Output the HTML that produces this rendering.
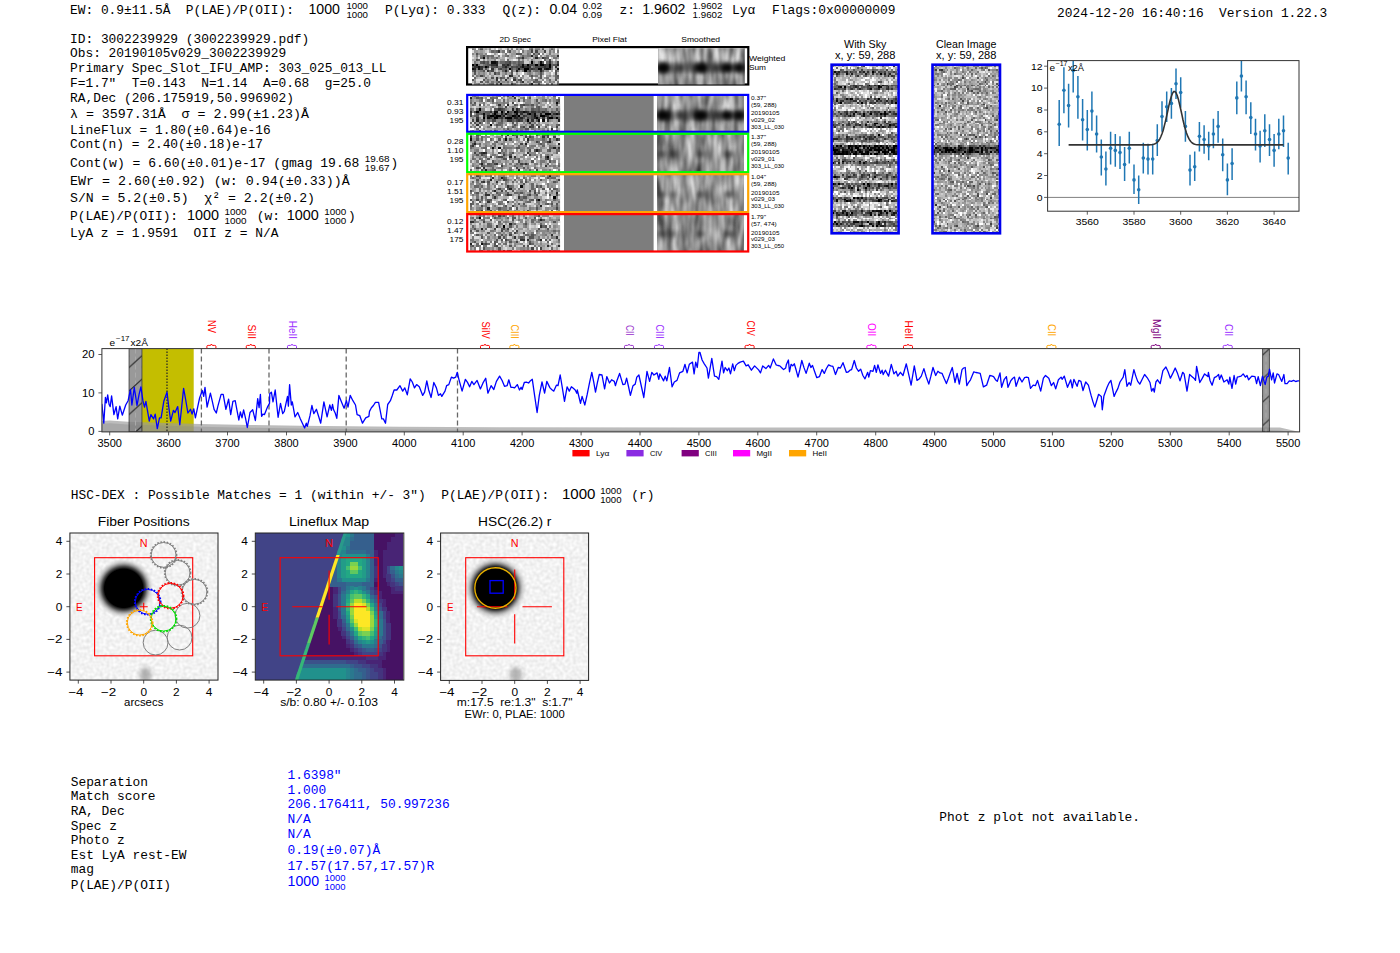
<!DOCTYPE html><html><head><meta charset="utf-8"><style>html,body{margin:0;padding:0;background:#fff;overflow:hidden}svg{display:block} text{white-space:pre}</style></head><body>
<svg width="1400" height="953" viewBox="0 0 1400 953">
<rect width="1400" height="953" fill="#fff"/>
<defs>
<filter id="nz1" x="0" y="0" width="1" height="1" color-interpolation-filters="sRGB"><feTurbulence type="fractalNoise" baseFrequency="0.38" numOctaves="1" seed="3"/><feColorMatrix type="matrix" values="1.75 0 0 0 -0.245 1.75 0 0 0 -0.245 1.75 0 0 0 -0.245 0 0 0 0 1"/></filter>
<filter id="nz2" x="0" y="0" width="1" height="1" color-interpolation-filters="sRGB"><feTurbulence type="fractalNoise" baseFrequency="0.38" numOctaves="1" seed="11"/><feColorMatrix type="matrix" values="1.75 0 0 0 -0.245 1.75 0 0 0 -0.245 1.75 0 0 0 -0.245 0 0 0 0 1"/></filter>
<filter id="nz3" x="0" y="0" width="1" height="1" color-interpolation-filters="sRGB"><feTurbulence type="fractalNoise" baseFrequency="0.38" numOctaves="1" seed="21"/><feColorMatrix type="matrix" values="1.75 0 0 0 -0.265 1.75 0 0 0 -0.265 1.75 0 0 0 -0.265 0 0 0 0 1"/></filter>
<filter id="nz4" x="0" y="0" width="1" height="1" color-interpolation-filters="sRGB"><feTurbulence type="fractalNoise" baseFrequency="0.38" numOctaves="1" seed="37"/><feColorMatrix type="matrix" values="1.75 0 0 0 -0.265 1.75 0 0 0 -0.265 1.75 0 0 0 -0.265 0 0 0 0 1"/></filter>
<filter id="nz5" x="0" y="0" width="1" height="1" color-interpolation-filters="sRGB"><feTurbulence type="fractalNoise" baseFrequency="0.38" numOctaves="1" seed="53"/><feColorMatrix type="matrix" values="1.75 0 0 0 -0.265 1.75 0 0 0 -0.265 1.75 0 0 0 -0.265 0 0 0 0 1"/></filter>
<filter id="sm1" x="0" y="0" width="1" height="1" color-interpolation-filters="sRGB"><feTurbulence type="fractalNoise" baseFrequency="0.13 0.035" numOctaves="2" seed="5"/><feColorMatrix type="matrix" values="0.85 0 0 0 0.155 0.85 0 0 0 0.155 0.85 0 0 0 0.155 0 0 0 0 1"/></filter>
<filter id="sm2" x="0" y="0" width="1" height="1" color-interpolation-filters="sRGB"><feTurbulence type="fractalNoise" baseFrequency="0.13 0.035" numOctaves="2" seed="17"/><feColorMatrix type="matrix" values="0.85 0 0 0 0.155 0.85 0 0 0 0.155 0.85 0 0 0 0.155 0 0 0 0 1"/></filter>
<filter id="sm3" x="0" y="0" width="1" height="1" color-interpolation-filters="sRGB"><feTurbulence type="fractalNoise" baseFrequency="0.13 0.035" numOctaves="2" seed="29"/><feColorMatrix type="matrix" values="0.85 0 0 0 0.145 0.85 0 0 0 0.145 0.85 0 0 0 0.145 0 0 0 0 1"/></filter>
<filter id="sm4" x="0" y="0" width="1" height="1" color-interpolation-filters="sRGB"><feTurbulence type="fractalNoise" baseFrequency="0.13 0.035" numOctaves="2" seed="41"/><feColorMatrix type="matrix" values="0.85 0 0 0 0.145 0.85 0 0 0 0.145 0.85 0 0 0 0.145 0 0 0 0 1"/></filter>
<filter id="sm5" x="0" y="0" width="1" height="1" color-interpolation-filters="sRGB"><feTurbulence type="fractalNoise" baseFrequency="0.13 0.035" numOctaves="2" seed="61"/><feColorMatrix type="matrix" values="0.85 0 0 0 0.145 0.85 0 0 0 0.145 0.85 0 0 0 0.145 0 0 0 0 1"/></filter>
<filter id="sky" x="0" y="0" width="1" height="1" color-interpolation-filters="sRGB"><feTurbulence type="fractalNoise" baseFrequency="0.4" numOctaves="1" seed="7"/><feColorMatrix type="matrix" values="1.9 0 0 0 -0.230 1.9 0 0 0 -0.230 1.9 0 0 0 -0.230 0 0 0 0 1"/></filter>
<filter id="cln" x="0" y="0" width="1" height="1" color-interpolation-filters="sRGB"><feTurbulence type="fractalNoise" baseFrequency="0.5" numOctaves="1" seed="9"/><feColorMatrix type="matrix" values="1.25 0 0 0 0.015 1.25 0 0 0 0.015 1.25 0 0 0 0.015 0 0 0 0 1"/></filter>
<filter id="bg1" x="0" y="0" width="1" height="1" color-interpolation-filters="sRGB"><feTurbulence type="fractalNoise" baseFrequency="0.3" numOctaves="1" seed="13"/><feColorMatrix type="matrix" values="0.16 0 0 0 0.870 0.16 0 0 0 0.870 0.16 0 0 0 0.870 0 0 0 0 1"/></filter>
<filter id="blur2" x="-50%" y="-50%" width="200%" height="200%"><feGaussianBlur stdDeviation="2"/></filter>
<filter id="blur3" x="-50%" y="-50%" width="200%" height="200%"><feGaussianBlur stdDeviation="3"/></filter>
<filter id="soft" x="0" y="0" width="1" height="1"><feGaussianBlur stdDeviation="0.45"/></filter>
<filter id="blur1" x="-50%" y="-50%" width="200%" height="200%"><feGaussianBlur stdDeviation="1.2"/></filter>
<pattern id="hatch" patternUnits="userSpaceOnUse" x="129.1" y="367.5" width="12.8" height="23.5"><path d="M-1 0.92 L13.8 -12.7 M-1 24.42 L13.8 10.8" stroke="#222" stroke-width="1"/></pattern>
<pattern id="hatch2" patternUnits="userSpaceOnUse" x="1262.6" y="355.1" width="6.8" height="23.5"><path d="M-1 0.92 L7.8 -7.2 M-1 24.42 L7.8 16.3" stroke="#222" stroke-width="1"/></pattern>
</defs>
<text x="70.0" y="14.0" font-family="'Liberation Mono', monospace" font-size="13.6" fill="#000" text-anchor="start" textLength="223.9" lengthAdjust="spacingAndGlyphs">EW: 0.9±11.5Å  P(LAE)/P(OII):</text>
<text x="308.5" y="14.0" font-family="'Liberation Sans', sans-serif" font-size="13.99" fill="#000" text-anchor="start" textLength="31.5" lengthAdjust="spacingAndGlyphs" >1000</text>
<text x="346.5" y="8.5" font-family="'Liberation Sans', sans-serif" font-size="9.01" fill="#000" text-anchor="start" textLength="21.5" lengthAdjust="spacingAndGlyphs" >1000</text>
<text x="346.5" y="17.5" font-family="'Liberation Sans', sans-serif" font-size="9.01" fill="#000" text-anchor="start" textLength="21.5" lengthAdjust="spacingAndGlyphs" >1000</text>
<text x="385.0" y="14.0" font-family="'Liberation Mono', monospace" font-size="13.6" fill="#000" text-anchor="start" textLength="100.4" lengthAdjust="spacingAndGlyphs">P(Lyα): 0.333</text>
<text x="502.5" y="14.0" font-family="'Liberation Mono', monospace" font-size="13.6" fill="#000" text-anchor="start" textLength="38.6" lengthAdjust="spacingAndGlyphs">Q(z):</text>
<text x="549.5" y="14.0" font-family="'Liberation Sans', sans-serif" font-size="13.99" fill="#000" text-anchor="start" textLength="27.5" lengthAdjust="spacingAndGlyphs" >0.04</text>
<text x="582.5" y="8.5" font-family="'Liberation Sans', sans-serif" font-size="9.01" fill="#000" text-anchor="start" textLength="19.5" lengthAdjust="spacingAndGlyphs" >0.02</text>
<text x="582.5" y="17.5" font-family="'Liberation Sans', sans-serif" font-size="9.01" fill="#000" text-anchor="start" textLength="19.5" lengthAdjust="spacingAndGlyphs" >0.09</text>
<text x="619.5" y="14.0" font-family="'Liberation Mono', monospace" font-size="13.6" fill="#000" text-anchor="start" textLength="15.4" lengthAdjust="spacingAndGlyphs">z:</text>
<text x="642.2" y="14.0" font-family="'Liberation Sans', sans-serif" font-size="13.99" fill="#000" text-anchor="start" textLength="43.2" lengthAdjust="spacingAndGlyphs" >1.9602</text>
<text x="692.6" y="8.5" font-family="'Liberation Sans', sans-serif" font-size="9.01" fill="#000" text-anchor="start" textLength="29.8" lengthAdjust="spacingAndGlyphs" >1.9602</text>
<text x="692.6" y="17.5" font-family="'Liberation Sans', sans-serif" font-size="9.01" fill="#000" text-anchor="start" textLength="29.8" lengthAdjust="spacingAndGlyphs" >1.9602</text>
<text x="732.0" y="14.0" font-family="'Liberation Mono', monospace" font-size="13.6" fill="#000" text-anchor="start" textLength="23.2" lengthAdjust="spacingAndGlyphs">Lyα</text>
<text x="772.0" y="14.0" font-family="'Liberation Mono', monospace" font-size="13.6" fill="#000" text-anchor="start" textLength="123.5" lengthAdjust="spacingAndGlyphs">Flags:0x00000009</text>
<text x="1057.0" y="16.8" font-family="'Liberation Mono', monospace" font-size="13.6" fill="#000" text-anchor="start" textLength="270.2" lengthAdjust="spacingAndGlyphs">2024-12-20 16:40:16  Version 1.22.3</text>
<text x="70.0" y="42.9" font-family="'Liberation Mono', monospace" font-size="13.6" fill="#000" text-anchor="start" textLength="239.3" lengthAdjust="spacingAndGlyphs">ID: 3002239929 (3002239929.pdf)</text>
<text x="70.0" y="56.8" font-family="'Liberation Mono', monospace" font-size="13.6" fill="#000" text-anchor="start" textLength="216.2" lengthAdjust="spacingAndGlyphs">Obs: 20190105v029_3002239929</text>
<text x="70.0" y="71.8" font-family="'Liberation Mono', monospace" font-size="13.6" fill="#000" text-anchor="start" textLength="316.5" lengthAdjust="spacingAndGlyphs">Primary Spec_Slot_IFU_AMP: 303_025_013_LL</text>
<text x="70.0" y="86.8" font-family="'Liberation Mono', monospace" font-size="13.6" fill="#000" text-anchor="start" textLength="301.1" lengthAdjust="spacingAndGlyphs">F=1.7"  T=0.143  N=1.14  A=0.68  g=25.0</text>
<text x="70.0" y="101.8" font-family="'Liberation Mono', monospace" font-size="13.6" fill="#000" text-anchor="start" textLength="223.9" lengthAdjust="spacingAndGlyphs">RA,Dec (206.175919,50.996902)</text>
<text x="70.0" y="118.0" font-family="'Liberation Mono', monospace" font-size="13.6" fill="#000" text-anchor="start" textLength="239.0" lengthAdjust="spacingAndGlyphs">λ = 3597.31Å  σ = 2.99(±1.23)Å</text>
<text x="70.0" y="133.9" font-family="'Liberation Mono', monospace" font-size="13.6" fill="#000" text-anchor="start" textLength="200.7" lengthAdjust="spacingAndGlyphs">LineFlux = 1.80(±0.64)e-16</text>
<text x="70.0" y="148.4" font-family="'Liberation Mono', monospace" font-size="13.6" fill="#000" text-anchor="start" textLength="193.0" lengthAdjust="spacingAndGlyphs">Cont(n) = 2.40(±0.18)e-17</text>
<text x="70.0" y="166.9" font-family="'Liberation Mono', monospace" font-size="13.6" fill="#000" text-anchor="start" textLength="289.4" lengthAdjust="spacingAndGlyphs">Cont(w) = 6.60(±0.01)e-17 (gmag 19.68</text>
<text x="70.0" y="184.6" font-family="'Liberation Mono', monospace" font-size="13.6" fill="#000" text-anchor="start" textLength="279.7" lengthAdjust="spacingAndGlyphs">EWr = 2.60(±0.92) (w: 0.94(±0.33))Å</text>
<text x="70.0" y="202.4" font-family="'Liberation Mono', monospace" font-size="13.6" fill="#000" text-anchor="start" textLength="245.0" lengthAdjust="spacingAndGlyphs">S/N = 5.2(±0.5)  χ² = 2.2(±0.2)</text>
<text x="70.0" y="220.0" font-family="'Liberation Mono', monospace" font-size="13.6" fill="#000" text-anchor="start" textLength="108.1" lengthAdjust="spacingAndGlyphs">P(LAE)/P(OII):</text>
<text x="70.0" y="236.5" font-family="'Liberation Mono', monospace" font-size="13.6" fill="#000" text-anchor="start" textLength="208.4" lengthAdjust="spacingAndGlyphs">LyA z = 1.9591  OII z = N/A</text>
<text x="364.8" y="161.5" font-family="'Liberation Sans', sans-serif" font-size="9.01" fill="#000" text-anchor="start" textLength="24.8" lengthAdjust="spacingAndGlyphs" >19.68</text>
<text x="364.8" y="170.5" font-family="'Liberation Sans', sans-serif" font-size="9.01" fill="#000" text-anchor="start" textLength="24.8" lengthAdjust="spacingAndGlyphs" >19.67</text>
<text x="390.5" y="166.9" font-family="'Liberation Mono', monospace" font-size="13.6" fill="#000" text-anchor="start" textLength="7.7" lengthAdjust="spacingAndGlyphs">)</text>
<text x="187.0" y="220.0" font-family="'Liberation Sans', sans-serif" font-size="13.99" fill="#000" text-anchor="start" textLength="32.0" lengthAdjust="spacingAndGlyphs" >1000</text>
<text x="224.6" y="215.0" font-family="'Liberation Sans', sans-serif" font-size="9.01" fill="#000" text-anchor="start" textLength="22.0" lengthAdjust="spacingAndGlyphs" >1000</text>
<text x="224.6" y="224.0" font-family="'Liberation Sans', sans-serif" font-size="9.01" fill="#000" text-anchor="start" textLength="22.0" lengthAdjust="spacingAndGlyphs" >1000</text>
<text x="256.8" y="220.0" font-family="'Liberation Mono', monospace" font-size="13.6" fill="#000" text-anchor="start" textLength="23.2" lengthAdjust="spacingAndGlyphs">(w:</text>
<text x="286.8" y="220.0" font-family="'Liberation Sans', sans-serif" font-size="13.99" fill="#000" text-anchor="start" textLength="32.0" lengthAdjust="spacingAndGlyphs" >1000</text>
<text x="324.3" y="215.0" font-family="'Liberation Sans', sans-serif" font-size="9.01" fill="#000" text-anchor="start" textLength="22.0" lengthAdjust="spacingAndGlyphs" >1000</text>
<text x="324.3" y="224.0" font-family="'Liberation Sans', sans-serif" font-size="9.01" fill="#000" text-anchor="start" textLength="22.0" lengthAdjust="spacingAndGlyphs" >1000</text>
<text x="348.0" y="220.0" font-family="'Liberation Mono', monospace" font-size="13.6" fill="#000" text-anchor="start" textLength="7.7" lengthAdjust="spacingAndGlyphs">)</text>
<text x="515.2" y="42.2" font-family="'Liberation Sans', sans-serif" font-size="8.06" fill="#000" text-anchor="middle" textLength="31.6" lengthAdjust="spacingAndGlyphs" >2D Spec</text>
<text x="609.5" y="42.2" font-family="'Liberation Sans', sans-serif" font-size="8.06" fill="#000" text-anchor="middle" textLength="34.5" lengthAdjust="spacingAndGlyphs" >Pixel Flat</text>
<text x="700.7" y="42.2" font-family="'Liberation Sans', sans-serif" font-size="8.06" fill="#000" text-anchor="middle" textLength="38.8" lengthAdjust="spacingAndGlyphs" >Smoothed</text>
<rect x="467.1" y="47.1" width="281.2" height="37.4" fill="#fff" stroke="#000" stroke-width="2.2"/>
<svg x="471.5" y="48.2" width="87.5" height="36.2" overflow="hidden"><g filter="url(#soft)"><g transform="scale(2.2)" shape-rendering="crispEdges">
<path fill="#000000" d="M27 6h1v1h-1zM0 7h1v1h-1zM2 7h1v1h-1zM25 7h1v1h-1zM29 7h1v1h-1zM31 7h1v1h-1zM32 7h1v1h-1zM35 7h1v1h-1zM6 8h1v1h-1zM35 8h1v1h-1zM17 9h1v1h-1zM24 9h1v1h-1zM25 9h1v1h-1zM30 9h1v1h-1zM24 10h1v1h-1z"/>
<path fill="#111111" d="M5 4h1v1h-1zM9 6h1v1h-1zM10 6h1v1h-1zM31 6h1v1h-1zM23 7h1v1h-1zM3 8h1v1h-1zM23 8h1v1h-1zM0 9h1v1h-1zM3 9h1v1h-1zM21 9h1v1h-1zM31 9h1v1h-1zM34 9h1v1h-1zM39 9h1v1h-1z"/>
<path fill="#222222" d="M27 3h1v1h-1zM29 4h1v1h-1zM11 6h1v1h-1zM11 7h1v1h-1zM16 7h1v1h-1zM39 7h1v1h-1zM15 8h1v1h-1zM25 8h1v1h-1zM1 9h1v1h-1zM33 9h1v1h-1zM35 9h1v1h-1zM15 10h1v1h-1zM20 10h1v1h-1zM31 10h1v1h-1zM17 12h1v1h-1zM13 16h1v1h-1zM27 16h1v1h-1z"/>
<path fill="#333333" d="M12 1h1v1h-1zM39 3h1v1h-1zM23 4h1v1h-1zM32 4h1v1h-1zM35 6h1v1h-1zM9 7h1v1h-1zM10 7h1v1h-1zM14 7h1v1h-1zM33 7h1v1h-1zM1 8h1v1h-1zM2 8h1v1h-1zM4 8h1v1h-1zM7 8h1v1h-1zM22 8h1v1h-1zM24 8h1v1h-1zM26 8h1v1h-1zM33 8h1v1h-1zM38 8h1v1h-1zM4 9h1v1h-1zM9 9h1v1h-1zM27 9h1v1h-1zM7 10h1v1h-1zM18 12h1v1h-1zM11 13h1v1h-1zM11 14h1v1h-1zM15 14h1v1h-1zM19 14h1v1h-1zM23 15h1v1h-1z"/>
<path fill="#444444" d="M27 1h1v1h-1zM29 1h1v1h-1zM33 1h1v1h-1zM35 5h1v1h-1zM5 6h1v1h-1zM17 6h1v1h-1zM39 6h1v1h-1zM1 7h1v1h-1zM15 7h1v1h-1zM17 7h1v1h-1zM21 7h1v1h-1zM26 7h1v1h-1zM27 7h1v1h-1zM34 7h1v1h-1zM11 8h1v1h-1zM14 8h1v1h-1zM18 8h1v1h-1zM20 8h1v1h-1zM29 8h1v1h-1zM30 8h1v1h-1zM31 8h1v1h-1zM32 8h1v1h-1zM34 8h1v1h-1zM13 9h1v1h-1zM26 9h1v1h-1zM28 9h1v1h-1zM1 10h1v1h-1zM9 10h1v1h-1zM26 10h1v1h-1zM10 11h1v1h-1zM4 12h1v1h-1zM22 14h1v1h-1zM18 16h1v1h-1z"/>
<path fill="#555555" d="M4 0h1v1h-1zM27 0h1v1h-1zM32 0h1v1h-1zM17 1h1v1h-1zM2 2h1v1h-1zM20 2h1v1h-1zM21 2h1v1h-1zM22 2h1v1h-1zM28 2h1v1h-1zM30 2h1v1h-1zM5 3h1v1h-1zM21 4h1v1h-1zM33 4h1v1h-1zM2 5h1v1h-1zM4 6h1v1h-1zM7 6h1v1h-1zM15 6h1v1h-1zM16 6h1v1h-1zM21 6h1v1h-1zM32 6h1v1h-1zM7 7h1v1h-1zM8 7h1v1h-1zM22 7h1v1h-1zM24 7h1v1h-1zM28 7h1v1h-1zM30 7h1v1h-1zM37 7h1v1h-1zM38 7h1v1h-1zM0 8h1v1h-1zM5 8h1v1h-1zM9 8h1v1h-1zM10 8h1v1h-1zM16 8h1v1h-1zM19 8h1v1h-1zM21 8h1v1h-1zM6 9h1v1h-1zM12 9h1v1h-1zM15 9h1v1h-1zM18 9h1v1h-1zM20 9h1v1h-1zM22 9h1v1h-1zM23 9h1v1h-1zM29 9h1v1h-1zM5 10h1v1h-1zM18 10h1v1h-1zM32 10h1v1h-1zM38 10h1v1h-1zM1 11h1v1h-1zM18 11h1v1h-1zM31 11h1v1h-1zM38 11h1v1h-1zM27 12h1v1h-1zM31 12h1v1h-1zM39 12h1v1h-1zM9 13h1v1h-1zM13 13h1v1h-1zM16 13h1v1h-1zM19 13h1v1h-1zM31 13h1v1h-1zM0 14h1v1h-1zM5 14h1v1h-1zM21 14h1v1h-1zM29 14h1v1h-1zM38 14h1v1h-1zM4 15h1v1h-1zM12 15h1v1h-1zM28 15h1v1h-1zM11 16h1v1h-1zM30 16h1v1h-1z"/>
<path fill="#666666" d="M36 0h1v1h-1zM9 1h1v1h-1zM11 1h1v1h-1zM7 3h1v1h-1zM9 3h1v1h-1zM16 3h1v1h-1zM23 3h1v1h-1zM29 3h1v1h-1zM4 4h1v1h-1zM7 4h1v1h-1zM11 4h1v1h-1zM22 4h1v1h-1zM34 4h1v1h-1zM3 5h1v1h-1zM16 5h1v1h-1zM33 5h1v1h-1zM6 6h1v1h-1zM13 6h1v1h-1zM14 6h1v1h-1zM19 6h1v1h-1zM22 6h1v1h-1zM23 6h1v1h-1zM34 6h1v1h-1zM6 7h1v1h-1zM20 7h1v1h-1zM36 7h1v1h-1zM28 8h1v1h-1zM36 8h1v1h-1zM14 9h1v1h-1zM0 10h1v1h-1zM8 10h1v1h-1zM14 10h1v1h-1zM25 10h1v1h-1zM29 10h1v1h-1zM12 11h1v1h-1zM38 12h1v1h-1zM1 13h1v1h-1zM6 13h1v1h-1zM14 13h1v1h-1zM38 13h1v1h-1zM39 13h1v1h-1zM35 14h1v1h-1zM7 15h1v1h-1zM22 15h1v1h-1zM29 15h1v1h-1zM30 15h1v1h-1zM9 16h1v1h-1zM26 16h1v1h-1zM36 16h1v1h-1zM39 16h1v1h-1z"/>
<path fill="#777777" d="M0 0h1v1h-1zM16 0h1v1h-1zM18 0h1v1h-1zM20 0h1v1h-1zM22 0h1v1h-1zM26 0h1v1h-1zM29 0h1v1h-1zM30 0h1v1h-1zM10 1h1v1h-1zM14 1h1v1h-1zM16 1h1v1h-1zM23 1h1v1h-1zM35 1h1v1h-1zM39 1h1v1h-1zM15 2h1v1h-1zM25 2h1v1h-1zM35 2h1v1h-1zM2 3h1v1h-1zM4 3h1v1h-1zM8 3h1v1h-1zM12 3h1v1h-1zM15 3h1v1h-1zM25 3h1v1h-1zM26 3h1v1h-1zM34 3h1v1h-1zM9 4h1v1h-1zM30 4h1v1h-1zM37 4h1v1h-1zM38 4h1v1h-1zM21 5h1v1h-1zM27 5h1v1h-1zM1 6h1v1h-1zM18 6h1v1h-1zM20 6h1v1h-1zM30 6h1v1h-1zM36 6h1v1h-1zM3 7h1v1h-1zM5 7h1v1h-1zM19 7h1v1h-1zM12 8h1v1h-1zM13 8h1v1h-1zM17 8h1v1h-1zM2 9h1v1h-1zM19 9h1v1h-1zM32 9h1v1h-1zM36 9h1v1h-1zM4 10h1v1h-1zM16 10h1v1h-1zM21 10h1v1h-1zM23 10h1v1h-1zM28 10h1v1h-1zM30 10h1v1h-1zM39 10h1v1h-1zM11 11h1v1h-1zM15 11h1v1h-1zM26 11h1v1h-1zM0 12h1v1h-1zM2 12h1v1h-1zM5 12h1v1h-1zM21 12h1v1h-1zM26 12h1v1h-1zM29 12h1v1h-1zM27 13h1v1h-1zM34 13h1v1h-1zM7 14h1v1h-1zM13 14h1v1h-1zM6 15h1v1h-1zM9 15h1v1h-1zM11 15h1v1h-1zM16 15h1v1h-1zM20 15h1v1h-1zM31 15h1v1h-1zM35 15h1v1h-1zM39 15h1v1h-1zM3 16h1v1h-1zM8 16h1v1h-1zM19 16h1v1h-1z"/>
<path fill="#888888" d="M1 0h1v1h-1zM3 0h1v1h-1zM8 0h1v1h-1zM37 0h1v1h-1zM25 1h1v1h-1zM26 1h1v1h-1zM37 1h1v1h-1zM0 2h1v1h-1zM3 2h1v1h-1zM4 2h1v1h-1zM6 2h1v1h-1zM26 2h1v1h-1zM29 2h1v1h-1zM32 2h1v1h-1zM6 3h1v1h-1zM24 3h1v1h-1zM31 3h1v1h-1zM36 3h1v1h-1zM37 3h1v1h-1zM10 4h1v1h-1zM20 4h1v1h-1zM24 4h1v1h-1zM28 4h1v1h-1zM10 5h1v1h-1zM23 5h1v1h-1zM12 6h1v1h-1zM28 6h1v1h-1zM38 6h1v1h-1zM27 8h1v1h-1zM7 9h1v1h-1zM16 9h1v1h-1zM3 10h1v1h-1zM34 10h1v1h-1zM3 11h1v1h-1zM5 11h1v1h-1zM8 11h1v1h-1zM25 11h1v1h-1zM30 11h1v1h-1zM32 11h1v1h-1zM3 12h1v1h-1zM14 12h1v1h-1zM23 12h1v1h-1zM28 12h1v1h-1zM35 12h1v1h-1zM22 13h1v1h-1zM30 13h1v1h-1zM20 14h1v1h-1zM27 14h1v1h-1zM28 14h1v1h-1zM32 14h1v1h-1zM1 15h1v1h-1zM14 15h1v1h-1zM18 15h1v1h-1zM25 15h1v1h-1zM37 15h1v1h-1zM1 16h1v1h-1zM2 16h1v1h-1zM5 16h1v1h-1zM34 16h1v1h-1z"/>
<path fill="#999999" d="M6 0h1v1h-1zM35 0h1v1h-1zM1 1h1v1h-1zM2 1h1v1h-1zM4 1h1v1h-1zM8 1h1v1h-1zM13 1h1v1h-1zM19 1h1v1h-1zM10 2h1v1h-1zM18 2h1v1h-1zM19 2h1v1h-1zM14 3h1v1h-1zM18 3h1v1h-1zM22 3h1v1h-1zM28 3h1v1h-1zM38 3h1v1h-1zM2 4h1v1h-1zM8 4h1v1h-1zM12 4h1v1h-1zM25 4h1v1h-1zM31 4h1v1h-1zM39 4h1v1h-1zM5 5h1v1h-1zM7 5h1v1h-1zM13 5h1v1h-1zM14 5h1v1h-1zM34 5h1v1h-1zM2 6h1v1h-1zM8 6h1v1h-1zM4 7h1v1h-1zM18 7h1v1h-1zM8 8h1v1h-1zM5 9h1v1h-1zM10 9h1v1h-1zM38 9h1v1h-1zM2 10h1v1h-1zM12 10h1v1h-1zM19 10h1v1h-1zM27 10h1v1h-1zM33 10h1v1h-1zM4 11h1v1h-1zM14 11h1v1h-1zM17 11h1v1h-1zM20 11h1v1h-1zM27 11h1v1h-1zM29 11h1v1h-1zM9 12h1v1h-1zM34 12h1v1h-1zM37 12h1v1h-1zM12 13h1v1h-1zM20 13h1v1h-1zM23 13h1v1h-1zM33 13h1v1h-1zM1 14h1v1h-1zM6 14h1v1h-1zM8 14h1v1h-1zM24 14h1v1h-1zM26 14h1v1h-1zM34 14h1v1h-1zM10 15h1v1h-1zM13 15h1v1h-1zM15 15h1v1h-1zM26 15h1v1h-1zM33 15h1v1h-1zM36 15h1v1h-1zM7 16h1v1h-1zM16 16h1v1h-1zM22 16h1v1h-1zM24 16h1v1h-1z"/>
<path fill="#aaaaaa" d="M5 0h1v1h-1zM13 0h1v1h-1zM21 0h1v1h-1zM23 0h1v1h-1zM39 0h1v1h-1zM3 1h1v1h-1zM5 1h1v1h-1zM18 1h1v1h-1zM21 1h1v1h-1zM24 1h1v1h-1zM30 1h1v1h-1zM31 1h1v1h-1zM32 1h1v1h-1zM36 1h1v1h-1zM1 2h1v1h-1zM5 2h1v1h-1zM23 2h1v1h-1zM24 2h1v1h-1zM37 2h1v1h-1zM39 2h1v1h-1zM17 3h1v1h-1zM19 3h1v1h-1zM33 3h1v1h-1zM35 3h1v1h-1zM6 4h1v1h-1zM14 4h1v1h-1zM17 4h1v1h-1zM18 4h1v1h-1zM26 4h1v1h-1zM0 5h1v1h-1zM1 5h1v1h-1zM8 5h1v1h-1zM9 5h1v1h-1zM25 5h1v1h-1zM28 5h1v1h-1zM38 5h1v1h-1zM3 6h1v1h-1zM26 6h1v1h-1zM29 6h1v1h-1zM37 6h1v1h-1zM12 7h1v1h-1zM13 7h1v1h-1zM39 8h1v1h-1zM10 10h1v1h-1zM13 10h1v1h-1zM22 10h1v1h-1zM36 10h1v1h-1zM0 11h1v1h-1zM2 11h1v1h-1zM6 11h1v1h-1zM16 11h1v1h-1zM24 11h1v1h-1zM35 11h1v1h-1zM7 12h1v1h-1zM19 12h1v1h-1zM2 13h1v1h-1zM7 13h1v1h-1zM17 13h1v1h-1zM9 14h1v1h-1zM10 14h1v1h-1zM16 14h1v1h-1zM17 14h1v1h-1zM25 14h1v1h-1zM8 15h1v1h-1zM17 15h1v1h-1zM21 15h1v1h-1zM34 15h1v1h-1zM12 16h1v1h-1zM14 16h1v1h-1zM15 16h1v1h-1zM20 16h1v1h-1zM23 16h1v1h-1zM29 16h1v1h-1zM31 16h1v1h-1z"/>
<path fill="#bbbbbb" d="M7 0h1v1h-1zM10 0h1v1h-1zM12 0h1v1h-1zM28 0h1v1h-1zM31 0h1v1h-1zM28 1h1v1h-1zM11 2h1v1h-1zM14 2h1v1h-1zM17 2h1v1h-1zM34 2h1v1h-1zM36 2h1v1h-1zM38 2h1v1h-1zM0 3h1v1h-1zM1 3h1v1h-1zM3 3h1v1h-1zM1 4h1v1h-1zM13 4h1v1h-1zM16 4h1v1h-1zM19 4h1v1h-1zM17 5h1v1h-1zM22 5h1v1h-1zM29 5h1v1h-1zM30 5h1v1h-1zM36 5h1v1h-1zM11 9h1v1h-1zM6 10h1v1h-1zM9 11h1v1h-1zM13 11h1v1h-1zM28 11h1v1h-1zM34 11h1v1h-1zM6 12h1v1h-1zM11 12h1v1h-1zM12 12h1v1h-1zM20 12h1v1h-1zM30 12h1v1h-1zM36 12h1v1h-1zM3 13h1v1h-1zM5 13h1v1h-1zM8 13h1v1h-1zM10 13h1v1h-1zM15 13h1v1h-1zM25 13h1v1h-1zM29 13h1v1h-1zM14 14h1v1h-1zM30 14h1v1h-1zM31 14h1v1h-1zM36 14h1v1h-1zM37 14h1v1h-1zM39 14h1v1h-1zM0 15h1v1h-1zM5 15h1v1h-1zM24 15h1v1h-1zM4 16h1v1h-1zM6 16h1v1h-1zM10 16h1v1h-1zM17 16h1v1h-1zM25 16h1v1h-1zM37 16h1v1h-1z"/>
<path fill="#cccccc" d="M15 0h1v1h-1zM17 0h1v1h-1zM33 0h1v1h-1zM34 0h1v1h-1zM6 1h1v1h-1zM20 1h1v1h-1zM34 1h1v1h-1zM10 3h1v1h-1zM11 3h1v1h-1zM21 3h1v1h-1zM32 3h1v1h-1zM27 4h1v1h-1zM36 4h1v1h-1zM6 5h1v1h-1zM12 5h1v1h-1zM18 5h1v1h-1zM24 5h1v1h-1zM26 5h1v1h-1zM31 5h1v1h-1zM0 6h1v1h-1zM24 6h1v1h-1zM25 6h1v1h-1zM37 8h1v1h-1zM37 9h1v1h-1zM11 10h1v1h-1zM7 11h1v1h-1zM21 11h1v1h-1zM37 11h1v1h-1zM39 11h1v1h-1zM1 12h1v1h-1zM8 12h1v1h-1zM10 12h1v1h-1zM13 12h1v1h-1zM16 12h1v1h-1zM24 12h1v1h-1zM32 12h1v1h-1zM4 13h1v1h-1zM18 13h1v1h-1zM24 13h1v1h-1zM32 13h1v1h-1zM35 13h1v1h-1zM36 13h1v1h-1zM37 13h1v1h-1zM2 15h1v1h-1zM3 15h1v1h-1zM19 15h1v1h-1zM27 15h1v1h-1zM0 16h1v1h-1zM21 16h1v1h-1zM28 16h1v1h-1zM38 16h1v1h-1z"/>
<path fill="#dddddd" d="M9 0h1v1h-1zM14 0h1v1h-1zM19 0h1v1h-1zM24 0h1v1h-1zM25 0h1v1h-1zM0 1h1v1h-1zM7 1h1v1h-1zM9 2h1v1h-1zM16 2h1v1h-1zM27 2h1v1h-1zM33 2h1v1h-1zM13 3h1v1h-1zM0 4h1v1h-1zM3 4h1v1h-1zM4 5h1v1h-1zM11 5h1v1h-1zM20 5h1v1h-1zM39 5h1v1h-1zM8 9h1v1h-1zM17 10h1v1h-1zM35 10h1v1h-1zM19 11h1v1h-1zM22 11h1v1h-1zM33 11h1v1h-1zM25 12h1v1h-1zM21 13h1v1h-1zM26 13h1v1h-1zM2 14h1v1h-1zM3 14h1v1h-1zM4 14h1v1h-1zM12 14h1v1h-1zM23 14h1v1h-1zM38 15h1v1h-1zM32 16h1v1h-1zM35 16h1v1h-1z"/>
<path fill="#eeeeee" d="M38 0h1v1h-1zM13 2h1v1h-1zM15 4h1v1h-1zM15 5h1v1h-1zM19 5h1v1h-1zM37 5h1v1h-1zM33 6h1v1h-1zM36 11h1v1h-1zM15 12h1v1h-1zM33 14h1v1h-1z"/>
<path fill="#ffffff" d="M2 0h1v1h-1zM11 0h1v1h-1zM15 1h1v1h-1zM22 1h1v1h-1zM38 1h1v1h-1zM7 2h1v1h-1zM8 2h1v1h-1zM12 2h1v1h-1zM31 2h1v1h-1zM20 3h1v1h-1zM30 3h1v1h-1zM35 4h1v1h-1zM32 5h1v1h-1zM37 10h1v1h-1zM23 11h1v1h-1zM22 12h1v1h-1zM33 12h1v1h-1zM0 13h1v1h-1zM28 13h1v1h-1zM18 14h1v1h-1zM32 15h1v1h-1zM33 16h1v1h-1z"/>
</g></g></svg>
<svg x="658.0" y="48.2" width="86.8" height="36.2" overflow="hidden">
<rect width="86.8" height="36.2" fill="#fff" filter="url(#sm1)"/>
<rect y="14.5" width="86.8" height="10" fill="#000" opacity="0.42" filter="url(#blur2)"/>
<ellipse cx="5.0" cy="19.5" rx="7.0" ry="5.2" fill="#000" opacity="0.95" filter="url(#blur2)"/>
<ellipse cx="22.0" cy="19.5" rx="4.0" ry="3.0" fill="#000" opacity="0.45" filter="url(#blur2)"/>
<ellipse cx="43.0" cy="19.5" rx="7.0" ry="5.2" fill="#000" opacity="0.95" filter="url(#blur2)"/>
<ellipse cx="59.0" cy="19.5" rx="4.0" ry="3.0" fill="#000" opacity="0.45" filter="url(#blur2)"/>
<ellipse cx="69.0" cy="19.5" rx="6.0" ry="4.5" fill="#000" opacity="0.95" filter="url(#blur2)"/>
<ellipse cx="81.0" cy="19.5" rx="6.0" ry="4.5" fill="#000" opacity="0.9" filter="url(#blur2)"/>
</svg>
<text x="749.0" y="61.1" font-family="'Liberation Sans', sans-serif" font-size="8.06" fill="#000" text-anchor="start" textLength="36.4" lengthAdjust="spacingAndGlyphs" >Weighted</text>
<text x="749.0" y="70.0" font-family="'Liberation Sans', sans-serif" font-size="8.06" fill="#000" text-anchor="start" textLength="17.0" lengthAdjust="spacingAndGlyphs" >Sum</text>
<rect x="466.2" y="93.9" width="283" height="38.9" fill="#fff"/>
<svg x="469.7" y="95.1" width="90.4" height="36.5" overflow="hidden"><g filter="url(#soft)"><g transform="scale(2.2)" shape-rendering="crispEdges">
<path fill="#000000" d="M4 6h1v1h-1zM41 6h1v1h-1zM3 7h1v1h-1zM14 7h1v1h-1zM17 7h1v1h-1zM20 7h1v1h-1zM11 8h1v1h-1zM27 8h1v1h-1zM34 8h1v1h-1zM35 8h1v1h-1zM36 8h1v1h-1zM41 8h1v1h-1zM9 9h1v1h-1zM10 9h1v1h-1zM12 9h1v1h-1zM13 9h1v1h-1zM19 9h1v1h-1zM22 9h1v1h-1zM32 9h1v1h-1zM33 9h1v1h-1zM6 10h1v1h-1zM11 10h1v1h-1zM12 10h1v1h-1zM17 10h1v1h-1zM18 10h1v1h-1zM30 10h1v1h-1zM36 10h1v1h-1zM37 10h1v1h-1zM39 10h1v1h-1zM26 11h1v1h-1zM9 13h1v1h-1z"/>
<path fill="#111111" d="M39 3h1v1h-1zM11 7h1v1h-1zM12 7h1v1h-1zM21 7h1v1h-1zM24 7h1v1h-1zM6 8h1v1h-1zM16 8h1v1h-1zM21 8h1v1h-1zM29 8h1v1h-1zM39 8h1v1h-1zM20 9h1v1h-1zM29 9h1v1h-1zM8 10h1v1h-1zM16 10h1v1h-1zM31 11h1v1h-1zM33 11h1v1h-1z"/>
<path fill="#222222" d="M19 0h1v1h-1zM0 1h1v1h-1zM17 4h1v1h-1zM19 6h1v1h-1zM21 6h1v1h-1zM25 7h1v1h-1zM14 8h1v1h-1zM26 8h1v1h-1zM32 8h1v1h-1zM6 9h1v1h-1zM8 9h1v1h-1zM11 9h1v1h-1zM15 9h1v1h-1zM20 10h1v1h-1zM21 10h1v1h-1zM23 10h1v1h-1zM29 10h1v1h-1zM35 10h1v1h-1zM41 10h1v1h-1zM3 11h1v1h-1zM40 11h1v1h-1z"/>
<path fill="#333333" d="M20 1h1v1h-1zM13 4h1v1h-1zM13 6h1v1h-1zM0 7h1v1h-1zM9 7h1v1h-1zM23 7h1v1h-1zM26 7h1v1h-1zM28 7h1v1h-1zM29 7h1v1h-1zM33 7h1v1h-1zM23 8h1v1h-1zM38 8h1v1h-1zM40 8h1v1h-1zM21 9h1v1h-1zM24 9h1v1h-1zM34 9h1v1h-1zM35 9h1v1h-1zM3 10h1v1h-1zM9 10h1v1h-1zM14 10h1v1h-1zM33 10h1v1h-1zM17 11h1v1h-1zM18 11h1v1h-1zM22 11h1v1h-1zM28 11h1v1h-1zM35 11h1v1h-1zM27 12h1v1h-1zM3 13h1v1h-1zM27 14h1v1h-1zM31 14h1v1h-1zM37 15h1v1h-1z"/>
<path fill="#444444" d="M22 2h1v1h-1zM19 3h1v1h-1zM4 4h1v1h-1zM24 4h1v1h-1zM16 5h1v1h-1zM14 6h1v1h-1zM22 6h1v1h-1zM2 7h1v1h-1zM22 7h1v1h-1zM31 7h1v1h-1zM0 8h1v1h-1zM10 8h1v1h-1zM12 8h1v1h-1zM17 8h1v1h-1zM20 8h1v1h-1zM28 8h1v1h-1zM0 9h1v1h-1zM14 9h1v1h-1zM18 9h1v1h-1zM25 9h1v1h-1zM28 9h1v1h-1zM30 9h1v1h-1zM37 9h1v1h-1zM13 10h1v1h-1zM22 10h1v1h-1zM26 10h1v1h-1zM28 10h1v1h-1zM31 10h1v1h-1zM1 11h1v1h-1zM6 11h1v1h-1zM10 11h1v1h-1zM11 11h1v1h-1zM21 11h1v1h-1zM23 11h1v1h-1zM4 12h1v1h-1zM28 13h1v1h-1zM24 14h1v1h-1zM28 14h1v1h-1zM39 14h1v1h-1zM4 16h1v1h-1zM39 16h1v1h-1z"/>
<path fill="#555555" d="M17 0h1v1h-1zM3 1h1v1h-1zM5 1h1v1h-1zM27 1h1v1h-1zM10 2h1v1h-1zM30 2h1v1h-1zM40 2h1v1h-1zM2 3h1v1h-1zM20 4h1v1h-1zM23 4h1v1h-1zM28 4h1v1h-1zM39 4h1v1h-1zM31 5h1v1h-1zM41 5h1v1h-1zM11 6h1v1h-1zM12 6h1v1h-1zM15 6h1v1h-1zM28 6h1v1h-1zM31 6h1v1h-1zM39 6h1v1h-1zM7 7h1v1h-1zM8 7h1v1h-1zM15 7h1v1h-1zM18 7h1v1h-1zM30 7h1v1h-1zM32 7h1v1h-1zM34 7h1v1h-1zM35 7h1v1h-1zM37 7h1v1h-1zM40 7h1v1h-1zM3 8h1v1h-1zM5 8h1v1h-1zM8 8h1v1h-1zM15 8h1v1h-1zM18 8h1v1h-1zM3 9h1v1h-1zM17 9h1v1h-1zM10 10h1v1h-1zM19 10h1v1h-1zM24 10h1v1h-1zM38 10h1v1h-1zM40 10h1v1h-1zM14 11h1v1h-1zM19 11h1v1h-1zM30 11h1v1h-1zM2 12h1v1h-1zM19 12h1v1h-1zM12 13h1v1h-1zM20 13h1v1h-1zM40 13h1v1h-1zM19 14h1v1h-1zM17 15h1v1h-1zM25 15h1v1h-1zM26 15h1v1h-1zM11 16h1v1h-1zM21 16h1v1h-1zM35 16h1v1h-1zM37 16h1v1h-1z"/>
<path fill="#666666" d="M2 0h1v1h-1zM38 0h1v1h-1zM41 0h1v1h-1zM4 1h1v1h-1zM9 1h1v1h-1zM10 1h1v1h-1zM12 1h1v1h-1zM24 1h1v1h-1zM5 2h1v1h-1zM8 2h1v1h-1zM15 2h1v1h-1zM24 2h1v1h-1zM34 2h1v1h-1zM39 2h1v1h-1zM0 3h1v1h-1zM31 3h1v1h-1zM1 4h1v1h-1zM21 4h1v1h-1zM25 4h1v1h-1zM26 4h1v1h-1zM23 5h1v1h-1zM30 5h1v1h-1zM36 5h1v1h-1zM0 6h1v1h-1zM3 6h1v1h-1zM29 6h1v1h-1zM30 6h1v1h-1zM34 6h1v1h-1zM4 7h1v1h-1zM6 7h1v1h-1zM19 7h1v1h-1zM27 7h1v1h-1zM38 7h1v1h-1zM4 8h1v1h-1zM7 8h1v1h-1zM37 8h1v1h-1zM2 9h1v1h-1zM26 9h1v1h-1zM27 9h1v1h-1zM38 9h1v1h-1zM41 9h1v1h-1zM15 10h1v1h-1zM27 10h1v1h-1zM8 11h1v1h-1zM20 11h1v1h-1zM25 11h1v1h-1zM41 11h1v1h-1zM0 12h1v1h-1zM13 12h1v1h-1zM14 12h1v1h-1zM13 13h1v1h-1zM30 13h1v1h-1zM39 13h1v1h-1zM4 14h1v1h-1zM23 14h1v1h-1zM34 14h1v1h-1zM3 15h1v1h-1z"/>
<path fill="#777777" d="M1 0h1v1h-1zM12 0h1v1h-1zM13 0h1v1h-1zM15 0h1v1h-1zM11 1h1v1h-1zM40 1h1v1h-1zM0 2h1v1h-1zM4 2h1v1h-1zM33 2h1v1h-1zM36 2h1v1h-1zM6 3h1v1h-1zM10 3h1v1h-1zM12 3h1v1h-1zM15 3h1v1h-1zM17 3h1v1h-1zM40 3h1v1h-1zM2 4h1v1h-1zM6 4h1v1h-1zM27 4h1v1h-1zM30 4h1v1h-1zM41 4h1v1h-1zM10 5h1v1h-1zM13 5h1v1h-1zM19 5h1v1h-1zM28 5h1v1h-1zM16 6h1v1h-1zM25 6h1v1h-1zM32 6h1v1h-1zM33 6h1v1h-1zM5 7h1v1h-1zM10 7h1v1h-1zM13 8h1v1h-1zM19 8h1v1h-1zM24 8h1v1h-1zM25 8h1v1h-1zM30 8h1v1h-1zM31 8h1v1h-1zM33 8h1v1h-1zM7 9h1v1h-1zM23 9h1v1h-1zM31 9h1v1h-1zM36 9h1v1h-1zM39 9h1v1h-1zM40 9h1v1h-1zM5 11h1v1h-1zM9 11h1v1h-1zM16 11h1v1h-1zM5 12h1v1h-1zM8 12h1v1h-1zM10 12h1v1h-1zM21 12h1v1h-1zM26 12h1v1h-1zM29 12h1v1h-1zM14 13h1v1h-1zM21 13h1v1h-1zM35 13h1v1h-1zM0 14h1v1h-1zM2 14h1v1h-1zM8 14h1v1h-1zM12 14h1v1h-1zM14 14h1v1h-1zM20 14h1v1h-1zM15 15h1v1h-1zM23 15h1v1h-1zM28 15h1v1h-1zM31 15h1v1h-1zM1 16h1v1h-1zM9 16h1v1h-1zM12 16h1v1h-1zM16 16h1v1h-1zM18 16h1v1h-1zM23 16h1v1h-1zM33 16h1v1h-1zM38 16h1v1h-1z"/>
<path fill="#888888" d="M3 0h1v1h-1zM10 0h1v1h-1zM22 0h1v1h-1zM27 0h1v1h-1zM33 0h1v1h-1zM2 1h1v1h-1zM7 1h1v1h-1zM14 1h1v1h-1zM18 1h1v1h-1zM23 1h1v1h-1zM26 1h1v1h-1zM33 1h1v1h-1zM38 1h1v1h-1zM9 2h1v1h-1zM17 2h1v1h-1zM26 2h1v1h-1zM27 2h1v1h-1zM38 2h1v1h-1zM13 3h1v1h-1zM14 3h1v1h-1zM16 3h1v1h-1zM25 3h1v1h-1zM26 3h1v1h-1zM27 3h1v1h-1zM30 3h1v1h-1zM15 4h1v1h-1zM14 5h1v1h-1zM20 5h1v1h-1zM32 5h1v1h-1zM1 6h1v1h-1zM5 6h1v1h-1zM6 6h1v1h-1zM9 6h1v1h-1zM20 6h1v1h-1zM23 6h1v1h-1zM26 6h1v1h-1zM37 6h1v1h-1zM40 6h1v1h-1zM1 7h1v1h-1zM39 7h1v1h-1zM9 8h1v1h-1zM22 8h1v1h-1zM1 9h1v1h-1zM16 9h1v1h-1zM1 10h1v1h-1zM4 10h1v1h-1zM7 10h1v1h-1zM25 10h1v1h-1zM32 10h1v1h-1zM4 11h1v1h-1zM12 11h1v1h-1zM13 11h1v1h-1zM15 11h1v1h-1zM24 11h1v1h-1zM27 11h1v1h-1zM36 11h1v1h-1zM24 12h1v1h-1zM31 12h1v1h-1zM1 13h1v1h-1zM5 13h1v1h-1zM11 13h1v1h-1zM16 13h1v1h-1zM19 13h1v1h-1zM25 13h1v1h-1zM31 13h1v1h-1zM34 13h1v1h-1zM17 14h1v1h-1zM37 14h1v1h-1zM41 14h1v1h-1zM6 15h1v1h-1zM11 15h1v1h-1zM18 15h1v1h-1zM21 15h1v1h-1zM24 15h1v1h-1zM29 15h1v1h-1zM33 15h1v1h-1zM35 15h1v1h-1zM39 15h1v1h-1zM41 15h1v1h-1zM7 16h1v1h-1zM25 16h1v1h-1zM29 16h1v1h-1z"/>
<path fill="#999999" d="M8 0h1v1h-1zM11 0h1v1h-1zM18 0h1v1h-1zM21 0h1v1h-1zM35 0h1v1h-1zM1 1h1v1h-1zM17 1h1v1h-1zM19 1h1v1h-1zM31 1h1v1h-1zM32 1h1v1h-1zM35 1h1v1h-1zM1 2h1v1h-1zM3 2h1v1h-1zM7 2h1v1h-1zM12 2h1v1h-1zM13 2h1v1h-1zM19 2h1v1h-1zM20 2h1v1h-1zM25 2h1v1h-1zM29 2h1v1h-1zM32 2h1v1h-1zM4 3h1v1h-1zM5 3h1v1h-1zM11 3h1v1h-1zM29 3h1v1h-1zM32 3h1v1h-1zM36 3h1v1h-1zM38 3h1v1h-1zM0 4h1v1h-1zM8 4h1v1h-1zM12 4h1v1h-1zM14 4h1v1h-1zM29 4h1v1h-1zM32 4h1v1h-1zM33 4h1v1h-1zM4 5h1v1h-1zM9 5h1v1h-1zM18 5h1v1h-1zM26 5h1v1h-1zM27 5h1v1h-1zM40 5h1v1h-1zM17 6h1v1h-1zM27 6h1v1h-1zM35 6h1v1h-1zM38 6h1v1h-1zM13 7h1v1h-1zM36 7h1v1h-1zM41 7h1v1h-1zM2 8h1v1h-1zM34 10h1v1h-1zM7 11h1v1h-1zM29 11h1v1h-1zM37 11h1v1h-1zM39 11h1v1h-1zM3 12h1v1h-1zM12 12h1v1h-1zM15 12h1v1h-1zM28 12h1v1h-1zM23 13h1v1h-1zM27 13h1v1h-1zM32 13h1v1h-1zM37 13h1v1h-1zM41 13h1v1h-1zM9 14h1v1h-1zM18 14h1v1h-1zM25 14h1v1h-1zM29 14h1v1h-1zM12 15h1v1h-1zM13 15h1v1h-1zM16 15h1v1h-1zM20 15h1v1h-1zM22 15h1v1h-1zM30 15h1v1h-1zM32 15h1v1h-1zM0 16h1v1h-1zM3 16h1v1h-1zM8 16h1v1h-1zM15 16h1v1h-1zM17 16h1v1h-1zM26 16h1v1h-1zM32 16h1v1h-1zM34 16h1v1h-1z"/>
<path fill="#aaaaaa" d="M6 0h1v1h-1zM7 0h1v1h-1zM9 0h1v1h-1zM16 0h1v1h-1zM24 0h1v1h-1zM26 0h1v1h-1zM30 0h1v1h-1zM31 0h1v1h-1zM36 0h1v1h-1zM15 1h1v1h-1zM30 1h1v1h-1zM37 1h1v1h-1zM41 1h1v1h-1zM2 2h1v1h-1zM18 2h1v1h-1zM35 2h1v1h-1zM37 2h1v1h-1zM1 3h1v1h-1zM9 3h1v1h-1zM34 3h1v1h-1zM41 3h1v1h-1zM35 4h1v1h-1zM37 4h1v1h-1zM38 4h1v1h-1zM0 5h1v1h-1zM6 5h1v1h-1zM7 5h1v1h-1zM11 5h1v1h-1zM21 5h1v1h-1zM25 5h1v1h-1zM35 5h1v1h-1zM38 5h1v1h-1zM39 5h1v1h-1zM18 6h1v1h-1zM24 6h1v1h-1zM36 6h1v1h-1zM0 10h1v1h-1zM2 10h1v1h-1zM2 11h1v1h-1zM38 11h1v1h-1zM7 12h1v1h-1zM16 12h1v1h-1zM25 12h1v1h-1zM33 12h1v1h-1zM34 12h1v1h-1zM35 12h1v1h-1zM38 12h1v1h-1zM39 12h1v1h-1zM6 13h1v1h-1zM8 13h1v1h-1zM24 13h1v1h-1zM26 13h1v1h-1zM36 13h1v1h-1zM38 13h1v1h-1zM1 14h1v1h-1zM6 14h1v1h-1zM7 14h1v1h-1zM21 14h1v1h-1zM33 14h1v1h-1zM38 14h1v1h-1zM8 15h1v1h-1zM9 15h1v1h-1zM10 15h1v1h-1zM14 15h1v1h-1zM40 15h1v1h-1zM19 16h1v1h-1zM22 16h1v1h-1zM24 16h1v1h-1zM40 16h1v1h-1z"/>
<path fill="#bbbbbb" d="M4 0h1v1h-1zM5 0h1v1h-1zM20 0h1v1h-1zM23 0h1v1h-1zM32 0h1v1h-1zM6 1h1v1h-1zM22 1h1v1h-1zM34 1h1v1h-1zM16 2h1v1h-1zM21 2h1v1h-1zM23 2h1v1h-1zM28 2h1v1h-1zM31 2h1v1h-1zM7 3h1v1h-1zM24 3h1v1h-1zM28 3h1v1h-1zM33 3h1v1h-1zM19 4h1v1h-1zM31 4h1v1h-1zM3 5h1v1h-1zM5 5h1v1h-1zM8 5h1v1h-1zM15 5h1v1h-1zM17 5h1v1h-1zM16 7h1v1h-1zM4 9h1v1h-1zM5 9h1v1h-1zM5 10h1v1h-1zM18 12h1v1h-1zM36 12h1v1h-1zM41 12h1v1h-1zM2 13h1v1h-1zM4 13h1v1h-1zM7 13h1v1h-1zM15 13h1v1h-1zM29 13h1v1h-1zM13 14h1v1h-1zM26 14h1v1h-1zM35 14h1v1h-1zM7 15h1v1h-1zM19 15h1v1h-1zM27 15h1v1h-1zM34 15h1v1h-1zM2 16h1v1h-1zM14 16h1v1h-1zM20 16h1v1h-1zM30 16h1v1h-1zM31 16h1v1h-1zM36 16h1v1h-1zM41 16h1v1h-1z"/>
<path fill="#cccccc" d="M0 0h1v1h-1zM28 0h1v1h-1zM37 0h1v1h-1zM28 1h1v1h-1zM29 1h1v1h-1zM36 1h1v1h-1zM14 2h1v1h-1zM41 2h1v1h-1zM3 3h1v1h-1zM21 3h1v1h-1zM37 3h1v1h-1zM3 4h1v1h-1zM7 4h1v1h-1zM18 4h1v1h-1zM22 4h1v1h-1zM40 4h1v1h-1zM1 5h1v1h-1zM12 5h1v1h-1zM24 5h1v1h-1zM29 5h1v1h-1zM33 5h1v1h-1zM37 5h1v1h-1zM2 6h1v1h-1zM8 6h1v1h-1zM0 11h1v1h-1zM11 12h1v1h-1zM20 12h1v1h-1zM22 12h1v1h-1zM23 12h1v1h-1zM30 12h1v1h-1zM32 12h1v1h-1zM37 12h1v1h-1zM0 13h1v1h-1zM10 13h1v1h-1zM15 14h1v1h-1zM32 14h1v1h-1zM40 14h1v1h-1zM2 15h1v1h-1zM5 15h1v1h-1zM10 16h1v1h-1zM13 16h1v1h-1z"/>
<path fill="#dddddd" d="M14 0h1v1h-1zM34 0h1v1h-1zM16 1h1v1h-1zM21 1h1v1h-1zM8 3h1v1h-1zM18 3h1v1h-1zM22 3h1v1h-1zM10 4h1v1h-1zM11 4h1v1h-1zM34 4h1v1h-1zM36 4h1v1h-1zM2 5h1v1h-1zM34 5h1v1h-1zM7 6h1v1h-1zM34 11h1v1h-1zM1 12h1v1h-1zM17 12h1v1h-1zM40 12h1v1h-1zM18 13h1v1h-1zM22 13h1v1h-1zM3 14h1v1h-1zM11 14h1v1h-1zM4 15h1v1h-1zM36 15h1v1h-1zM5 16h1v1h-1zM28 16h1v1h-1z"/>
<path fill="#eeeeee" d="M25 0h1v1h-1zM39 0h1v1h-1zM8 1h1v1h-1zM10 6h1v1h-1zM33 13h1v1h-1zM10 14h1v1h-1zM6 16h1v1h-1zM27 16h1v1h-1z"/>
<path fill="#ffffff" d="M29 0h1v1h-1zM40 0h1v1h-1zM13 1h1v1h-1zM25 1h1v1h-1zM39 1h1v1h-1zM6 2h1v1h-1zM11 2h1v1h-1zM20 3h1v1h-1zM23 3h1v1h-1zM35 3h1v1h-1zM5 4h1v1h-1zM9 4h1v1h-1zM16 4h1v1h-1zM22 5h1v1h-1zM1 8h1v1h-1zM32 11h1v1h-1zM6 12h1v1h-1zM9 12h1v1h-1zM17 13h1v1h-1zM5 14h1v1h-1zM16 14h1v1h-1zM22 14h1v1h-1zM30 14h1v1h-1zM36 14h1v1h-1zM0 15h1v1h-1zM1 15h1v1h-1zM38 15h1v1h-1z"/>
</g></g></svg>
<rect x="564" y="95.1" width="89.6" height="36.5" fill="#7d7d7d"/>
<svg x="657.0" y="95.1" width="87.0" height="36.5" overflow="hidden">
<rect width="87.0" height="36.5" fill="#fff" filter="url(#sm2)"/>
<rect y="15.2" width="87.0" height="10" fill="#000" opacity="0.42" filter="url(#blur2)"/>
<ellipse cx="6.0" cy="20.2" rx="7.0" ry="5.2" fill="#000" opacity="0.95" filter="url(#blur2)"/>
<ellipse cx="23.0" cy="20.2" rx="4.0" ry="3.0" fill="#000" opacity="0.45" filter="url(#blur2)"/>
<ellipse cx="44.0" cy="20.2" rx="7.0" ry="5.2" fill="#000" opacity="0.95" filter="url(#blur2)"/>
<ellipse cx="60.0" cy="20.2" rx="4.0" ry="3.0" fill="#000" opacity="0.45" filter="url(#blur2)"/>
<ellipse cx="70.0" cy="20.2" rx="6.0" ry="4.5" fill="#000" opacity="0.95" filter="url(#blur2)"/>
<ellipse cx="82.0" cy="20.2" rx="6.0" ry="4.5" fill="#000" opacity="0.9" filter="url(#blur2)"/>
</svg>
<rect x="466.2" y="132.8" width="283" height="40.4" fill="#fff"/>
<svg x="469.7" y="134.0" width="90.4" height="38.0" overflow="hidden"><g filter="url(#soft)"><g transform="scale(2.2)" shape-rendering="crispEdges">
<path fill="#000000" d="M13 6h1v1h-1z"/>
<path fill="#111111" d="M0 2h1v1h-1zM16 2h1v1h-1zM10 6h1v1h-1zM35 10h1v1h-1z"/>
<path fill="#222222" d="M26 2h1v1h-1zM36 3h1v1h-1zM2 4h1v1h-1zM25 4h1v1h-1zM40 4h1v1h-1zM38 6h1v1h-1zM30 7h1v1h-1zM6 8h1v1h-1zM18 10h1v1h-1zM5 13h1v1h-1zM7 16h1v1h-1zM22 16h1v1h-1z"/>
<path fill="#333333" d="M17 0h1v1h-1zM0 1h1v1h-1zM33 1h1v1h-1zM39 2h1v1h-1zM1 5h1v1h-1zM40 6h1v1h-1zM5 8h1v1h-1zM7 8h1v1h-1zM26 8h1v1h-1zM20 10h1v1h-1zM35 11h1v1h-1zM12 13h1v1h-1zM25 13h1v1h-1zM34 14h1v1h-1zM6 15h1v1h-1z"/>
<path fill="#444444" d="M19 0h1v1h-1zM35 0h1v1h-1zM21 1h1v1h-1zM25 1h1v1h-1zM27 1h1v1h-1zM35 1h1v1h-1zM38 1h1v1h-1zM36 2h1v1h-1zM30 3h1v1h-1zM35 3h1v1h-1zM23 4h1v1h-1zM2 8h1v1h-1zM13 8h1v1h-1zM5 9h1v1h-1zM15 9h1v1h-1zM27 9h1v1h-1zM9 10h1v1h-1zM13 10h1v1h-1zM14 10h1v1h-1zM34 10h1v1h-1zM22 12h1v1h-1zM11 13h1v1h-1zM23 13h1v1h-1zM14 14h1v1h-1zM3 15h1v1h-1zM21 15h1v1h-1zM30 16h1v1h-1zM10 17h1v1h-1z"/>
<path fill="#555555" d="M3 0h1v1h-1zM14 0h1v1h-1zM23 0h1v1h-1zM30 0h1v1h-1zM33 0h1v1h-1zM16 1h1v1h-1zM3 2h1v1h-1zM13 2h1v1h-1zM18 2h1v1h-1zM40 2h1v1h-1zM2 3h1v1h-1zM12 3h1v1h-1zM26 3h1v1h-1zM1 4h1v1h-1zM32 4h1v1h-1zM0 5h1v1h-1zM21 6h1v1h-1zM22 6h1v1h-1zM27 7h1v1h-1zM29 7h1v1h-1zM31 7h1v1h-1zM36 7h1v1h-1zM4 8h1v1h-1zM19 8h1v1h-1zM3 9h1v1h-1zM18 9h1v1h-1zM8 11h1v1h-1zM15 11h1v1h-1zM16 11h1v1h-1zM34 11h1v1h-1zM10 12h1v1h-1zM28 12h1v1h-1zM36 12h1v1h-1zM8 13h1v1h-1zM41 13h1v1h-1zM5 14h1v1h-1zM24 15h1v1h-1zM5 16h1v1h-1zM11 16h1v1h-1zM18 17h1v1h-1z"/>
<path fill="#666666" d="M0 0h1v1h-1zM20 0h1v1h-1zM21 0h1v1h-1zM25 0h1v1h-1zM34 0h1v1h-1zM3 1h1v1h-1zM5 1h1v1h-1zM28 1h1v1h-1zM5 2h1v1h-1zM9 2h1v1h-1zM33 2h1v1h-1zM31 3h1v1h-1zM4 4h1v1h-1zM14 4h1v1h-1zM11 5h1v1h-1zM22 5h1v1h-1zM33 5h1v1h-1zM0 6h1v1h-1zM6 6h1v1h-1zM7 6h1v1h-1zM15 6h1v1h-1zM26 6h1v1h-1zM36 6h1v1h-1zM37 6h1v1h-1zM14 7h1v1h-1zM35 7h1v1h-1zM39 7h1v1h-1zM40 7h1v1h-1zM15 8h1v1h-1zM39 8h1v1h-1zM6 9h1v1h-1zM24 9h1v1h-1zM25 9h1v1h-1zM7 10h1v1h-1zM12 10h1v1h-1zM30 10h1v1h-1zM1 11h1v1h-1zM4 11h1v1h-1zM20 11h1v1h-1zM22 11h1v1h-1zM5 12h1v1h-1zM4 13h1v1h-1zM9 13h1v1h-1zM21 13h1v1h-1zM24 13h1v1h-1zM26 13h1v1h-1zM35 13h1v1h-1zM6 14h1v1h-1zM8 14h1v1h-1zM9 14h1v1h-1zM20 14h1v1h-1zM40 14h1v1h-1zM4 15h1v1h-1zM10 15h1v1h-1zM29 15h1v1h-1zM0 16h1v1h-1zM10 16h1v1h-1zM18 16h1v1h-1zM27 16h1v1h-1zM41 16h1v1h-1zM3 17h1v1h-1zM7 17h1v1h-1zM19 17h1v1h-1zM30 17h1v1h-1z"/>
<path fill="#777777" d="M4 0h1v1h-1zM27 0h1v1h-1zM15 2h1v1h-1zM24 2h1v1h-1zM28 2h1v1h-1zM11 3h1v1h-1zM33 3h1v1h-1zM34 3h1v1h-1zM10 4h1v1h-1zM11 4h1v1h-1zM31 4h1v1h-1zM33 4h1v1h-1zM4 5h1v1h-1zM7 5h1v1h-1zM15 5h1v1h-1zM25 5h1v1h-1zM28 5h1v1h-1zM29 5h1v1h-1zM36 5h1v1h-1zM5 6h1v1h-1zM16 6h1v1h-1zM17 6h1v1h-1zM18 6h1v1h-1zM27 6h1v1h-1zM3 7h1v1h-1zM7 7h1v1h-1zM16 7h1v1h-1zM23 7h1v1h-1zM32 7h1v1h-1zM18 8h1v1h-1zM7 9h1v1h-1zM10 9h1v1h-1zM11 9h1v1h-1zM16 9h1v1h-1zM29 9h1v1h-1zM32 9h1v1h-1zM35 9h1v1h-1zM37 9h1v1h-1zM1 10h1v1h-1zM15 10h1v1h-1zM32 10h1v1h-1zM2 11h1v1h-1zM5 11h1v1h-1zM18 11h1v1h-1zM21 11h1v1h-1zM3 12h1v1h-1zM6 12h1v1h-1zM19 12h1v1h-1zM32 12h1v1h-1zM33 12h1v1h-1zM38 12h1v1h-1zM10 13h1v1h-1zM14 13h1v1h-1zM18 13h1v1h-1zM29 13h1v1h-1zM30 13h1v1h-1zM32 13h1v1h-1zM40 13h1v1h-1zM1 14h1v1h-1zM7 14h1v1h-1zM10 14h1v1h-1zM23 14h1v1h-1zM36 14h1v1h-1zM38 14h1v1h-1zM41 14h1v1h-1zM13 15h1v1h-1zM14 15h1v1h-1zM18 15h1v1h-1zM26 15h1v1h-1zM9 16h1v1h-1zM36 16h1v1h-1zM40 16h1v1h-1zM2 17h1v1h-1zM5 17h1v1h-1zM11 17h1v1h-1zM16 17h1v1h-1zM24 17h1v1h-1zM31 17h1v1h-1zM32 17h1v1h-1zM33 17h1v1h-1zM38 17h1v1h-1zM41 17h1v1h-1z"/>
<path fill="#888888" d="M7 0h1v1h-1zM31 0h1v1h-1zM38 0h1v1h-1zM6 1h1v1h-1zM7 1h1v1h-1zM8 1h1v1h-1zM12 1h1v1h-1zM13 1h1v1h-1zM14 1h1v1h-1zM7 2h1v1h-1zM10 2h1v1h-1zM21 2h1v1h-1zM27 2h1v1h-1zM30 2h1v1h-1zM31 2h1v1h-1zM32 2h1v1h-1zM34 2h1v1h-1zM38 2h1v1h-1zM0 3h1v1h-1zM7 3h1v1h-1zM8 3h1v1h-1zM15 3h1v1h-1zM19 3h1v1h-1zM37 3h1v1h-1zM3 4h1v1h-1zM7 4h1v1h-1zM15 4h1v1h-1zM35 4h1v1h-1zM9 5h1v1h-1zM16 5h1v1h-1zM19 5h1v1h-1zM24 5h1v1h-1zM27 5h1v1h-1zM37 5h1v1h-1zM38 5h1v1h-1zM1 6h1v1h-1zM9 6h1v1h-1zM11 6h1v1h-1zM19 6h1v1h-1zM20 6h1v1h-1zM23 6h1v1h-1zM24 6h1v1h-1zM28 6h1v1h-1zM32 6h1v1h-1zM39 6h1v1h-1zM2 7h1v1h-1zM10 7h1v1h-1zM21 7h1v1h-1zM24 7h1v1h-1zM10 8h1v1h-1zM14 8h1v1h-1zM16 8h1v1h-1zM27 8h1v1h-1zM28 8h1v1h-1zM29 8h1v1h-1zM1 9h1v1h-1zM2 9h1v1h-1zM28 9h1v1h-1zM34 9h1v1h-1zM4 10h1v1h-1zM6 10h1v1h-1zM23 10h1v1h-1zM14 11h1v1h-1zM29 11h1v1h-1zM36 11h1v1h-1zM0 12h1v1h-1zM7 12h1v1h-1zM11 12h1v1h-1zM13 12h1v1h-1zM16 12h1v1h-1zM37 12h1v1h-1zM1 13h1v1h-1zM6 13h1v1h-1zM16 13h1v1h-1zM22 13h1v1h-1zM3 14h1v1h-1zM15 14h1v1h-1zM16 14h1v1h-1zM21 14h1v1h-1zM22 14h1v1h-1zM26 14h1v1h-1zM29 14h1v1h-1zM32 14h1v1h-1zM37 14h1v1h-1zM12 15h1v1h-1zM30 15h1v1h-1zM38 15h1v1h-1zM39 15h1v1h-1zM6 16h1v1h-1zM8 16h1v1h-1zM14 16h1v1h-1zM25 16h1v1h-1zM33 16h1v1h-1zM34 16h1v1h-1zM1 17h1v1h-1zM9 17h1v1h-1zM13 17h1v1h-1zM20 17h1v1h-1zM22 17h1v1h-1zM23 17h1v1h-1zM29 17h1v1h-1zM35 17h1v1h-1zM40 17h1v1h-1z"/>
<path fill="#999999" d="M10 0h1v1h-1zM26 1h1v1h-1zM30 1h1v1h-1zM32 1h1v1h-1zM34 1h1v1h-1zM1 2h1v1h-1zM2 2h1v1h-1zM4 2h1v1h-1zM19 2h1v1h-1zM22 2h1v1h-1zM29 2h1v1h-1zM1 3h1v1h-1zM22 3h1v1h-1zM25 3h1v1h-1zM29 3h1v1h-1zM6 4h1v1h-1zM8 4h1v1h-1zM13 4h1v1h-1zM17 4h1v1h-1zM20 4h1v1h-1zM21 4h1v1h-1zM36 4h1v1h-1zM37 4h1v1h-1zM2 5h1v1h-1zM8 5h1v1h-1zM17 5h1v1h-1zM18 5h1v1h-1zM23 5h1v1h-1zM31 5h1v1h-1zM40 5h1v1h-1zM41 5h1v1h-1zM2 6h1v1h-1zM3 6h1v1h-1zM33 6h1v1h-1zM0 7h1v1h-1zM15 7h1v1h-1zM18 7h1v1h-1zM26 7h1v1h-1zM3 8h1v1h-1zM22 8h1v1h-1zM24 8h1v1h-1zM31 8h1v1h-1zM33 8h1v1h-1zM38 8h1v1h-1zM41 8h1v1h-1zM4 9h1v1h-1zM9 9h1v1h-1zM12 9h1v1h-1zM17 9h1v1h-1zM30 9h1v1h-1zM36 9h1v1h-1zM3 10h1v1h-1zM11 10h1v1h-1zM16 10h1v1h-1zM24 10h1v1h-1zM36 10h1v1h-1zM7 11h1v1h-1zM12 11h1v1h-1zM19 11h1v1h-1zM24 11h1v1h-1zM26 11h1v1h-1zM27 11h1v1h-1zM32 11h1v1h-1zM40 11h1v1h-1zM41 11h1v1h-1zM12 12h1v1h-1zM17 12h1v1h-1zM23 12h1v1h-1zM25 12h1v1h-1zM34 12h1v1h-1zM40 12h1v1h-1zM2 13h1v1h-1zM20 13h1v1h-1zM34 13h1v1h-1zM37 13h1v1h-1zM2 14h1v1h-1zM11 14h1v1h-1zM19 14h1v1h-1zM25 14h1v1h-1zM2 15h1v1h-1zM9 15h1v1h-1zM15 15h1v1h-1zM22 15h1v1h-1zM23 15h1v1h-1zM32 15h1v1h-1zM33 15h1v1h-1zM40 15h1v1h-1zM3 16h1v1h-1zM17 16h1v1h-1zM19 16h1v1h-1zM24 16h1v1h-1zM26 16h1v1h-1zM28 16h1v1h-1zM35 16h1v1h-1zM8 17h1v1h-1zM14 17h1v1h-1zM37 17h1v1h-1zM39 17h1v1h-1z"/>
<path fill="#aaaaaa" d="M9 0h1v1h-1zM16 0h1v1h-1zM22 0h1v1h-1zM24 0h1v1h-1zM32 0h1v1h-1zM36 0h1v1h-1zM37 0h1v1h-1zM40 0h1v1h-1zM41 0h1v1h-1zM1 1h1v1h-1zM2 1h1v1h-1zM11 1h1v1h-1zM18 1h1v1h-1zM20 1h1v1h-1zM24 1h1v1h-1zM17 2h1v1h-1zM20 2h1v1h-1zM37 2h1v1h-1zM41 2h1v1h-1zM4 3h1v1h-1zM5 3h1v1h-1zM13 3h1v1h-1zM14 3h1v1h-1zM16 3h1v1h-1zM17 3h1v1h-1zM18 3h1v1h-1zM23 3h1v1h-1zM28 3h1v1h-1zM0 4h1v1h-1zM24 4h1v1h-1zM28 4h1v1h-1zM29 4h1v1h-1zM30 4h1v1h-1zM38 4h1v1h-1zM41 4h1v1h-1zM6 5h1v1h-1zM10 5h1v1h-1zM21 5h1v1h-1zM32 5h1v1h-1zM39 5h1v1h-1zM25 6h1v1h-1zM30 6h1v1h-1zM34 6h1v1h-1zM1 7h1v1h-1zM8 7h1v1h-1zM37 7h1v1h-1zM38 7h1v1h-1zM1 8h1v1h-1zM8 8h1v1h-1zM9 8h1v1h-1zM20 8h1v1h-1zM21 8h1v1h-1zM23 8h1v1h-1zM34 8h1v1h-1zM35 8h1v1h-1zM36 8h1v1h-1zM21 9h1v1h-1zM5 10h1v1h-1zM21 10h1v1h-1zM27 10h1v1h-1zM13 11h1v1h-1zM30 11h1v1h-1zM33 11h1v1h-1zM38 11h1v1h-1zM39 11h1v1h-1zM2 12h1v1h-1zM14 12h1v1h-1zM15 12h1v1h-1zM24 12h1v1h-1zM26 12h1v1h-1zM30 12h1v1h-1zM31 12h1v1h-1zM3 13h1v1h-1zM13 13h1v1h-1zM38 13h1v1h-1zM17 14h1v1h-1zM18 14h1v1h-1zM27 14h1v1h-1zM28 14h1v1h-1zM35 14h1v1h-1zM39 14h1v1h-1zM8 15h1v1h-1zM11 15h1v1h-1zM16 15h1v1h-1zM17 15h1v1h-1zM25 15h1v1h-1zM27 15h1v1h-1zM31 15h1v1h-1zM34 15h1v1h-1zM35 15h1v1h-1zM21 16h1v1h-1zM37 16h1v1h-1zM0 17h1v1h-1zM4 17h1v1h-1zM25 17h1v1h-1zM28 17h1v1h-1zM36 17h1v1h-1z"/>
<path fill="#bbbbbb" d="M1 0h1v1h-1zM12 0h1v1h-1zM28 0h1v1h-1zM10 1h1v1h-1zM19 1h1v1h-1zM41 1h1v1h-1zM6 2h1v1h-1zM12 2h1v1h-1zM35 2h1v1h-1zM3 3h1v1h-1zM9 3h1v1h-1zM21 3h1v1h-1zM38 3h1v1h-1zM41 3h1v1h-1zM5 4h1v1h-1zM12 4h1v1h-1zM22 4h1v1h-1zM27 4h1v1h-1zM5 5h1v1h-1zM12 5h1v1h-1zM13 5h1v1h-1zM35 5h1v1h-1zM4 6h1v1h-1zM12 6h1v1h-1zM41 6h1v1h-1zM12 7h1v1h-1zM17 7h1v1h-1zM19 7h1v1h-1zM25 7h1v1h-1zM33 7h1v1h-1zM34 7h1v1h-1zM17 8h1v1h-1zM37 8h1v1h-1zM14 9h1v1h-1zM22 9h1v1h-1zM31 9h1v1h-1zM2 10h1v1h-1zM8 10h1v1h-1zM19 10h1v1h-1zM22 10h1v1h-1zM26 10h1v1h-1zM28 10h1v1h-1zM33 10h1v1h-1zM39 10h1v1h-1zM40 10h1v1h-1zM0 11h1v1h-1zM3 11h1v1h-1zM9 11h1v1h-1zM11 11h1v1h-1zM25 11h1v1h-1zM18 12h1v1h-1zM27 12h1v1h-1zM17 13h1v1h-1zM28 13h1v1h-1zM31 13h1v1h-1zM33 13h1v1h-1zM0 14h1v1h-1zM12 14h1v1h-1zM24 14h1v1h-1zM30 14h1v1h-1zM7 15h1v1h-1zM36 15h1v1h-1zM2 16h1v1h-1zM31 16h1v1h-1zM15 17h1v1h-1z"/>
<path fill="#cccccc" d="M13 0h1v1h-1zM15 0h1v1h-1zM18 0h1v1h-1zM39 0h1v1h-1zM4 1h1v1h-1zM9 1h1v1h-1zM17 1h1v1h-1zM22 1h1v1h-1zM23 1h1v1h-1zM29 1h1v1h-1zM14 2h1v1h-1zM39 3h1v1h-1zM9 4h1v1h-1zM18 4h1v1h-1zM26 4h1v1h-1zM14 5h1v1h-1zM20 5h1v1h-1zM34 5h1v1h-1zM14 6h1v1h-1zM29 6h1v1h-1zM31 6h1v1h-1zM4 7h1v1h-1zM5 7h1v1h-1zM9 7h1v1h-1zM22 7h1v1h-1zM28 7h1v1h-1zM41 7h1v1h-1zM11 8h1v1h-1zM12 8h1v1h-1zM32 8h1v1h-1zM0 9h1v1h-1zM19 9h1v1h-1zM23 9h1v1h-1zM38 9h1v1h-1zM39 9h1v1h-1zM40 9h1v1h-1zM0 10h1v1h-1zM17 10h1v1h-1zM38 10h1v1h-1zM10 11h1v1h-1zM23 11h1v1h-1zM1 12h1v1h-1zM8 12h1v1h-1zM20 12h1v1h-1zM21 12h1v1h-1zM35 12h1v1h-1zM7 13h1v1h-1zM19 13h1v1h-1zM4 14h1v1h-1zM33 14h1v1h-1zM0 15h1v1h-1zM20 15h1v1h-1zM37 15h1v1h-1zM41 15h1v1h-1zM12 16h1v1h-1zM13 16h1v1h-1zM20 16h1v1h-1zM39 16h1v1h-1zM12 17h1v1h-1zM17 17h1v1h-1zM21 17h1v1h-1zM26 17h1v1h-1zM34 17h1v1h-1z"/>
<path fill="#dddddd" d="M31 1h1v1h-1zM37 1h1v1h-1zM39 1h1v1h-1zM40 1h1v1h-1zM23 2h1v1h-1zM10 3h1v1h-1zM27 3h1v1h-1zM34 4h1v1h-1zM39 4h1v1h-1zM30 5h1v1h-1zM35 6h1v1h-1zM11 7h1v1h-1zM25 8h1v1h-1zM20 9h1v1h-1zM31 10h1v1h-1zM37 10h1v1h-1zM41 10h1v1h-1zM9 12h1v1h-1zM41 12h1v1h-1zM0 13h1v1h-1zM27 13h1v1h-1zM36 13h1v1h-1zM31 14h1v1h-1zM5 15h1v1h-1zM1 16h1v1h-1zM4 16h1v1h-1zM15 16h1v1h-1zM29 16h1v1h-1zM32 16h1v1h-1zM6 17h1v1h-1z"/>
<path fill="#eeeeee" d="M2 0h1v1h-1zM5 0h1v1h-1zM11 0h1v1h-1zM29 0h1v1h-1zM15 1h1v1h-1zM36 1h1v1h-1zM11 2h1v1h-1zM25 2h1v1h-1zM6 3h1v1h-1zM24 3h1v1h-1zM32 3h1v1h-1zM40 3h1v1h-1zM19 4h1v1h-1zM40 8h1v1h-1zM13 9h1v1h-1zM26 9h1v1h-1zM33 9h1v1h-1zM10 10h1v1h-1zM29 10h1v1h-1zM6 11h1v1h-1zM4 12h1v1h-1zM29 12h1v1h-1zM39 12h1v1h-1zM15 13h1v1h-1zM28 15h1v1h-1zM16 16h1v1h-1zM23 16h1v1h-1zM27 17h1v1h-1z"/>
<path fill="#ffffff" d="M6 0h1v1h-1zM8 0h1v1h-1zM26 0h1v1h-1zM8 2h1v1h-1zM20 3h1v1h-1zM16 4h1v1h-1zM3 5h1v1h-1zM26 5h1v1h-1zM8 6h1v1h-1zM6 7h1v1h-1zM13 7h1v1h-1zM20 7h1v1h-1zM0 8h1v1h-1zM30 8h1v1h-1zM8 9h1v1h-1zM41 9h1v1h-1zM25 10h1v1h-1zM17 11h1v1h-1zM28 11h1v1h-1zM31 11h1v1h-1zM37 11h1v1h-1zM39 13h1v1h-1zM13 14h1v1h-1zM1 15h1v1h-1zM19 15h1v1h-1zM38 16h1v1h-1z"/>
</g></g></svg>
<rect x="564" y="134.0" width="89.6" height="38.0" fill="#7d7d7d"/>
<svg x="657.0" y="134.0" width="87.0" height="38.0" overflow="hidden">
<rect width="87.0" height="38.0" fill="#fff" filter="url(#sm3)"/>
<ellipse cx="5.0" cy="20.2" rx="4.5" ry="3.4" fill="#000" opacity="0.45" filter="url(#blur2)"/>
<ellipse cx="16.0" cy="20.2" rx="4.0" ry="3.0" fill="#000" opacity="0.35" filter="url(#blur2)"/>
<ellipse cx="44.0" cy="20.2" rx="4.5" ry="3.4" fill="#000" opacity="0.45" filter="url(#blur2)"/>
<ellipse cx="72.0" cy="20.2" rx="5.0" ry="3.8" fill="#000" opacity="0.5" filter="url(#blur2)"/>
</svg>
<rect x="466.2" y="173.2" width="283" height="39.9" fill="#fff"/>
<svg x="469.7" y="174.4" width="90.4" height="37.5" overflow="hidden"><g filter="url(#soft)"><g transform="scale(2.2)" shape-rendering="crispEdges">
<path fill="#000000" d="M38 10h1v1h-1z"/>
<path fill="#111111" d="M23 5h1v1h-1zM31 11h1v1h-1zM10 17h1v1h-1z"/>
<path fill="#222222" d="M36 0h1v1h-1zM14 1h1v1h-1zM9 2h1v1h-1zM18 6h1v1h-1zM11 7h1v1h-1zM39 8h1v1h-1zM32 14h1v1h-1zM8 15h1v1h-1z"/>
<path fill="#333333" d="M10 1h1v1h-1zM6 3h1v1h-1zM12 3h1v1h-1zM17 5h1v1h-1zM7 9h1v1h-1zM8 9h1v1h-1zM17 9h1v1h-1zM11 10h1v1h-1zM22 10h1v1h-1zM8 12h1v1h-1zM24 17h1v1h-1z"/>
<path fill="#444444" d="M3 0h1v1h-1zM15 2h1v1h-1zM40 2h1v1h-1zM5 3h1v1h-1zM13 6h1v1h-1zM14 7h1v1h-1zM27 7h1v1h-1zM29 8h1v1h-1zM18 9h1v1h-1zM27 9h1v1h-1zM39 9h1v1h-1zM3 11h1v1h-1zM30 11h1v1h-1zM17 12h1v1h-1zM5 14h1v1h-1zM19 14h1v1h-1zM39 15h1v1h-1zM5 16h1v1h-1zM9 16h1v1h-1zM26 16h1v1h-1z"/>
<path fill="#555555" d="M15 1h1v1h-1zM35 1h1v1h-1zM3 2h1v1h-1zM16 2h1v1h-1zM32 2h1v1h-1zM8 3h1v1h-1zM25 3h1v1h-1zM38 3h1v1h-1zM24 4h1v1h-1zM30 5h1v1h-1zM32 5h1v1h-1zM17 6h1v1h-1zM33 6h1v1h-1zM38 6h1v1h-1zM0 7h1v1h-1zM19 7h1v1h-1zM29 7h1v1h-1zM3 8h1v1h-1zM7 8h1v1h-1zM12 8h1v1h-1zM17 8h1v1h-1zM23 8h1v1h-1zM30 9h1v1h-1zM36 9h1v1h-1zM41 9h1v1h-1zM5 10h1v1h-1zM24 10h1v1h-1zM25 10h1v1h-1zM0 11h1v1h-1zM8 11h1v1h-1zM9 11h1v1h-1zM16 11h1v1h-1zM28 11h1v1h-1zM4 12h1v1h-1zM0 13h1v1h-1zM22 13h1v1h-1zM24 13h1v1h-1zM35 13h1v1h-1zM37 13h1v1h-1zM39 13h1v1h-1zM16 14h1v1h-1zM13 15h1v1h-1zM21 15h1v1h-1zM30 15h1v1h-1zM17 16h1v1h-1zM37 16h1v1h-1zM31 17h1v1h-1z"/>
<path fill="#666666" d="M4 0h1v1h-1zM9 0h1v1h-1zM1 1h1v1h-1zM4 1h1v1h-1zM16 1h1v1h-1zM24 1h1v1h-1zM37 1h1v1h-1zM38 1h1v1h-1zM20 2h1v1h-1zM25 2h1v1h-1zM1 3h1v1h-1zM19 3h1v1h-1zM23 3h1v1h-1zM8 4h1v1h-1zM28 4h1v1h-1zM2 5h1v1h-1zM3 5h1v1h-1zM5 5h1v1h-1zM18 5h1v1h-1zM28 5h1v1h-1zM4 6h1v1h-1zM28 6h1v1h-1zM36 6h1v1h-1zM39 6h1v1h-1zM10 7h1v1h-1zM16 7h1v1h-1zM37 7h1v1h-1zM20 8h1v1h-1zM21 8h1v1h-1zM31 8h1v1h-1zM34 8h1v1h-1zM10 9h1v1h-1zM13 9h1v1h-1zM16 9h1v1h-1zM26 9h1v1h-1zM5 11h1v1h-1zM15 11h1v1h-1zM23 11h1v1h-1zM27 11h1v1h-1zM38 11h1v1h-1zM1 12h1v1h-1zM26 12h1v1h-1zM27 12h1v1h-1zM1 13h1v1h-1zM13 13h1v1h-1zM34 13h1v1h-1zM0 14h1v1h-1zM39 14h1v1h-1zM18 15h1v1h-1zM3 16h1v1h-1zM9 17h1v1h-1zM25 17h1v1h-1zM28 17h1v1h-1zM37 17h1v1h-1z"/>
<path fill="#777777" d="M0 0h1v1h-1zM7 0h1v1h-1zM15 0h1v1h-1zM28 0h1v1h-1zM29 0h1v1h-1zM33 0h1v1h-1zM35 0h1v1h-1zM39 0h1v1h-1zM21 1h1v1h-1zM36 1h1v1h-1zM13 2h1v1h-1zM17 2h1v1h-1zM23 2h1v1h-1zM27 2h1v1h-1zM3 3h1v1h-1zM16 3h1v1h-1zM39 3h1v1h-1zM4 4h1v1h-1zM14 4h1v1h-1zM16 4h1v1h-1zM35 4h1v1h-1zM8 5h1v1h-1zM11 5h1v1h-1zM19 5h1v1h-1zM31 5h1v1h-1zM35 5h1v1h-1zM8 6h1v1h-1zM12 6h1v1h-1zM22 6h1v1h-1zM29 6h1v1h-1zM4 7h1v1h-1zM31 7h1v1h-1zM39 7h1v1h-1zM0 8h1v1h-1zM2 8h1v1h-1zM13 8h1v1h-1zM22 8h1v1h-1zM27 8h1v1h-1zM1 9h1v1h-1zM3 9h1v1h-1zM22 9h1v1h-1zM29 9h1v1h-1zM3 10h1v1h-1zM7 10h1v1h-1zM10 10h1v1h-1zM23 10h1v1h-1zM41 10h1v1h-1zM7 11h1v1h-1zM20 11h1v1h-1zM34 11h1v1h-1zM9 12h1v1h-1zM13 12h1v1h-1zM14 12h1v1h-1zM19 12h1v1h-1zM25 12h1v1h-1zM30 12h1v1h-1zM31 12h1v1h-1zM37 12h1v1h-1zM40 12h1v1h-1zM41 12h1v1h-1zM3 13h1v1h-1zM7 13h1v1h-1zM14 13h1v1h-1zM31 13h1v1h-1zM7 14h1v1h-1zM11 14h1v1h-1zM15 14h1v1h-1zM24 14h1v1h-1zM25 14h1v1h-1zM30 14h1v1h-1zM37 14h1v1h-1zM0 15h1v1h-1zM4 15h1v1h-1zM5 15h1v1h-1zM14 15h1v1h-1zM15 15h1v1h-1zM16 15h1v1h-1zM27 15h1v1h-1zM41 15h1v1h-1zM4 16h1v1h-1zM8 16h1v1h-1zM13 16h1v1h-1zM15 16h1v1h-1zM16 16h1v1h-1zM15 17h1v1h-1zM17 17h1v1h-1zM22 17h1v1h-1zM30 17h1v1h-1z"/>
<path fill="#888888" d="M8 0h1v1h-1zM13 0h1v1h-1zM14 0h1v1h-1zM21 0h1v1h-1zM24 0h1v1h-1zM32 0h1v1h-1zM37 0h1v1h-1zM38 0h1v1h-1zM40 0h1v1h-1zM0 1h1v1h-1zM2 1h1v1h-1zM9 1h1v1h-1zM13 1h1v1h-1zM22 1h1v1h-1zM25 1h1v1h-1zM27 1h1v1h-1zM34 1h1v1h-1zM6 2h1v1h-1zM8 2h1v1h-1zM29 2h1v1h-1zM39 2h1v1h-1zM17 3h1v1h-1zM21 3h1v1h-1zM26 3h1v1h-1zM0 4h1v1h-1zM1 4h1v1h-1zM3 4h1v1h-1zM10 4h1v1h-1zM12 4h1v1h-1zM4 5h1v1h-1zM16 5h1v1h-1zM37 5h1v1h-1zM6 6h1v1h-1zM7 6h1v1h-1zM14 6h1v1h-1zM15 6h1v1h-1zM19 6h1v1h-1zM20 6h1v1h-1zM41 6h1v1h-1zM1 7h1v1h-1zM23 7h1v1h-1zM40 7h1v1h-1zM5 8h1v1h-1zM9 8h1v1h-1zM14 8h1v1h-1zM16 8h1v1h-1zM24 8h1v1h-1zM37 8h1v1h-1zM12 9h1v1h-1zM24 9h1v1h-1zM12 10h1v1h-1zM29 10h1v1h-1zM30 10h1v1h-1zM39 10h1v1h-1zM22 11h1v1h-1zM25 11h1v1h-1zM32 11h1v1h-1zM35 11h1v1h-1zM39 11h1v1h-1zM33 12h1v1h-1zM34 12h1v1h-1zM20 13h1v1h-1zM36 13h1v1h-1zM6 14h1v1h-1zM20 14h1v1h-1zM23 14h1v1h-1zM3 15h1v1h-1zM7 15h1v1h-1zM12 15h1v1h-1zM28 15h1v1h-1zM31 15h1v1h-1zM34 15h1v1h-1zM35 15h1v1h-1zM38 15h1v1h-1zM40 15h1v1h-1zM7 16h1v1h-1zM11 16h1v1h-1zM20 16h1v1h-1zM24 16h1v1h-1zM27 16h1v1h-1zM30 16h1v1h-1zM34 16h1v1h-1zM40 16h1v1h-1zM7 17h1v1h-1zM21 17h1v1h-1zM23 17h1v1h-1zM26 17h1v1h-1zM35 17h1v1h-1zM38 17h1v1h-1z"/>
<path fill="#999999" d="M5 0h1v1h-1zM11 0h1v1h-1zM18 0h1v1h-1zM19 0h1v1h-1zM26 0h1v1h-1zM27 0h1v1h-1zM3 1h1v1h-1zM31 1h1v1h-1zM11 2h1v1h-1zM12 2h1v1h-1zM18 2h1v1h-1zM22 2h1v1h-1zM33 2h1v1h-1zM34 2h1v1h-1zM36 2h1v1h-1zM34 3h1v1h-1zM37 3h1v1h-1zM23 4h1v1h-1zM27 4h1v1h-1zM30 4h1v1h-1zM36 4h1v1h-1zM37 4h1v1h-1zM38 4h1v1h-1zM0 5h1v1h-1zM24 5h1v1h-1zM36 5h1v1h-1zM38 5h1v1h-1zM1 6h1v1h-1zM2 6h1v1h-1zM9 6h1v1h-1zM24 6h1v1h-1zM31 6h1v1h-1zM40 6h1v1h-1zM8 7h1v1h-1zM12 7h1v1h-1zM21 7h1v1h-1zM22 7h1v1h-1zM24 7h1v1h-1zM25 7h1v1h-1zM15 8h1v1h-1zM26 8h1v1h-1zM30 8h1v1h-1zM36 8h1v1h-1zM41 8h1v1h-1zM2 9h1v1h-1zM6 9h1v1h-1zM11 9h1v1h-1zM15 9h1v1h-1zM19 9h1v1h-1zM25 9h1v1h-1zM28 9h1v1h-1zM34 9h1v1h-1zM40 9h1v1h-1zM26 10h1v1h-1zM32 10h1v1h-1zM1 11h1v1h-1zM2 11h1v1h-1zM4 11h1v1h-1zM21 11h1v1h-1zM24 11h1v1h-1zM36 11h1v1h-1zM40 11h1v1h-1zM5 12h1v1h-1zM18 12h1v1h-1zM21 12h1v1h-1zM24 12h1v1h-1zM10 13h1v1h-1zM15 13h1v1h-1zM30 13h1v1h-1zM33 13h1v1h-1zM41 13h1v1h-1zM3 14h1v1h-1zM10 14h1v1h-1zM21 14h1v1h-1zM27 14h1v1h-1zM31 14h1v1h-1zM38 14h1v1h-1zM40 14h1v1h-1zM41 14h1v1h-1zM1 15h1v1h-1zM10 15h1v1h-1zM11 15h1v1h-1zM24 15h1v1h-1zM29 15h1v1h-1zM32 15h1v1h-1zM36 15h1v1h-1zM37 15h1v1h-1zM14 16h1v1h-1zM18 16h1v1h-1zM21 16h1v1h-1zM22 16h1v1h-1zM35 16h1v1h-1zM1 17h1v1h-1zM3 17h1v1h-1zM14 17h1v1h-1zM16 17h1v1h-1zM27 17h1v1h-1zM33 17h1v1h-1zM36 17h1v1h-1z"/>
<path fill="#aaaaaa" d="M2 0h1v1h-1zM16 0h1v1h-1zM31 0h1v1h-1zM11 1h1v1h-1zM17 1h1v1h-1zM19 1h1v1h-1zM41 1h1v1h-1zM4 2h1v1h-1zM14 2h1v1h-1zM26 2h1v1h-1zM38 2h1v1h-1zM0 3h1v1h-1zM7 3h1v1h-1zM11 3h1v1h-1zM27 3h1v1h-1zM29 3h1v1h-1zM31 3h1v1h-1zM36 3h1v1h-1zM11 4h1v1h-1zM17 4h1v1h-1zM19 4h1v1h-1zM22 4h1v1h-1zM34 4h1v1h-1zM41 4h1v1h-1zM1 5h1v1h-1zM6 5h1v1h-1zM9 5h1v1h-1zM13 5h1v1h-1zM21 5h1v1h-1zM27 5h1v1h-1zM33 5h1v1h-1zM27 6h1v1h-1zM2 7h1v1h-1zM6 7h1v1h-1zM13 7h1v1h-1zM28 7h1v1h-1zM34 7h1v1h-1zM38 7h1v1h-1zM41 7h1v1h-1zM4 8h1v1h-1zM8 8h1v1h-1zM18 8h1v1h-1zM25 8h1v1h-1zM38 8h1v1h-1zM0 9h1v1h-1zM33 9h1v1h-1zM37 9h1v1h-1zM38 9h1v1h-1zM1 10h1v1h-1zM6 10h1v1h-1zM15 10h1v1h-1zM16 10h1v1h-1zM27 10h1v1h-1zM31 10h1v1h-1zM36 10h1v1h-1zM11 11h1v1h-1zM14 11h1v1h-1zM37 11h1v1h-1zM41 11h1v1h-1zM7 12h1v1h-1zM12 12h1v1h-1zM32 12h1v1h-1zM38 12h1v1h-1zM39 12h1v1h-1zM8 13h1v1h-1zM17 13h1v1h-1zM18 13h1v1h-1zM21 13h1v1h-1zM23 13h1v1h-1zM29 13h1v1h-1zM40 13h1v1h-1zM4 14h1v1h-1zM8 14h1v1h-1zM12 14h1v1h-1zM17 15h1v1h-1zM23 15h1v1h-1zM25 15h1v1h-1zM1 16h1v1h-1zM33 16h1v1h-1zM39 16h1v1h-1zM0 17h1v1h-1zM4 17h1v1h-1zM5 17h1v1h-1zM6 17h1v1h-1zM12 17h1v1h-1zM32 17h1v1h-1z"/>
<path fill="#bbbbbb" d="M6 0h1v1h-1zM22 0h1v1h-1zM23 0h1v1h-1zM25 0h1v1h-1zM30 0h1v1h-1zM34 0h1v1h-1zM12 1h1v1h-1zM18 1h1v1h-1zM28 1h1v1h-1zM40 1h1v1h-1zM2 2h1v1h-1zM5 2h1v1h-1zM7 2h1v1h-1zM19 2h1v1h-1zM21 2h1v1h-1zM31 2h1v1h-1zM37 2h1v1h-1zM41 2h1v1h-1zM4 3h1v1h-1zM9 3h1v1h-1zM13 3h1v1h-1zM18 3h1v1h-1zM20 3h1v1h-1zM28 3h1v1h-1zM30 3h1v1h-1zM32 3h1v1h-1zM33 3h1v1h-1zM40 3h1v1h-1zM5 4h1v1h-1zM9 4h1v1h-1zM15 4h1v1h-1zM25 4h1v1h-1zM31 4h1v1h-1zM39 4h1v1h-1zM40 4h1v1h-1zM10 5h1v1h-1zM14 5h1v1h-1zM20 5h1v1h-1zM25 5h1v1h-1zM26 5h1v1h-1zM29 5h1v1h-1zM40 5h1v1h-1zM41 5h1v1h-1zM0 6h1v1h-1zM5 6h1v1h-1zM10 6h1v1h-1zM23 6h1v1h-1zM25 6h1v1h-1zM26 6h1v1h-1zM32 6h1v1h-1zM15 7h1v1h-1zM18 7h1v1h-1zM36 7h1v1h-1zM6 8h1v1h-1zM19 8h1v1h-1zM28 8h1v1h-1zM9 9h1v1h-1zM20 9h1v1h-1zM21 9h1v1h-1zM4 10h1v1h-1zM13 10h1v1h-1zM14 10h1v1h-1zM17 10h1v1h-1zM19 10h1v1h-1zM21 10h1v1h-1zM28 10h1v1h-1zM12 11h1v1h-1zM26 11h1v1h-1zM33 11h1v1h-1zM2 12h1v1h-1zM28 12h1v1h-1zM2 13h1v1h-1zM5 13h1v1h-1zM6 13h1v1h-1zM9 13h1v1h-1zM11 13h1v1h-1zM25 13h1v1h-1zM32 13h1v1h-1zM38 13h1v1h-1zM2 14h1v1h-1zM17 14h1v1h-1zM18 14h1v1h-1zM22 14h1v1h-1zM28 14h1v1h-1zM2 15h1v1h-1zM9 15h1v1h-1zM22 15h1v1h-1zM26 15h1v1h-1zM0 16h1v1h-1zM10 16h1v1h-1zM19 16h1v1h-1zM23 16h1v1h-1zM25 16h1v1h-1zM41 16h1v1h-1zM18 17h1v1h-1zM19 17h1v1h-1z"/>
<path fill="#cccccc" d="M12 0h1v1h-1zM20 0h1v1h-1zM39 1h1v1h-1zM0 2h1v1h-1zM1 2h1v1h-1zM10 2h1v1h-1zM30 2h1v1h-1zM2 3h1v1h-1zM10 3h1v1h-1zM41 3h1v1h-1zM18 4h1v1h-1zM21 4h1v1h-1zM26 4h1v1h-1zM29 4h1v1h-1zM32 4h1v1h-1zM7 5h1v1h-1zM15 5h1v1h-1zM3 6h1v1h-1zM11 6h1v1h-1zM21 6h1v1h-1zM3 7h1v1h-1zM5 7h1v1h-1zM7 7h1v1h-1zM9 7h1v1h-1zM17 7h1v1h-1zM20 7h1v1h-1zM33 7h1v1h-1zM11 8h1v1h-1zM32 8h1v1h-1zM33 8h1v1h-1zM35 8h1v1h-1zM4 9h1v1h-1zM5 9h1v1h-1zM23 9h1v1h-1zM31 9h1v1h-1zM2 10h1v1h-1zM9 10h1v1h-1zM33 10h1v1h-1zM6 11h1v1h-1zM10 11h1v1h-1zM20 12h1v1h-1zM22 12h1v1h-1zM23 12h1v1h-1zM28 13h1v1h-1zM13 14h1v1h-1zM26 14h1v1h-1zM33 14h1v1h-1zM36 14h1v1h-1zM6 15h1v1h-1zM20 15h1v1h-1zM33 15h1v1h-1zM28 16h1v1h-1zM31 16h1v1h-1zM32 16h1v1h-1zM8 17h1v1h-1zM11 17h1v1h-1zM20 17h1v1h-1zM29 17h1v1h-1zM34 17h1v1h-1zM40 17h1v1h-1z"/>
<path fill="#dddddd" d="M1 0h1v1h-1zM17 0h1v1h-1zM5 1h1v1h-1zM6 1h1v1h-1zM7 1h1v1h-1zM23 1h1v1h-1zM26 1h1v1h-1zM29 1h1v1h-1zM35 2h1v1h-1zM15 3h1v1h-1zM22 3h1v1h-1zM24 3h1v1h-1zM6 4h1v1h-1zM13 4h1v1h-1zM20 4h1v1h-1zM34 5h1v1h-1zM26 7h1v1h-1zM10 8h1v1h-1zM40 8h1v1h-1zM32 9h1v1h-1zM8 10h1v1h-1zM20 10h1v1h-1zM34 10h1v1h-1zM37 10h1v1h-1zM40 10h1v1h-1zM13 11h1v1h-1zM18 11h1v1h-1zM29 11h1v1h-1zM19 13h1v1h-1zM26 13h1v1h-1zM27 13h1v1h-1zM1 14h1v1h-1zM14 14h1v1h-1zM29 14h1v1h-1zM34 14h1v1h-1zM12 16h1v1h-1zM29 16h1v1h-1zM36 16h1v1h-1zM39 17h1v1h-1zM41 17h1v1h-1z"/>
<path fill="#eeeeee" d="M10 0h1v1h-1zM41 0h1v1h-1zM8 1h1v1h-1zM30 1h1v1h-1zM32 1h1v1h-1zM33 1h1v1h-1zM24 2h1v1h-1zM28 2h1v1h-1zM14 3h1v1h-1zM2 4h1v1h-1zM22 5h1v1h-1zM34 6h1v1h-1zM37 6h1v1h-1zM30 7h1v1h-1zM32 7h1v1h-1zM35 7h1v1h-1zM19 11h1v1h-1zM0 12h1v1h-1zM3 12h1v1h-1zM11 12h1v1h-1zM15 12h1v1h-1zM29 12h1v1h-1zM36 12h1v1h-1zM4 13h1v1h-1zM12 13h1v1h-1zM9 14h1v1h-1zM2 16h1v1h-1zM2 17h1v1h-1zM13 17h1v1h-1z"/>
<path fill="#ffffff" d="M20 1h1v1h-1zM35 3h1v1h-1zM7 4h1v1h-1zM33 4h1v1h-1zM12 5h1v1h-1zM39 5h1v1h-1zM16 6h1v1h-1zM30 6h1v1h-1zM35 6h1v1h-1zM1 8h1v1h-1zM14 9h1v1h-1zM35 9h1v1h-1zM0 10h1v1h-1zM18 10h1v1h-1zM35 10h1v1h-1zM17 11h1v1h-1zM6 12h1v1h-1zM10 12h1v1h-1zM16 12h1v1h-1zM35 12h1v1h-1zM16 13h1v1h-1zM35 14h1v1h-1zM19 15h1v1h-1zM6 16h1v1h-1zM38 16h1v1h-1z"/>
</g></g></svg>
<rect x="564" y="174.4" width="89.6" height="37.5" fill="#7d7d7d"/>
<svg x="657.0" y="174.4" width="87.0" height="37.5" overflow="hidden">
<rect width="87.0" height="37.5" fill="#fff" filter="url(#sm4)"/>
<ellipse cx="5.0" cy="20.0" rx="4.5" ry="3.4" fill="#000" opacity="0.45" filter="url(#blur2)"/>
<ellipse cx="16.0" cy="20.0" rx="4.0" ry="3.0" fill="#000" opacity="0.35" filter="url(#blur2)"/>
<ellipse cx="44.0" cy="20.0" rx="4.5" ry="3.4" fill="#000" opacity="0.45" filter="url(#blur2)"/>
<ellipse cx="72.0" cy="20.0" rx="5.0" ry="3.8" fill="#000" opacity="0.5" filter="url(#blur2)"/>
</svg>
<rect x="466.2" y="213.1" width="283" height="39.4" fill="#fff"/>
<svg x="469.7" y="214.3" width="90.4" height="37.0" overflow="hidden"><g filter="url(#soft)"><g transform="scale(2.2)" shape-rendering="crispEdges">
<path fill="#000000" d="M4 1h1v1h-1zM15 5h1v1h-1z"/>
<path fill="#111111" d="M5 13h1v1h-1z"/>
<path fill="#222222" d="M32 2h1v1h-1zM18 4h1v1h-1zM5 6h1v1h-1zM32 11h1v1h-1zM0 13h1v1h-1z"/>
<path fill="#333333" d="M0 3h1v1h-1zM1 3h1v1h-1zM12 5h1v1h-1zM32 5h1v1h-1zM37 9h1v1h-1zM20 10h1v1h-1zM39 10h1v1h-1zM23 11h1v1h-1zM24 11h1v1h-1zM26 11h1v1h-1zM35 14h1v1h-1zM40 14h1v1h-1z"/>
<path fill="#444444" d="M13 0h1v1h-1zM6 3h1v1h-1zM11 6h1v1h-1zM17 6h1v1h-1zM14 7h1v1h-1zM21 7h1v1h-1zM20 8h1v1h-1zM24 8h1v1h-1zM18 9h1v1h-1zM13 10h1v1h-1zM16 11h1v1h-1zM21 12h1v1h-1zM7 13h1v1h-1zM27 13h1v1h-1zM12 14h1v1h-1zM28 15h1v1h-1zM32 15h1v1h-1zM15 16h1v1h-1zM18 16h1v1h-1z"/>
<path fill="#555555" d="M15 0h1v1h-1zM31 0h1v1h-1zM41 0h1v1h-1zM11 1h1v1h-1zM19 1h1v1h-1zM20 1h1v1h-1zM25 1h1v1h-1zM29 1h1v1h-1zM9 2h1v1h-1zM19 2h1v1h-1zM33 2h1v1h-1zM38 3h1v1h-1zM25 4h1v1h-1zM18 5h1v1h-1zM34 5h1v1h-1zM2 6h1v1h-1zM14 6h1v1h-1zM15 6h1v1h-1zM31 6h1v1h-1zM35 6h1v1h-1zM0 7h1v1h-1zM3 7h1v1h-1zM8 8h1v1h-1zM3 9h1v1h-1zM14 9h1v1h-1zM28 9h1v1h-1zM41 9h1v1h-1zM5 10h1v1h-1zM15 10h1v1h-1zM23 10h1v1h-1zM27 10h1v1h-1zM28 10h1v1h-1zM12 11h1v1h-1zM14 11h1v1h-1zM34 11h1v1h-1zM2 12h1v1h-1zM11 12h1v1h-1zM18 12h1v1h-1zM27 12h1v1h-1zM6 13h1v1h-1zM11 13h1v1h-1zM1 14h1v1h-1zM11 14h1v1h-1zM18 14h1v1h-1zM24 14h1v1h-1zM26 14h1v1h-1zM6 15h1v1h-1zM13 15h1v1h-1zM4 16h1v1h-1zM5 16h1v1h-1zM13 16h1v1h-1zM17 16h1v1h-1zM36 16h1v1h-1z"/>
<path fill="#666666" d="M4 0h1v1h-1zM10 0h1v1h-1zM19 0h1v1h-1zM1 1h1v1h-1zM3 1h1v1h-1zM17 1h1v1h-1zM2 2h1v1h-1zM6 2h1v1h-1zM28 2h1v1h-1zM31 2h1v1h-1zM13 3h1v1h-1zM28 3h1v1h-1zM41 3h1v1h-1zM8 4h1v1h-1zM20 4h1v1h-1zM32 4h1v1h-1zM1 5h1v1h-1zM8 5h1v1h-1zM9 5h1v1h-1zM33 5h1v1h-1zM7 6h1v1h-1zM30 7h1v1h-1zM38 7h1v1h-1zM18 8h1v1h-1zM11 9h1v1h-1zM25 9h1v1h-1zM26 9h1v1h-1zM24 10h1v1h-1zM17 11h1v1h-1zM31 11h1v1h-1zM36 11h1v1h-1zM40 11h1v1h-1zM5 12h1v1h-1zM12 12h1v1h-1zM35 12h1v1h-1zM3 13h1v1h-1zM8 13h1v1h-1zM16 13h1v1h-1zM28 13h1v1h-1zM37 13h1v1h-1zM0 14h1v1h-1zM3 14h1v1h-1zM41 14h1v1h-1zM37 15h1v1h-1zM10 16h1v1h-1zM24 16h1v1h-1z"/>
<path fill="#777777" d="M6 0h1v1h-1zM14 0h1v1h-1zM24 0h1v1h-1zM0 1h1v1h-1zM6 1h1v1h-1zM8 1h1v1h-1zM12 1h1v1h-1zM13 1h1v1h-1zM32 1h1v1h-1zM5 2h1v1h-1zM22 2h1v1h-1zM29 2h1v1h-1zM40 2h1v1h-1zM2 3h1v1h-1zM16 3h1v1h-1zM25 3h1v1h-1zM31 3h1v1h-1zM9 4h1v1h-1zM13 4h1v1h-1zM19 4h1v1h-1zM24 4h1v1h-1zM21 5h1v1h-1zM25 5h1v1h-1zM36 5h1v1h-1zM9 7h1v1h-1zM10 7h1v1h-1zM16 7h1v1h-1zM17 7h1v1h-1zM35 7h1v1h-1zM40 7h1v1h-1zM0 8h1v1h-1zM1 8h1v1h-1zM13 8h1v1h-1zM21 8h1v1h-1zM28 8h1v1h-1zM5 9h1v1h-1zM16 9h1v1h-1zM29 9h1v1h-1zM34 9h1v1h-1zM1 10h1v1h-1zM8 10h1v1h-1zM22 10h1v1h-1zM31 10h1v1h-1zM37 10h1v1h-1zM0 11h1v1h-1zM1 11h1v1h-1zM18 11h1v1h-1zM30 11h1v1h-1zM1 12h1v1h-1zM7 12h1v1h-1zM9 12h1v1h-1zM16 12h1v1h-1zM40 12h1v1h-1zM13 13h1v1h-1zM15 13h1v1h-1zM4 14h1v1h-1zM6 14h1v1h-1zM7 14h1v1h-1zM20 14h1v1h-1zM29 14h1v1h-1zM2 15h1v1h-1zM19 15h1v1h-1zM26 15h1v1h-1zM30 15h1v1h-1zM8 16h1v1h-1zM33 16h1v1h-1zM38 16h1v1h-1z"/>
<path fill="#888888" d="M11 0h1v1h-1zM16 0h1v1h-1zM22 0h1v1h-1zM29 0h1v1h-1zM30 0h1v1h-1zM33 0h1v1h-1zM34 0h1v1h-1zM35 0h1v1h-1zM7 1h1v1h-1zM16 1h1v1h-1zM22 1h1v1h-1zM36 1h1v1h-1zM14 2h1v1h-1zM23 2h1v1h-1zM36 2h1v1h-1zM37 2h1v1h-1zM39 2h1v1h-1zM3 3h1v1h-1zM15 3h1v1h-1zM17 3h1v1h-1zM19 3h1v1h-1zM23 3h1v1h-1zM30 3h1v1h-1zM0 4h1v1h-1zM4 4h1v1h-1zM14 4h1v1h-1zM29 4h1v1h-1zM13 5h1v1h-1zM24 5h1v1h-1zM38 5h1v1h-1zM0 6h1v1h-1zM1 6h1v1h-1zM16 6h1v1h-1zM41 6h1v1h-1zM5 7h1v1h-1zM6 7h1v1h-1zM11 7h1v1h-1zM19 7h1v1h-1zM31 7h1v1h-1zM32 7h1v1h-1zM33 7h1v1h-1zM34 7h1v1h-1zM37 7h1v1h-1zM39 7h1v1h-1zM41 7h1v1h-1zM12 8h1v1h-1zM15 8h1v1h-1zM30 8h1v1h-1zM33 8h1v1h-1zM36 8h1v1h-1zM38 8h1v1h-1zM40 8h1v1h-1zM4 9h1v1h-1zM7 9h1v1h-1zM27 9h1v1h-1zM33 9h1v1h-1zM11 10h1v1h-1zM16 10h1v1h-1zM19 10h1v1h-1zM35 10h1v1h-1zM38 10h1v1h-1zM8 11h1v1h-1zM27 11h1v1h-1zM14 12h1v1h-1zM20 12h1v1h-1zM28 12h1v1h-1zM20 13h1v1h-1zM23 13h1v1h-1zM32 13h1v1h-1zM31 14h1v1h-1zM0 15h1v1h-1zM4 15h1v1h-1zM7 15h1v1h-1zM8 15h1v1h-1zM10 15h1v1h-1zM23 15h1v1h-1zM24 15h1v1h-1zM25 16h1v1h-1zM26 16h1v1h-1zM27 16h1v1h-1zM34 16h1v1h-1zM39 16h1v1h-1zM40 16h1v1h-1z"/>
<path fill="#999999" d="M3 0h1v1h-1zM5 0h1v1h-1zM18 0h1v1h-1zM10 1h1v1h-1zM14 1h1v1h-1zM24 1h1v1h-1zM27 1h1v1h-1zM39 1h1v1h-1zM40 1h1v1h-1zM0 2h1v1h-1zM1 2h1v1h-1zM4 2h1v1h-1zM12 2h1v1h-1zM16 2h1v1h-1zM17 2h1v1h-1zM25 2h1v1h-1zM26 2h1v1h-1zM38 2h1v1h-1zM7 3h1v1h-1zM8 3h1v1h-1zM32 3h1v1h-1zM33 3h1v1h-1zM34 3h1v1h-1zM35 3h1v1h-1zM37 3h1v1h-1zM39 3h1v1h-1zM16 4h1v1h-1zM26 4h1v1h-1zM28 4h1v1h-1zM33 4h1v1h-1zM2 5h1v1h-1zM6 5h1v1h-1zM19 5h1v1h-1zM39 5h1v1h-1zM41 5h1v1h-1zM3 6h1v1h-1zM20 6h1v1h-1zM22 6h1v1h-1zM23 6h1v1h-1zM26 6h1v1h-1zM34 6h1v1h-1zM38 6h1v1h-1zM27 7h1v1h-1zM36 7h1v1h-1zM26 8h1v1h-1zM27 8h1v1h-1zM31 8h1v1h-1zM34 8h1v1h-1zM35 8h1v1h-1zM2 9h1v1h-1zM9 9h1v1h-1zM13 9h1v1h-1zM15 9h1v1h-1zM24 9h1v1h-1zM30 9h1v1h-1zM32 9h1v1h-1zM40 9h1v1h-1zM6 10h1v1h-1zM10 10h1v1h-1zM29 10h1v1h-1zM30 10h1v1h-1zM33 10h1v1h-1zM3 11h1v1h-1zM7 11h1v1h-1zM9 11h1v1h-1zM11 11h1v1h-1zM21 11h1v1h-1zM0 12h1v1h-1zM19 12h1v1h-1zM26 12h1v1h-1zM30 12h1v1h-1zM32 12h1v1h-1zM39 12h1v1h-1zM41 12h1v1h-1zM18 13h1v1h-1zM21 13h1v1h-1zM22 13h1v1h-1zM30 13h1v1h-1zM35 13h1v1h-1zM10 14h1v1h-1zM14 14h1v1h-1zM32 14h1v1h-1zM33 14h1v1h-1zM36 14h1v1h-1zM39 14h1v1h-1zM9 15h1v1h-1zM12 15h1v1h-1zM21 15h1v1h-1zM22 15h1v1h-1zM25 15h1v1h-1zM39 15h1v1h-1zM2 16h1v1h-1zM11 16h1v1h-1zM23 16h1v1h-1zM28 16h1v1h-1zM30 16h1v1h-1zM35 16h1v1h-1zM37 16h1v1h-1zM41 16h1v1h-1z"/>
<path fill="#aaaaaa" d="M0 0h1v1h-1zM8 0h1v1h-1zM20 0h1v1h-1zM27 0h1v1h-1zM28 0h1v1h-1zM38 0h1v1h-1zM39 0h1v1h-1zM40 0h1v1h-1zM15 1h1v1h-1zM26 1h1v1h-1zM28 1h1v1h-1zM37 1h1v1h-1zM13 2h1v1h-1zM21 2h1v1h-1zM30 2h1v1h-1zM34 2h1v1h-1zM35 2h1v1h-1zM9 3h1v1h-1zM11 3h1v1h-1zM18 3h1v1h-1zM26 3h1v1h-1zM29 3h1v1h-1zM6 4h1v1h-1zM21 4h1v1h-1zM22 4h1v1h-1zM23 4h1v1h-1zM38 4h1v1h-1zM39 4h1v1h-1zM4 5h1v1h-1zM7 5h1v1h-1zM10 5h1v1h-1zM14 5h1v1h-1zM17 5h1v1h-1zM26 5h1v1h-1zM40 5h1v1h-1zM4 6h1v1h-1zM6 6h1v1h-1zM10 6h1v1h-1zM28 6h1v1h-1zM29 6h1v1h-1zM30 6h1v1h-1zM32 6h1v1h-1zM37 6h1v1h-1zM40 6h1v1h-1zM2 7h1v1h-1zM4 7h1v1h-1zM15 7h1v1h-1zM22 7h1v1h-1zM25 7h1v1h-1zM26 7h1v1h-1zM28 7h1v1h-1zM5 8h1v1h-1zM9 8h1v1h-1zM10 8h1v1h-1zM14 8h1v1h-1zM17 8h1v1h-1zM22 8h1v1h-1zM23 8h1v1h-1zM37 8h1v1h-1zM41 8h1v1h-1zM10 9h1v1h-1zM19 9h1v1h-1zM22 9h1v1h-1zM31 9h1v1h-1zM35 9h1v1h-1zM36 9h1v1h-1zM9 10h1v1h-1zM12 10h1v1h-1zM26 10h1v1h-1zM2 11h1v1h-1zM6 11h1v1h-1zM28 11h1v1h-1zM39 11h1v1h-1zM3 12h1v1h-1zM6 12h1v1h-1zM22 12h1v1h-1zM24 12h1v1h-1zM29 12h1v1h-1zM38 12h1v1h-1zM10 13h1v1h-1zM26 13h1v1h-1zM29 13h1v1h-1zM31 13h1v1h-1zM33 13h1v1h-1zM34 13h1v1h-1zM38 13h1v1h-1zM40 13h1v1h-1zM41 13h1v1h-1zM2 14h1v1h-1zM16 14h1v1h-1zM1 15h1v1h-1zM14 15h1v1h-1zM27 15h1v1h-1zM33 15h1v1h-1zM0 16h1v1h-1zM1 16h1v1h-1zM29 16h1v1h-1z"/>
<path fill="#bbbbbb" d="M1 0h1v1h-1zM12 0h1v1h-1zM23 0h1v1h-1zM25 0h1v1h-1zM32 0h1v1h-1zM31 1h1v1h-1zM35 1h1v1h-1zM38 1h1v1h-1zM11 2h1v1h-1zM15 2h1v1h-1zM20 2h1v1h-1zM27 2h1v1h-1zM4 3h1v1h-1zM5 3h1v1h-1zM14 3h1v1h-1zM27 3h1v1h-1zM2 4h1v1h-1zM7 4h1v1h-1zM10 4h1v1h-1zM31 4h1v1h-1zM35 4h1v1h-1zM37 4h1v1h-1zM41 4h1v1h-1zM0 5h1v1h-1zM5 5h1v1h-1zM16 5h1v1h-1zM22 5h1v1h-1zM23 5h1v1h-1zM29 5h1v1h-1zM9 6h1v1h-1zM18 6h1v1h-1zM21 6h1v1h-1zM25 6h1v1h-1zM33 6h1v1h-1zM36 6h1v1h-1zM39 6h1v1h-1zM13 7h1v1h-1zM23 7h1v1h-1zM24 7h1v1h-1zM4 8h1v1h-1zM6 8h1v1h-1zM7 8h1v1h-1zM16 8h1v1h-1zM0 9h1v1h-1zM8 9h1v1h-1zM17 9h1v1h-1zM38 9h1v1h-1zM39 9h1v1h-1zM14 10h1v1h-1zM21 10h1v1h-1zM32 10h1v1h-1zM34 10h1v1h-1zM36 10h1v1h-1zM40 10h1v1h-1zM10 11h1v1h-1zM13 11h1v1h-1zM19 11h1v1h-1zM35 11h1v1h-1zM38 11h1v1h-1zM15 12h1v1h-1zM17 12h1v1h-1zM17 14h1v1h-1zM19 14h1v1h-1zM21 14h1v1h-1zM30 14h1v1h-1zM34 14h1v1h-1zM37 14h1v1h-1zM11 15h1v1h-1zM17 15h1v1h-1zM18 15h1v1h-1zM34 15h1v1h-1zM35 15h1v1h-1zM38 15h1v1h-1zM6 16h1v1h-1zM9 16h1v1h-1zM12 16h1v1h-1zM14 16h1v1h-1zM16 16h1v1h-1zM32 16h1v1h-1z"/>
<path fill="#cccccc" d="M2 0h1v1h-1zM7 0h1v1h-1zM9 0h1v1h-1zM21 0h1v1h-1zM36 0h1v1h-1zM37 0h1v1h-1zM2 1h1v1h-1zM18 1h1v1h-1zM21 1h1v1h-1zM23 1h1v1h-1zM33 1h1v1h-1zM41 1h1v1h-1zM3 2h1v1h-1zM7 2h1v1h-1zM8 2h1v1h-1zM20 3h1v1h-1zM22 3h1v1h-1zM36 3h1v1h-1zM40 3h1v1h-1zM1 4h1v1h-1zM5 4h1v1h-1zM17 4h1v1h-1zM27 4h1v1h-1zM30 4h1v1h-1zM3 5h1v1h-1zM11 5h1v1h-1zM20 5h1v1h-1zM28 5h1v1h-1zM37 5h1v1h-1zM13 6h1v1h-1zM24 6h1v1h-1zM27 6h1v1h-1zM1 7h1v1h-1zM7 7h1v1h-1zM8 7h1v1h-1zM12 7h1v1h-1zM18 7h1v1h-1zM3 8h1v1h-1zM32 8h1v1h-1zM39 8h1v1h-1zM20 9h1v1h-1zM21 9h1v1h-1zM0 10h1v1h-1zM4 10h1v1h-1zM18 10h1v1h-1zM41 10h1v1h-1zM4 11h1v1h-1zM20 11h1v1h-1zM29 11h1v1h-1zM41 11h1v1h-1zM4 12h1v1h-1zM8 12h1v1h-1zM33 12h1v1h-1zM37 12h1v1h-1zM2 13h1v1h-1zM14 13h1v1h-1zM19 13h1v1h-1zM24 13h1v1h-1zM39 13h1v1h-1zM13 14h1v1h-1zM22 14h1v1h-1zM23 14h1v1h-1zM25 14h1v1h-1zM15 15h1v1h-1zM40 15h1v1h-1zM7 16h1v1h-1zM21 16h1v1h-1z"/>
<path fill="#dddddd" d="M26 0h1v1h-1zM34 1h1v1h-1zM18 2h1v1h-1zM24 2h1v1h-1zM10 3h1v1h-1zM24 3h1v1h-1zM3 4h1v1h-1zM11 4h1v1h-1zM12 4h1v1h-1zM15 4h1v1h-1zM27 5h1v1h-1zM30 5h1v1h-1zM35 5h1v1h-1zM8 6h1v1h-1zM12 6h1v1h-1zM20 7h1v1h-1zM29 7h1v1h-1zM11 8h1v1h-1zM19 8h1v1h-1zM6 9h1v1h-1zM23 9h1v1h-1zM2 10h1v1h-1zM3 10h1v1h-1zM7 10h1v1h-1zM17 10h1v1h-1zM25 10h1v1h-1zM22 11h1v1h-1zM25 11h1v1h-1zM37 11h1v1h-1zM13 12h1v1h-1zM31 12h1v1h-1zM34 12h1v1h-1zM9 13h1v1h-1zM17 13h1v1h-1zM25 13h1v1h-1zM36 13h1v1h-1zM9 14h1v1h-1zM15 14h1v1h-1zM28 14h1v1h-1zM38 14h1v1h-1zM5 15h1v1h-1zM16 15h1v1h-1zM20 15h1v1h-1zM29 15h1v1h-1zM36 15h1v1h-1zM41 15h1v1h-1zM20 16h1v1h-1z"/>
<path fill="#eeeeee" d="M17 0h1v1h-1zM10 2h1v1h-1zM41 2h1v1h-1zM12 3h1v1h-1zM36 4h1v1h-1zM19 6h1v1h-1zM25 8h1v1h-1zM10 12h1v1h-1zM23 12h1v1h-1zM1 13h1v1h-1zM4 13h1v1h-1zM8 14h1v1h-1zM27 14h1v1h-1zM22 16h1v1h-1z"/>
<path fill="#ffffff" d="M5 1h1v1h-1zM9 1h1v1h-1zM30 1h1v1h-1zM21 3h1v1h-1zM34 4h1v1h-1zM40 4h1v1h-1zM31 5h1v1h-1zM2 8h1v1h-1zM29 8h1v1h-1zM1 9h1v1h-1zM12 9h1v1h-1zM5 11h1v1h-1zM15 11h1v1h-1zM33 11h1v1h-1zM25 12h1v1h-1zM36 12h1v1h-1zM12 13h1v1h-1zM5 14h1v1h-1zM3 15h1v1h-1zM31 15h1v1h-1zM3 16h1v1h-1zM19 16h1v1h-1zM31 16h1v1h-1z"/>
</g></g></svg>
<rect x="564" y="214.3" width="89.6" height="37.0" fill="#7d7d7d"/>
<svg x="657.0" y="214.3" width="87.0" height="37.0" overflow="hidden">
<rect width="87.0" height="37.0" fill="#fff" filter="url(#sm5)"/>
<ellipse cx="5.0" cy="19.7" rx="4.5" ry="3.4" fill="#000" opacity="0.45" filter="url(#blur2)"/>
<ellipse cx="16.0" cy="19.7" rx="4.0" ry="3.0" fill="#000" opacity="0.35" filter="url(#blur2)"/>
<ellipse cx="44.0" cy="19.7" rx="4.5" ry="3.4" fill="#000" opacity="0.45" filter="url(#blur2)"/>
<ellipse cx="72.0" cy="19.7" rx="5.0" ry="3.8" fill="#000" opacity="0.5" filter="url(#blur2)"/>
</svg>
<rect x="467.2" y="94.9" width="281" height="36.9" fill="none" stroke="#0000ff" stroke-width="2.2"/>
<text x="463.4" y="105.2" font-family="'Liberation Sans', sans-serif" font-size="7.74" fill="#000" text-anchor="end" textLength="16.3" lengthAdjust="spacingAndGlyphs" >0.31</text>
<text x="463.4" y="114.2" font-family="'Liberation Sans', sans-serif" font-size="7.74" fill="#000" text-anchor="end" textLength="16.3" lengthAdjust="spacingAndGlyphs" >0.93</text>
<text x="463.4" y="123.2" font-family="'Liberation Sans', sans-serif" font-size="7.74" fill="#000" text-anchor="end" textLength="13.9" lengthAdjust="spacingAndGlyphs" >195</text>
<text x="751.0" y="100.0" font-family="'Liberation Sans', sans-serif" font-size="5.94" fill="#000" text-anchor="start" textLength="15.0" lengthAdjust="spacingAndGlyphs" >0.37"</text>
<text x="751.0" y="107.1" font-family="'Liberation Sans', sans-serif" font-size="5.94" fill="#000" text-anchor="start" textLength="25.7" lengthAdjust="spacingAndGlyphs" >(59, 288)</text>
<text x="751.0" y="115.4" font-family="'Liberation Sans', sans-serif" font-size="5.94" fill="#000" text-anchor="start" textLength="28.5" lengthAdjust="spacingAndGlyphs" >20190105</text>
<text x="751.0" y="122.1" font-family="'Liberation Sans', sans-serif" font-size="5.94" fill="#000" text-anchor="start" textLength="23.9" lengthAdjust="spacingAndGlyphs" >v029_02</text>
<text x="751.0" y="128.6" font-family="'Liberation Sans', sans-serif" font-size="5.94" fill="#000" text-anchor="start" textLength="33.2" lengthAdjust="spacingAndGlyphs" >303_LL_030</text>
<rect x="467.2" y="133.8" width="281" height="38.4" fill="none" stroke="#00ff00" stroke-width="2.2"/>
<text x="463.4" y="144.1" font-family="'Liberation Sans', sans-serif" font-size="7.74" fill="#000" text-anchor="end" textLength="16.3" lengthAdjust="spacingAndGlyphs" >0.28</text>
<text x="463.4" y="153.1" font-family="'Liberation Sans', sans-serif" font-size="7.74" fill="#000" text-anchor="end" textLength="16.3" lengthAdjust="spacingAndGlyphs" >1.10</text>
<text x="463.4" y="162.1" font-family="'Liberation Sans', sans-serif" font-size="7.74" fill="#000" text-anchor="end" textLength="13.9" lengthAdjust="spacingAndGlyphs" >195</text>
<text x="751.0" y="138.9" font-family="'Liberation Sans', sans-serif" font-size="5.94" fill="#000" text-anchor="start" textLength="15.0" lengthAdjust="spacingAndGlyphs" >1.37"</text>
<text x="751.0" y="146.0" font-family="'Liberation Sans', sans-serif" font-size="5.94" fill="#000" text-anchor="start" textLength="25.7" lengthAdjust="spacingAndGlyphs" >(59, 288)</text>
<text x="751.0" y="154.3" font-family="'Liberation Sans', sans-serif" font-size="5.94" fill="#000" text-anchor="start" textLength="28.5" lengthAdjust="spacingAndGlyphs" >20190105</text>
<text x="751.0" y="161.0" font-family="'Liberation Sans', sans-serif" font-size="5.94" fill="#000" text-anchor="start" textLength="23.9" lengthAdjust="spacingAndGlyphs" >v029_01</text>
<text x="751.0" y="167.5" font-family="'Liberation Sans', sans-serif" font-size="5.94" fill="#000" text-anchor="start" textLength="33.2" lengthAdjust="spacingAndGlyphs" >303_LL_030</text>
<rect x="467.2" y="174.2" width="281" height="37.9" fill="none" stroke="#ffa500" stroke-width="2.2"/>
<text x="463.4" y="184.5" font-family="'Liberation Sans', sans-serif" font-size="7.74" fill="#000" text-anchor="end" textLength="16.3" lengthAdjust="spacingAndGlyphs" >0.17</text>
<text x="463.4" y="193.5" font-family="'Liberation Sans', sans-serif" font-size="7.74" fill="#000" text-anchor="end" textLength="16.3" lengthAdjust="spacingAndGlyphs" >1.51</text>
<text x="463.4" y="202.5" font-family="'Liberation Sans', sans-serif" font-size="7.74" fill="#000" text-anchor="end" textLength="13.9" lengthAdjust="spacingAndGlyphs" >195</text>
<text x="751.0" y="179.3" font-family="'Liberation Sans', sans-serif" font-size="5.94" fill="#000" text-anchor="start" textLength="15.0" lengthAdjust="spacingAndGlyphs" >1.04"</text>
<text x="751.0" y="186.4" font-family="'Liberation Sans', sans-serif" font-size="5.94" fill="#000" text-anchor="start" textLength="25.7" lengthAdjust="spacingAndGlyphs" >(59, 288)</text>
<text x="751.0" y="194.7" font-family="'Liberation Sans', sans-serif" font-size="5.94" fill="#000" text-anchor="start" textLength="28.5" lengthAdjust="spacingAndGlyphs" >20190105</text>
<text x="751.0" y="201.4" font-family="'Liberation Sans', sans-serif" font-size="5.94" fill="#000" text-anchor="start" textLength="23.9" lengthAdjust="spacingAndGlyphs" >v029_03</text>
<text x="751.0" y="207.9" font-family="'Liberation Sans', sans-serif" font-size="5.94" fill="#000" text-anchor="start" textLength="33.2" lengthAdjust="spacingAndGlyphs" >303_LL_030</text>
<rect x="467.2" y="214.1" width="281" height="37.4" fill="none" stroke="#ff0000" stroke-width="2.2"/>
<text x="463.4" y="224.4" font-family="'Liberation Sans', sans-serif" font-size="7.74" fill="#000" text-anchor="end" textLength="16.3" lengthAdjust="spacingAndGlyphs" >0.12</text>
<text x="463.4" y="233.4" font-family="'Liberation Sans', sans-serif" font-size="7.74" fill="#000" text-anchor="end" textLength="16.3" lengthAdjust="spacingAndGlyphs" >1.47</text>
<text x="463.4" y="242.4" font-family="'Liberation Sans', sans-serif" font-size="7.74" fill="#000" text-anchor="end" textLength="13.9" lengthAdjust="spacingAndGlyphs" >175</text>
<text x="751.0" y="219.2" font-family="'Liberation Sans', sans-serif" font-size="5.94" fill="#000" text-anchor="start" textLength="15.0" lengthAdjust="spacingAndGlyphs" >1.79"</text>
<text x="751.0" y="226.3" font-family="'Liberation Sans', sans-serif" font-size="5.94" fill="#000" text-anchor="start" textLength="25.7" lengthAdjust="spacingAndGlyphs" >(57, 474)</text>
<text x="751.0" y="234.6" font-family="'Liberation Sans', sans-serif" font-size="5.94" fill="#000" text-anchor="start" textLength="28.5" lengthAdjust="spacingAndGlyphs" >20190105</text>
<text x="751.0" y="241.3" font-family="'Liberation Sans', sans-serif" font-size="5.94" fill="#000" text-anchor="start" textLength="23.9" lengthAdjust="spacingAndGlyphs" >v029_03</text>
<text x="751.0" y="247.8" font-family="'Liberation Sans', sans-serif" font-size="5.94" fill="#000" text-anchor="start" textLength="33.2" lengthAdjust="spacingAndGlyphs" >303_LL_050</text>
<text x="865.2" y="47.6" font-family="'Liberation Sans', sans-serif" font-size="10.18" fill="#000" text-anchor="middle" textLength="42.4" lengthAdjust="spacingAndGlyphs" >With Sky</text>
<text x="865.2" y="58.7" font-family="'Liberation Sans', sans-serif" font-size="10.18" fill="#000" text-anchor="middle" textLength="60.4" lengthAdjust="spacingAndGlyphs" >x, y: 59, 288</text>
<text x="966.2" y="47.6" font-family="'Liberation Sans', sans-serif" font-size="10.18" fill="#000" text-anchor="middle" textLength="60.4" lengthAdjust="spacingAndGlyphs" >Clean Image</text>
<text x="966.2" y="58.7" font-family="'Liberation Sans', sans-serif" font-size="10.18" fill="#000" text-anchor="middle" textLength="60.4" lengthAdjust="spacingAndGlyphs" >x, y: 59, 288</text>
<svg x="832.4" y="65.5" width="65.4" height="167.0" overflow="hidden"><g filter="url(#soft)"><g transform="scale(1.9)" shape-rendering="crispEdges">
<path fill="#000000" d="M21 3h1v1h-1zM25 4h1v1h-1zM19 10h1v1h-1zM6 11h1v1h-1zM24 11h1v1h-1zM9 17h1v1h-1zM24 17h1v1h-1zM4 19h1v1h-1zM15 19h1v1h-1zM33 19h1v1h-1zM16 25h1v1h-1zM20 25h1v1h-1zM25 25h1v1h-1zM27 25h1v1h-1zM22 30h1v1h-1zM23 30h1v1h-1zM30 31h1v1h-1zM24 32h1v1h-1zM24 36h1v1h-1zM2 42h1v1h-1zM4 42h1v1h-1zM8 42h1v1h-1zM9 42h1v1h-1zM12 42h1v1h-1zM14 42h1v1h-1zM16 42h1v1h-1zM19 42h1v1h-1zM22 42h1v1h-1zM23 42h1v1h-1zM25 42h1v1h-1zM32 42h1v1h-1zM33 42h1v1h-1zM34 42h1v1h-1zM0 43h1v1h-1zM8 43h1v1h-1zM12 43h1v1h-1zM13 43h1v1h-1zM18 43h1v1h-1zM24 43h1v1h-1zM26 43h1v1h-1zM28 43h1v1h-1zM29 43h1v1h-1zM32 43h1v1h-1zM34 43h1v1h-1zM0 44h1v1h-1zM1 44h1v1h-1zM2 44h1v1h-1zM10 44h1v1h-1zM13 44h1v1h-1zM19 44h1v1h-1zM20 44h1v1h-1zM22 44h1v1h-1zM23 44h1v1h-1zM24 44h1v1h-1zM25 44h1v1h-1zM29 44h1v1h-1zM31 44h1v1h-1zM32 44h1v1h-1zM1 45h1v1h-1zM5 45h1v1h-1zM7 45h1v1h-1zM12 45h1v1h-1zM14 45h1v1h-1zM18 45h1v1h-1zM24 45h1v1h-1zM26 45h1v1h-1zM27 45h1v1h-1zM29 45h1v1h-1zM31 45h1v1h-1zM32 45h1v1h-1zM34 45h1v1h-1zM2 46h1v1h-1zM3 46h1v1h-1zM4 46h1v1h-1zM5 46h1v1h-1zM7 46h1v1h-1zM9 46h1v1h-1zM11 46h1v1h-1zM12 46h1v1h-1zM15 46h1v1h-1zM16 46h1v1h-1zM18 46h1v1h-1zM20 46h1v1h-1zM22 46h1v1h-1zM23 46h1v1h-1zM27 46h1v1h-1zM5 50h1v1h-1zM14 50h1v1h-1zM29 50h1v1h-1zM1 58h1v1h-1zM0 62h1v1h-1zM3 62h1v1h-1zM16 62h1v1h-1zM18 62h1v1h-1zM31 62h1v1h-1zM19 63h1v1h-1zM10 64h1v1h-1zM17 64h1v1h-1zM13 65h1v1h-1zM11 69h1v1h-1zM13 69h1v1h-1zM6 70h1v1h-1zM24 70h1v1h-1zM25 70h1v1h-1zM7 71h1v1h-1zM9 71h1v1h-1zM24 71h1v1h-1zM27 76h1v1h-1zM30 76h1v1h-1zM0 77h1v1h-1zM10 77h1v1h-1zM28 77h1v1h-1zM7 78h1v1h-1zM20 78h1v1h-1zM18 82h1v1h-1zM24 82h1v1h-1zM2 83h1v1h-1zM15 84h1v1h-1zM23 84h1v1h-1z"/>
<path fill="#111111" d="M1 3h1v1h-1zM7 4h1v1h-1zM24 10h1v1h-1zM26 10h1v1h-1zM4 11h1v1h-1zM25 11h1v1h-1zM20 12h1v1h-1zM7 17h1v1h-1zM10 17h1v1h-1zM2 18h1v1h-1zM12 24h1v1h-1zM27 24h1v1h-1zM11 25h1v1h-1zM9 26h1v1h-1zM16 26h1v1h-1zM17 31h1v1h-1zM26 32h1v1h-1zM34 32h1v1h-1zM10 42h1v1h-1zM28 42h1v1h-1zM10 43h1v1h-1zM16 43h1v1h-1zM20 43h1v1h-1zM21 43h1v1h-1zM22 43h1v1h-1zM5 44h1v1h-1zM9 44h1v1h-1zM14 44h1v1h-1zM27 44h1v1h-1zM30 44h1v1h-1zM3 45h1v1h-1zM6 45h1v1h-1zM10 45h1v1h-1zM15 45h1v1h-1zM17 45h1v1h-1zM28 45h1v1h-1zM1 46h1v1h-1zM6 46h1v1h-1zM17 46h1v1h-1zM32 46h1v1h-1zM33 46h1v1h-1zM9 50h1v1h-1zM0 51h1v1h-1zM16 51h1v1h-1zM22 58h1v1h-1zM28 63h1v1h-1zM15 69h1v1h-1zM2 70h1v1h-1zM9 70h1v1h-1zM29 70h1v1h-1zM2 71h1v1h-1zM21 76h1v1h-1zM23 76h1v1h-1zM24 76h1v1h-1zM25 76h1v1h-1zM34 76h1v1h-1zM5 77h1v1h-1zM7 77h1v1h-1zM20 77h1v1h-1zM25 77h1v1h-1zM32 77h1v1h-1zM24 78h1v1h-1zM1 82h1v1h-1zM11 82h1v1h-1zM12 82h1v1h-1zM13 82h1v1h-1zM19 83h1v1h-1zM20 83h1v1h-1zM24 83h1v1h-1zM14 84h1v1h-1zM21 84h1v1h-1z"/>
<path fill="#222222" d="M3 3h1v1h-1zM7 3h1v1h-1zM16 3h1v1h-1zM2 4h1v1h-1zM10 4h1v1h-1zM17 4h1v1h-1zM27 4h1v1h-1zM30 4h1v1h-1zM29 5h1v1h-1zM22 10h1v1h-1zM3 11h1v1h-1zM12 11h1v1h-1zM29 11h1v1h-1zM34 11h1v1h-1zM14 12h1v1h-1zM24 12h1v1h-1zM29 12h1v1h-1zM2 17h1v1h-1zM18 17h1v1h-1zM23 18h1v1h-1zM28 18h1v1h-1zM31 18h1v1h-1zM31 19h1v1h-1zM30 24h1v1h-1zM7 25h1v1h-1zM28 25h1v1h-1zM33 25h1v1h-1zM27 26h1v1h-1zM14 31h1v1h-1zM22 31h1v1h-1zM32 31h1v1h-1zM11 32h1v1h-1zM19 32h1v1h-1zM20 32h1v1h-1zM29 32h1v1h-1zM33 32h1v1h-1zM7 37h1v1h-1zM22 37h1v1h-1zM0 38h1v1h-1zM1 38h1v1h-1zM2 38h1v1h-1zM10 38h1v1h-1zM17 38h1v1h-1zM19 38h1v1h-1zM0 42h1v1h-1zM11 42h1v1h-1zM13 42h1v1h-1zM17 42h1v1h-1zM24 42h1v1h-1zM26 42h1v1h-1zM5 43h1v1h-1zM33 43h1v1h-1zM3 44h1v1h-1zM6 44h1v1h-1zM7 44h1v1h-1zM17 44h1v1h-1zM18 44h1v1h-1zM34 44h1v1h-1zM2 45h1v1h-1zM8 45h1v1h-1zM11 45h1v1h-1zM33 45h1v1h-1zM8 46h1v1h-1zM30 46h1v1h-1zM34 46h1v1h-1zM11 50h1v1h-1zM17 50h1v1h-1zM3 51h1v1h-1zM14 51h1v1h-1zM34 51h1v1h-1zM19 57h1v1h-1zM2 58h1v1h-1zM8 58h1v1h-1zM32 58h1v1h-1zM1 62h1v1h-1zM19 62h1v1h-1zM24 62h1v1h-1zM18 63h1v1h-1zM24 63h1v1h-1zM27 63h1v1h-1zM29 63h1v1h-1zM0 64h1v1h-1zM5 64h1v1h-1zM8 64h1v1h-1zM23 69h1v1h-1zM34 69h1v1h-1zM8 71h1v1h-1zM25 71h1v1h-1zM29 71h1v1h-1zM31 71h1v1h-1zM5 76h1v1h-1zM6 76h1v1h-1zM15 76h1v1h-1zM22 76h1v1h-1zM2 77h1v1h-1zM19 77h1v1h-1zM33 77h1v1h-1zM3 78h1v1h-1zM9 78h1v1h-1zM31 78h1v1h-1zM32 78h1v1h-1zM15 82h1v1h-1zM27 82h1v1h-1zM0 83h1v1h-1zM4 83h1v1h-1zM25 84h1v1h-1zM26 84h1v1h-1z"/>
<path fill="#333333" d="M32 0h1v1h-1zM9 3h1v1h-1zM14 3h1v1h-1zM18 3h1v1h-1zM21 4h1v1h-1zM13 5h1v1h-1zM31 5h1v1h-1zM11 10h1v1h-1zM12 10h1v1h-1zM27 10h1v1h-1zM28 10h1v1h-1zM34 10h1v1h-1zM1 12h1v1h-1zM6 12h1v1h-1zM10 12h1v1h-1zM19 12h1v1h-1zM28 12h1v1h-1zM31 12h1v1h-1zM22 17h1v1h-1zM29 17h1v1h-1zM33 17h1v1h-1zM4 18h1v1h-1zM5 18h1v1h-1zM11 18h1v1h-1zM12 18h1v1h-1zM25 18h1v1h-1zM13 19h1v1h-1zM20 19h1v1h-1zM22 19h1v1h-1zM7 24h1v1h-1zM20 24h1v1h-1zM22 24h1v1h-1zM24 24h1v1h-1zM4 25h1v1h-1zM14 25h1v1h-1zM23 25h1v1h-1zM26 25h1v1h-1zM32 25h1v1h-1zM8 26h1v1h-1zM11 26h1v1h-1zM25 27h1v1h-1zM18 29h1v1h-1zM27 29h1v1h-1zM8 30h1v1h-1zM28 30h1v1h-1zM33 30h1v1h-1zM34 30h1v1h-1zM0 31h1v1h-1zM5 31h1v1h-1zM8 31h1v1h-1zM12 31h1v1h-1zM25 31h1v1h-1zM31 31h1v1h-1zM1 32h1v1h-1zM23 32h1v1h-1zM27 32h1v1h-1zM30 32h1v1h-1zM14 37h1v1h-1zM16 37h1v1h-1zM19 37h1v1h-1zM20 37h1v1h-1zM29 37h1v1h-1zM7 38h1v1h-1zM9 38h1v1h-1zM20 38h1v1h-1zM21 38h1v1h-1zM27 38h1v1h-1zM3 42h1v1h-1zM30 42h1v1h-1zM1 43h1v1h-1zM3 43h1v1h-1zM4 43h1v1h-1zM23 43h1v1h-1zM31 43h1v1h-1zM8 44h1v1h-1zM15 44h1v1h-1zM26 44h1v1h-1zM4 45h1v1h-1zM0 46h1v1h-1zM13 46h1v1h-1zM24 46h1v1h-1zM28 46h1v1h-1zM23 50h1v1h-1zM5 51h1v1h-1zM23 51h1v1h-1zM22 56h1v1h-1zM5 57h1v1h-1zM11 57h1v1h-1zM15 57h1v1h-1zM28 57h1v1h-1zM0 58h1v1h-1zM3 58h1v1h-1zM9 58h1v1h-1zM15 58h1v1h-1zM19 58h1v1h-1zM28 58h1v1h-1zM6 59h1v1h-1zM25 59h1v1h-1zM5 62h1v1h-1zM29 62h1v1h-1zM33 62h1v1h-1zM8 63h1v1h-1zM9 63h1v1h-1zM31 63h1v1h-1zM13 64h1v1h-1zM29 64h1v1h-1zM0 69h1v1h-1zM17 70h1v1h-1zM6 71h1v1h-1zM23 71h1v1h-1zM32 71h1v1h-1zM19 76h1v1h-1zM18 77h1v1h-1zM2 78h1v1h-1zM10 78h1v1h-1zM22 78h1v1h-1zM25 78h1v1h-1zM11 83h1v1h-1zM15 83h1v1h-1zM23 83h1v1h-1zM27 83h1v1h-1zM8 84h1v1h-1zM16 84h1v1h-1zM27 84h1v1h-1zM34 84h1v1h-1z"/>
<path fill="#444444" d="M16 0h1v1h-1zM15 2h1v1h-1zM28 2h1v1h-1zM2 3h1v1h-1zM6 3h1v1h-1zM22 3h1v1h-1zM24 3h1v1h-1zM27 3h1v1h-1zM32 3h1v1h-1zM0 4h1v1h-1zM3 4h1v1h-1zM34 4h1v1h-1zM32 5h1v1h-1zM14 10h1v1h-1zM15 10h1v1h-1zM18 10h1v1h-1zM23 10h1v1h-1zM31 10h1v1h-1zM9 11h1v1h-1zM11 11h1v1h-1zM13 11h1v1h-1zM18 11h1v1h-1zM20 11h1v1h-1zM28 11h1v1h-1zM2 12h1v1h-1zM9 12h1v1h-1zM18 12h1v1h-1zM23 12h1v1h-1zM20 16h1v1h-1zM0 17h1v1h-1zM8 17h1v1h-1zM13 17h1v1h-1zM9 18h1v1h-1zM14 18h1v1h-1zM17 18h1v1h-1zM33 18h1v1h-1zM34 18h1v1h-1zM3 19h1v1h-1zM17 19h1v1h-1zM21 19h1v1h-1zM27 19h1v1h-1zM29 19h1v1h-1zM3 24h1v1h-1zM6 24h1v1h-1zM9 24h1v1h-1zM10 24h1v1h-1zM18 24h1v1h-1zM23 24h1v1h-1zM32 24h1v1h-1zM9 25h1v1h-1zM19 25h1v1h-1zM22 25h1v1h-1zM6 26h1v1h-1zM15 26h1v1h-1zM23 26h1v1h-1zM25 26h1v1h-1zM11 29h1v1h-1zM3 30h1v1h-1zM12 30h1v1h-1zM29 30h1v1h-1zM32 30h1v1h-1zM7 31h1v1h-1zM13 31h1v1h-1zM18 32h1v1h-1zM25 32h1v1h-1zM29 36h1v1h-1zM3 37h1v1h-1zM8 37h1v1h-1zM18 37h1v1h-1zM8 38h1v1h-1zM12 38h1v1h-1zM31 38h1v1h-1zM34 38h1v1h-1zM0 39h1v1h-1zM7 39h1v1h-1zM23 39h1v1h-1zM6 42h1v1h-1zM15 42h1v1h-1zM18 42h1v1h-1zM27 42h1v1h-1zM2 43h1v1h-1zM6 43h1v1h-1zM9 43h1v1h-1zM27 43h1v1h-1zM21 44h1v1h-1zM33 44h1v1h-1zM0 45h1v1h-1zM13 45h1v1h-1zM3 49h1v1h-1zM6 49h1v1h-1zM32 49h1v1h-1zM1 50h1v1h-1zM6 50h1v1h-1zM8 50h1v1h-1zM34 50h1v1h-1zM7 51h1v1h-1zM17 51h1v1h-1zM22 51h1v1h-1zM27 51h1v1h-1zM33 51h1v1h-1zM30 56h1v1h-1zM34 56h1v1h-1zM16 57h1v1h-1zM18 57h1v1h-1zM23 57h1v1h-1zM7 58h1v1h-1zM33 58h1v1h-1zM7 59h1v1h-1zM21 59h1v1h-1zM4 62h1v1h-1zM22 62h1v1h-1zM25 62h1v1h-1zM11 63h1v1h-1zM13 63h1v1h-1zM14 63h1v1h-1zM25 63h1v1h-1zM4 64h1v1h-1zM6 64h1v1h-1zM9 64h1v1h-1zM21 64h1v1h-1zM23 64h1v1h-1zM24 64h1v1h-1zM17 65h1v1h-1zM23 65h1v1h-1zM4 69h1v1h-1zM6 69h1v1h-1zM7 69h1v1h-1zM12 69h1v1h-1zM14 69h1v1h-1zM17 69h1v1h-1zM27 69h1v1h-1zM28 69h1v1h-1zM31 69h1v1h-1zM0 70h1v1h-1zM5 70h1v1h-1zM8 70h1v1h-1zM14 70h1v1h-1zM19 70h1v1h-1zM20 70h1v1h-1zM21 70h1v1h-1zM30 70h1v1h-1zM33 70h1v1h-1zM10 71h1v1h-1zM14 71h1v1h-1zM16 71h1v1h-1zM21 71h1v1h-1zM22 71h1v1h-1zM27 71h1v1h-1zM28 71h1v1h-1zM33 71h1v1h-1zM34 71h1v1h-1zM1 76h1v1h-1zM9 76h1v1h-1zM12 76h1v1h-1zM4 77h1v1h-1zM15 77h1v1h-1zM17 77h1v1h-1zM24 77h1v1h-1zM26 77h1v1h-1zM31 77h1v1h-1zM4 78h1v1h-1zM5 78h1v1h-1zM6 78h1v1h-1zM16 78h1v1h-1zM28 78h1v1h-1zM3 82h1v1h-1zM5 82h1v1h-1zM8 82h1v1h-1zM23 82h1v1h-1zM26 82h1v1h-1zM30 82h1v1h-1zM34 82h1v1h-1zM7 83h1v1h-1zM9 83h1v1h-1zM10 83h1v1h-1zM21 83h1v1h-1zM25 83h1v1h-1zM32 83h1v1h-1zM3 84h1v1h-1zM32 84h1v1h-1zM33 84h1v1h-1z"/>
<path fill="#555555" d="M13 1h1v1h-1zM4 2h1v1h-1zM11 2h1v1h-1zM21 2h1v1h-1zM0 3h1v1h-1zM5 3h1v1h-1zM10 3h1v1h-1zM12 3h1v1h-1zM15 3h1v1h-1zM25 3h1v1h-1zM29 3h1v1h-1zM23 4h1v1h-1zM29 4h1v1h-1zM33 4h1v1h-1zM2 5h1v1h-1zM9 5h1v1h-1zM17 5h1v1h-1zM27 5h1v1h-1zM24 8h1v1h-1zM25 8h1v1h-1zM2 10h1v1h-1zM9 10h1v1h-1zM10 10h1v1h-1zM13 10h1v1h-1zM20 10h1v1h-1zM25 10h1v1h-1zM32 10h1v1h-1zM33 10h1v1h-1zM15 11h1v1h-1zM16 11h1v1h-1zM19 11h1v1h-1zM3 12h1v1h-1zM5 12h1v1h-1zM13 12h1v1h-1zM15 12h1v1h-1zM22 12h1v1h-1zM2 14h1v1h-1zM0 16h1v1h-1zM6 17h1v1h-1zM12 17h1v1h-1zM19 17h1v1h-1zM23 17h1v1h-1zM32 17h1v1h-1zM10 18h1v1h-1zM20 18h1v1h-1zM21 18h1v1h-1zM24 18h1v1h-1zM27 18h1v1h-1zM32 18h1v1h-1zM6 19h1v1h-1zM8 19h1v1h-1zM9 19h1v1h-1zM19 19h1v1h-1zM1 20h1v1h-1zM29 22h1v1h-1zM11 24h1v1h-1zM13 24h1v1h-1zM16 24h1v1h-1zM21 24h1v1h-1zM29 24h1v1h-1zM1 25h1v1h-1zM6 25h1v1h-1zM13 25h1v1h-1zM29 25h1v1h-1zM31 25h1v1h-1zM2 26h1v1h-1zM10 26h1v1h-1zM18 26h1v1h-1zM33 26h1v1h-1zM0 29h1v1h-1zM8 29h1v1h-1zM29 29h1v1h-1zM30 29h1v1h-1zM10 30h1v1h-1zM13 30h1v1h-1zM17 30h1v1h-1zM1 31h1v1h-1zM2 31h1v1h-1zM9 31h1v1h-1zM21 31h1v1h-1zM34 31h1v1h-1zM15 32h1v1h-1zM21 32h1v1h-1zM3 34h1v1h-1zM31 35h1v1h-1zM17 36h1v1h-1zM20 36h1v1h-1zM21 36h1v1h-1zM30 36h1v1h-1zM33 36h1v1h-1zM13 37h1v1h-1zM21 37h1v1h-1zM24 37h1v1h-1zM25 37h1v1h-1zM26 37h1v1h-1zM30 37h1v1h-1zM32 37h1v1h-1zM34 37h1v1h-1zM3 38h1v1h-1zM4 38h1v1h-1zM23 38h1v1h-1zM15 39h1v1h-1zM16 39h1v1h-1zM17 39h1v1h-1zM19 39h1v1h-1zM24 39h1v1h-1zM32 40h1v1h-1zM7 42h1v1h-1zM20 42h1v1h-1zM11 43h1v1h-1zM17 43h1v1h-1zM25 43h1v1h-1zM30 43h1v1h-1zM11 44h1v1h-1zM16 44h1v1h-1zM28 44h1v1h-1zM9 45h1v1h-1zM19 45h1v1h-1zM21 45h1v1h-1zM23 45h1v1h-1zM14 46h1v1h-1zM25 46h1v1h-1zM31 46h1v1h-1zM11 48h1v1h-1zM5 49h1v1h-1zM2 50h1v1h-1zM3 50h1v1h-1zM7 50h1v1h-1zM19 50h1v1h-1zM26 50h1v1h-1zM27 50h1v1h-1zM28 50h1v1h-1zM32 50h1v1h-1zM33 50h1v1h-1zM1 51h1v1h-1zM9 51h1v1h-1zM20 51h1v1h-1zM21 51h1v1h-1zM24 51h1v1h-1zM26 51h1v1h-1zM30 51h1v1h-1zM31 51h1v1h-1zM30 52h1v1h-1zM34 52h1v1h-1zM1 57h1v1h-1zM7 57h1v1h-1zM12 57h1v1h-1zM22 57h1v1h-1zM24 57h1v1h-1zM29 57h1v1h-1zM33 57h1v1h-1zM10 58h1v1h-1zM11 58h1v1h-1zM12 58h1v1h-1zM16 58h1v1h-1zM31 58h1v1h-1zM14 59h1v1h-1zM18 59h1v1h-1zM28 59h1v1h-1zM7 62h1v1h-1zM8 62h1v1h-1zM10 62h1v1h-1zM12 62h1v1h-1zM15 62h1v1h-1zM20 62h1v1h-1zM30 62h1v1h-1zM26 63h1v1h-1zM33 63h1v1h-1zM11 64h1v1h-1zM16 64h1v1h-1zM19 64h1v1h-1zM30 64h1v1h-1zM32 64h1v1h-1zM33 64h1v1h-1zM0 65h1v1h-1zM9 65h1v1h-1zM10 65h1v1h-1zM14 65h1v1h-1zM19 65h1v1h-1zM6 66h1v1h-1zM3 69h1v1h-1zM20 69h1v1h-1zM26 69h1v1h-1zM32 69h1v1h-1zM13 70h1v1h-1zM16 70h1v1h-1zM34 70h1v1h-1zM25 74h1v1h-1zM0 76h1v1h-1zM10 76h1v1h-1zM11 76h1v1h-1zM18 76h1v1h-1zM28 76h1v1h-1zM31 76h1v1h-1zM33 76h1v1h-1zM3 77h1v1h-1zM6 77h1v1h-1zM8 77h1v1h-1zM11 77h1v1h-1zM12 77h1v1h-1zM8 78h1v1h-1zM12 78h1v1h-1zM17 78h1v1h-1zM19 78h1v1h-1zM2 79h1v1h-1zM8 79h1v1h-1zM6 82h1v1h-1zM14 82h1v1h-1zM16 82h1v1h-1zM17 82h1v1h-1zM29 82h1v1h-1zM31 82h1v1h-1zM1 83h1v1h-1zM5 83h1v1h-1zM31 83h1v1h-1zM2 84h1v1h-1zM10 84h1v1h-1zM12 84h1v1h-1zM13 84h1v1h-1zM18 84h1v1h-1zM24 84h1v1h-1zM30 84h1v1h-1z"/>
<path fill="#666666" d="M15 0h1v1h-1zM26 0h1v1h-1zM2 1h1v1h-1zM5 2h1v1h-1zM22 2h1v1h-1zM23 2h1v1h-1zM34 2h1v1h-1zM4 3h1v1h-1zM11 3h1v1h-1zM26 3h1v1h-1zM30 3h1v1h-1zM31 3h1v1h-1zM33 3h1v1h-1zM8 4h1v1h-1zM12 4h1v1h-1zM15 4h1v1h-1zM18 4h1v1h-1zM12 5h1v1h-1zM32 6h1v1h-1zM34 7h1v1h-1zM1 9h1v1h-1zM8 9h1v1h-1zM17 9h1v1h-1zM21 10h1v1h-1zM29 10h1v1h-1zM1 11h1v1h-1zM2 11h1v1h-1zM8 11h1v1h-1zM10 11h1v1h-1zM17 11h1v1h-1zM21 11h1v1h-1zM23 11h1v1h-1zM31 11h1v1h-1zM33 11h1v1h-1zM4 12h1v1h-1zM11 12h1v1h-1zM26 12h1v1h-1zM30 12h1v1h-1zM5 13h1v1h-1zM33 16h1v1h-1zM20 17h1v1h-1zM27 17h1v1h-1zM0 18h1v1h-1zM7 18h1v1h-1zM8 18h1v1h-1zM16 18h1v1h-1zM29 18h1v1h-1zM30 18h1v1h-1zM1 19h1v1h-1zM7 19h1v1h-1zM24 19h1v1h-1zM26 19h1v1h-1zM30 19h1v1h-1zM32 19h1v1h-1zM21 22h1v1h-1zM0 24h1v1h-1zM14 24h1v1h-1zM31 24h1v1h-1zM0 25h1v1h-1zM5 25h1v1h-1zM15 25h1v1h-1zM17 25h1v1h-1zM24 25h1v1h-1zM34 25h1v1h-1zM5 26h1v1h-1zM7 26h1v1h-1zM17 26h1v1h-1zM19 26h1v1h-1zM22 26h1v1h-1zM24 26h1v1h-1zM26 26h1v1h-1zM30 26h1v1h-1zM31 26h1v1h-1zM32 26h1v1h-1zM5 29h1v1h-1zM15 29h1v1h-1zM0 30h1v1h-1zM15 30h1v1h-1zM27 30h1v1h-1zM31 30h1v1h-1zM3 31h1v1h-1zM15 31h1v1h-1zM19 31h1v1h-1zM27 31h1v1h-1zM28 31h1v1h-1zM29 31h1v1h-1zM33 31h1v1h-1zM0 32h1v1h-1zM5 32h1v1h-1zM17 32h1v1h-1zM22 32h1v1h-1zM28 32h1v1h-1zM4 33h1v1h-1zM5 36h1v1h-1zM7 36h1v1h-1zM16 36h1v1h-1zM34 36h1v1h-1zM10 37h1v1h-1zM12 37h1v1h-1zM15 37h1v1h-1zM31 37h1v1h-1zM6 38h1v1h-1zM14 38h1v1h-1zM16 38h1v1h-1zM18 38h1v1h-1zM28 38h1v1h-1zM8 39h1v1h-1zM22 39h1v1h-1zM32 39h1v1h-1zM15 40h1v1h-1zM24 40h1v1h-1zM21 42h1v1h-1zM14 43h1v1h-1zM20 45h1v1h-1zM21 46h1v1h-1zM26 46h1v1h-1zM30 47h1v1h-1zM2 48h1v1h-1zM7 49h1v1h-1zM15 49h1v1h-1zM23 49h1v1h-1zM25 49h1v1h-1zM27 49h1v1h-1zM13 50h1v1h-1zM31 50h1v1h-1zM11 51h1v1h-1zM13 51h1v1h-1zM19 51h1v1h-1zM25 51h1v1h-1zM28 51h1v1h-1zM29 51h1v1h-1zM3 52h1v1h-1zM14 52h1v1h-1zM16 52h1v1h-1zM30 53h1v1h-1zM7 54h1v1h-1zM13 54h1v1h-1zM14 55h1v1h-1zM17 55h1v1h-1zM8 56h1v1h-1zM10 56h1v1h-1zM11 56h1v1h-1zM14 56h1v1h-1zM16 56h1v1h-1zM21 56h1v1h-1zM26 56h1v1h-1zM29 56h1v1h-1zM9 57h1v1h-1zM17 57h1v1h-1zM25 57h1v1h-1zM30 57h1v1h-1zM14 58h1v1h-1zM17 58h1v1h-1zM21 58h1v1h-1zM26 58h1v1h-1zM27 58h1v1h-1zM34 58h1v1h-1zM2 59h1v1h-1zM15 59h1v1h-1zM31 59h1v1h-1zM32 59h1v1h-1zM34 59h1v1h-1zM2 62h1v1h-1zM13 62h1v1h-1zM23 62h1v1h-1zM27 62h1v1h-1zM0 63h1v1h-1zM1 63h1v1h-1zM2 63h1v1h-1zM6 63h1v1h-1zM7 63h1v1h-1zM16 63h1v1h-1zM20 63h1v1h-1zM22 63h1v1h-1zM30 63h1v1h-1zM20 64h1v1h-1zM26 64h1v1h-1zM25 65h1v1h-1zM1 69h1v1h-1zM8 69h1v1h-1zM16 69h1v1h-1zM21 69h1v1h-1zM1 70h1v1h-1zM3 70h1v1h-1zM4 70h1v1h-1zM7 70h1v1h-1zM22 70h1v1h-1zM26 70h1v1h-1zM1 71h1v1h-1zM11 71h1v1h-1zM17 71h1v1h-1zM19 71h1v1h-1zM28 73h1v1h-1zM11 74h1v1h-1zM13 74h1v1h-1zM33 74h1v1h-1zM14 76h1v1h-1zM16 76h1v1h-1zM13 77h1v1h-1zM22 77h1v1h-1zM11 78h1v1h-1zM18 78h1v1h-1zM26 78h1v1h-1zM34 78h1v1h-1zM2 80h1v1h-1zM8 81h1v1h-1zM7 82h1v1h-1zM9 82h1v1h-1zM20 82h1v1h-1zM21 82h1v1h-1zM25 82h1v1h-1zM28 82h1v1h-1zM33 82h1v1h-1zM3 83h1v1h-1zM12 83h1v1h-1zM13 83h1v1h-1zM14 83h1v1h-1zM30 83h1v1h-1zM0 84h1v1h-1zM6 84h1v1h-1zM17 84h1v1h-1zM29 84h1v1h-1z"/>
<path fill="#777777" d="M0 0h1v1h-1zM5 0h1v1h-1zM7 1h1v1h-1zM0 2h1v1h-1zM18 2h1v1h-1zM25 2h1v1h-1zM26 2h1v1h-1zM31 2h1v1h-1zM8 3h1v1h-1zM19 3h1v1h-1zM5 4h1v1h-1zM14 4h1v1h-1zM19 4h1v1h-1zM24 4h1v1h-1zM26 4h1v1h-1zM16 5h1v1h-1zM28 5h1v1h-1zM1 7h1v1h-1zM2 8h1v1h-1zM18 9h1v1h-1zM1 10h1v1h-1zM3 10h1v1h-1zM5 10h1v1h-1zM6 10h1v1h-1zM17 10h1v1h-1zM30 10h1v1h-1zM22 11h1v1h-1zM27 11h1v1h-1zM30 11h1v1h-1zM8 12h1v1h-1zM16 12h1v1h-1zM27 12h1v1h-1zM32 12h1v1h-1zM33 12h1v1h-1zM34 12h1v1h-1zM26 13h1v1h-1zM22 14h1v1h-1zM23 14h1v1h-1zM0 15h1v1h-1zM5 16h1v1h-1zM6 16h1v1h-1zM3 17h1v1h-1zM4 17h1v1h-1zM5 17h1v1h-1zM15 17h1v1h-1zM16 17h1v1h-1zM25 17h1v1h-1zM26 17h1v1h-1zM31 17h1v1h-1zM1 18h1v1h-1zM3 18h1v1h-1zM6 18h1v1h-1zM15 18h1v1h-1zM26 18h1v1h-1zM10 19h1v1h-1zM14 19h1v1h-1zM16 19h1v1h-1zM34 19h1v1h-1zM17 20h1v1h-1zM19 21h1v1h-1zM33 22h1v1h-1zM1 23h1v1h-1zM5 24h1v1h-1zM25 24h1v1h-1zM28 24h1v1h-1zM3 25h1v1h-1zM8 25h1v1h-1zM10 25h1v1h-1zM0 26h1v1h-1zM3 26h1v1h-1zM21 26h1v1h-1zM29 26h1v1h-1zM34 26h1v1h-1zM21 27h1v1h-1zM23 28h1v1h-1zM27 28h1v1h-1zM10 29h1v1h-1zM12 29h1v1h-1zM20 29h1v1h-1zM23 29h1v1h-1zM26 29h1v1h-1zM1 30h1v1h-1zM4 30h1v1h-1zM7 30h1v1h-1zM21 30h1v1h-1zM24 30h1v1h-1zM26 30h1v1h-1zM30 30h1v1h-1zM11 31h1v1h-1zM18 31h1v1h-1zM7 32h1v1h-1zM9 32h1v1h-1zM31 32h1v1h-1zM32 32h1v1h-1zM5 33h1v1h-1zM5 34h1v1h-1zM0 35h1v1h-1zM0 36h1v1h-1zM3 36h1v1h-1zM12 36h1v1h-1zM14 36h1v1h-1zM15 36h1v1h-1zM31 36h1v1h-1zM2 37h1v1h-1zM5 37h1v1h-1zM11 37h1v1h-1zM17 37h1v1h-1zM33 37h1v1h-1zM5 38h1v1h-1zM13 38h1v1h-1zM22 38h1v1h-1zM26 38h1v1h-1zM29 38h1v1h-1zM3 39h1v1h-1zM6 39h1v1h-1zM10 39h1v1h-1zM14 39h1v1h-1zM20 39h1v1h-1zM26 39h1v1h-1zM33 39h1v1h-1zM19 40h1v1h-1zM5 41h1v1h-1zM1 42h1v1h-1zM29 42h1v1h-1zM31 42h1v1h-1zM7 43h1v1h-1zM19 43h1v1h-1zM16 45h1v1h-1zM10 46h1v1h-1zM29 46h1v1h-1zM12 47h1v1h-1zM6 48h1v1h-1zM20 48h1v1h-1zM8 49h1v1h-1zM10 49h1v1h-1zM11 49h1v1h-1zM14 49h1v1h-1zM31 49h1v1h-1zM10 50h1v1h-1zM16 50h1v1h-1zM22 50h1v1h-1zM24 50h1v1h-1zM12 51h1v1h-1zM15 51h1v1h-1zM18 51h1v1h-1zM2 52h1v1h-1zM13 52h1v1h-1zM17 52h1v1h-1zM18 52h1v1h-1zM19 52h1v1h-1zM26 54h1v1h-1zM7 56h1v1h-1zM21 57h1v1h-1zM26 57h1v1h-1zM27 57h1v1h-1zM31 57h1v1h-1zM5 58h1v1h-1zM23 58h1v1h-1zM29 58h1v1h-1zM33 59h1v1h-1zM13 60h1v1h-1zM14 60h1v1h-1zM11 62h1v1h-1zM14 62h1v1h-1zM21 62h1v1h-1zM26 62h1v1h-1zM28 62h1v1h-1zM32 62h1v1h-1zM17 63h1v1h-1zM23 63h1v1h-1zM32 63h1v1h-1zM3 64h1v1h-1zM18 64h1v1h-1zM28 64h1v1h-1zM31 64h1v1h-1zM2 65h1v1h-1zM11 65h1v1h-1zM30 65h1v1h-1zM4 66h1v1h-1zM9 66h1v1h-1zM11 66h1v1h-1zM17 66h1v1h-1zM28 68h1v1h-1zM19 69h1v1h-1zM25 69h1v1h-1zM10 70h1v1h-1zM11 70h1v1h-1zM18 70h1v1h-1zM23 70h1v1h-1zM32 70h1v1h-1zM4 71h1v1h-1zM13 71h1v1h-1zM20 71h1v1h-1zM26 71h1v1h-1zM28 72h1v1h-1zM19 73h1v1h-1zM6 74h1v1h-1zM7 74h1v1h-1zM12 75h1v1h-1zM15 75h1v1h-1zM30 75h1v1h-1zM3 76h1v1h-1zM13 76h1v1h-1zM20 76h1v1h-1zM1 77h1v1h-1zM14 77h1v1h-1zM21 77h1v1h-1zM27 77h1v1h-1zM29 77h1v1h-1zM0 78h1v1h-1zM15 78h1v1h-1zM27 78h1v1h-1zM33 78h1v1h-1zM33 79h1v1h-1zM30 80h1v1h-1zM3 81h1v1h-1zM2 82h1v1h-1zM29 83h1v1h-1zM33 83h1v1h-1zM4 84h1v1h-1zM5 84h1v1h-1zM7 84h1v1h-1zM9 84h1v1h-1zM19 84h1v1h-1zM28 84h1v1h-1zM31 84h1v1h-1zM33 85h1v1h-1zM27 86h1v1h-1zM33 86h1v1h-1z"/>
<path fill="#888888" d="M23 0h1v1h-1zM9 1h1v1h-1zM21 1h1v1h-1zM7 2h1v1h-1zM12 2h1v1h-1zM13 2h1v1h-1zM19 2h1v1h-1zM20 2h1v1h-1zM17 3h1v1h-1zM28 3h1v1h-1zM1 4h1v1h-1zM4 4h1v1h-1zM11 4h1v1h-1zM13 4h1v1h-1zM28 4h1v1h-1zM3 5h1v1h-1zM20 5h1v1h-1zM23 5h1v1h-1zM25 5h1v1h-1zM30 5h1v1h-1zM1 6h1v1h-1zM9 7h1v1h-1zM1 8h1v1h-1zM11 8h1v1h-1zM29 8h1v1h-1zM32 8h1v1h-1zM34 8h1v1h-1zM4 10h1v1h-1zM0 11h1v1h-1zM7 11h1v1h-1zM26 11h1v1h-1zM32 11h1v1h-1zM17 12h1v1h-1zM21 12h1v1h-1zM25 12h1v1h-1zM29 13h1v1h-1zM34 14h1v1h-1zM4 15h1v1h-1zM5 15h1v1h-1zM12 16h1v1h-1zM15 16h1v1h-1zM22 16h1v1h-1zM25 16h1v1h-1zM14 17h1v1h-1zM21 17h1v1h-1zM30 17h1v1h-1zM34 17h1v1h-1zM18 18h1v1h-1zM19 18h1v1h-1zM0 19h1v1h-1zM2 19h1v1h-1zM23 19h1v1h-1zM25 19h1v1h-1zM28 19h1v1h-1zM27 20h1v1h-1zM30 20h1v1h-1zM9 21h1v1h-1zM15 21h1v1h-1zM1 22h1v1h-1zM18 22h1v1h-1zM20 22h1v1h-1zM28 23h1v1h-1zM4 24h1v1h-1zM8 24h1v1h-1zM17 24h1v1h-1zM19 24h1v1h-1zM26 24h1v1h-1zM33 24h1v1h-1zM2 25h1v1h-1zM18 25h1v1h-1zM21 25h1v1h-1zM4 26h1v1h-1zM20 26h1v1h-1zM28 26h1v1h-1zM14 27h1v1h-1zM17 27h1v1h-1zM7 28h1v1h-1zM1 29h1v1h-1zM3 29h1v1h-1zM4 29h1v1h-1zM6 29h1v1h-1zM17 29h1v1h-1zM22 29h1v1h-1zM24 29h1v1h-1zM34 29h1v1h-1zM6 30h1v1h-1zM9 30h1v1h-1zM10 31h1v1h-1zM16 31h1v1h-1zM23 31h1v1h-1zM24 31h1v1h-1zM4 32h1v1h-1zM8 32h1v1h-1zM12 32h1v1h-1zM14 32h1v1h-1zM2 33h1v1h-1zM7 33h1v1h-1zM25 34h1v1h-1zM9 35h1v1h-1zM23 35h1v1h-1zM28 36h1v1h-1zM0 37h1v1h-1zM1 37h1v1h-1zM4 37h1v1h-1zM9 37h1v1h-1zM23 37h1v1h-1zM27 37h1v1h-1zM24 38h1v1h-1zM32 38h1v1h-1zM4 39h1v1h-1zM9 39h1v1h-1zM11 39h1v1h-1zM13 39h1v1h-1zM18 39h1v1h-1zM21 39h1v1h-1zM25 39h1v1h-1zM31 39h1v1h-1zM7 40h1v1h-1zM18 40h1v1h-1zM28 40h1v1h-1zM4 41h1v1h-1zM4 44h1v1h-1zM12 44h1v1h-1zM22 45h1v1h-1zM25 45h1v1h-1zM19 46h1v1h-1zM5 47h1v1h-1zM5 48h1v1h-1zM27 48h1v1h-1zM1 49h1v1h-1zM2 49h1v1h-1zM9 49h1v1h-1zM12 49h1v1h-1zM13 49h1v1h-1zM19 49h1v1h-1zM21 49h1v1h-1zM25 50h1v1h-1zM30 50h1v1h-1zM8 51h1v1h-1zM1 52h1v1h-1zM5 52h1v1h-1zM10 52h1v1h-1zM12 52h1v1h-1zM15 52h1v1h-1zM21 52h1v1h-1zM23 52h1v1h-1zM24 52h1v1h-1zM25 52h1v1h-1zM28 52h1v1h-1zM31 52h1v1h-1zM32 52h1v1h-1zM4 53h1v1h-1zM17 53h1v1h-1zM22 53h1v1h-1zM29 53h1v1h-1zM25 54h1v1h-1zM7 55h1v1h-1zM8 55h1v1h-1zM27 55h1v1h-1zM0 56h1v1h-1zM4 56h1v1h-1zM18 56h1v1h-1zM20 56h1v1h-1zM24 56h1v1h-1zM25 56h1v1h-1zM31 56h1v1h-1zM8 57h1v1h-1zM6 58h1v1h-1zM20 58h1v1h-1zM13 59h1v1h-1zM16 59h1v1h-1zM17 59h1v1h-1zM24 59h1v1h-1zM26 59h1v1h-1zM27 59h1v1h-1zM29 59h1v1h-1zM3 61h1v1h-1zM6 61h1v1h-1zM17 61h1v1h-1zM33 61h1v1h-1zM34 61h1v1h-1zM17 62h1v1h-1zM5 63h1v1h-1zM21 63h1v1h-1zM7 64h1v1h-1zM27 64h1v1h-1zM34 64h1v1h-1zM18 65h1v1h-1zM21 65h1v1h-1zM26 65h1v1h-1zM31 65h1v1h-1zM34 65h1v1h-1zM10 66h1v1h-1zM20 66h1v1h-1zM29 66h1v1h-1zM22 67h1v1h-1zM24 67h1v1h-1zM0 68h1v1h-1zM19 68h1v1h-1zM34 68h1v1h-1zM2 69h1v1h-1zM5 69h1v1h-1zM9 69h1v1h-1zM18 69h1v1h-1zM24 69h1v1h-1zM29 69h1v1h-1zM15 70h1v1h-1zM27 70h1v1h-1zM0 71h1v1h-1zM0 72h1v1h-1zM11 72h1v1h-1zM15 72h1v1h-1zM29 73h1v1h-1zM4 74h1v1h-1zM24 74h1v1h-1zM4 75h1v1h-1zM8 75h1v1h-1zM13 75h1v1h-1zM7 76h1v1h-1zM8 76h1v1h-1zM17 76h1v1h-1zM26 76h1v1h-1zM29 76h1v1h-1zM30 77h1v1h-1zM14 78h1v1h-1zM12 79h1v1h-1zM13 79h1v1h-1zM17 79h1v1h-1zM28 79h1v1h-1zM29 79h1v1h-1zM6 81h1v1h-1zM11 81h1v1h-1zM26 81h1v1h-1zM29 81h1v1h-1zM33 81h1v1h-1zM10 82h1v1h-1zM19 82h1v1h-1zM32 82h1v1h-1zM8 83h1v1h-1zM22 83h1v1h-1zM1 84h1v1h-1zM6 85h1v1h-1zM5 86h1v1h-1zM13 86h1v1h-1zM14 86h1v1h-1zM19 86h1v1h-1zM9 87h1v1h-1zM11 87h1v1h-1zM15 87h1v1h-1z"/>
<path fill="#999999" d="M11 0h1v1h-1zM12 0h1v1h-1zM14 1h1v1h-1zM15 1h1v1h-1zM27 1h1v1h-1zM8 2h1v1h-1zM10 2h1v1h-1zM14 2h1v1h-1zM16 2h1v1h-1zM17 2h1v1h-1zM24 2h1v1h-1zM27 2h1v1h-1zM33 2h1v1h-1zM20 3h1v1h-1zM9 4h1v1h-1zM16 4h1v1h-1zM22 4h1v1h-1zM31 4h1v1h-1zM0 5h1v1h-1zM5 5h1v1h-1zM7 5h1v1h-1zM10 5h1v1h-1zM14 5h1v1h-1zM18 5h1v1h-1zM24 5h1v1h-1zM8 6h1v1h-1zM24 6h1v1h-1zM34 6h1v1h-1zM10 7h1v1h-1zM25 7h1v1h-1zM28 7h1v1h-1zM19 8h1v1h-1zM33 8h1v1h-1zM0 9h1v1h-1zM2 9h1v1h-1zM11 9h1v1h-1zM32 9h1v1h-1zM33 9h1v1h-1zM7 10h1v1h-1zM5 11h1v1h-1zM0 12h1v1h-1zM3 13h1v1h-1zM23 13h1v1h-1zM27 13h1v1h-1zM3 14h1v1h-1zM10 14h1v1h-1zM25 14h1v1h-1zM26 14h1v1h-1zM31 14h1v1h-1zM1 15h1v1h-1zM14 15h1v1h-1zM20 15h1v1h-1zM1 17h1v1h-1zM11 17h1v1h-1zM17 17h1v1h-1zM12 19h1v1h-1zM4 21h1v1h-1zM5 21h1v1h-1zM17 21h1v1h-1zM23 22h1v1h-1zM24 22h1v1h-1zM0 23h1v1h-1zM11 23h1v1h-1zM16 23h1v1h-1zM21 23h1v1h-1zM30 23h1v1h-1zM31 23h1v1h-1zM32 23h1v1h-1zM2 24h1v1h-1zM34 24h1v1h-1zM12 25h1v1h-1zM30 25h1v1h-1zM1 26h1v1h-1zM12 26h1v1h-1zM3 27h1v1h-1zM6 27h1v1h-1zM32 27h1v1h-1zM34 27h1v1h-1zM7 29h1v1h-1zM21 29h1v1h-1zM31 29h1v1h-1zM33 29h1v1h-1zM11 30h1v1h-1zM16 30h1v1h-1zM19 30h1v1h-1zM25 30h1v1h-1zM4 31h1v1h-1zM20 31h1v1h-1zM2 32h1v1h-1zM6 32h1v1h-1zM10 32h1v1h-1zM13 32h1v1h-1zM16 32h1v1h-1zM3 33h1v1h-1zM11 33h1v1h-1zM25 33h1v1h-1zM2 34h1v1h-1zM11 34h1v1h-1zM12 34h1v1h-1zM13 34h1v1h-1zM20 34h1v1h-1zM26 34h1v1h-1zM34 34h1v1h-1zM8 35h1v1h-1zM11 35h1v1h-1zM15 35h1v1h-1zM26 35h1v1h-1zM32 35h1v1h-1zM2 36h1v1h-1zM4 36h1v1h-1zM6 36h1v1h-1zM13 36h1v1h-1zM18 36h1v1h-1zM19 36h1v1h-1zM23 36h1v1h-1zM25 36h1v1h-1zM28 37h1v1h-1zM11 38h1v1h-1zM30 38h1v1h-1zM33 38h1v1h-1zM2 39h1v1h-1zM30 39h1v1h-1zM11 40h1v1h-1zM17 40h1v1h-1zM20 40h1v1h-1zM23 40h1v1h-1zM1 41h1v1h-1zM11 41h1v1h-1zM15 41h1v1h-1zM33 41h1v1h-1zM5 42h1v1h-1zM15 43h1v1h-1zM30 45h1v1h-1zM1 47h1v1h-1zM9 47h1v1h-1zM16 47h1v1h-1zM23 47h1v1h-1zM31 47h1v1h-1zM12 48h1v1h-1zM13 48h1v1h-1zM21 48h1v1h-1zM34 48h1v1h-1zM0 49h1v1h-1zM16 49h1v1h-1zM18 49h1v1h-1zM0 50h1v1h-1zM12 50h1v1h-1zM15 50h1v1h-1zM18 50h1v1h-1zM21 50h1v1h-1zM6 51h1v1h-1zM10 51h1v1h-1zM0 52h1v1h-1zM4 52h1v1h-1zM20 52h1v1h-1zM26 52h1v1h-1zM27 52h1v1h-1zM5 53h1v1h-1zM15 53h1v1h-1zM20 53h1v1h-1zM28 53h1v1h-1zM32 53h1v1h-1zM4 54h1v1h-1zM15 54h1v1h-1zM0 55h1v1h-1zM1 55h1v1h-1zM13 55h1v1h-1zM32 55h1v1h-1zM1 56h1v1h-1zM2 56h1v1h-1zM6 56h1v1h-1zM12 56h1v1h-1zM17 56h1v1h-1zM33 56h1v1h-1zM2 57h1v1h-1zM3 57h1v1h-1zM6 57h1v1h-1zM10 57h1v1h-1zM14 57h1v1h-1zM24 58h1v1h-1zM30 58h1v1h-1zM1 59h1v1h-1zM8 59h1v1h-1zM11 59h1v1h-1zM22 59h1v1h-1zM8 60h1v1h-1zM26 60h1v1h-1zM31 60h1v1h-1zM34 60h1v1h-1zM2 61h1v1h-1zM7 61h1v1h-1zM13 61h1v1h-1zM15 61h1v1h-1zM19 61h1v1h-1zM29 61h1v1h-1zM9 62h1v1h-1zM34 62h1v1h-1zM3 63h1v1h-1zM12 63h1v1h-1zM15 63h1v1h-1zM2 64h1v1h-1zM15 64h1v1h-1zM22 64h1v1h-1zM1 65h1v1h-1zM5 65h1v1h-1zM6 65h1v1h-1zM7 65h1v1h-1zM8 65h1v1h-1zM16 65h1v1h-1zM20 65h1v1h-1zM29 65h1v1h-1zM32 65h1v1h-1zM33 65h1v1h-1zM0 66h1v1h-1zM14 66h1v1h-1zM28 66h1v1h-1zM32 66h1v1h-1zM3 67h1v1h-1zM9 67h1v1h-1zM10 67h1v1h-1zM14 67h1v1h-1zM15 67h1v1h-1zM28 67h1v1h-1zM31 67h1v1h-1zM2 68h1v1h-1zM25 68h1v1h-1zM27 68h1v1h-1zM30 68h1v1h-1zM22 69h1v1h-1zM12 70h1v1h-1zM5 71h1v1h-1zM12 71h1v1h-1zM18 71h1v1h-1zM4 72h1v1h-1zM6 72h1v1h-1zM9 72h1v1h-1zM10 72h1v1h-1zM34 72h1v1h-1zM10 73h1v1h-1zM13 73h1v1h-1zM14 73h1v1h-1zM34 73h1v1h-1zM3 74h1v1h-1zM14 74h1v1h-1zM19 74h1v1h-1zM1 75h1v1h-1zM6 75h1v1h-1zM9 75h1v1h-1zM19 75h1v1h-1zM31 75h1v1h-1zM32 75h1v1h-1zM32 76h1v1h-1zM1 78h1v1h-1zM13 78h1v1h-1zM21 78h1v1h-1zM29 78h1v1h-1zM30 78h1v1h-1zM0 79h1v1h-1zM7 79h1v1h-1zM18 79h1v1h-1zM19 79h1v1h-1zM21 79h1v1h-1zM3 80h1v1h-1zM25 80h1v1h-1zM31 80h1v1h-1zM12 81h1v1h-1zM15 81h1v1h-1zM17 81h1v1h-1zM19 81h1v1h-1zM4 82h1v1h-1zM6 83h1v1h-1zM16 83h1v1h-1zM20 84h1v1h-1zM22 84h1v1h-1zM4 85h1v1h-1zM16 85h1v1h-1zM18 85h1v1h-1zM27 85h1v1h-1zM29 85h1v1h-1zM10 86h1v1h-1zM15 86h1v1h-1zM28 86h1v1h-1zM32 86h1v1h-1zM3 87h1v1h-1zM4 87h1v1h-1zM16 87h1v1h-1zM19 87h1v1h-1zM27 87h1v1h-1zM34 87h1v1h-1z"/>
<path fill="#aaaaaa" d="M7 0h1v1h-1zM21 0h1v1h-1zM27 0h1v1h-1zM28 0h1v1h-1zM29 0h1v1h-1zM12 1h1v1h-1zM22 1h1v1h-1zM26 1h1v1h-1zM29 1h1v1h-1zM30 1h1v1h-1zM33 1h1v1h-1zM9 2h1v1h-1zM23 3h1v1h-1zM6 4h1v1h-1zM20 4h1v1h-1zM32 4h1v1h-1zM4 5h1v1h-1zM21 5h1v1h-1zM33 5h1v1h-1zM34 5h1v1h-1zM5 6h1v1h-1zM6 6h1v1h-1zM12 6h1v1h-1zM15 6h1v1h-1zM20 6h1v1h-1zM26 6h1v1h-1zM27 6h1v1h-1zM5 7h1v1h-1zM6 7h1v1h-1zM8 7h1v1h-1zM12 7h1v1h-1zM17 7h1v1h-1zM31 7h1v1h-1zM26 8h1v1h-1zM7 9h1v1h-1zM13 9h1v1h-1zM19 9h1v1h-1zM22 9h1v1h-1zM25 9h1v1h-1zM14 11h1v1h-1zM7 12h1v1h-1zM12 12h1v1h-1zM6 13h1v1h-1zM19 13h1v1h-1zM22 13h1v1h-1zM9 14h1v1h-1zM13 14h1v1h-1zM21 14h1v1h-1zM2 15h1v1h-1zM6 15h1v1h-1zM7 15h1v1h-1zM11 15h1v1h-1zM22 15h1v1h-1zM28 15h1v1h-1zM31 15h1v1h-1zM8 16h1v1h-1zM10 16h1v1h-1zM13 16h1v1h-1zM29 16h1v1h-1zM32 16h1v1h-1zM22 18h1v1h-1zM5 19h1v1h-1zM11 19h1v1h-1zM5 20h1v1h-1zM10 20h1v1h-1zM14 20h1v1h-1zM15 20h1v1h-1zM21 20h1v1h-1zM23 20h1v1h-1zM10 21h1v1h-1zM12 21h1v1h-1zM22 21h1v1h-1zM3 22h1v1h-1zM4 22h1v1h-1zM12 22h1v1h-1zM14 22h1v1h-1zM28 22h1v1h-1zM7 23h1v1h-1zM15 23h1v1h-1zM22 23h1v1h-1zM23 23h1v1h-1zM26 23h1v1h-1zM33 23h1v1h-1zM1 24h1v1h-1zM15 24h1v1h-1zM14 26h1v1h-1zM5 27h1v1h-1zM18 27h1v1h-1zM19 27h1v1h-1zM22 27h1v1h-1zM31 27h1v1h-1zM3 28h1v1h-1zM5 28h1v1h-1zM16 28h1v1h-1zM17 28h1v1h-1zM22 28h1v1h-1zM26 28h1v1h-1zM33 28h1v1h-1zM34 28h1v1h-1zM2 29h1v1h-1zM14 29h1v1h-1zM16 29h1v1h-1zM19 29h1v1h-1zM25 29h1v1h-1zM32 29h1v1h-1zM6 31h1v1h-1zM26 31h1v1h-1zM8 33h1v1h-1zM21 33h1v1h-1zM30 33h1v1h-1zM34 33h1v1h-1zM0 34h1v1h-1zM9 34h1v1h-1zM24 34h1v1h-1zM27 34h1v1h-1zM10 35h1v1h-1zM17 35h1v1h-1zM21 35h1v1h-1zM24 35h1v1h-1zM1 36h1v1h-1zM27 36h1v1h-1zM32 36h1v1h-1zM6 37h1v1h-1zM25 38h1v1h-1zM1 39h1v1h-1zM5 39h1v1h-1zM12 39h1v1h-1zM34 39h1v1h-1zM0 40h1v1h-1zM26 40h1v1h-1zM31 40h1v1h-1zM2 41h1v1h-1zM3 41h1v1h-1zM9 41h1v1h-1zM22 41h1v1h-1zM27 41h1v1h-1zM2 47h1v1h-1zM4 47h1v1h-1zM25 47h1v1h-1zM0 48h1v1h-1zM4 48h1v1h-1zM8 48h1v1h-1zM14 48h1v1h-1zM15 48h1v1h-1zM25 48h1v1h-1zM22 49h1v1h-1zM26 49h1v1h-1zM28 49h1v1h-1zM29 49h1v1h-1zM30 49h1v1h-1zM33 49h1v1h-1zM4 51h1v1h-1zM32 51h1v1h-1zM6 52h1v1h-1zM33 52h1v1h-1zM9 53h1v1h-1zM12 53h1v1h-1zM16 53h1v1h-1zM21 53h1v1h-1zM26 53h1v1h-1zM31 53h1v1h-1zM3 54h1v1h-1zM12 54h1v1h-1zM22 54h1v1h-1zM23 54h1v1h-1zM32 54h1v1h-1zM34 54h1v1h-1zM9 55h1v1h-1zM22 55h1v1h-1zM25 55h1v1h-1zM26 55h1v1h-1zM34 55h1v1h-1zM5 56h1v1h-1zM9 56h1v1h-1zM13 56h1v1h-1zM15 56h1v1h-1zM19 56h1v1h-1zM27 56h1v1h-1zM28 56h1v1h-1zM32 56h1v1h-1zM0 57h1v1h-1zM4 57h1v1h-1zM32 57h1v1h-1zM4 58h1v1h-1zM13 58h1v1h-1zM18 58h1v1h-1zM25 58h1v1h-1zM3 59h1v1h-1zM9 59h1v1h-1zM30 59h1v1h-1zM11 60h1v1h-1zM12 60h1v1h-1zM19 60h1v1h-1zM21 60h1v1h-1zM27 60h1v1h-1zM28 60h1v1h-1zM32 60h1v1h-1zM0 61h1v1h-1zM1 61h1v1h-1zM12 61h1v1h-1zM20 61h1v1h-1zM27 61h1v1h-1zM6 62h1v1h-1zM10 63h1v1h-1zM34 63h1v1h-1zM1 64h1v1h-1zM14 64h1v1h-1zM25 64h1v1h-1zM3 65h1v1h-1zM4 65h1v1h-1zM28 65h1v1h-1zM5 66h1v1h-1zM7 66h1v1h-1zM13 66h1v1h-1zM34 66h1v1h-1zM7 67h1v1h-1zM29 67h1v1h-1zM6 68h1v1h-1zM15 68h1v1h-1zM23 68h1v1h-1zM32 68h1v1h-1zM33 68h1v1h-1zM30 69h1v1h-1zM28 70h1v1h-1zM31 70h1v1h-1zM3 71h1v1h-1zM15 71h1v1h-1zM2 72h1v1h-1zM12 72h1v1h-1zM14 72h1v1h-1zM19 72h1v1h-1zM25 72h1v1h-1zM29 72h1v1h-1zM4 73h1v1h-1zM25 73h1v1h-1zM32 73h1v1h-1zM0 74h1v1h-1zM1 74h1v1h-1zM23 74h1v1h-1zM30 74h1v1h-1zM32 74h1v1h-1zM34 74h1v1h-1zM3 75h1v1h-1zM29 75h1v1h-1zM33 75h1v1h-1zM2 76h1v1h-1zM9 77h1v1h-1zM23 77h1v1h-1zM23 78h1v1h-1zM5 79h1v1h-1zM10 79h1v1h-1zM16 79h1v1h-1zM20 79h1v1h-1zM24 79h1v1h-1zM26 79h1v1h-1zM30 79h1v1h-1zM4 80h1v1h-1zM5 80h1v1h-1zM13 80h1v1h-1zM14 80h1v1h-1zM21 80h1v1h-1zM27 81h1v1h-1zM0 82h1v1h-1zM22 82h1v1h-1zM28 83h1v1h-1zM11 84h1v1h-1zM23 85h1v1h-1zM31 85h1v1h-1zM0 86h1v1h-1zM4 86h1v1h-1zM7 86h1v1h-1zM8 86h1v1h-1zM20 86h1v1h-1zM22 86h1v1h-1zM23 86h1v1h-1zM24 86h1v1h-1zM25 86h1v1h-1zM0 87h1v1h-1zM12 87h1v1h-1zM13 87h1v1h-1zM26 87h1v1h-1zM28 87h1v1h-1zM30 87h1v1h-1z"/>
<path fill="#bbbbbb" d="M1 0h1v1h-1zM3 0h1v1h-1zM6 0h1v1h-1zM10 0h1v1h-1zM13 0h1v1h-1zM22 0h1v1h-1zM25 0h1v1h-1zM16 1h1v1h-1zM17 1h1v1h-1zM29 2h1v1h-1zM30 2h1v1h-1zM13 3h1v1h-1zM8 5h1v1h-1zM19 5h1v1h-1zM22 5h1v1h-1zM26 5h1v1h-1zM3 6h1v1h-1zM7 6h1v1h-1zM11 6h1v1h-1zM14 6h1v1h-1zM28 6h1v1h-1zM0 7h1v1h-1zM4 7h1v1h-1zM11 7h1v1h-1zM13 7h1v1h-1zM18 7h1v1h-1zM19 7h1v1h-1zM23 7h1v1h-1zM26 7h1v1h-1zM33 7h1v1h-1zM15 8h1v1h-1zM16 8h1v1h-1zM23 8h1v1h-1zM10 9h1v1h-1zM23 9h1v1h-1zM29 9h1v1h-1zM31 9h1v1h-1zM0 10h1v1h-1zM16 10h1v1h-1zM0 13h1v1h-1zM2 13h1v1h-1zM8 13h1v1h-1zM12 13h1v1h-1zM13 13h1v1h-1zM16 13h1v1h-1zM20 13h1v1h-1zM24 13h1v1h-1zM33 13h1v1h-1zM0 14h1v1h-1zM5 14h1v1h-1zM11 14h1v1h-1zM19 14h1v1h-1zM24 14h1v1h-1zM30 14h1v1h-1zM12 15h1v1h-1zM15 15h1v1h-1zM23 15h1v1h-1zM26 15h1v1h-1zM7 16h1v1h-1zM18 16h1v1h-1zM28 16h1v1h-1zM2 20h1v1h-1zM7 20h1v1h-1zM12 20h1v1h-1zM19 20h1v1h-1zM25 20h1v1h-1zM26 20h1v1h-1zM33 20h1v1h-1zM0 21h1v1h-1zM7 21h1v1h-1zM8 21h1v1h-1zM11 21h1v1h-1zM13 21h1v1h-1zM18 21h1v1h-1zM23 21h1v1h-1zM25 21h1v1h-1zM26 21h1v1h-1zM29 21h1v1h-1zM34 21h1v1h-1zM9 22h1v1h-1zM31 22h1v1h-1zM32 22h1v1h-1zM34 22h1v1h-1zM12 23h1v1h-1zM19 23h1v1h-1zM20 23h1v1h-1zM24 23h1v1h-1zM27 23h1v1h-1zM13 26h1v1h-1zM0 27h1v1h-1zM2 27h1v1h-1zM7 27h1v1h-1zM8 27h1v1h-1zM2 28h1v1h-1zM4 28h1v1h-1zM6 28h1v1h-1zM9 28h1v1h-1zM12 28h1v1h-1zM13 28h1v1h-1zM18 28h1v1h-1zM19 28h1v1h-1zM20 28h1v1h-1zM24 28h1v1h-1zM30 28h1v1h-1zM31 28h1v1h-1zM9 29h1v1h-1zM5 30h1v1h-1zM20 30h1v1h-1zM0 33h1v1h-1zM9 33h1v1h-1zM13 33h1v1h-1zM17 33h1v1h-1zM28 33h1v1h-1zM31 33h1v1h-1zM10 34h1v1h-1zM14 34h1v1h-1zM18 34h1v1h-1zM22 34h1v1h-1zM30 34h1v1h-1zM1 35h1v1h-1zM7 35h1v1h-1zM12 35h1v1h-1zM13 35h1v1h-1zM16 35h1v1h-1zM27 35h1v1h-1zM29 35h1v1h-1zM33 35h1v1h-1zM9 36h1v1h-1zM10 36h1v1h-1zM11 36h1v1h-1zM22 36h1v1h-1zM15 38h1v1h-1zM27 39h1v1h-1zM29 39h1v1h-1zM6 40h1v1h-1zM9 40h1v1h-1zM16 40h1v1h-1zM21 40h1v1h-1zM22 40h1v1h-1zM6 41h1v1h-1zM13 41h1v1h-1zM17 41h1v1h-1zM21 41h1v1h-1zM24 41h1v1h-1zM29 41h1v1h-1zM8 47h1v1h-1zM18 47h1v1h-1zM16 48h1v1h-1zM22 48h1v1h-1zM26 48h1v1h-1zM32 48h1v1h-1zM4 49h1v1h-1zM24 49h1v1h-1zM34 49h1v1h-1zM4 50h1v1h-1zM7 52h1v1h-1zM11 52h1v1h-1zM1 53h1v1h-1zM2 54h1v1h-1zM16 54h1v1h-1zM20 54h1v1h-1zM33 54h1v1h-1zM2 55h1v1h-1zM15 55h1v1h-1zM29 55h1v1h-1zM31 55h1v1h-1zM33 55h1v1h-1zM3 56h1v1h-1zM20 57h1v1h-1zM0 59h1v1h-1zM10 59h1v1h-1zM12 59h1v1h-1zM19 59h1v1h-1zM9 60h1v1h-1zM16 60h1v1h-1zM18 60h1v1h-1zM20 60h1v1h-1zM23 60h1v1h-1zM33 60h1v1h-1zM4 61h1v1h-1zM10 61h1v1h-1zM31 61h1v1h-1zM15 65h1v1h-1zM24 65h1v1h-1zM27 65h1v1h-1zM3 66h1v1h-1zM12 66h1v1h-1zM25 66h1v1h-1zM17 67h1v1h-1zM19 67h1v1h-1zM30 67h1v1h-1zM1 68h1v1h-1zM10 68h1v1h-1zM17 68h1v1h-1zM29 68h1v1h-1zM3 72h1v1h-1zM17 72h1v1h-1zM31 72h1v1h-1zM32 72h1v1h-1zM33 72h1v1h-1zM0 73h1v1h-1zM1 73h1v1h-1zM7 73h1v1h-1zM22 73h1v1h-1zM30 73h1v1h-1zM31 73h1v1h-1zM2 74h1v1h-1zM12 74h1v1h-1zM22 74h1v1h-1zM11 75h1v1h-1zM16 75h1v1h-1zM4 76h1v1h-1zM16 77h1v1h-1zM1 79h1v1h-1zM3 79h1v1h-1zM14 79h1v1h-1zM34 79h1v1h-1zM0 80h1v1h-1zM1 80h1v1h-1zM7 80h1v1h-1zM15 80h1v1h-1zM27 80h1v1h-1zM32 80h1v1h-1zM2 81h1v1h-1zM5 81h1v1h-1zM9 81h1v1h-1zM20 81h1v1h-1zM21 81h1v1h-1zM25 81h1v1h-1zM28 81h1v1h-1zM17 83h1v1h-1zM34 83h1v1h-1zM11 85h1v1h-1zM12 85h1v1h-1zM24 85h1v1h-1zM2 86h1v1h-1zM17 86h1v1h-1zM21 86h1v1h-1zM26 86h1v1h-1zM30 86h1v1h-1zM2 87h1v1h-1zM10 87h1v1h-1zM29 87h1v1h-1zM31 87h1v1h-1z"/>
<path fill="#cccccc" d="M4 0h1v1h-1zM9 0h1v1h-1zM20 0h1v1h-1zM4 1h1v1h-1zM32 1h1v1h-1zM1 2h1v1h-1zM6 2h1v1h-1zM6 5h1v1h-1zM11 5h1v1h-1zM0 6h1v1h-1zM2 6h1v1h-1zM4 6h1v1h-1zM10 6h1v1h-1zM13 6h1v1h-1zM22 6h1v1h-1zM23 6h1v1h-1zM25 6h1v1h-1zM29 6h1v1h-1zM30 6h1v1h-1zM31 6h1v1h-1zM3 7h1v1h-1zM14 7h1v1h-1zM24 7h1v1h-1zM27 7h1v1h-1zM29 7h1v1h-1zM32 7h1v1h-1zM3 8h1v1h-1zM4 8h1v1h-1zM6 8h1v1h-1zM8 8h1v1h-1zM12 8h1v1h-1zM14 8h1v1h-1zM21 8h1v1h-1zM22 8h1v1h-1zM3 9h1v1h-1zM4 9h1v1h-1zM9 9h1v1h-1zM26 9h1v1h-1zM34 9h1v1h-1zM1 13h1v1h-1zM4 13h1v1h-1zM9 13h1v1h-1zM17 13h1v1h-1zM21 13h1v1h-1zM28 13h1v1h-1zM31 13h1v1h-1zM32 13h1v1h-1zM8 14h1v1h-1zM14 14h1v1h-1zM28 14h1v1h-1zM10 15h1v1h-1zM19 15h1v1h-1zM21 15h1v1h-1zM25 15h1v1h-1zM27 15h1v1h-1zM33 15h1v1h-1zM34 15h1v1h-1zM1 16h1v1h-1zM2 16h1v1h-1zM4 16h1v1h-1zM24 16h1v1h-1zM30 16h1v1h-1zM31 16h1v1h-1zM28 17h1v1h-1zM13 18h1v1h-1zM18 19h1v1h-1zM6 20h1v1h-1zM9 20h1v1h-1zM24 20h1v1h-1zM1 21h1v1h-1zM3 21h1v1h-1zM24 21h1v1h-1zM27 21h1v1h-1zM30 21h1v1h-1zM33 21h1v1h-1zM8 22h1v1h-1zM13 22h1v1h-1zM17 22h1v1h-1zM26 22h1v1h-1zM30 22h1v1h-1zM2 23h1v1h-1zM14 23h1v1h-1zM17 23h1v1h-1zM18 23h1v1h-1zM25 23h1v1h-1zM1 27h1v1h-1zM10 27h1v1h-1zM12 27h1v1h-1zM15 27h1v1h-1zM20 27h1v1h-1zM23 27h1v1h-1zM29 27h1v1h-1zM30 27h1v1h-1zM1 28h1v1h-1zM15 28h1v1h-1zM28 28h1v1h-1zM32 28h1v1h-1zM28 29h1v1h-1zM2 30h1v1h-1zM3 32h1v1h-1zM14 33h1v1h-1zM23 33h1v1h-1zM8 34h1v1h-1zM3 35h1v1h-1zM4 35h1v1h-1zM5 35h1v1h-1zM6 35h1v1h-1zM14 35h1v1h-1zM20 35h1v1h-1zM22 35h1v1h-1zM25 35h1v1h-1zM28 39h1v1h-1zM1 40h1v1h-1zM4 40h1v1h-1zM5 40h1v1h-1zM10 40h1v1h-1zM12 40h1v1h-1zM14 40h1v1h-1zM27 40h1v1h-1zM30 40h1v1h-1zM33 40h1v1h-1zM19 41h1v1h-1zM31 41h1v1h-1zM0 47h1v1h-1zM15 47h1v1h-1zM19 47h1v1h-1zM24 47h1v1h-1zM26 47h1v1h-1zM29 47h1v1h-1zM1 48h1v1h-1zM7 48h1v1h-1zM9 48h1v1h-1zM19 48h1v1h-1zM23 48h1v1h-1zM31 48h1v1h-1zM20 49h1v1h-1zM2 51h1v1h-1zM9 52h1v1h-1zM22 52h1v1h-1zM23 53h1v1h-1zM24 53h1v1h-1zM27 53h1v1h-1zM0 54h1v1h-1zM1 54h1v1h-1zM5 54h1v1h-1zM19 54h1v1h-1zM27 54h1v1h-1zM31 54h1v1h-1zM3 55h1v1h-1zM12 55h1v1h-1zM16 55h1v1h-1zM20 55h1v1h-1zM30 55h1v1h-1zM13 57h1v1h-1zM4 59h1v1h-1zM23 59h1v1h-1zM1 60h1v1h-1zM2 60h1v1h-1zM3 60h1v1h-1zM4 60h1v1h-1zM7 60h1v1h-1zM15 60h1v1h-1zM22 60h1v1h-1zM24 60h1v1h-1zM29 60h1v1h-1zM5 61h1v1h-1zM16 61h1v1h-1zM18 61h1v1h-1zM21 61h1v1h-1zM22 61h1v1h-1zM30 61h1v1h-1zM12 65h1v1h-1zM22 65h1v1h-1zM8 66h1v1h-1zM16 66h1v1h-1zM19 66h1v1h-1zM26 66h1v1h-1zM27 66h1v1h-1zM33 66h1v1h-1zM1 67h1v1h-1zM20 67h1v1h-1zM23 67h1v1h-1zM26 67h1v1h-1zM33 67h1v1h-1zM5 68h1v1h-1zM8 68h1v1h-1zM22 68h1v1h-1zM10 69h1v1h-1zM30 71h1v1h-1zM1 72h1v1h-1zM5 72h1v1h-1zM7 72h1v1h-1zM18 72h1v1h-1zM24 72h1v1h-1zM26 72h1v1h-1zM6 73h1v1h-1zM11 73h1v1h-1zM15 73h1v1h-1zM23 73h1v1h-1zM26 73h1v1h-1zM16 74h1v1h-1zM17 74h1v1h-1zM18 74h1v1h-1zM29 74h1v1h-1zM5 75h1v1h-1zM10 75h1v1h-1zM14 75h1v1h-1zM18 75h1v1h-1zM23 75h1v1h-1zM25 75h1v1h-1zM26 75h1v1h-1zM27 75h1v1h-1zM34 75h1v1h-1zM11 79h1v1h-1zM27 79h1v1h-1zM9 80h1v1h-1zM22 80h1v1h-1zM23 80h1v1h-1zM4 81h1v1h-1zM16 81h1v1h-1zM18 81h1v1h-1zM24 81h1v1h-1zM30 81h1v1h-1zM18 83h1v1h-1zM7 85h1v1h-1zM11 86h1v1h-1zM16 86h1v1h-1zM34 86h1v1h-1zM1 87h1v1h-1zM5 87h1v1h-1zM14 87h1v1h-1zM17 87h1v1h-1zM21 87h1v1h-1zM23 87h1v1h-1zM33 87h1v1h-1z"/>
<path fill="#dddddd" d="M2 0h1v1h-1zM19 0h1v1h-1zM24 0h1v1h-1zM33 0h1v1h-1zM6 1h1v1h-1zM11 1h1v1h-1zM19 1h1v1h-1zM25 1h1v1h-1zM3 2h1v1h-1zM32 2h1v1h-1zM1 5h1v1h-1zM15 5h1v1h-1zM16 6h1v1h-1zM19 6h1v1h-1zM33 6h1v1h-1zM2 7h1v1h-1zM0 8h1v1h-1zM5 8h1v1h-1zM10 8h1v1h-1zM13 8h1v1h-1zM18 8h1v1h-1zM28 8h1v1h-1zM30 8h1v1h-1zM5 9h1v1h-1zM14 9h1v1h-1zM15 9h1v1h-1zM28 9h1v1h-1zM30 9h1v1h-1zM8 10h1v1h-1zM11 13h1v1h-1zM15 13h1v1h-1zM30 13h1v1h-1zM1 14h1v1h-1zM4 14h1v1h-1zM6 14h1v1h-1zM16 14h1v1h-1zM17 14h1v1h-1zM27 14h1v1h-1zM33 14h1v1h-1zM3 15h1v1h-1zM8 15h1v1h-1zM16 15h1v1h-1zM18 15h1v1h-1zM24 15h1v1h-1zM30 15h1v1h-1zM3 16h1v1h-1zM9 16h1v1h-1zM11 16h1v1h-1zM14 16h1v1h-1zM16 16h1v1h-1zM19 16h1v1h-1zM26 16h1v1h-1zM4 20h1v1h-1zM8 20h1v1h-1zM11 20h1v1h-1zM34 20h1v1h-1zM6 21h1v1h-1zM14 21h1v1h-1zM16 21h1v1h-1zM28 21h1v1h-1zM7 22h1v1h-1zM15 22h1v1h-1zM19 22h1v1h-1zM22 22h1v1h-1zM27 22h1v1h-1zM3 23h1v1h-1zM4 23h1v1h-1zM10 23h1v1h-1zM13 23h1v1h-1zM34 23h1v1h-1zM9 27h1v1h-1zM16 27h1v1h-1zM27 27h1v1h-1zM14 28h1v1h-1zM21 28h1v1h-1zM29 28h1v1h-1zM14 30h1v1h-1zM18 30h1v1h-1zM15 33h1v1h-1zM19 33h1v1h-1zM1 34h1v1h-1zM4 34h1v1h-1zM21 34h1v1h-1zM30 35h1v1h-1zM8 36h1v1h-1zM2 40h1v1h-1zM3 40h1v1h-1zM29 40h1v1h-1zM0 41h1v1h-1zM16 41h1v1h-1zM18 41h1v1h-1zM20 41h1v1h-1zM30 41h1v1h-1zM34 41h1v1h-1zM3 47h1v1h-1zM17 47h1v1h-1zM33 47h1v1h-1zM3 48h1v1h-1zM17 49h1v1h-1zM8 52h1v1h-1zM29 52h1v1h-1zM14 53h1v1h-1zM19 53h1v1h-1zM34 53h1v1h-1zM8 54h1v1h-1zM17 54h1v1h-1zM24 54h1v1h-1zM10 55h1v1h-1zM11 55h1v1h-1zM19 55h1v1h-1zM24 55h1v1h-1zM23 56h1v1h-1zM20 59h1v1h-1zM5 60h1v1h-1zM10 60h1v1h-1zM25 60h1v1h-1zM30 60h1v1h-1zM9 61h1v1h-1zM11 61h1v1h-1zM26 61h1v1h-1zM28 61h1v1h-1zM32 61h1v1h-1zM4 63h1v1h-1zM12 64h1v1h-1zM18 66h1v1h-1zM12 67h1v1h-1zM13 67h1v1h-1zM32 67h1v1h-1zM7 68h1v1h-1zM9 68h1v1h-1zM13 68h1v1h-1zM14 68h1v1h-1zM21 68h1v1h-1zM33 69h1v1h-1zM13 72h1v1h-1zM21 72h1v1h-1zM2 73h1v1h-1zM8 73h1v1h-1zM9 73h1v1h-1zM20 73h1v1h-1zM27 73h1v1h-1zM33 73h1v1h-1zM9 74h1v1h-1zM10 74h1v1h-1zM26 74h1v1h-1zM31 74h1v1h-1zM0 75h1v1h-1zM2 75h1v1h-1zM6 79h1v1h-1zM15 79h1v1h-1zM10 80h1v1h-1zM17 80h1v1h-1zM19 80h1v1h-1zM20 80h1v1h-1zM24 80h1v1h-1zM26 80h1v1h-1zM0 81h1v1h-1zM14 81h1v1h-1zM22 81h1v1h-1zM26 83h1v1h-1zM1 85h1v1h-1zM3 85h1v1h-1zM9 85h1v1h-1zM17 85h1v1h-1zM21 85h1v1h-1zM22 85h1v1h-1zM28 85h1v1h-1zM1 86h1v1h-1zM3 86h1v1h-1zM9 86h1v1h-1zM18 86h1v1h-1zM31 86h1v1h-1zM24 87h1v1h-1zM32 87h1v1h-1z"/>
<path fill="#eeeeee" d="M8 0h1v1h-1zM31 0h1v1h-1zM34 0h1v1h-1zM1 1h1v1h-1zM3 1h1v1h-1zM23 1h1v1h-1zM24 1h1v1h-1zM34 1h1v1h-1zM2 2h1v1h-1zM34 3h1v1h-1zM9 6h1v1h-1zM20 7h1v1h-1zM22 7h1v1h-1zM30 7h1v1h-1zM7 8h1v1h-1zM9 8h1v1h-1zM27 8h1v1h-1zM6 9h1v1h-1zM12 9h1v1h-1zM20 9h1v1h-1zM27 9h1v1h-1zM7 13h1v1h-1zM10 13h1v1h-1zM14 13h1v1h-1zM18 13h1v1h-1zM18 14h1v1h-1zM29 14h1v1h-1zM9 15h1v1h-1zM32 15h1v1h-1zM23 16h1v1h-1zM34 16h1v1h-1zM0 20h1v1h-1zM22 20h1v1h-1zM32 20h1v1h-1zM20 21h1v1h-1zM32 21h1v1h-1zM0 22h1v1h-1zM6 22h1v1h-1zM10 22h1v1h-1zM25 22h1v1h-1zM5 23h1v1h-1zM6 23h1v1h-1zM29 23h1v1h-1zM4 27h1v1h-1zM11 27h1v1h-1zM28 27h1v1h-1zM0 28h1v1h-1zM25 28h1v1h-1zM13 29h1v1h-1zM10 33h1v1h-1zM12 33h1v1h-1zM26 33h1v1h-1zM32 33h1v1h-1zM31 34h1v1h-1zM19 35h1v1h-1zM28 35h1v1h-1zM8 40h1v1h-1zM13 40h1v1h-1zM34 40h1v1h-1zM7 41h1v1h-1zM10 41h1v1h-1zM12 41h1v1h-1zM26 41h1v1h-1zM7 47h1v1h-1zM21 47h1v1h-1zM22 47h1v1h-1zM34 47h1v1h-1zM10 48h1v1h-1zM18 48h1v1h-1zM2 53h1v1h-1zM3 53h1v1h-1zM6 53h1v1h-1zM7 53h1v1h-1zM10 53h1v1h-1zM11 53h1v1h-1zM13 53h1v1h-1zM25 53h1v1h-1zM33 53h1v1h-1zM10 54h1v1h-1zM11 54h1v1h-1zM29 54h1v1h-1zM30 54h1v1h-1zM4 55h1v1h-1zM5 55h1v1h-1zM34 57h1v1h-1zM5 59h1v1h-1zM17 60h1v1h-1zM23 61h1v1h-1zM25 61h1v1h-1zM30 66h1v1h-1zM31 66h1v1h-1zM0 67h1v1h-1zM4 67h1v1h-1zM6 67h1v1h-1zM11 67h1v1h-1zM16 67h1v1h-1zM21 67h1v1h-1zM25 67h1v1h-1zM27 67h1v1h-1zM4 68h1v1h-1zM31 68h1v1h-1zM16 72h1v1h-1zM22 72h1v1h-1zM23 72h1v1h-1zM3 73h1v1h-1zM5 73h1v1h-1zM16 73h1v1h-1zM17 73h1v1h-1zM21 73h1v1h-1zM15 74h1v1h-1zM20 74h1v1h-1zM21 74h1v1h-1zM7 75h1v1h-1zM17 75h1v1h-1zM20 75h1v1h-1zM21 75h1v1h-1zM28 75h1v1h-1zM34 77h1v1h-1zM4 79h1v1h-1zM9 79h1v1h-1zM22 79h1v1h-1zM23 79h1v1h-1zM31 79h1v1h-1zM32 79h1v1h-1zM6 80h1v1h-1zM29 80h1v1h-1zM33 80h1v1h-1zM34 80h1v1h-1zM10 81h1v1h-1zM13 81h1v1h-1zM31 81h1v1h-1zM34 81h1v1h-1zM0 85h1v1h-1zM2 85h1v1h-1zM8 85h1v1h-1zM14 85h1v1h-1zM15 85h1v1h-1zM20 85h1v1h-1zM26 85h1v1h-1zM34 85h1v1h-1zM12 86h1v1h-1zM6 87h1v1h-1zM20 87h1v1h-1zM22 87h1v1h-1z"/>
<path fill="#ffffff" d="M14 0h1v1h-1zM17 0h1v1h-1zM18 0h1v1h-1zM30 0h1v1h-1zM0 1h1v1h-1zM5 1h1v1h-1zM8 1h1v1h-1zM10 1h1v1h-1zM18 1h1v1h-1zM20 1h1v1h-1zM28 1h1v1h-1zM31 1h1v1h-1zM17 6h1v1h-1zM18 6h1v1h-1zM21 6h1v1h-1zM7 7h1v1h-1zM15 7h1v1h-1zM16 7h1v1h-1zM21 7h1v1h-1zM17 8h1v1h-1zM20 8h1v1h-1zM31 8h1v1h-1zM16 9h1v1h-1zM21 9h1v1h-1zM24 9h1v1h-1zM25 13h1v1h-1zM34 13h1v1h-1zM7 14h1v1h-1zM12 14h1v1h-1zM15 14h1v1h-1zM20 14h1v1h-1zM32 14h1v1h-1zM13 15h1v1h-1zM17 15h1v1h-1zM29 15h1v1h-1zM17 16h1v1h-1zM21 16h1v1h-1zM27 16h1v1h-1zM3 20h1v1h-1zM13 20h1v1h-1zM16 20h1v1h-1zM18 20h1v1h-1zM20 20h1v1h-1zM28 20h1v1h-1zM29 20h1v1h-1zM31 20h1v1h-1zM2 21h1v1h-1zM21 21h1v1h-1zM31 21h1v1h-1zM2 22h1v1h-1zM5 22h1v1h-1zM11 22h1v1h-1zM16 22h1v1h-1zM8 23h1v1h-1zM9 23h1v1h-1zM13 27h1v1h-1zM24 27h1v1h-1zM26 27h1v1h-1zM33 27h1v1h-1zM8 28h1v1h-1zM10 28h1v1h-1zM11 28h1v1h-1zM1 33h1v1h-1zM6 33h1v1h-1zM16 33h1v1h-1zM18 33h1v1h-1zM20 33h1v1h-1zM22 33h1v1h-1zM24 33h1v1h-1zM27 33h1v1h-1zM29 33h1v1h-1zM33 33h1v1h-1zM6 34h1v1h-1zM7 34h1v1h-1zM15 34h1v1h-1zM16 34h1v1h-1zM17 34h1v1h-1zM19 34h1v1h-1zM23 34h1v1h-1zM28 34h1v1h-1zM29 34h1v1h-1zM32 34h1v1h-1zM33 34h1v1h-1zM2 35h1v1h-1zM18 35h1v1h-1zM34 35h1v1h-1zM26 36h1v1h-1zM25 40h1v1h-1zM8 41h1v1h-1zM14 41h1v1h-1zM23 41h1v1h-1zM25 41h1v1h-1zM28 41h1v1h-1zM32 41h1v1h-1zM6 47h1v1h-1zM10 47h1v1h-1zM11 47h1v1h-1zM13 47h1v1h-1zM14 47h1v1h-1zM20 47h1v1h-1zM27 47h1v1h-1zM28 47h1v1h-1zM32 47h1v1h-1zM17 48h1v1h-1zM24 48h1v1h-1zM28 48h1v1h-1zM29 48h1v1h-1zM30 48h1v1h-1zM33 48h1v1h-1zM20 50h1v1h-1zM0 53h1v1h-1zM8 53h1v1h-1zM18 53h1v1h-1zM6 54h1v1h-1zM9 54h1v1h-1zM14 54h1v1h-1zM18 54h1v1h-1zM21 54h1v1h-1zM28 54h1v1h-1zM6 55h1v1h-1zM18 55h1v1h-1zM21 55h1v1h-1zM23 55h1v1h-1zM28 55h1v1h-1zM0 60h1v1h-1zM6 60h1v1h-1zM8 61h1v1h-1zM14 61h1v1h-1zM24 61h1v1h-1zM1 66h1v1h-1zM2 66h1v1h-1zM15 66h1v1h-1zM21 66h1v1h-1zM22 66h1v1h-1zM23 66h1v1h-1zM24 66h1v1h-1zM2 67h1v1h-1zM5 67h1v1h-1zM8 67h1v1h-1zM18 67h1v1h-1zM34 67h1v1h-1zM3 68h1v1h-1zM11 68h1v1h-1zM12 68h1v1h-1zM16 68h1v1h-1zM18 68h1v1h-1zM20 68h1v1h-1zM24 68h1v1h-1zM26 68h1v1h-1zM8 72h1v1h-1zM20 72h1v1h-1zM27 72h1v1h-1zM30 72h1v1h-1zM12 73h1v1h-1zM18 73h1v1h-1zM24 73h1v1h-1zM5 74h1v1h-1zM8 74h1v1h-1zM27 74h1v1h-1zM28 74h1v1h-1zM22 75h1v1h-1zM24 75h1v1h-1zM25 79h1v1h-1zM8 80h1v1h-1zM11 80h1v1h-1zM12 80h1v1h-1zM16 80h1v1h-1zM18 80h1v1h-1zM28 80h1v1h-1zM1 81h1v1h-1zM7 81h1v1h-1zM23 81h1v1h-1zM32 81h1v1h-1zM5 85h1v1h-1zM10 85h1v1h-1zM13 85h1v1h-1zM19 85h1v1h-1zM25 85h1v1h-1zM30 85h1v1h-1zM32 85h1v1h-1zM6 86h1v1h-1zM29 86h1v1h-1zM7 87h1v1h-1zM8 87h1v1h-1zM18 87h1v1h-1zM25 87h1v1h-1z"/>
</g></g></svg>
<rect x="831.6" y="64.7" width="67" height="168.6" fill="none" stroke="#0000ee" stroke-width="2.6"/>
<svg x="933.3" y="65.5" width="65.9" height="167.0" overflow="hidden"><g filter="url(#soft)"><g transform="scale(1.9)" shape-rendering="crispEdges">
<path fill="#000000" d="M34 42h1v1h-1zM1 43h1v1h-1zM6 43h1v1h-1zM7 43h1v1h-1zM14 43h1v1h-1zM19 43h1v1h-1zM20 43h1v1h-1zM25 43h1v1h-1zM27 43h1v1h-1zM30 43h1v1h-1zM6 44h1v1h-1zM7 44h1v1h-1zM8 44h1v1h-1zM9 44h1v1h-1zM10 44h1v1h-1zM13 44h1v1h-1zM19 44h1v1h-1zM20 44h1v1h-1zM25 44h1v1h-1zM6 45h1v1h-1zM11 45h1v1h-1zM16 45h1v1h-1zM19 45h1v1h-1zM23 45h1v1h-1zM25 45h1v1h-1zM30 45h1v1h-1zM34 45h1v1h-1z"/>
<path fill="#111111" d="M5 43h1v1h-1zM9 43h1v1h-1zM11 43h1v1h-1zM23 43h1v1h-1zM3 44h1v1h-1zM33 44h1v1h-1zM34 44h1v1h-1zM4 45h1v1h-1zM8 45h1v1h-1zM10 45h1v1h-1zM20 45h1v1h-1zM22 45h1v1h-1zM15 46h1v1h-1z"/>
<path fill="#222222" d="M3 21h1v1h-1zM13 42h1v1h-1zM2 43h1v1h-1zM13 43h1v1h-1zM16 43h1v1h-1zM22 43h1v1h-1zM31 43h1v1h-1zM32 43h1v1h-1zM34 43h1v1h-1zM14 44h1v1h-1zM21 44h1v1h-1zM27 44h1v1h-1zM28 44h1v1h-1zM0 45h1v1h-1zM18 45h1v1h-1zM28 45h1v1h-1zM32 45h1v1h-1z"/>
<path fill="#333333" d="M4 2h1v1h-1zM7 9h1v1h-1zM34 10h1v1h-1zM22 37h1v1h-1zM17 38h1v1h-1zM24 42h1v1h-1zM26 42h1v1h-1zM8 43h1v1h-1zM15 43h1v1h-1zM28 43h1v1h-1zM29 43h1v1h-1zM0 44h1v1h-1zM11 44h1v1h-1zM12 44h1v1h-1zM15 44h1v1h-1zM18 44h1v1h-1zM2 45h1v1h-1zM5 45h1v1h-1zM12 45h1v1h-1zM13 45h1v1h-1zM21 45h1v1h-1zM27 45h1v1h-1zM25 46h1v1h-1zM18 48h1v1h-1zM34 54h1v1h-1zM8 55h1v1h-1zM1 73h1v1h-1z"/>
<path fill="#444444" d="M1 2h1v1h-1zM3 2h1v1h-1zM15 6h1v1h-1zM27 8h1v1h-1zM12 10h1v1h-1zM11 11h1v1h-1zM18 12h1v1h-1zM20 13h1v1h-1zM15 18h1v1h-1zM26 20h1v1h-1zM28 22h1v1h-1zM27 28h1v1h-1zM33 28h1v1h-1zM27 37h1v1h-1zM3 42h1v1h-1zM14 42h1v1h-1zM19 42h1v1h-1zM21 43h1v1h-1zM33 43h1v1h-1zM1 44h1v1h-1zM2 44h1v1h-1zM4 44h1v1h-1zM5 44h1v1h-1zM16 44h1v1h-1zM22 44h1v1h-1zM26 44h1v1h-1zM7 45h1v1h-1zM9 45h1v1h-1zM14 45h1v1h-1zM33 45h1v1h-1zM0 46h1v1h-1zM3 46h1v1h-1zM13 46h1v1h-1zM18 46h1v1h-1zM19 46h1v1h-1zM24 46h1v1h-1zM28 46h1v1h-1zM29 46h1v1h-1zM0 56h1v1h-1zM18 63h1v1h-1zM21 63h1v1h-1zM28 67h1v1h-1zM23 68h1v1h-1zM30 69h1v1h-1zM3 74h1v1h-1zM34 78h1v1h-1zM30 83h1v1h-1zM3 84h1v1h-1zM12 84h1v1h-1zM23 84h1v1h-1zM33 85h1v1h-1z"/>
<path fill="#555555" d="M25 1h1v1h-1zM27 1h1v1h-1zM29 2h1v1h-1zM23 6h1v1h-1zM33 9h1v1h-1zM20 10h1v1h-1zM11 12h1v1h-1zM23 14h1v1h-1zM14 17h1v1h-1zM34 18h1v1h-1zM18 19h1v1h-1zM4 23h1v1h-1zM6 24h1v1h-1zM34 25h1v1h-1zM31 26h1v1h-1zM20 28h1v1h-1zM30 30h1v1h-1zM15 32h1v1h-1zM9 33h1v1h-1zM14 36h1v1h-1zM19 36h1v1h-1zM21 36h1v1h-1zM24 37h1v1h-1zM20 40h1v1h-1zM0 42h1v1h-1zM2 42h1v1h-1zM7 42h1v1h-1zM20 42h1v1h-1zM21 42h1v1h-1zM27 42h1v1h-1zM33 42h1v1h-1zM3 43h1v1h-1zM4 43h1v1h-1zM17 43h1v1h-1zM18 43h1v1h-1zM24 43h1v1h-1zM26 43h1v1h-1zM23 44h1v1h-1zM31 44h1v1h-1zM32 44h1v1h-1zM1 45h1v1h-1zM17 45h1v1h-1zM24 45h1v1h-1zM9 46h1v1h-1zM17 46h1v1h-1zM26 46h1v1h-1zM13 49h1v1h-1zM29 49h1v1h-1zM4 53h1v1h-1zM20 53h1v1h-1zM26 53h1v1h-1zM13 54h1v1h-1zM31 56h1v1h-1zM33 57h1v1h-1zM8 59h1v1h-1zM10 61h1v1h-1zM24 62h1v1h-1zM27 62h1v1h-1zM9 65h1v1h-1zM23 67h1v1h-1zM18 68h1v1h-1zM5 70h1v1h-1zM11 71h1v1h-1zM7 74h1v1h-1zM13 74h1v1h-1zM28 74h1v1h-1zM3 76h1v1h-1zM34 76h1v1h-1zM2 77h1v1h-1zM22 78h1v1h-1zM11 79h1v1h-1zM32 79h1v1h-1zM0 82h1v1h-1zM7 83h1v1h-1z"/>
<path fill="#666666" d="M16 0h1v1h-1zM32 0h1v1h-1zM11 1h1v1h-1zM22 1h1v1h-1zM20 2h1v1h-1zM33 2h1v1h-1zM5 3h1v1h-1zM11 4h1v1h-1zM20 4h1v1h-1zM29 5h1v1h-1zM31 5h1v1h-1zM27 6h1v1h-1zM13 7h1v1h-1zM28 7h1v1h-1zM12 8h1v1h-1zM2 9h1v1h-1zM10 9h1v1h-1zM24 9h1v1h-1zM0 10h1v1h-1zM9 10h1v1h-1zM16 10h1v1h-1zM23 10h1v1h-1zM27 10h1v1h-1zM12 11h1v1h-1zM14 11h1v1h-1zM29 11h1v1h-1zM9 12h1v1h-1zM10 12h1v1h-1zM22 12h1v1h-1zM23 12h1v1h-1zM4 13h1v1h-1zM24 13h1v1h-1zM21 14h1v1h-1zM28 14h1v1h-1zM7 15h1v1h-1zM8 17h1v1h-1zM10 17h1v1h-1zM6 19h1v1h-1zM14 21h1v1h-1zM30 21h1v1h-1zM10 22h1v1h-1zM14 22h1v1h-1zM23 22h1v1h-1zM27 22h1v1h-1zM9 23h1v1h-1zM2 24h1v1h-1zM13 24h1v1h-1zM22 24h1v1h-1zM21 27h1v1h-1zM2 28h1v1h-1zM18 29h1v1h-1zM16 30h1v1h-1zM25 31h1v1h-1zM32 31h1v1h-1zM13 32h1v1h-1zM30 32h1v1h-1zM6 33h1v1h-1zM13 33h1v1h-1zM29 33h1v1h-1zM30 34h1v1h-1zM33 34h1v1h-1zM7 35h1v1h-1zM12 35h1v1h-1zM34 35h1v1h-1zM16 36h1v1h-1zM20 36h1v1h-1zM4 37h1v1h-1zM6 37h1v1h-1zM32 37h1v1h-1zM34 37h1v1h-1zM16 38h1v1h-1zM18 38h1v1h-1zM30 39h1v1h-1zM28 40h1v1h-1zM30 40h1v1h-1zM1 41h1v1h-1zM6 41h1v1h-1zM6 42h1v1h-1zM15 42h1v1h-1zM22 42h1v1h-1zM25 42h1v1h-1zM29 42h1v1h-1zM32 42h1v1h-1zM10 43h1v1h-1zM12 43h1v1h-1zM17 44h1v1h-1zM24 44h1v1h-1zM30 44h1v1h-1zM15 45h1v1h-1zM29 45h1v1h-1zM4 46h1v1h-1zM5 46h1v1h-1zM11 46h1v1h-1zM12 46h1v1h-1zM33 46h1v1h-1zM34 46h1v1h-1zM14 47h1v1h-1zM18 47h1v1h-1zM3 49h1v1h-1zM33 49h1v1h-1zM8 50h1v1h-1zM9 50h1v1h-1zM11 51h1v1h-1zM13 51h1v1h-1zM29 51h1v1h-1zM30 52h1v1h-1zM11 53h1v1h-1zM23 56h1v1h-1zM26 56h1v1h-1zM32 56h1v1h-1zM4 57h1v1h-1zM7 57h1v1h-1zM13 57h1v1h-1zM2 58h1v1h-1zM20 58h1v1h-1zM23 58h1v1h-1zM4 59h1v1h-1zM33 59h1v1h-1zM9 61h1v1h-1zM15 61h1v1h-1zM19 61h1v1h-1zM20 61h1v1h-1zM33 61h1v1h-1zM29 62h1v1h-1zM19 63h1v1h-1zM0 65h1v1h-1zM8 65h1v1h-1zM34 65h1v1h-1zM2 67h1v1h-1zM31 67h1v1h-1zM32 67h1v1h-1zM12 68h1v1h-1zM16 69h1v1h-1zM17 69h1v1h-1zM13 70h1v1h-1zM15 70h1v1h-1zM3 71h1v1h-1zM29 72h1v1h-1zM7 73h1v1h-1zM26 73h1v1h-1zM9 74h1v1h-1zM20 74h1v1h-1zM23 75h1v1h-1zM5 76h1v1h-1zM10 76h1v1h-1zM26 77h1v1h-1zM1 78h1v1h-1zM19 78h1v1h-1zM3 79h1v1h-1zM6 79h1v1h-1zM18 79h1v1h-1zM33 79h1v1h-1zM34 79h1v1h-1zM9 80h1v1h-1zM30 80h1v1h-1zM15 82h1v1h-1zM1 84h1v1h-1zM11 84h1v1h-1zM22 84h1v1h-1zM33 84h1v1h-1zM2 85h1v1h-1zM7 85h1v1h-1zM16 86h1v1h-1zM5 87h1v1h-1zM6 87h1v1h-1zM26 87h1v1h-1z"/>
<path fill="#777777" d="M1 0h1v1h-1zM15 0h1v1h-1zM21 0h1v1h-1zM23 0h1v1h-1zM28 0h1v1h-1zM18 1h1v1h-1zM28 1h1v1h-1zM0 2h1v1h-1zM26 2h1v1h-1zM4 3h1v1h-1zM15 3h1v1h-1zM19 3h1v1h-1zM23 3h1v1h-1zM34 3h1v1h-1zM1 4h1v1h-1zM2 4h1v1h-1zM22 4h1v1h-1zM15 5h1v1h-1zM34 5h1v1h-1zM0 7h1v1h-1zM8 7h1v1h-1zM14 7h1v1h-1zM33 7h1v1h-1zM9 8h1v1h-1zM16 8h1v1h-1zM23 8h1v1h-1zM31 8h1v1h-1zM8 9h1v1h-1zM9 9h1v1h-1zM25 9h1v1h-1zM28 9h1v1h-1zM5 10h1v1h-1zM13 10h1v1h-1zM18 10h1v1h-1zM21 10h1v1h-1zM17 11h1v1h-1zM18 11h1v1h-1zM24 11h1v1h-1zM31 11h1v1h-1zM33 11h1v1h-1zM5 12h1v1h-1zM21 12h1v1h-1zM24 12h1v1h-1zM18 13h1v1h-1zM19 13h1v1h-1zM27 13h1v1h-1zM11 14h1v1h-1zM13 14h1v1h-1zM15 14h1v1h-1zM25 14h1v1h-1zM31 14h1v1h-1zM4 16h1v1h-1zM24 16h1v1h-1zM32 16h1v1h-1zM33 16h1v1h-1zM27 17h1v1h-1zM18 18h1v1h-1zM1 19h1v1h-1zM8 19h1v1h-1zM11 19h1v1h-1zM23 19h1v1h-1zM17 20h1v1h-1zM18 20h1v1h-1zM25 20h1v1h-1zM11 21h1v1h-1zM28 21h1v1h-1zM13 22h1v1h-1zM19 22h1v1h-1zM20 22h1v1h-1zM26 22h1v1h-1zM15 23h1v1h-1zM18 23h1v1h-1zM20 23h1v1h-1zM24 24h1v1h-1zM12 25h1v1h-1zM25 26h1v1h-1zM15 27h1v1h-1zM26 27h1v1h-1zM1 28h1v1h-1zM12 28h1v1h-1zM15 28h1v1h-1zM32 28h1v1h-1zM5 29h1v1h-1zM7 29h1v1h-1zM22 29h1v1h-1zM23 29h1v1h-1zM24 29h1v1h-1zM29 29h1v1h-1zM3 30h1v1h-1zM32 30h1v1h-1zM1 31h1v1h-1zM2 31h1v1h-1zM9 31h1v1h-1zM11 32h1v1h-1zM20 32h1v1h-1zM26 32h1v1h-1zM20 33h1v1h-1zM23 33h1v1h-1zM15 34h1v1h-1zM24 34h1v1h-1zM26 34h1v1h-1zM9 35h1v1h-1zM23 35h1v1h-1zM32 35h1v1h-1zM2 36h1v1h-1zM3 36h1v1h-1zM6 36h1v1h-1zM32 36h1v1h-1zM7 37h1v1h-1zM9 37h1v1h-1zM25 37h1v1h-1zM5 38h1v1h-1zM20 38h1v1h-1zM0 40h1v1h-1zM2 40h1v1h-1zM31 40h1v1h-1zM7 41h1v1h-1zM9 41h1v1h-1zM29 41h1v1h-1zM34 41h1v1h-1zM8 42h1v1h-1zM28 42h1v1h-1zM0 43h1v1h-1zM29 44h1v1h-1zM3 45h1v1h-1zM31 45h1v1h-1zM1 46h1v1h-1zM6 46h1v1h-1zM7 46h1v1h-1zM8 46h1v1h-1zM20 46h1v1h-1zM27 46h1v1h-1zM1 47h1v1h-1zM9 48h1v1h-1zM28 48h1v1h-1zM1 49h1v1h-1zM9 49h1v1h-1zM21 49h1v1h-1zM30 49h1v1h-1zM34 49h1v1h-1zM1 50h1v1h-1zM20 50h1v1h-1zM2 51h1v1h-1zM8 51h1v1h-1zM16 51h1v1h-1zM34 51h1v1h-1zM14 52h1v1h-1zM17 52h1v1h-1zM22 52h1v1h-1zM31 52h1v1h-1zM5 54h1v1h-1zM30 54h1v1h-1zM33 54h1v1h-1zM3 55h1v1h-1zM5 55h1v1h-1zM25 55h1v1h-1zM13 56h1v1h-1zM16 56h1v1h-1zM19 56h1v1h-1zM27 56h1v1h-1zM5 57h1v1h-1zM6 58h1v1h-1zM15 58h1v1h-1zM21 58h1v1h-1zM3 59h1v1h-1zM5 59h1v1h-1zM9 59h1v1h-1zM8 60h1v1h-1zM12 61h1v1h-1zM25 61h1v1h-1zM14 62h1v1h-1zM17 62h1v1h-1zM33 62h1v1h-1zM4 63h1v1h-1zM6 63h1v1h-1zM11 63h1v1h-1zM12 63h1v1h-1zM16 63h1v1h-1zM23 63h1v1h-1zM14 64h1v1h-1zM21 64h1v1h-1zM23 64h1v1h-1zM22 66h1v1h-1zM28 66h1v1h-1zM34 66h1v1h-1zM1 67h1v1h-1zM34 67h1v1h-1zM10 68h1v1h-1zM22 69h1v1h-1zM25 69h1v1h-1zM7 70h1v1h-1zM23 70h1v1h-1zM25 70h1v1h-1zM28 70h1v1h-1zM6 71h1v1h-1zM9 71h1v1h-1zM25 71h1v1h-1zM30 71h1v1h-1zM34 71h1v1h-1zM4 72h1v1h-1zM26 72h1v1h-1zM31 72h1v1h-1zM23 74h1v1h-1zM27 74h1v1h-1zM5 75h1v1h-1zM21 75h1v1h-1zM22 76h1v1h-1zM21 77h1v1h-1zM0 78h1v1h-1zM9 78h1v1h-1zM10 78h1v1h-1zM17 78h1v1h-1zM22 79h1v1h-1zM0 80h1v1h-1zM8 80h1v1h-1zM11 80h1v1h-1zM12 80h1v1h-1zM13 80h1v1h-1zM26 80h1v1h-1zM32 80h1v1h-1zM33 80h1v1h-1zM3 81h1v1h-1zM14 81h1v1h-1zM33 81h1v1h-1zM16 82h1v1h-1zM18 82h1v1h-1zM18 83h1v1h-1zM20 83h1v1h-1zM27 83h1v1h-1zM17 84h1v1h-1zM30 84h1v1h-1zM6 85h1v1h-1zM9 85h1v1h-1zM22 85h1v1h-1zM1 86h1v1h-1zM11 86h1v1h-1zM25 86h1v1h-1zM34 86h1v1h-1zM16 87h1v1h-1zM17 87h1v1h-1zM21 87h1v1h-1zM24 87h1v1h-1zM27 87h1v1h-1z"/>
<path fill="#888888" d="M4 0h1v1h-1zM22 0h1v1h-1zM27 0h1v1h-1zM29 0h1v1h-1zM34 0h1v1h-1zM0 1h1v1h-1zM6 1h1v1h-1zM12 1h1v1h-1zM24 1h1v1h-1zM26 1h1v1h-1zM5 2h1v1h-1zM7 2h1v1h-1zM12 2h1v1h-1zM15 2h1v1h-1zM18 2h1v1h-1zM25 2h1v1h-1zM31 2h1v1h-1zM32 2h1v1h-1zM9 3h1v1h-1zM12 3h1v1h-1zM4 4h1v1h-1zM9 4h1v1h-1zM12 4h1v1h-1zM16 4h1v1h-1zM34 4h1v1h-1zM2 5h1v1h-1zM4 5h1v1h-1zM20 5h1v1h-1zM32 5h1v1h-1zM0 6h1v1h-1zM6 6h1v1h-1zM8 6h1v1h-1zM9 6h1v1h-1zM11 6h1v1h-1zM12 6h1v1h-1zM16 6h1v1h-1zM28 6h1v1h-1zM1 7h1v1h-1zM3 7h1v1h-1zM11 7h1v1h-1zM12 7h1v1h-1zM20 7h1v1h-1zM34 7h1v1h-1zM10 8h1v1h-1zM19 8h1v1h-1zM26 8h1v1h-1zM5 9h1v1h-1zM31 9h1v1h-1zM4 10h1v1h-1zM7 10h1v1h-1zM14 10h1v1h-1zM15 10h1v1h-1zM29 10h1v1h-1zM6 11h1v1h-1zM26 11h1v1h-1zM20 12h1v1h-1zM26 12h1v1h-1zM27 12h1v1h-1zM34 12h1v1h-1zM2 13h1v1h-1zM3 13h1v1h-1zM16 13h1v1h-1zM26 13h1v1h-1zM31 13h1v1h-1zM5 14h1v1h-1zM8 14h1v1h-1zM17 14h1v1h-1zM32 14h1v1h-1zM0 15h1v1h-1zM4 15h1v1h-1zM8 15h1v1h-1zM10 15h1v1h-1zM11 15h1v1h-1zM13 15h1v1h-1zM14 15h1v1h-1zM28 15h1v1h-1zM0 16h1v1h-1zM13 16h1v1h-1zM23 16h1v1h-1zM7 17h1v1h-1zM16 17h1v1h-1zM19 17h1v1h-1zM26 17h1v1h-1zM28 17h1v1h-1zM23 18h1v1h-1zM25 18h1v1h-1zM30 18h1v1h-1zM2 19h1v1h-1zM4 19h1v1h-1zM14 19h1v1h-1zM15 19h1v1h-1zM20 19h1v1h-1zM26 19h1v1h-1zM32 19h1v1h-1zM5 20h1v1h-1zM6 20h1v1h-1zM22 20h1v1h-1zM23 20h1v1h-1zM6 21h1v1h-1zM8 21h1v1h-1zM10 21h1v1h-1zM2 22h1v1h-1zM5 22h1v1h-1zM31 22h1v1h-1zM34 22h1v1h-1zM0 23h1v1h-1zM5 23h1v1h-1zM11 23h1v1h-1zM13 23h1v1h-1zM14 23h1v1h-1zM19 23h1v1h-1zM21 23h1v1h-1zM24 23h1v1h-1zM29 23h1v1h-1zM31 23h1v1h-1zM8 24h1v1h-1zM9 24h1v1h-1zM17 24h1v1h-1zM34 24h1v1h-1zM5 25h1v1h-1zM11 25h1v1h-1zM22 25h1v1h-1zM26 25h1v1h-1zM28 25h1v1h-1zM31 25h1v1h-1zM9 26h1v1h-1zM11 26h1v1h-1zM33 26h1v1h-1zM34 26h1v1h-1zM0 27h1v1h-1zM1 27h1v1h-1zM4 27h1v1h-1zM9 27h1v1h-1zM24 27h1v1h-1zM32 27h1v1h-1zM33 27h1v1h-1zM34 27h1v1h-1zM14 28h1v1h-1zM19 29h1v1h-1zM4 30h1v1h-1zM5 30h1v1h-1zM14 30h1v1h-1zM24 30h1v1h-1zM25 30h1v1h-1zM29 30h1v1h-1zM16 31h1v1h-1zM7 32h1v1h-1zM27 32h1v1h-1zM29 32h1v1h-1zM34 32h1v1h-1zM0 33h1v1h-1zM8 33h1v1h-1zM26 33h1v1h-1zM19 34h1v1h-1zM23 34h1v1h-1zM11 35h1v1h-1zM28 35h1v1h-1zM30 35h1v1h-1zM0 36h1v1h-1zM4 36h1v1h-1zM8 36h1v1h-1zM18 36h1v1h-1zM26 36h1v1h-1zM29 36h1v1h-1zM30 36h1v1h-1zM33 36h1v1h-1zM28 37h1v1h-1zM31 37h1v1h-1zM0 38h1v1h-1zM7 38h1v1h-1zM10 38h1v1h-1zM12 38h1v1h-1zM34 38h1v1h-1zM8 39h1v1h-1zM15 39h1v1h-1zM21 39h1v1h-1zM33 39h1v1h-1zM16 40h1v1h-1zM23 40h1v1h-1zM4 41h1v1h-1zM14 41h1v1h-1zM15 41h1v1h-1zM17 41h1v1h-1zM21 41h1v1h-1zM25 41h1v1h-1zM4 42h1v1h-1zM5 42h1v1h-1zM11 42h1v1h-1zM18 42h1v1h-1zM23 42h1v1h-1zM30 42h1v1h-1zM31 42h1v1h-1zM16 46h1v1h-1zM21 46h1v1h-1zM31 46h1v1h-1zM4 47h1v1h-1zM11 47h1v1h-1zM17 47h1v1h-1zM20 47h1v1h-1zM29 47h1v1h-1zM3 48h1v1h-1zM14 48h1v1h-1zM16 48h1v1h-1zM27 48h1v1h-1zM31 48h1v1h-1zM0 49h1v1h-1zM5 49h1v1h-1zM12 49h1v1h-1zM6 50h1v1h-1zM27 50h1v1h-1zM14 51h1v1h-1zM26 51h1v1h-1zM30 51h1v1h-1zM31 51h1v1h-1zM9 52h1v1h-1zM9 53h1v1h-1zM12 53h1v1h-1zM18 53h1v1h-1zM1 54h1v1h-1zM4 54h1v1h-1zM31 54h1v1h-1zM18 55h1v1h-1zM3 56h1v1h-1zM11 56h1v1h-1zM12 56h1v1h-1zM15 57h1v1h-1zM18 57h1v1h-1zM22 57h1v1h-1zM24 57h1v1h-1zM25 57h1v1h-1zM27 57h1v1h-1zM28 57h1v1h-1zM31 57h1v1h-1zM0 58h1v1h-1zM1 58h1v1h-1zM4 58h1v1h-1zM5 58h1v1h-1zM9 58h1v1h-1zM30 58h1v1h-1zM31 58h1v1h-1zM32 58h1v1h-1zM1 59h1v1h-1zM15 59h1v1h-1zM19 59h1v1h-1zM24 59h1v1h-1zM26 59h1v1h-1zM12 60h1v1h-1zM18 60h1v1h-1zM22 60h1v1h-1zM2 61h1v1h-1zM13 61h1v1h-1zM14 61h1v1h-1zM17 61h1v1h-1zM23 61h1v1h-1zM29 61h1v1h-1zM9 62h1v1h-1zM10 62h1v1h-1zM16 62h1v1h-1zM19 62h1v1h-1zM23 62h1v1h-1zM30 62h1v1h-1zM20 63h1v1h-1zM3 64h1v1h-1zM6 64h1v1h-1zM8 64h1v1h-1zM17 64h1v1h-1zM20 64h1v1h-1zM27 64h1v1h-1zM29 64h1v1h-1zM32 64h1v1h-1zM33 64h1v1h-1zM6 65h1v1h-1zM7 65h1v1h-1zM11 65h1v1h-1zM20 65h1v1h-1zM23 65h1v1h-1zM28 65h1v1h-1zM29 65h1v1h-1zM7 66h1v1h-1zM8 66h1v1h-1zM12 66h1v1h-1zM13 66h1v1h-1zM14 66h1v1h-1zM27 66h1v1h-1zM29 66h1v1h-1zM32 66h1v1h-1zM11 67h1v1h-1zM16 67h1v1h-1zM6 68h1v1h-1zM21 68h1v1h-1zM30 68h1v1h-1zM2 69h1v1h-1zM19 69h1v1h-1zM24 69h1v1h-1zM2 70h1v1h-1zM3 70h1v1h-1zM12 70h1v1h-1zM16 70h1v1h-1zM22 70h1v1h-1zM16 71h1v1h-1zM22 71h1v1h-1zM20 72h1v1h-1zM5 73h1v1h-1zM9 73h1v1h-1zM27 73h1v1h-1zM28 73h1v1h-1zM8 74h1v1h-1zM16 74h1v1h-1zM18 74h1v1h-1zM2 75h1v1h-1zM10 75h1v1h-1zM16 75h1v1h-1zM19 75h1v1h-1zM20 75h1v1h-1zM29 75h1v1h-1zM0 76h1v1h-1zM15 76h1v1h-1zM29 76h1v1h-1zM0 77h1v1h-1zM12 77h1v1h-1zM25 77h1v1h-1zM29 77h1v1h-1zM8 78h1v1h-1zM18 78h1v1h-1zM27 78h1v1h-1zM8 79h1v1h-1zM14 79h1v1h-1zM26 79h1v1h-1zM19 80h1v1h-1zM20 80h1v1h-1zM31 80h1v1h-1zM15 81h1v1h-1zM16 81h1v1h-1zM4 82h1v1h-1zM10 82h1v1h-1zM17 82h1v1h-1zM21 82h1v1h-1zM26 82h1v1h-1zM30 82h1v1h-1zM33 82h1v1h-1zM0 83h1v1h-1zM21 83h1v1h-1zM23 83h1v1h-1zM34 83h1v1h-1zM21 84h1v1h-1zM3 85h1v1h-1zM5 85h1v1h-1zM21 85h1v1h-1zM23 85h1v1h-1zM28 85h1v1h-1zM29 85h1v1h-1zM0 86h1v1h-1zM14 86h1v1h-1zM20 86h1v1h-1zM23 86h1v1h-1zM29 86h1v1h-1zM3 87h1v1h-1zM4 87h1v1h-1zM33 87h1v1h-1z"/>
<path fill="#999999" d="M3 0h1v1h-1zM5 0h1v1h-1zM6 0h1v1h-1zM14 0h1v1h-1zM18 0h1v1h-1zM25 0h1v1h-1zM30 0h1v1h-1zM1 1h1v1h-1zM2 1h1v1h-1zM13 1h1v1h-1zM15 1h1v1h-1zM21 2h1v1h-1zM30 2h1v1h-1zM34 2h1v1h-1zM0 3h1v1h-1zM1 3h1v1h-1zM6 3h1v1h-1zM16 3h1v1h-1zM31 3h1v1h-1zM33 3h1v1h-1zM0 4h1v1h-1zM3 4h1v1h-1zM13 4h1v1h-1zM14 4h1v1h-1zM18 4h1v1h-1zM28 4h1v1h-1zM30 4h1v1h-1zM32 4h1v1h-1zM0 5h1v1h-1zM24 5h1v1h-1zM1 6h1v1h-1zM5 6h1v1h-1zM19 6h1v1h-1zM26 6h1v1h-1zM30 6h1v1h-1zM32 6h1v1h-1zM5 7h1v1h-1zM10 7h1v1h-1zM16 7h1v1h-1zM17 7h1v1h-1zM21 7h1v1h-1zM26 7h1v1h-1zM27 7h1v1h-1zM31 7h1v1h-1zM32 7h1v1h-1zM0 8h1v1h-1zM6 8h1v1h-1zM25 8h1v1h-1zM28 8h1v1h-1zM29 8h1v1h-1zM4 9h1v1h-1zM14 9h1v1h-1zM16 9h1v1h-1zM19 9h1v1h-1zM20 9h1v1h-1zM26 9h1v1h-1zM34 9h1v1h-1zM19 10h1v1h-1zM32 10h1v1h-1zM2 11h1v1h-1zM19 11h1v1h-1zM22 11h1v1h-1zM7 12h1v1h-1zM8 12h1v1h-1zM13 12h1v1h-1zM15 12h1v1h-1zM16 12h1v1h-1zM19 12h1v1h-1zM28 12h1v1h-1zM7 13h1v1h-1zM8 13h1v1h-1zM12 13h1v1h-1zM15 13h1v1h-1zM23 13h1v1h-1zM28 13h1v1h-1zM30 13h1v1h-1zM34 13h1v1h-1zM18 14h1v1h-1zM22 14h1v1h-1zM26 14h1v1h-1zM27 14h1v1h-1zM16 15h1v1h-1zM22 15h1v1h-1zM27 15h1v1h-1zM1 16h1v1h-1zM8 16h1v1h-1zM10 16h1v1h-1zM11 16h1v1h-1zM15 16h1v1h-1zM27 16h1v1h-1zM1 17h1v1h-1zM6 17h1v1h-1zM11 17h1v1h-1zM15 17h1v1h-1zM18 17h1v1h-1zM24 17h1v1h-1zM30 17h1v1h-1zM2 18h1v1h-1zM11 18h1v1h-1zM13 18h1v1h-1zM21 18h1v1h-1zM9 19h1v1h-1zM19 19h1v1h-1zM24 19h1v1h-1zM2 20h1v1h-1zM4 20h1v1h-1zM9 20h1v1h-1zM10 20h1v1h-1zM12 20h1v1h-1zM15 20h1v1h-1zM16 20h1v1h-1zM19 20h1v1h-1zM20 20h1v1h-1zM21 20h1v1h-1zM17 21h1v1h-1zM25 21h1v1h-1zM26 21h1v1h-1zM32 21h1v1h-1zM3 22h1v1h-1zM29 22h1v1h-1zM32 22h1v1h-1zM33 22h1v1h-1zM16 23h1v1h-1zM23 23h1v1h-1zM0 24h1v1h-1zM11 24h1v1h-1zM19 24h1v1h-1zM21 24h1v1h-1zM25 24h1v1h-1zM6 25h1v1h-1zM17 25h1v1h-1zM30 25h1v1h-1zM6 26h1v1h-1zM12 26h1v1h-1zM16 26h1v1h-1zM24 26h1v1h-1zM2 27h1v1h-1zM5 27h1v1h-1zM20 27h1v1h-1zM22 27h1v1h-1zM4 28h1v1h-1zM7 28h1v1h-1zM8 28h1v1h-1zM28 28h1v1h-1zM30 28h1v1h-1zM0 29h1v1h-1zM9 29h1v1h-1zM25 29h1v1h-1zM9 30h1v1h-1zM10 30h1v1h-1zM13 30h1v1h-1zM17 30h1v1h-1zM21 30h1v1h-1zM26 30h1v1h-1zM28 30h1v1h-1zM34 30h1v1h-1zM5 31h1v1h-1zM7 31h1v1h-1zM8 31h1v1h-1zM15 31h1v1h-1zM19 31h1v1h-1zM22 31h1v1h-1zM23 31h1v1h-1zM31 31h1v1h-1zM9 32h1v1h-1zM22 32h1v1h-1zM25 32h1v1h-1zM31 32h1v1h-1zM22 33h1v1h-1zM25 33h1v1h-1zM30 33h1v1h-1zM31 33h1v1h-1zM1 34h1v1h-1zM2 34h1v1h-1zM5 34h1v1h-1zM6 34h1v1h-1zM2 35h1v1h-1zM14 35h1v1h-1zM15 35h1v1h-1zM17 35h1v1h-1zM20 35h1v1h-1zM27 35h1v1h-1zM33 35h1v1h-1zM5 36h1v1h-1zM23 36h1v1h-1zM13 37h1v1h-1zM15 37h1v1h-1zM17 37h1v1h-1zM9 38h1v1h-1zM21 38h1v1h-1zM22 38h1v1h-1zM23 38h1v1h-1zM24 38h1v1h-1zM25 38h1v1h-1zM32 38h1v1h-1zM3 39h1v1h-1zM6 39h1v1h-1zM13 39h1v1h-1zM16 39h1v1h-1zM17 39h1v1h-1zM19 39h1v1h-1zM27 39h1v1h-1zM3 40h1v1h-1zM9 40h1v1h-1zM13 40h1v1h-1zM14 40h1v1h-1zM19 40h1v1h-1zM22 40h1v1h-1zM25 40h1v1h-1zM29 40h1v1h-1zM34 40h1v1h-1zM20 41h1v1h-1zM23 41h1v1h-1zM26 41h1v1h-1zM27 41h1v1h-1zM28 41h1v1h-1zM31 41h1v1h-1zM32 41h1v1h-1zM1 42h1v1h-1zM10 42h1v1h-1zM16 42h1v1h-1zM26 45h1v1h-1zM14 46h1v1h-1zM22 46h1v1h-1zM23 46h1v1h-1zM3 47h1v1h-1zM6 47h1v1h-1zM13 47h1v1h-1zM16 47h1v1h-1zM19 47h1v1h-1zM21 47h1v1h-1zM22 47h1v1h-1zM24 47h1v1h-1zM26 47h1v1h-1zM28 47h1v1h-1zM31 47h1v1h-1zM34 47h1v1h-1zM2 48h1v1h-1zM4 48h1v1h-1zM6 48h1v1h-1zM11 48h1v1h-1zM15 48h1v1h-1zM19 48h1v1h-1zM23 48h1v1h-1zM25 48h1v1h-1zM26 48h1v1h-1zM29 48h1v1h-1zM8 49h1v1h-1zM11 49h1v1h-1zM16 49h1v1h-1zM26 49h1v1h-1zM13 50h1v1h-1zM14 50h1v1h-1zM15 50h1v1h-1zM22 50h1v1h-1zM28 50h1v1h-1zM29 50h1v1h-1zM30 50h1v1h-1zM31 50h1v1h-1zM1 51h1v1h-1zM6 51h1v1h-1zM19 51h1v1h-1zM22 51h1v1h-1zM27 51h1v1h-1zM8 52h1v1h-1zM11 52h1v1h-1zM12 52h1v1h-1zM15 52h1v1h-1zM19 52h1v1h-1zM20 52h1v1h-1zM21 52h1v1h-1zM28 52h1v1h-1zM29 52h1v1h-1zM34 52h1v1h-1zM0 53h1v1h-1zM7 53h1v1h-1zM8 53h1v1h-1zM10 53h1v1h-1zM19 53h1v1h-1zM21 53h1v1h-1zM30 53h1v1h-1zM32 53h1v1h-1zM8 54h1v1h-1zM16 54h1v1h-1zM18 54h1v1h-1zM19 54h1v1h-1zM24 54h1v1h-1zM32 54h1v1h-1zM10 55h1v1h-1zM16 55h1v1h-1zM27 55h1v1h-1zM28 55h1v1h-1zM30 55h1v1h-1zM4 56h1v1h-1zM8 56h1v1h-1zM9 56h1v1h-1zM22 56h1v1h-1zM30 56h1v1h-1zM33 56h1v1h-1zM34 56h1v1h-1zM6 57h1v1h-1zM8 57h1v1h-1zM26 57h1v1h-1zM34 57h1v1h-1zM8 58h1v1h-1zM26 58h1v1h-1zM29 58h1v1h-1zM14 59h1v1h-1zM16 59h1v1h-1zM22 59h1v1h-1zM3 60h1v1h-1zM5 60h1v1h-1zM9 60h1v1h-1zM13 60h1v1h-1zM17 60h1v1h-1zM23 60h1v1h-1zM3 61h1v1h-1zM4 61h1v1h-1zM6 61h1v1h-1zM8 61h1v1h-1zM16 61h1v1h-1zM26 61h1v1h-1zM27 61h1v1h-1zM8 62h1v1h-1zM12 62h1v1h-1zM28 62h1v1h-1zM2 63h1v1h-1zM7 63h1v1h-1zM14 63h1v1h-1zM29 63h1v1h-1zM1 64h1v1h-1zM19 64h1v1h-1zM25 64h1v1h-1zM1 65h1v1h-1zM3 65h1v1h-1zM14 65h1v1h-1zM16 65h1v1h-1zM22 65h1v1h-1zM24 65h1v1h-1zM30 65h1v1h-1zM31 65h1v1h-1zM0 66h1v1h-1zM4 66h1v1h-1zM9 66h1v1h-1zM18 66h1v1h-1zM19 66h1v1h-1zM20 66h1v1h-1zM26 66h1v1h-1zM33 66h1v1h-1zM6 67h1v1h-1zM15 67h1v1h-1zM19 67h1v1h-1zM26 67h1v1h-1zM11 68h1v1h-1zM15 68h1v1h-1zM20 68h1v1h-1zM22 68h1v1h-1zM32 68h1v1h-1zM33 68h1v1h-1zM3 69h1v1h-1zM15 69h1v1h-1zM26 69h1v1h-1zM33 69h1v1h-1zM34 69h1v1h-1zM20 70h1v1h-1zM24 70h1v1h-1zM2 71h1v1h-1zM18 71h1v1h-1zM19 71h1v1h-1zM23 71h1v1h-1zM24 71h1v1h-1zM29 71h1v1h-1zM31 71h1v1h-1zM32 71h1v1h-1zM0 72h1v1h-1zM5 72h1v1h-1zM13 72h1v1h-1zM15 72h1v1h-1zM16 72h1v1h-1zM21 72h1v1h-1zM27 72h1v1h-1zM30 72h1v1h-1zM33 72h1v1h-1zM34 72h1v1h-1zM16 73h1v1h-1zM17 73h1v1h-1zM18 73h1v1h-1zM2 74h1v1h-1zM11 74h1v1h-1zM15 74h1v1h-1zM19 74h1v1h-1zM22 74h1v1h-1zM25 74h1v1h-1zM33 74h1v1h-1zM9 75h1v1h-1zM14 75h1v1h-1zM15 75h1v1h-1zM7 76h1v1h-1zM8 76h1v1h-1zM14 76h1v1h-1zM19 76h1v1h-1zM20 76h1v1h-1zM24 76h1v1h-1zM4 77h1v1h-1zM8 77h1v1h-1zM18 77h1v1h-1zM19 77h1v1h-1zM31 77h1v1h-1zM2 78h1v1h-1zM3 78h1v1h-1zM15 78h1v1h-1zM25 78h1v1h-1zM33 78h1v1h-1zM4 79h1v1h-1zM20 79h1v1h-1zM23 79h1v1h-1zM25 79h1v1h-1zM28 79h1v1h-1zM30 79h1v1h-1zM3 80h1v1h-1zM14 80h1v1h-1zM15 80h1v1h-1zM27 80h1v1h-1zM4 81h1v1h-1zM12 81h1v1h-1zM28 81h1v1h-1zM32 81h1v1h-1zM12 82h1v1h-1zM28 82h1v1h-1zM1 83h1v1h-1zM11 83h1v1h-1zM12 83h1v1h-1zM16 83h1v1h-1zM17 83h1v1h-1zM19 83h1v1h-1zM7 84h1v1h-1zM9 84h1v1h-1zM19 84h1v1h-1zM25 84h1v1h-1zM27 84h1v1h-1zM28 84h1v1h-1zM29 84h1v1h-1zM32 84h1v1h-1zM13 85h1v1h-1zM16 85h1v1h-1zM18 85h1v1h-1zM27 85h1v1h-1zM4 86h1v1h-1zM18 86h1v1h-1zM19 86h1v1h-1zM22 86h1v1h-1zM31 87h1v1h-1z"/>
<path fill="#aaaaaa" d="M7 0h1v1h-1zM10 0h1v1h-1zM13 0h1v1h-1zM17 0h1v1h-1zM26 0h1v1h-1zM10 1h1v1h-1zM17 1h1v1h-1zM19 1h1v1h-1zM6 2h1v1h-1zM9 2h1v1h-1zM10 2h1v1h-1zM13 2h1v1h-1zM16 2h1v1h-1zM19 2h1v1h-1zM22 2h1v1h-1zM3 3h1v1h-1zM14 3h1v1h-1zM17 3h1v1h-1zM20 3h1v1h-1zM21 3h1v1h-1zM22 3h1v1h-1zM32 3h1v1h-1zM23 4h1v1h-1zM24 4h1v1h-1zM31 4h1v1h-1zM33 4h1v1h-1zM6 5h1v1h-1zM9 5h1v1h-1zM17 5h1v1h-1zM26 5h1v1h-1zM14 6h1v1h-1zM25 6h1v1h-1zM29 6h1v1h-1zM31 6h1v1h-1zM6 7h1v1h-1zM18 7h1v1h-1zM22 7h1v1h-1zM24 7h1v1h-1zM29 7h1v1h-1zM1 8h1v1h-1zM8 8h1v1h-1zM11 8h1v1h-1zM14 8h1v1h-1zM17 8h1v1h-1zM18 8h1v1h-1zM20 8h1v1h-1zM21 8h1v1h-1zM0 9h1v1h-1zM6 9h1v1h-1zM13 9h1v1h-1zM17 9h1v1h-1zM21 9h1v1h-1zM22 9h1v1h-1zM17 10h1v1h-1zM24 10h1v1h-1zM0 11h1v1h-1zM1 11h1v1h-1zM3 11h1v1h-1zM9 11h1v1h-1zM20 11h1v1h-1zM23 11h1v1h-1zM25 11h1v1h-1zM30 11h1v1h-1zM2 12h1v1h-1zM3 12h1v1h-1zM6 12h1v1h-1zM31 12h1v1h-1zM32 12h1v1h-1zM0 13h1v1h-1zM5 13h1v1h-1zM10 13h1v1h-1zM22 13h1v1h-1zM25 13h1v1h-1zM29 13h1v1h-1zM33 13h1v1h-1zM1 14h1v1h-1zM10 14h1v1h-1zM12 14h1v1h-1zM20 14h1v1h-1zM29 14h1v1h-1zM1 15h1v1h-1zM12 15h1v1h-1zM15 15h1v1h-1zM20 15h1v1h-1zM25 15h1v1h-1zM29 15h1v1h-1zM33 15h1v1h-1zM34 15h1v1h-1zM2 16h1v1h-1zM3 16h1v1h-1zM7 16h1v1h-1zM14 16h1v1h-1zM25 16h1v1h-1zM26 16h1v1h-1zM31 16h1v1h-1zM0 17h1v1h-1zM12 17h1v1h-1zM21 17h1v1h-1zM33 17h1v1h-1zM3 18h1v1h-1zM4 18h1v1h-1zM8 18h1v1h-1zM9 18h1v1h-1zM10 18h1v1h-1zM12 18h1v1h-1zM14 18h1v1h-1zM16 18h1v1h-1zM20 18h1v1h-1zM29 18h1v1h-1zM31 18h1v1h-1zM32 18h1v1h-1zM3 19h1v1h-1zM10 19h1v1h-1zM21 19h1v1h-1zM22 19h1v1h-1zM27 19h1v1h-1zM31 19h1v1h-1zM33 19h1v1h-1zM28 20h1v1h-1zM29 20h1v1h-1zM1 21h1v1h-1zM2 21h1v1h-1zM5 21h1v1h-1zM13 21h1v1h-1zM24 21h1v1h-1zM29 21h1v1h-1zM31 21h1v1h-1zM33 21h1v1h-1zM1 22h1v1h-1zM4 22h1v1h-1zM6 22h1v1h-1zM8 22h1v1h-1zM11 22h1v1h-1zM22 22h1v1h-1zM24 22h1v1h-1zM30 22h1v1h-1zM2 23h1v1h-1zM7 23h1v1h-1zM12 23h1v1h-1zM28 23h1v1h-1zM32 23h1v1h-1zM33 23h1v1h-1zM3 24h1v1h-1zM4 24h1v1h-1zM5 24h1v1h-1zM15 24h1v1h-1zM30 24h1v1h-1zM31 24h1v1h-1zM32 24h1v1h-1zM0 25h1v1h-1zM2 25h1v1h-1zM3 25h1v1h-1zM10 25h1v1h-1zM13 25h1v1h-1zM15 25h1v1h-1zM18 25h1v1h-1zM21 25h1v1h-1zM24 25h1v1h-1zM2 26h1v1h-1zM10 26h1v1h-1zM14 26h1v1h-1zM15 26h1v1h-1zM20 26h1v1h-1zM6 27h1v1h-1zM12 27h1v1h-1zM16 27h1v1h-1zM17 27h1v1h-1zM23 27h1v1h-1zM25 27h1v1h-1zM30 27h1v1h-1zM0 28h1v1h-1zM5 28h1v1h-1zM6 28h1v1h-1zM17 28h1v1h-1zM23 28h1v1h-1zM29 28h1v1h-1zM6 29h1v1h-1zM16 29h1v1h-1zM27 29h1v1h-1zM30 29h1v1h-1zM31 29h1v1h-1zM34 29h1v1h-1zM8 30h1v1h-1zM12 30h1v1h-1zM27 30h1v1h-1zM33 30h1v1h-1zM3 31h1v1h-1zM4 31h1v1h-1zM10 31h1v1h-1zM12 31h1v1h-1zM13 31h1v1h-1zM17 31h1v1h-1zM20 31h1v1h-1zM29 31h1v1h-1zM33 31h1v1h-1zM34 31h1v1h-1zM5 32h1v1h-1zM8 32h1v1h-1zM10 32h1v1h-1zM16 32h1v1h-1zM21 32h1v1h-1zM23 32h1v1h-1zM3 33h1v1h-1zM4 33h1v1h-1zM11 33h1v1h-1zM16 33h1v1h-1zM17 33h1v1h-1zM18 33h1v1h-1zM19 33h1v1h-1zM32 33h1v1h-1zM12 34h1v1h-1zM13 34h1v1h-1zM14 34h1v1h-1zM20 34h1v1h-1zM25 34h1v1h-1zM28 34h1v1h-1zM31 34h1v1h-1zM32 34h1v1h-1zM0 35h1v1h-1zM3 35h1v1h-1zM8 35h1v1h-1zM16 35h1v1h-1zM26 35h1v1h-1zM31 35h1v1h-1zM7 36h1v1h-1zM11 36h1v1h-1zM12 36h1v1h-1zM22 36h1v1h-1zM25 36h1v1h-1zM31 36h1v1h-1zM2 37h1v1h-1zM10 37h1v1h-1zM11 37h1v1h-1zM14 37h1v1h-1zM16 37h1v1h-1zM18 37h1v1h-1zM21 37h1v1h-1zM23 37h1v1h-1zM29 37h1v1h-1zM30 37h1v1h-1zM2 38h1v1h-1zM8 38h1v1h-1zM11 38h1v1h-1zM15 38h1v1h-1zM11 39h1v1h-1zM23 39h1v1h-1zM24 39h1v1h-1zM25 39h1v1h-1zM29 39h1v1h-1zM31 39h1v1h-1zM4 40h1v1h-1zM6 40h1v1h-1zM15 40h1v1h-1zM17 40h1v1h-1zM21 40h1v1h-1zM24 40h1v1h-1zM32 40h1v1h-1zM2 41h1v1h-1zM3 41h1v1h-1zM5 41h1v1h-1zM8 41h1v1h-1zM10 41h1v1h-1zM19 41h1v1h-1zM22 41h1v1h-1zM30 41h1v1h-1zM9 42h1v1h-1zM12 42h1v1h-1zM17 42h1v1h-1zM10 46h1v1h-1zM30 46h1v1h-1zM32 46h1v1h-1zM5 47h1v1h-1zM7 47h1v1h-1zM8 47h1v1h-1zM23 47h1v1h-1zM32 47h1v1h-1zM0 48h1v1h-1zM10 48h1v1h-1zM13 48h1v1h-1zM34 48h1v1h-1zM7 49h1v1h-1zM17 49h1v1h-1zM18 49h1v1h-1zM27 49h1v1h-1zM5 50h1v1h-1zM12 50h1v1h-1zM33 50h1v1h-1zM5 51h1v1h-1zM15 51h1v1h-1zM25 51h1v1h-1zM32 51h1v1h-1zM33 51h1v1h-1zM0 52h1v1h-1zM2 52h1v1h-1zM10 52h1v1h-1zM16 52h1v1h-1zM18 52h1v1h-1zM24 52h1v1h-1zM26 52h1v1h-1zM27 52h1v1h-1zM17 53h1v1h-1zM22 53h1v1h-1zM24 53h1v1h-1zM25 53h1v1h-1zM28 53h1v1h-1zM33 53h1v1h-1zM2 54h1v1h-1zM3 54h1v1h-1zM10 54h1v1h-1zM12 54h1v1h-1zM27 54h1v1h-1zM6 55h1v1h-1zM9 55h1v1h-1zM14 55h1v1h-1zM17 55h1v1h-1zM31 55h1v1h-1zM33 55h1v1h-1zM6 56h1v1h-1zM15 56h1v1h-1zM18 56h1v1h-1zM28 56h1v1h-1zM14 57h1v1h-1zM17 57h1v1h-1zM20 57h1v1h-1zM21 57h1v1h-1zM3 58h1v1h-1zM17 58h1v1h-1zM18 58h1v1h-1zM24 58h1v1h-1zM28 58h1v1h-1zM33 58h1v1h-1zM2 59h1v1h-1zM6 59h1v1h-1zM28 59h1v1h-1zM30 59h1v1h-1zM32 59h1v1h-1zM34 59h1v1h-1zM2 60h1v1h-1zM4 60h1v1h-1zM7 60h1v1h-1zM10 60h1v1h-1zM15 60h1v1h-1zM24 60h1v1h-1zM25 60h1v1h-1zM26 60h1v1h-1zM29 60h1v1h-1zM30 60h1v1h-1zM0 61h1v1h-1zM1 61h1v1h-1zM5 61h1v1h-1zM24 61h1v1h-1zM30 61h1v1h-1zM31 61h1v1h-1zM6 62h1v1h-1zM18 62h1v1h-1zM0 63h1v1h-1zM3 63h1v1h-1zM22 63h1v1h-1zM24 63h1v1h-1zM26 63h1v1h-1zM27 63h1v1h-1zM28 63h1v1h-1zM30 63h1v1h-1zM33 63h1v1h-1zM0 64h1v1h-1zM5 64h1v1h-1zM9 64h1v1h-1zM12 64h1v1h-1zM22 64h1v1h-1zM28 64h1v1h-1zM30 64h1v1h-1zM2 65h1v1h-1zM15 65h1v1h-1zM17 65h1v1h-1zM21 65h1v1h-1zM33 65h1v1h-1zM3 66h1v1h-1zM5 66h1v1h-1zM23 66h1v1h-1zM8 67h1v1h-1zM9 67h1v1h-1zM13 67h1v1h-1zM20 67h1v1h-1zM25 67h1v1h-1zM27 67h1v1h-1zM30 67h1v1h-1zM0 68h1v1h-1zM1 68h1v1h-1zM7 68h1v1h-1zM9 68h1v1h-1zM26 68h1v1h-1zM27 68h1v1h-1zM0 69h1v1h-1zM4 69h1v1h-1zM13 69h1v1h-1zM14 69h1v1h-1zM18 69h1v1h-1zM23 69h1v1h-1zM32 69h1v1h-1zM1 70h1v1h-1zM8 70h1v1h-1zM9 70h1v1h-1zM17 70h1v1h-1zM26 70h1v1h-1zM29 70h1v1h-1zM30 70h1v1h-1zM31 70h1v1h-1zM0 71h1v1h-1zM8 71h1v1h-1zM12 71h1v1h-1zM20 71h1v1h-1zM21 71h1v1h-1zM33 71h1v1h-1zM1 72h1v1h-1zM2 72h1v1h-1zM3 72h1v1h-1zM6 72h1v1h-1zM8 72h1v1h-1zM19 72h1v1h-1zM23 72h1v1h-1zM24 72h1v1h-1zM0 73h1v1h-1zM4 73h1v1h-1zM6 73h1v1h-1zM12 73h1v1h-1zM13 73h1v1h-1zM19 73h1v1h-1zM29 73h1v1h-1zM10 74h1v1h-1zM12 74h1v1h-1zM24 74h1v1h-1zM26 74h1v1h-1zM30 74h1v1h-1zM34 74h1v1h-1zM3 75h1v1h-1zM6 75h1v1h-1zM8 75h1v1h-1zM12 75h1v1h-1zM4 76h1v1h-1zM11 76h1v1h-1zM16 76h1v1h-1zM18 76h1v1h-1zM26 76h1v1h-1zM30 76h1v1h-1zM9 77h1v1h-1zM11 77h1v1h-1zM23 77h1v1h-1zM34 77h1v1h-1zM4 78h1v1h-1zM7 78h1v1h-1zM26 78h1v1h-1zM28 78h1v1h-1zM30 78h1v1h-1zM31 78h1v1h-1zM0 79h1v1h-1zM5 79h1v1h-1zM7 79h1v1h-1zM10 79h1v1h-1zM21 79h1v1h-1zM24 79h1v1h-1zM29 79h1v1h-1zM1 80h1v1h-1zM10 80h1v1h-1zM18 80h1v1h-1zM22 80h1v1h-1zM23 80h1v1h-1zM25 80h1v1h-1zM28 80h1v1h-1zM34 80h1v1h-1zM0 81h1v1h-1zM6 81h1v1h-1zM7 81h1v1h-1zM11 81h1v1h-1zM19 81h1v1h-1zM6 82h1v1h-1zM11 82h1v1h-1zM13 82h1v1h-1zM23 82h1v1h-1zM8 83h1v1h-1zM9 83h1v1h-1zM10 83h1v1h-1zM15 83h1v1h-1zM32 83h1v1h-1zM33 83h1v1h-1zM2 84h1v1h-1zM5 84h1v1h-1zM8 84h1v1h-1zM15 84h1v1h-1zM16 84h1v1h-1zM1 85h1v1h-1zM4 85h1v1h-1zM12 85h1v1h-1zM14 85h1v1h-1zM17 85h1v1h-1zM20 85h1v1h-1zM24 85h1v1h-1zM34 85h1v1h-1zM2 86h1v1h-1zM5 86h1v1h-1zM7 86h1v1h-1zM15 86h1v1h-1zM17 86h1v1h-1zM32 86h1v1h-1zM1 87h1v1h-1zM9 87h1v1h-1zM11 87h1v1h-1zM15 87h1v1h-1zM20 87h1v1h-1zM28 87h1v1h-1z"/>
<path fill="#bbbbbb" d="M2 0h1v1h-1zM8 0h1v1h-1zM12 0h1v1h-1zM19 0h1v1h-1zM20 0h1v1h-1zM31 0h1v1h-1zM33 0h1v1h-1zM3 1h1v1h-1zM5 1h1v1h-1zM7 1h1v1h-1zM8 1h1v1h-1zM20 1h1v1h-1zM21 1h1v1h-1zM23 1h1v1h-1zM32 1h1v1h-1zM34 1h1v1h-1zM11 2h1v1h-1zM17 2h1v1h-1zM11 3h1v1h-1zM13 3h1v1h-1zM27 3h1v1h-1zM29 3h1v1h-1zM10 4h1v1h-1zM26 4h1v1h-1zM27 4h1v1h-1zM1 5h1v1h-1zM3 5h1v1h-1zM8 5h1v1h-1zM18 5h1v1h-1zM23 5h1v1h-1zM30 5h1v1h-1zM33 5h1v1h-1zM2 6h1v1h-1zM3 6h1v1h-1zM4 6h1v1h-1zM7 6h1v1h-1zM22 6h1v1h-1zM34 6h1v1h-1zM2 7h1v1h-1zM7 7h1v1h-1zM19 7h1v1h-1zM30 7h1v1h-1zM3 8h1v1h-1zM22 8h1v1h-1zM24 8h1v1h-1zM34 8h1v1h-1zM1 9h1v1h-1zM11 9h1v1h-1zM15 9h1v1h-1zM18 9h1v1h-1zM23 9h1v1h-1zM27 9h1v1h-1zM3 10h1v1h-1zM6 10h1v1h-1zM8 10h1v1h-1zM10 10h1v1h-1zM11 10h1v1h-1zM22 10h1v1h-1zM33 10h1v1h-1zM10 11h1v1h-1zM13 11h1v1h-1zM28 11h1v1h-1zM14 12h1v1h-1zM29 12h1v1h-1zM33 12h1v1h-1zM6 13h1v1h-1zM11 13h1v1h-1zM21 13h1v1h-1zM32 13h1v1h-1zM0 14h1v1h-1zM4 14h1v1h-1zM24 14h1v1h-1zM33 14h1v1h-1zM2 15h1v1h-1zM9 15h1v1h-1zM17 15h1v1h-1zM30 15h1v1h-1zM31 15h1v1h-1zM32 15h1v1h-1zM12 16h1v1h-1zM16 16h1v1h-1zM17 16h1v1h-1zM18 16h1v1h-1zM19 16h1v1h-1zM20 16h1v1h-1zM21 16h1v1h-1zM29 16h1v1h-1zM4 17h1v1h-1zM13 17h1v1h-1zM23 17h1v1h-1zM29 17h1v1h-1zM32 17h1v1h-1zM0 18h1v1h-1zM1 18h1v1h-1zM17 18h1v1h-1zM28 18h1v1h-1zM0 19h1v1h-1zM5 19h1v1h-1zM7 19h1v1h-1zM12 19h1v1h-1zM28 19h1v1h-1zM30 19h1v1h-1zM0 20h1v1h-1zM8 20h1v1h-1zM14 20h1v1h-1zM24 20h1v1h-1zM0 21h1v1h-1zM9 21h1v1h-1zM15 21h1v1h-1zM18 21h1v1h-1zM21 21h1v1h-1zM7 22h1v1h-1zM17 22h1v1h-1zM3 23h1v1h-1zM10 23h1v1h-1zM22 23h1v1h-1zM25 23h1v1h-1zM26 23h1v1h-1zM27 23h1v1h-1zM14 24h1v1h-1zM16 24h1v1h-1zM18 24h1v1h-1zM28 24h1v1h-1zM33 24h1v1h-1zM19 25h1v1h-1zM25 25h1v1h-1zM29 25h1v1h-1zM32 25h1v1h-1zM33 25h1v1h-1zM3 26h1v1h-1zM4 26h1v1h-1zM5 26h1v1h-1zM19 26h1v1h-1zM23 26h1v1h-1zM29 26h1v1h-1zM32 26h1v1h-1zM3 27h1v1h-1zM27 27h1v1h-1zM10 28h1v1h-1zM13 28h1v1h-1zM19 28h1v1h-1zM21 28h1v1h-1zM34 28h1v1h-1zM3 29h1v1h-1zM11 29h1v1h-1zM21 29h1v1h-1zM32 29h1v1h-1zM2 30h1v1h-1zM15 30h1v1h-1zM18 30h1v1h-1zM20 30h1v1h-1zM0 31h1v1h-1zM6 31h1v1h-1zM21 31h1v1h-1zM26 31h1v1h-1zM30 31h1v1h-1zM0 32h1v1h-1zM3 32h1v1h-1zM6 32h1v1h-1zM14 32h1v1h-1zM17 32h1v1h-1zM14 33h1v1h-1zM15 33h1v1h-1zM24 33h1v1h-1zM28 33h1v1h-1zM33 33h1v1h-1zM34 33h1v1h-1zM8 34h1v1h-1zM11 34h1v1h-1zM16 34h1v1h-1zM1 35h1v1h-1zM4 35h1v1h-1zM5 35h1v1h-1zM6 35h1v1h-1zM10 35h1v1h-1zM18 35h1v1h-1zM21 35h1v1h-1zM22 35h1v1h-1zM24 35h1v1h-1zM9 36h1v1h-1zM10 36h1v1h-1zM13 36h1v1h-1zM8 37h1v1h-1zM19 37h1v1h-1zM26 37h1v1h-1zM1 38h1v1h-1zM3 38h1v1h-1zM6 38h1v1h-1zM27 38h1v1h-1zM29 38h1v1h-1zM30 38h1v1h-1zM1 39h1v1h-1zM2 39h1v1h-1zM18 39h1v1h-1zM5 40h1v1h-1zM10 40h1v1h-1zM11 40h1v1h-1zM12 40h1v1h-1zM33 40h1v1h-1zM11 41h1v1h-1zM13 41h1v1h-1zM16 41h1v1h-1zM24 41h1v1h-1zM33 41h1v1h-1zM33 47h1v1h-1zM7 48h1v1h-1zM8 48h1v1h-1zM12 48h1v1h-1zM30 48h1v1h-1zM33 48h1v1h-1zM2 49h1v1h-1zM6 49h1v1h-1zM15 49h1v1h-1zM20 49h1v1h-1zM25 49h1v1h-1zM31 49h1v1h-1zM2 50h1v1h-1zM4 50h1v1h-1zM7 50h1v1h-1zM17 50h1v1h-1zM21 50h1v1h-1zM26 50h1v1h-1zM32 50h1v1h-1zM0 51h1v1h-1zM4 51h1v1h-1zM7 51h1v1h-1zM21 51h1v1h-1zM24 51h1v1h-1zM1 52h1v1h-1zM3 52h1v1h-1zM6 52h1v1h-1zM7 52h1v1h-1zM13 52h1v1h-1zM25 52h1v1h-1zM1 53h1v1h-1zM3 53h1v1h-1zM13 53h1v1h-1zM14 53h1v1h-1zM16 53h1v1h-1zM23 53h1v1h-1zM34 53h1v1h-1zM0 54h1v1h-1zM9 54h1v1h-1zM15 54h1v1h-1zM17 54h1v1h-1zM23 54h1v1h-1zM25 54h1v1h-1zM26 54h1v1h-1zM29 54h1v1h-1zM0 55h1v1h-1zM11 55h1v1h-1zM12 55h1v1h-1zM13 55h1v1h-1zM24 55h1v1h-1zM26 55h1v1h-1zM29 55h1v1h-1zM32 55h1v1h-1zM1 56h1v1h-1zM2 56h1v1h-1zM20 56h1v1h-1zM25 56h1v1h-1zM29 56h1v1h-1zM1 57h1v1h-1zM2 57h1v1h-1zM3 57h1v1h-1zM9 57h1v1h-1zM10 57h1v1h-1zM29 57h1v1h-1zM30 57h1v1h-1zM10 58h1v1h-1zM11 58h1v1h-1zM13 58h1v1h-1zM19 58h1v1h-1zM10 59h1v1h-1zM11 59h1v1h-1zM12 59h1v1h-1zM17 59h1v1h-1zM18 59h1v1h-1zM20 59h1v1h-1zM27 59h1v1h-1zM29 59h1v1h-1zM0 60h1v1h-1zM11 60h1v1h-1zM16 60h1v1h-1zM32 60h1v1h-1zM28 61h1v1h-1zM32 61h1v1h-1zM34 61h1v1h-1zM2 62h1v1h-1zM3 62h1v1h-1zM5 62h1v1h-1zM7 62h1v1h-1zM20 62h1v1h-1zM22 62h1v1h-1zM25 62h1v1h-1zM31 62h1v1h-1zM1 63h1v1h-1zM9 63h1v1h-1zM13 63h1v1h-1zM4 64h1v1h-1zM15 64h1v1h-1zM18 64h1v1h-1zM4 65h1v1h-1zM5 65h1v1h-1zM10 65h1v1h-1zM13 65h1v1h-1zM27 65h1v1h-1zM32 65h1v1h-1zM10 66h1v1h-1zM11 66h1v1h-1zM16 66h1v1h-1zM21 66h1v1h-1zM31 66h1v1h-1zM3 67h1v1h-1zM5 67h1v1h-1zM7 67h1v1h-1zM10 67h1v1h-1zM33 67h1v1h-1zM3 68h1v1h-1zM4 68h1v1h-1zM5 68h1v1h-1zM8 68h1v1h-1zM17 68h1v1h-1zM29 68h1v1h-1zM34 68h1v1h-1zM5 69h1v1h-1zM6 69h1v1h-1zM7 69h1v1h-1zM9 69h1v1h-1zM21 69h1v1h-1zM28 69h1v1h-1zM0 70h1v1h-1zM18 70h1v1h-1zM21 70h1v1h-1zM32 70h1v1h-1zM34 70h1v1h-1zM14 71h1v1h-1zM15 71h1v1h-1zM17 71h1v1h-1zM26 71h1v1h-1zM27 71h1v1h-1zM7 72h1v1h-1zM10 72h1v1h-1zM12 72h1v1h-1zM14 72h1v1h-1zM18 72h1v1h-1zM8 73h1v1h-1zM14 73h1v1h-1zM21 73h1v1h-1zM23 73h1v1h-1zM24 73h1v1h-1zM30 73h1v1h-1zM31 73h1v1h-1zM32 73h1v1h-1zM34 73h1v1h-1zM17 74h1v1h-1zM11 75h1v1h-1zM17 75h1v1h-1zM22 75h1v1h-1zM25 75h1v1h-1zM26 75h1v1h-1zM32 75h1v1h-1zM34 75h1v1h-1zM9 76h1v1h-1zM13 76h1v1h-1zM25 76h1v1h-1zM32 76h1v1h-1zM33 76h1v1h-1zM6 77h1v1h-1zM7 77h1v1h-1zM20 77h1v1h-1zM24 77h1v1h-1zM27 77h1v1h-1zM30 77h1v1h-1zM32 77h1v1h-1zM5 78h1v1h-1zM6 78h1v1h-1zM13 78h1v1h-1zM21 78h1v1h-1zM1 79h1v1h-1zM9 79h1v1h-1zM13 79h1v1h-1zM15 79h1v1h-1zM16 79h1v1h-1zM31 79h1v1h-1zM2 80h1v1h-1zM16 80h1v1h-1zM29 80h1v1h-1zM1 81h1v1h-1zM5 81h1v1h-1zM21 81h1v1h-1zM22 81h1v1h-1zM26 81h1v1h-1zM3 82h1v1h-1zM22 82h1v1h-1zM29 82h1v1h-1zM3 83h1v1h-1zM13 83h1v1h-1zM14 83h1v1h-1zM31 83h1v1h-1zM0 84h1v1h-1zM4 84h1v1h-1zM10 84h1v1h-1zM13 84h1v1h-1zM24 84h1v1h-1zM26 84h1v1h-1zM8 85h1v1h-1zM11 85h1v1h-1zM15 85h1v1h-1zM26 85h1v1h-1zM3 86h1v1h-1zM9 86h1v1h-1zM10 86h1v1h-1zM12 86h1v1h-1zM22 87h1v1h-1zM23 87h1v1h-1zM32 87h1v1h-1z"/>
<path fill="#cccccc" d="M9 0h1v1h-1zM24 0h1v1h-1zM4 1h1v1h-1zM9 1h1v1h-1zM14 1h1v1h-1zM16 1h1v1h-1zM31 1h1v1h-1zM2 2h1v1h-1zM8 2h1v1h-1zM23 2h1v1h-1zM24 2h1v1h-1zM28 2h1v1h-1zM2 3h1v1h-1zM8 3h1v1h-1zM30 3h1v1h-1zM7 4h1v1h-1zM8 4h1v1h-1zM15 4h1v1h-1zM19 4h1v1h-1zM21 4h1v1h-1zM25 4h1v1h-1zM10 5h1v1h-1zM14 5h1v1h-1zM16 5h1v1h-1zM27 5h1v1h-1zM10 6h1v1h-1zM20 6h1v1h-1zM21 6h1v1h-1zM24 6h1v1h-1zM33 6h1v1h-1zM23 7h1v1h-1zM2 8h1v1h-1zM4 8h1v1h-1zM15 8h1v1h-1zM32 9h1v1h-1zM1 10h1v1h-1zM2 10h1v1h-1zM26 10h1v1h-1zM30 10h1v1h-1zM31 10h1v1h-1zM4 11h1v1h-1zM5 11h1v1h-1zM7 11h1v1h-1zM8 11h1v1h-1zM15 11h1v1h-1zM16 11h1v1h-1zM21 11h1v1h-1zM27 11h1v1h-1zM32 11h1v1h-1zM0 12h1v1h-1zM25 12h1v1h-1zM30 12h1v1h-1zM9 13h1v1h-1zM14 13h1v1h-1zM2 14h1v1h-1zM3 14h1v1h-1zM7 14h1v1h-1zM14 14h1v1h-1zM3 15h1v1h-1zM18 15h1v1h-1zM19 15h1v1h-1zM23 15h1v1h-1zM26 15h1v1h-1zM6 16h1v1h-1zM9 16h1v1h-1zM22 16h1v1h-1zM34 16h1v1h-1zM9 17h1v1h-1zM22 17h1v1h-1zM25 17h1v1h-1zM31 17h1v1h-1zM34 17h1v1h-1zM5 18h1v1h-1zM7 18h1v1h-1zM26 18h1v1h-1zM33 18h1v1h-1zM25 19h1v1h-1zM3 20h1v1h-1zM11 20h1v1h-1zM13 20h1v1h-1zM31 20h1v1h-1zM33 20h1v1h-1zM34 20h1v1h-1zM12 21h1v1h-1zM16 21h1v1h-1zM22 21h1v1h-1zM34 21h1v1h-1zM12 22h1v1h-1zM16 22h1v1h-1zM1 23h1v1h-1zM6 23h1v1h-1zM8 23h1v1h-1zM17 23h1v1h-1zM30 23h1v1h-1zM34 23h1v1h-1zM1 24h1v1h-1zM7 24h1v1h-1zM12 24h1v1h-1zM23 24h1v1h-1zM26 24h1v1h-1zM29 24h1v1h-1zM4 25h1v1h-1zM8 25h1v1h-1zM9 25h1v1h-1zM16 25h1v1h-1zM23 25h1v1h-1zM27 25h1v1h-1zM0 26h1v1h-1zM1 26h1v1h-1zM7 26h1v1h-1zM13 26h1v1h-1zM30 26h1v1h-1zM8 27h1v1h-1zM10 27h1v1h-1zM13 27h1v1h-1zM14 27h1v1h-1zM18 27h1v1h-1zM28 27h1v1h-1zM31 27h1v1h-1zM9 28h1v1h-1zM11 28h1v1h-1zM16 28h1v1h-1zM18 28h1v1h-1zM24 28h1v1h-1zM31 28h1v1h-1zM1 29h1v1h-1zM2 29h1v1h-1zM10 29h1v1h-1zM12 29h1v1h-1zM13 29h1v1h-1zM14 29h1v1h-1zM15 29h1v1h-1zM17 29h1v1h-1zM26 29h1v1h-1zM28 29h1v1h-1zM33 29h1v1h-1zM0 30h1v1h-1zM7 30h1v1h-1zM19 30h1v1h-1zM22 30h1v1h-1zM31 30h1v1h-1zM11 31h1v1h-1zM14 31h1v1h-1zM27 31h1v1h-1zM12 32h1v1h-1zM18 32h1v1h-1zM28 32h1v1h-1zM1 33h1v1h-1zM2 33h1v1h-1zM5 33h1v1h-1zM12 33h1v1h-1zM3 34h1v1h-1zM17 34h1v1h-1zM18 34h1v1h-1zM29 34h1v1h-1zM25 35h1v1h-1zM29 35h1v1h-1zM1 36h1v1h-1zM0 37h1v1h-1zM1 37h1v1h-1zM12 37h1v1h-1zM20 37h1v1h-1zM5 39h1v1h-1zM9 39h1v1h-1zM10 39h1v1h-1zM12 39h1v1h-1zM14 39h1v1h-1zM28 39h1v1h-1zM34 39h1v1h-1zM8 40h1v1h-1zM26 40h1v1h-1zM2 46h1v1h-1zM0 47h1v1h-1zM2 47h1v1h-1zM9 47h1v1h-1zM30 47h1v1h-1zM1 48h1v1h-1zM22 48h1v1h-1zM24 48h1v1h-1zM32 48h1v1h-1zM10 49h1v1h-1zM14 49h1v1h-1zM19 49h1v1h-1zM23 49h1v1h-1zM24 49h1v1h-1zM28 49h1v1h-1zM32 49h1v1h-1zM3 50h1v1h-1zM18 50h1v1h-1zM3 51h1v1h-1zM9 51h1v1h-1zM10 51h1v1h-1zM12 51h1v1h-1zM17 51h1v1h-1zM4 52h1v1h-1zM5 52h1v1h-1zM2 53h1v1h-1zM5 53h1v1h-1zM29 53h1v1h-1zM6 54h1v1h-1zM28 54h1v1h-1zM1 55h1v1h-1zM2 55h1v1h-1zM7 55h1v1h-1zM15 55h1v1h-1zM19 55h1v1h-1zM22 55h1v1h-1zM23 55h1v1h-1zM7 56h1v1h-1zM17 56h1v1h-1zM24 56h1v1h-1zM0 57h1v1h-1zM32 57h1v1h-1zM14 58h1v1h-1zM16 58h1v1h-1zM22 58h1v1h-1zM27 58h1v1h-1zM34 58h1v1h-1zM7 59h1v1h-1zM13 59h1v1h-1zM21 59h1v1h-1zM25 59h1v1h-1zM31 59h1v1h-1zM1 60h1v1h-1zM19 60h1v1h-1zM20 60h1v1h-1zM21 60h1v1h-1zM31 60h1v1h-1zM7 61h1v1h-1zM21 61h1v1h-1zM22 61h1v1h-1zM11 62h1v1h-1zM15 62h1v1h-1zM21 62h1v1h-1zM32 62h1v1h-1zM34 62h1v1h-1zM5 63h1v1h-1zM17 63h1v1h-1zM25 63h1v1h-1zM34 63h1v1h-1zM2 64h1v1h-1zM11 64h1v1h-1zM24 64h1v1h-1zM26 64h1v1h-1zM12 65h1v1h-1zM26 65h1v1h-1zM1 66h1v1h-1zM2 66h1v1h-1zM15 66h1v1h-1zM24 66h1v1h-1zM30 66h1v1h-1zM0 67h1v1h-1zM4 67h1v1h-1zM12 67h1v1h-1zM22 67h1v1h-1zM24 67h1v1h-1zM2 68h1v1h-1zM13 68h1v1h-1zM16 68h1v1h-1zM10 69h1v1h-1zM12 69h1v1h-1zM29 69h1v1h-1zM31 69h1v1h-1zM4 70h1v1h-1zM10 70h1v1h-1zM11 70h1v1h-1zM14 70h1v1h-1zM33 70h1v1h-1zM4 71h1v1h-1zM13 71h1v1h-1zM28 71h1v1h-1zM11 72h1v1h-1zM17 72h1v1h-1zM22 72h1v1h-1zM25 72h1v1h-1zM32 72h1v1h-1zM3 73h1v1h-1zM22 73h1v1h-1zM33 73h1v1h-1zM0 74h1v1h-1zM4 74h1v1h-1zM6 74h1v1h-1zM21 74h1v1h-1zM31 74h1v1h-1zM1 75h1v1h-1zM4 75h1v1h-1zM7 75h1v1h-1zM13 75h1v1h-1zM18 75h1v1h-1zM24 75h1v1h-1zM28 75h1v1h-1zM33 75h1v1h-1zM1 76h1v1h-1zM2 76h1v1h-1zM6 76h1v1h-1zM23 76h1v1h-1zM27 76h1v1h-1zM28 76h1v1h-1zM3 77h1v1h-1zM10 77h1v1h-1zM15 77h1v1h-1zM17 77h1v1h-1zM16 78h1v1h-1zM20 78h1v1h-1zM32 78h1v1h-1zM12 79h1v1h-1zM19 79h1v1h-1zM27 79h1v1h-1zM5 80h1v1h-1zM6 80h1v1h-1zM17 80h1v1h-1zM21 80h1v1h-1zM24 80h1v1h-1zM8 81h1v1h-1zM10 81h1v1h-1zM13 81h1v1h-1zM20 81h1v1h-1zM23 81h1v1h-1zM24 81h1v1h-1zM27 81h1v1h-1zM29 81h1v1h-1zM30 81h1v1h-1zM34 81h1v1h-1zM1 82h1v1h-1zM8 82h1v1h-1zM9 82h1v1h-1zM14 82h1v1h-1zM19 82h1v1h-1zM20 82h1v1h-1zM27 82h1v1h-1zM32 82h1v1h-1zM34 82h1v1h-1zM6 83h1v1h-1zM26 83h1v1h-1zM14 84h1v1h-1zM18 84h1v1h-1zM20 84h1v1h-1zM10 85h1v1h-1zM30 85h1v1h-1zM31 85h1v1h-1zM6 86h1v1h-1zM26 86h1v1h-1zM27 86h1v1h-1zM2 87h1v1h-1zM7 87h1v1h-1zM8 87h1v1h-1zM13 87h1v1h-1zM14 87h1v1h-1zM19 87h1v1h-1zM25 87h1v1h-1zM29 87h1v1h-1zM34 87h1v1h-1z"/>
<path fill="#dddddd" d="M11 0h1v1h-1zM29 1h1v1h-1zM7 3h1v1h-1zM10 3h1v1h-1zM18 3h1v1h-1zM24 3h1v1h-1zM25 3h1v1h-1zM28 3h1v1h-1zM5 5h1v1h-1zM11 5h1v1h-1zM13 5h1v1h-1zM19 5h1v1h-1zM21 5h1v1h-1zM25 5h1v1h-1zM28 5h1v1h-1zM13 6h1v1h-1zM4 7h1v1h-1zM9 7h1v1h-1zM15 7h1v1h-1zM5 8h1v1h-1zM7 8h1v1h-1zM32 8h1v1h-1zM33 8h1v1h-1zM3 9h1v1h-1zM29 9h1v1h-1zM30 9h1v1h-1zM25 10h1v1h-1zM34 11h1v1h-1zM4 12h1v1h-1zM12 12h1v1h-1zM17 12h1v1h-1zM13 13h1v1h-1zM6 14h1v1h-1zM9 14h1v1h-1zM16 14h1v1h-1zM19 14h1v1h-1zM34 14h1v1h-1zM5 16h1v1h-1zM28 16h1v1h-1zM30 16h1v1h-1zM2 17h1v1h-1zM5 17h1v1h-1zM17 17h1v1h-1zM6 18h1v1h-1zM22 18h1v1h-1zM27 18h1v1h-1zM16 19h1v1h-1zM34 19h1v1h-1zM1 20h1v1h-1zM7 20h1v1h-1zM30 20h1v1h-1zM32 20h1v1h-1zM7 21h1v1h-1zM19 21h1v1h-1zM20 21h1v1h-1zM0 22h1v1h-1zM18 22h1v1h-1zM21 22h1v1h-1zM10 24h1v1h-1zM20 24h1v1h-1zM1 25h1v1h-1zM14 25h1v1h-1zM8 26h1v1h-1zM18 26h1v1h-1zM22 26h1v1h-1zM26 26h1v1h-1zM19 27h1v1h-1zM25 28h1v1h-1zM4 29h1v1h-1zM20 29h1v1h-1zM1 30h1v1h-1zM6 30h1v1h-1zM11 30h1v1h-1zM24 31h1v1h-1zM28 31h1v1h-1zM1 32h1v1h-1zM19 32h1v1h-1zM24 32h1v1h-1zM32 32h1v1h-1zM7 33h1v1h-1zM10 33h1v1h-1zM4 34h1v1h-1zM7 34h1v1h-1zM9 34h1v1h-1zM10 34h1v1h-1zM21 34h1v1h-1zM22 34h1v1h-1zM17 36h1v1h-1zM27 36h1v1h-1zM34 36h1v1h-1zM3 37h1v1h-1zM5 37h1v1h-1zM4 38h1v1h-1zM19 38h1v1h-1zM33 38h1v1h-1zM0 39h1v1h-1zM26 39h1v1h-1zM1 40h1v1h-1zM12 41h1v1h-1zM15 47h1v1h-1zM25 47h1v1h-1zM27 47h1v1h-1zM5 48h1v1h-1zM21 48h1v1h-1zM4 49h1v1h-1zM22 49h1v1h-1zM16 50h1v1h-1zM19 50h1v1h-1zM23 50h1v1h-1zM25 50h1v1h-1zM20 51h1v1h-1zM28 51h1v1h-1zM15 53h1v1h-1zM27 53h1v1h-1zM11 54h1v1h-1zM14 54h1v1h-1zM21 54h1v1h-1zM22 54h1v1h-1zM34 55h1v1h-1zM5 56h1v1h-1zM14 56h1v1h-1zM7 58h1v1h-1zM23 59h1v1h-1zM27 60h1v1h-1zM0 62h1v1h-1zM26 62h1v1h-1zM15 63h1v1h-1zM7 64h1v1h-1zM10 64h1v1h-1zM13 64h1v1h-1zM31 64h1v1h-1zM34 64h1v1h-1zM18 65h1v1h-1zM25 65h1v1h-1zM6 66h1v1h-1zM14 67h1v1h-1zM21 67h1v1h-1zM19 68h1v1h-1zM25 68h1v1h-1zM27 69h1v1h-1zM1 71h1v1h-1zM5 71h1v1h-1zM10 71h1v1h-1zM28 72h1v1h-1zM2 73h1v1h-1zM1 74h1v1h-1zM14 74h1v1h-1zM12 76h1v1h-1zM21 76h1v1h-1zM31 76h1v1h-1zM1 77h1v1h-1zM22 77h1v1h-1zM33 77h1v1h-1zM12 78h1v1h-1zM23 78h1v1h-1zM29 78h1v1h-1zM2 79h1v1h-1zM17 79h1v1h-1zM4 80h1v1h-1zM2 81h1v1h-1zM17 81h1v1h-1zM18 81h1v1h-1zM31 81h1v1h-1zM7 82h1v1h-1zM24 82h1v1h-1zM25 82h1v1h-1zM31 82h1v1h-1zM5 83h1v1h-1zM22 83h1v1h-1zM28 83h1v1h-1zM29 83h1v1h-1zM34 84h1v1h-1zM25 85h1v1h-1zM32 85h1v1h-1zM13 86h1v1h-1zM28 86h1v1h-1zM31 86h1v1h-1zM0 87h1v1h-1zM10 87h1v1h-1zM18 87h1v1h-1z"/>
<path fill="#eeeeee" d="M33 1h1v1h-1zM27 2h1v1h-1zM26 3h1v1h-1zM6 4h1v1h-1zM7 5h1v1h-1zM12 5h1v1h-1zM25 7h1v1h-1zM12 9h1v1h-1zM1 12h1v1h-1zM1 13h1v1h-1zM30 14h1v1h-1zM24 15h1v1h-1zM3 17h1v1h-1zM20 17h1v1h-1zM19 18h1v1h-1zM17 19h1v1h-1zM29 19h1v1h-1zM27 20h1v1h-1zM4 21h1v1h-1zM23 21h1v1h-1zM25 22h1v1h-1zM27 24h1v1h-1zM21 26h1v1h-1zM27 26h1v1h-1zM11 27h1v1h-1zM22 28h1v1h-1zM26 28h1v1h-1zM8 29h1v1h-1zM23 30h1v1h-1zM18 31h1v1h-1zM4 32h1v1h-1zM33 32h1v1h-1zM0 34h1v1h-1zM27 34h1v1h-1zM34 34h1v1h-1zM13 35h1v1h-1zM19 35h1v1h-1zM15 36h1v1h-1zM33 37h1v1h-1zM26 38h1v1h-1zM20 39h1v1h-1zM27 40h1v1h-1zM10 47h1v1h-1zM17 48h1v1h-1zM20 48h1v1h-1zM0 50h1v1h-1zM11 50h1v1h-1zM24 50h1v1h-1zM23 51h1v1h-1zM23 52h1v1h-1zM32 52h1v1h-1zM33 52h1v1h-1zM6 53h1v1h-1zM31 53h1v1h-1zM21 55h1v1h-1zM11 57h1v1h-1zM16 57h1v1h-1zM12 58h1v1h-1zM25 58h1v1h-1zM6 60h1v1h-1zM14 60h1v1h-1zM28 60h1v1h-1zM11 61h1v1h-1zM1 62h1v1h-1zM4 62h1v1h-1zM8 63h1v1h-1zM10 63h1v1h-1zM32 63h1v1h-1zM16 64h1v1h-1zM19 65h1v1h-1zM17 66h1v1h-1zM17 67h1v1h-1zM14 68h1v1h-1zM28 68h1v1h-1zM31 68h1v1h-1zM8 69h1v1h-1zM11 69h1v1h-1zM20 69h1v1h-1zM19 70h1v1h-1zM9 72h1v1h-1zM11 73h1v1h-1zM25 73h1v1h-1zM5 74h1v1h-1zM32 74h1v1h-1zM0 75h1v1h-1zM27 75h1v1h-1zM30 75h1v1h-1zM31 75h1v1h-1zM13 77h1v1h-1zM16 77h1v1h-1zM28 77h1v1h-1zM7 80h1v1h-1zM25 81h1v1h-1zM5 82h1v1h-1zM4 83h1v1h-1zM6 84h1v1h-1zM31 84h1v1h-1zM0 85h1v1h-1zM19 85h1v1h-1zM8 86h1v1h-1zM24 86h1v1h-1zM30 86h1v1h-1z"/>
<path fill="#ffffff" d="M0 0h1v1h-1zM30 1h1v1h-1zM14 2h1v1h-1zM5 4h1v1h-1zM17 4h1v1h-1zM29 4h1v1h-1zM22 5h1v1h-1zM17 6h1v1h-1zM18 6h1v1h-1zM13 8h1v1h-1zM30 8h1v1h-1zM28 10h1v1h-1zM17 13h1v1h-1zM5 15h1v1h-1zM6 15h1v1h-1zM21 15h1v1h-1zM24 18h1v1h-1zM13 19h1v1h-1zM27 21h1v1h-1zM9 22h1v1h-1zM15 22h1v1h-1zM7 25h1v1h-1zM20 25h1v1h-1zM17 26h1v1h-1zM28 26h1v1h-1zM7 27h1v1h-1zM29 27h1v1h-1zM3 28h1v1h-1zM2 32h1v1h-1zM21 33h1v1h-1zM27 33h1v1h-1zM24 36h1v1h-1zM28 36h1v1h-1zM13 38h1v1h-1zM14 38h1v1h-1zM28 38h1v1h-1zM31 38h1v1h-1zM4 39h1v1h-1zM7 39h1v1h-1zM22 39h1v1h-1zM32 39h1v1h-1zM7 40h1v1h-1zM18 40h1v1h-1zM0 41h1v1h-1zM18 41h1v1h-1zM12 47h1v1h-1zM10 50h1v1h-1zM34 50h1v1h-1zM18 51h1v1h-1zM7 54h1v1h-1zM20 54h1v1h-1zM4 55h1v1h-1zM20 55h1v1h-1zM10 56h1v1h-1zM21 56h1v1h-1zM12 57h1v1h-1zM19 57h1v1h-1zM23 57h1v1h-1zM0 59h1v1h-1zM33 60h1v1h-1zM34 60h1v1h-1zM18 61h1v1h-1zM13 62h1v1h-1zM31 63h1v1h-1zM25 66h1v1h-1zM18 67h1v1h-1zM29 67h1v1h-1zM24 68h1v1h-1zM1 69h1v1h-1zM6 70h1v1h-1zM27 70h1v1h-1zM7 71h1v1h-1zM10 73h1v1h-1zM15 73h1v1h-1zM20 73h1v1h-1zM29 74h1v1h-1zM17 76h1v1h-1zM5 77h1v1h-1zM14 77h1v1h-1zM11 78h1v1h-1zM14 78h1v1h-1zM24 78h1v1h-1zM9 81h1v1h-1zM2 82h1v1h-1zM2 83h1v1h-1zM24 83h1v1h-1zM25 83h1v1h-1zM21 86h1v1h-1zM33 86h1v1h-1zM12 87h1v1h-1zM30 87h1v1h-1z"/>
</g></g></svg>
<rect x="932.5" y="64.7" width="67.5" height="168.6" fill="none" stroke="#0000ee" stroke-width="2.6"/>
<rect x="1047.6" y="60.6" width="251.4" height="150.6" fill="#fff"/>
<line x1="1047.6" y1="197.4" x2="1299.0" y2="197.4" stroke="#808080" stroke-width="1"/>
<svg x="1047.6" y="60.6" width="251.4" height="150.6" overflow="hidden"><g transform="translate(-1047.6,-60.6)">
<line x1="1059.2" y1="146.0" x2="1059.2" y2="100.1" stroke="#1f77b4" stroke-width="1.5"/>
<circle cx="1059.2" cy="124.2" r="1.8" fill="#1f77b4"/>
<line x1="1063.9" y1="113.2" x2="1063.9" y2="67.3" stroke="#1f77b4" stroke-width="1.5"/>
<circle cx="1063.9" cy="90.3" r="1.8" fill="#1f77b4"/>
<line x1="1068.6" y1="127.4" x2="1068.6" y2="83.7" stroke="#1f77b4" stroke-width="1.5"/>
<circle cx="1068.6" cy="105.6" r="1.8" fill="#1f77b4"/>
<line x1="1073.2" y1="92.5" x2="1073.2" y2="60.8" stroke="#1f77b4" stroke-width="1.5"/>
<circle cx="1073.2" cy="70.6" r="1.8" fill="#1f77b4"/>
<line x1="1077.9" y1="118.7" x2="1077.9" y2="76.1" stroke="#1f77b4" stroke-width="1.5"/>
<circle cx="1077.9" cy="96.8" r="1.8" fill="#1f77b4"/>
<line x1="1082.6" y1="140.6" x2="1082.6" y2="99.0" stroke="#1f77b4" stroke-width="1.5"/>
<circle cx="1082.6" cy="119.8" r="1.8" fill="#1f77b4"/>
<line x1="1087.3" y1="150.4" x2="1087.3" y2="110.0" stroke="#1f77b4" stroke-width="1.5"/>
<circle cx="1087.3" cy="129.6" r="1.8" fill="#1f77b4"/>
<line x1="1091.9" y1="130.7" x2="1091.9" y2="91.4" stroke="#1f77b4" stroke-width="1.5"/>
<circle cx="1091.9" cy="111.1" r="1.8" fill="#1f77b4"/>
<line x1="1096.6" y1="152.6" x2="1096.6" y2="115.4" stroke="#1f77b4" stroke-width="1.5"/>
<circle cx="1096.6" cy="134.0" r="1.8" fill="#1f77b4"/>
<line x1="1101.3" y1="175.5" x2="1101.3" y2="139.5" stroke="#1f77b4" stroke-width="1.5"/>
<circle cx="1101.3" cy="157.0" r="1.8" fill="#1f77b4"/>
<line x1="1105.9" y1="185.4" x2="1105.9" y2="151.5" stroke="#1f77b4" stroke-width="1.5"/>
<circle cx="1105.9" cy="169.0" r="1.8" fill="#1f77b4"/>
<line x1="1110.6" y1="164.6" x2="1110.6" y2="131.8" stroke="#1f77b4" stroke-width="1.5"/>
<circle cx="1110.6" cy="148.2" r="1.8" fill="#1f77b4"/>
<line x1="1115.3" y1="166.8" x2="1115.3" y2="134.0" stroke="#1f77b4" stroke-width="1.5"/>
<circle cx="1115.3" cy="150.4" r="1.8" fill="#1f77b4"/>
<line x1="1120.0" y1="169.0" x2="1120.0" y2="136.2" stroke="#1f77b4" stroke-width="1.5"/>
<circle cx="1120.0" cy="152.6" r="1.8" fill="#1f77b4"/>
<line x1="1124.6" y1="181.0" x2="1124.6" y2="147.1" stroke="#1f77b4" stroke-width="1.5"/>
<circle cx="1124.6" cy="164.6" r="1.8" fill="#1f77b4"/>
<line x1="1129.3" y1="163.5" x2="1129.3" y2="131.8" stroke="#1f77b4" stroke-width="1.5"/>
<circle cx="1129.3" cy="148.2" r="1.8" fill="#1f77b4"/>
<line x1="1134.0" y1="194.1" x2="1134.0" y2="164.6" stroke="#1f77b4" stroke-width="1.5"/>
<circle cx="1134.0" cy="179.9" r="1.8" fill="#1f77b4"/>
<line x1="1138.7" y1="204.0" x2="1138.7" y2="175.5" stroke="#1f77b4" stroke-width="1.5"/>
<circle cx="1138.7" cy="189.7" r="1.8" fill="#1f77b4"/>
<line x1="1143.3" y1="173.4" x2="1143.3" y2="142.8" stroke="#1f77b4" stroke-width="1.5"/>
<circle cx="1143.3" cy="158.1" r="1.8" fill="#1f77b4"/>
<line x1="1148.0" y1="174.4" x2="1148.0" y2="143.8" stroke="#1f77b4" stroke-width="1.5"/>
<circle cx="1148.0" cy="159.1" r="1.8" fill="#1f77b4"/>
<line x1="1152.7" y1="174.4" x2="1152.7" y2="143.8" stroke="#1f77b4" stroke-width="1.5"/>
<circle cx="1152.7" cy="159.1" r="1.8" fill="#1f77b4"/>
<line x1="1157.3" y1="155.9" x2="1157.3" y2="124.2" stroke="#1f77b4" stroke-width="1.5"/>
<circle cx="1157.3" cy="140.6" r="1.8" fill="#1f77b4"/>
<line x1="1162.0" y1="131.8" x2="1162.0" y2="101.2" stroke="#1f77b4" stroke-width="1.5"/>
<circle cx="1162.0" cy="116.5" r="1.8" fill="#1f77b4"/>
<line x1="1166.7" y1="122.0" x2="1166.7" y2="91.4" stroke="#1f77b4" stroke-width="1.5"/>
<circle cx="1166.7" cy="106.7" r="1.8" fill="#1f77b4"/>
<line x1="1171.4" y1="118.7" x2="1171.4" y2="88.1" stroke="#1f77b4" stroke-width="1.5"/>
<circle cx="1171.4" cy="103.4" r="1.8" fill="#1f77b4"/>
<line x1="1176.0" y1="99.0" x2="1176.0" y2="68.4" stroke="#1f77b4" stroke-width="1.5"/>
<circle cx="1176.0" cy="83.7" r="1.8" fill="#1f77b4"/>
<line x1="1180.7" y1="107.8" x2="1180.7" y2="77.2" stroke="#1f77b4" stroke-width="1.5"/>
<circle cx="1180.7" cy="92.5" r="1.8" fill="#1f77b4"/>
<line x1="1185.4" y1="141.7" x2="1185.4" y2="111.1" stroke="#1f77b4" stroke-width="1.5"/>
<circle cx="1185.4" cy="126.4" r="1.8" fill="#1f77b4"/>
<line x1="1190.0" y1="185.4" x2="1190.0" y2="154.8" stroke="#1f77b4" stroke-width="1.5"/>
<circle cx="1190.0" cy="170.1" r="1.8" fill="#1f77b4"/>
<line x1="1194.7" y1="181.0" x2="1194.7" y2="151.5" stroke="#1f77b4" stroke-width="1.5"/>
<circle cx="1194.7" cy="166.8" r="1.8" fill="#1f77b4"/>
<line x1="1199.4" y1="151.5" x2="1199.4" y2="122.0" stroke="#1f77b4" stroke-width="1.5"/>
<circle cx="1199.4" cy="136.2" r="1.8" fill="#1f77b4"/>
<line x1="1204.1" y1="153.7" x2="1204.1" y2="125.3" stroke="#1f77b4" stroke-width="1.5"/>
<circle cx="1204.1" cy="139.5" r="1.8" fill="#1f77b4"/>
<line x1="1208.7" y1="160.2" x2="1208.7" y2="131.8" stroke="#1f77b4" stroke-width="1.5"/>
<circle cx="1208.7" cy="146.0" r="1.8" fill="#1f77b4"/>
<line x1="1213.4" y1="148.2" x2="1213.4" y2="118.7" stroke="#1f77b4" stroke-width="1.5"/>
<circle cx="1213.4" cy="134.0" r="1.8" fill="#1f77b4"/>
<line x1="1218.1" y1="142.8" x2="1218.1" y2="111.1" stroke="#1f77b4" stroke-width="1.5"/>
<circle cx="1218.1" cy="126.4" r="1.8" fill="#1f77b4"/>
<line x1="1222.7" y1="171.2" x2="1222.7" y2="138.4" stroke="#1f77b4" stroke-width="1.5"/>
<circle cx="1222.7" cy="154.8" r="1.8" fill="#1f77b4"/>
<line x1="1227.4" y1="195.2" x2="1227.4" y2="163.5" stroke="#1f77b4" stroke-width="1.5"/>
<circle cx="1227.4" cy="179.9" r="1.8" fill="#1f77b4"/>
<line x1="1232.1" y1="179.9" x2="1232.1" y2="148.2" stroke="#1f77b4" stroke-width="1.5"/>
<circle cx="1232.1" cy="163.5" r="1.8" fill="#1f77b4"/>
<line x1="1236.8" y1="114.3" x2="1236.8" y2="81.5" stroke="#1f77b4" stroke-width="1.5"/>
<circle cx="1236.8" cy="97.9" r="1.8" fill="#1f77b4"/>
<line x1="1241.4" y1="91.4" x2="1241.4" y2="60.8" stroke="#1f77b4" stroke-width="1.5"/>
<circle cx="1241.4" cy="76.1" r="1.8" fill="#1f77b4"/>
<line x1="1246.1" y1="114.3" x2="1246.1" y2="80.4" stroke="#1f77b4" stroke-width="1.5"/>
<circle cx="1246.1" cy="96.8" r="1.8" fill="#1f77b4"/>
<line x1="1250.8" y1="134.0" x2="1250.8" y2="102.3" stroke="#1f77b4" stroke-width="1.5"/>
<circle cx="1250.8" cy="117.6" r="1.8" fill="#1f77b4"/>
<line x1="1255.5" y1="150.4" x2="1255.5" y2="118.7" stroke="#1f77b4" stroke-width="1.5"/>
<circle cx="1255.5" cy="134.0" r="1.8" fill="#1f77b4"/>
<line x1="1260.1" y1="162.4" x2="1260.1" y2="130.7" stroke="#1f77b4" stroke-width="1.5"/>
<circle cx="1260.1" cy="146.0" r="1.8" fill="#1f77b4"/>
<line x1="1264.8" y1="147.1" x2="1264.8" y2="114.3" stroke="#1f77b4" stroke-width="1.5"/>
<circle cx="1264.8" cy="130.7" r="1.8" fill="#1f77b4"/>
<line x1="1269.5" y1="155.9" x2="1269.5" y2="124.2" stroke="#1f77b4" stroke-width="1.5"/>
<circle cx="1269.5" cy="139.5" r="1.8" fill="#1f77b4"/>
<line x1="1274.1" y1="166.8" x2="1274.1" y2="134.0" stroke="#1f77b4" stroke-width="1.5"/>
<circle cx="1274.1" cy="150.4" r="1.8" fill="#1f77b4"/>
<line x1="1278.8" y1="149.3" x2="1278.8" y2="118.7" stroke="#1f77b4" stroke-width="1.5"/>
<circle cx="1278.8" cy="134.0" r="1.8" fill="#1f77b4"/>
<line x1="1283.5" y1="147.1" x2="1283.5" y2="115.4" stroke="#1f77b4" stroke-width="1.5"/>
<circle cx="1283.5" cy="130.7" r="1.8" fill="#1f77b4"/>
<line x1="1288.2" y1="174.4" x2="1288.2" y2="142.8" stroke="#1f77b4" stroke-width="1.5"/>
<circle cx="1288.2" cy="158.1" r="1.8" fill="#1f77b4"/>
<polyline points="1068.6,144.9 1069.7,144.9 1070.9,144.9 1072.1,144.9 1073.2,144.9 1074.4,144.9 1075.6,144.9 1076.7,144.9 1077.9,144.9 1079.1,144.9 1080.3,144.9 1081.4,144.9 1082.6,144.9 1083.8,144.9 1084.9,144.9 1086.1,144.9 1087.3,144.9 1088.4,144.9 1089.6,144.9 1090.8,144.9 1091.9,144.9 1093.1,144.9 1094.3,144.9 1095.4,144.9 1096.6,144.9 1097.8,144.9 1098.9,144.9 1100.1,144.9 1101.3,144.9 1102.4,144.9 1103.6,144.9 1104.8,144.9 1105.9,144.9 1107.1,144.9 1108.3,144.9 1109.5,144.9 1110.6,144.9 1111.8,144.9 1113.0,144.9 1114.1,144.9 1115.3,144.9 1116.5,144.9 1117.6,144.9 1118.8,144.9 1120.0,144.9 1121.1,144.9 1122.3,144.9 1123.5,144.9 1124.6,144.9 1125.8,144.9 1127.0,144.9 1128.1,144.9 1129.3,144.9 1130.5,144.9 1131.6,144.9 1132.8,144.9 1134.0,144.9 1135.1,144.9 1136.3,144.9 1137.5,144.9 1138.7,144.9 1139.8,144.9 1141.0,144.9 1142.2,144.9 1143.3,144.9 1144.5,144.9 1145.7,144.9 1146.8,144.9 1148.0,144.9 1149.2,144.9 1150.3,144.8 1151.5,144.7 1152.7,144.5 1153.8,144.2 1155.0,143.8 1156.2,143.2 1157.3,142.2 1158.5,140.9 1159.7,139.1 1160.8,136.8 1162.0,133.8 1163.2,130.2 1164.3,125.9 1165.5,121.1 1166.7,115.8 1167.9,110.4 1169.0,105.1 1170.2,100.3 1171.4,96.2 1172.5,93.3 1173.7,91.6 1174.9,91.5 1176.0,92.8 1177.2,95.5 1178.4,99.4 1179.5,104.1 1180.7,109.3 1181.9,114.7 1183.0,120.0 1184.2,125.0 1185.4,129.4 1186.5,133.1 1187.7,136.2 1188.9,138.7 1190.0,140.6 1191.2,142.0 1192.4,143.0 1193.5,143.7 1194.7,144.2 1195.9,144.5 1197.1,144.7 1198.2,144.8 1199.4,144.8 1200.6,144.9 1201.7,144.9 1202.9,144.9 1204.1,144.9 1205.2,144.9 1206.4,144.9 1207.6,144.9 1208.7,144.9 1209.9,144.9 1211.1,144.9 1212.2,144.9 1213.4,144.9 1214.6,144.9 1215.7,144.9 1216.9,144.9 1218.1,144.9 1219.2,144.9 1220.4,144.9 1221.6,144.9 1222.7,144.9 1223.9,144.9 1225.1,144.9 1226.3,144.9 1227.4,144.9 1228.6,144.9 1229.8,144.9 1230.9,144.9 1232.1,144.9 1233.3,144.9 1234.4,144.9 1235.6,144.9 1236.8,144.9 1237.9,144.9 1239.1,144.9 1240.3,144.9 1241.4,144.9 1242.6,144.9 1243.8,144.9 1244.9,144.9 1246.1,144.9 1247.3,144.9 1248.4,144.9 1249.6,144.9 1250.8,144.9 1251.9,144.9 1253.1,144.9 1254.3,144.9 1255.5,144.9 1256.6,144.9 1257.8,144.9 1259.0,144.9 1260.1,144.9 1261.3,144.9 1262.5,144.9 1263.6,144.9 1264.8,144.9 1266.0,144.9 1267.1,144.9 1268.3,144.9 1269.5,144.9 1270.6,144.9 1271.8,144.9 1273.0,144.9 1274.1,144.9 1275.3,144.9 1276.5,144.9 1277.6,144.9 1278.8,144.9 1280.0,144.9 1281.1,144.9 1282.3,144.9 1283.5,144.9" fill="none" stroke="#333" stroke-width="1.6"/>
</g></svg>
<rect x="1047.6" y="60.6" width="251.4" height="150.6" fill="none" stroke="#333" stroke-width="1"/>
<line x1="1044.1" y1="197.4" x2="1047.6" y2="197.4" stroke="#333" stroke-width="0.8"/>
<text x="1042.6" y="200.7" font-family="'Liberation Sans', sans-serif" font-size="9.65" fill="#000" text-anchor="end" textLength="5.8" lengthAdjust="spacingAndGlyphs" >0</text>
<line x1="1044.1" y1="175.5" x2="1047.6" y2="175.5" stroke="#333" stroke-width="0.8"/>
<text x="1042.6" y="178.8" font-family="'Liberation Sans', sans-serif" font-size="9.65" fill="#000" text-anchor="end" textLength="5.8" lengthAdjust="spacingAndGlyphs" >2</text>
<line x1="1044.1" y1="153.7" x2="1047.6" y2="153.7" stroke="#333" stroke-width="0.8"/>
<text x="1042.6" y="157.0" font-family="'Liberation Sans', sans-serif" font-size="9.65" fill="#000" text-anchor="end" textLength="5.8" lengthAdjust="spacingAndGlyphs" >4</text>
<line x1="1044.1" y1="131.8" x2="1047.6" y2="131.8" stroke="#333" stroke-width="0.8"/>
<text x="1042.6" y="135.1" font-family="'Liberation Sans', sans-serif" font-size="9.65" fill="#000" text-anchor="end" textLength="5.8" lengthAdjust="spacingAndGlyphs" >6</text>
<line x1="1044.1" y1="110.0" x2="1047.6" y2="110.0" stroke="#333" stroke-width="0.8"/>
<text x="1042.6" y="113.3" font-family="'Liberation Sans', sans-serif" font-size="9.65" fill="#000" text-anchor="end" textLength="5.8" lengthAdjust="spacingAndGlyphs" >8</text>
<line x1="1044.1" y1="88.1" x2="1047.6" y2="88.1" stroke="#333" stroke-width="0.8"/>
<text x="1042.6" y="91.4" font-family="'Liberation Sans', sans-serif" font-size="9.65" fill="#000" text-anchor="end" textLength="11.6" lengthAdjust="spacingAndGlyphs" >10</text>
<line x1="1044.1" y1="66.2" x2="1047.6" y2="66.2" stroke="#333" stroke-width="0.8"/>
<text x="1042.6" y="69.5" font-family="'Liberation Sans', sans-serif" font-size="9.65" fill="#000" text-anchor="end" textLength="11.6" lengthAdjust="spacingAndGlyphs" >12</text>
<line x1="1087.3" y1="211.2" x2="1087.3" y2="214.7" stroke="#333" stroke-width="0.8"/>
<text x="1087.3" y="224.5" font-family="'Liberation Sans', sans-serif" font-size="9.65" fill="#000" text-anchor="middle" textLength="23.2" lengthAdjust="spacingAndGlyphs" >3560</text>
<line x1="1134.0" y1="211.2" x2="1134.0" y2="214.7" stroke="#333" stroke-width="0.8"/>
<text x="1134.0" y="224.5" font-family="'Liberation Sans', sans-serif" font-size="9.65" fill="#000" text-anchor="middle" textLength="23.2" lengthAdjust="spacingAndGlyphs" >3580</text>
<line x1="1180.7" y1="211.2" x2="1180.7" y2="214.7" stroke="#333" stroke-width="0.8"/>
<text x="1180.7" y="224.5" font-family="'Liberation Sans', sans-serif" font-size="9.65" fill="#000" text-anchor="middle" textLength="23.2" lengthAdjust="spacingAndGlyphs" >3600</text>
<line x1="1227.4" y1="211.2" x2="1227.4" y2="214.7" stroke="#333" stroke-width="0.8"/>
<text x="1227.4" y="224.5" font-family="'Liberation Sans', sans-serif" font-size="9.65" fill="#000" text-anchor="middle" textLength="23.2" lengthAdjust="spacingAndGlyphs" >3620</text>
<line x1="1274.1" y1="211.2" x2="1274.1" y2="214.7" stroke="#333" stroke-width="0.8"/>
<text x="1274.1" y="224.5" font-family="'Liberation Sans', sans-serif" font-size="9.65" fill="#000" text-anchor="middle" textLength="23.2" lengthAdjust="spacingAndGlyphs" >3640</text>
<text x="1049.6" y="70.7" font-family="'Liberation Sans', sans-serif" font-size="9.65" fill="#000" text-anchor="start" textLength="5.6" lengthAdjust="spacingAndGlyphs" >e</text>
<text x="1055.7" y="66.0" font-family="'Liberation Sans', sans-serif" font-size="6.68" fill="#000" text-anchor="start" textLength="11.8" lengthAdjust="spacingAndGlyphs" >−17</text>
<text x="1067.9" y="70.7" font-family="'Liberation Sans', sans-serif" font-size="9.65" fill="#000" text-anchor="start" textLength="16.0" lengthAdjust="spacingAndGlyphs" >x2Å</text>
<rect x="101.9" y="348.6" width="1197.7" height="83.3" fill="#fff"/>
<svg x="101.9" y="348.6" width="1197.7" height="83.3" overflow="hidden"><g transform="translate(-101.9,-348.6)">
<rect x="142.1" y="348.6" width="51.6" height="83.3" fill="#c4be00"/>
<polygon points="101.9,421.0 110.0,420.5 128.0,421.8 150.0,422.5 200.0,424.0 250.0,425.0 300.0,425.8 350.0,426.2 400.0,426.8 500.0,427.2 700.0,427.4 900.0,427.6 1100.0,427.6 1250.0,427.4 1280.0,427.6 1299.6,432.0 1299.6,431.9 101.9,431.9" fill="#9a9a9a" opacity="0.66"/>
<polygon points="101.9,423.8 110.0,423.3 128.0,424.6 150.0,425.3 200.0,426.8 250.0,427.8 300.0,428.6 350.0,429.0 400.0,429.6 500.0,430.0 700.0,430.2 900.0,430.4 1100.0,430.4 1250.0,430.2 1280.0,430.4 1290,432 1299.6,431.9 101.9,431.9" fill="#888888" opacity="0.38"/>
<rect x="129.1" y="348.6" width="12.8" height="83.3" fill="#808080" opacity="0.8" stroke="#222" stroke-width="1"/>
<line x1="135.5" y1="348.6" x2="135.5" y2="431.9" stroke="#aaaaaa" stroke-width="1" stroke-dasharray="5,3"/>
<rect x="129.1" y="348.6" width="12.8" height="83.3" fill="url(#hatch)"/>
<rect x="1262.6" y="348.6" width="6.8" height="83.3" fill="#808080" opacity="0.8" stroke="#222" stroke-width="1"/>
<line x1="1266.0" y1="348.6" x2="1266.0" y2="431.9" stroke="#aaaaaa" stroke-width="1" stroke-dasharray="5,3"/>
<rect x="1262.6" y="348.6" width="6.8" height="83.3" fill="url(#hatch2)"/>
<line x1="201.4" y1="348.6" x2="201.4" y2="431.9" stroke="#666" stroke-width="1.3" stroke-dasharray="5,3"/>
<line x1="269.0" y1="348.6" x2="269.0" y2="431.9" stroke="#666" stroke-width="1.3" stroke-dasharray="5,3"/>
<line x1="346.2" y1="348.6" x2="346.2" y2="431.9" stroke="#666" stroke-width="1.3" stroke-dasharray="5,3"/>
<line x1="457.5" y1="348.6" x2="457.5" y2="431.9" stroke="#666" stroke-width="1.3" stroke-dasharray="5,3"/>
<line x1="167" y1="348.6" x2="167" y2="431.9" stroke="#222" stroke-width="1.2" stroke-dasharray="1.5,1.5"/>
<polyline points="101.9,403.9 103.8,423.2 105.4,397.5 106.4,402.9 107.7,394.8 109.1,404.5 110.2,406.6 111.6,395.9 113.9,414.6 116.1,406.6 117.7,418.9 119.8,406.1 122.3,415.2 125.7,405.0 128.1,400.7 130.5,389.5 131.9,405.0 134.3,387.3 137.0,405.5 139.1,394.3 140.9,386.8 142.9,400.7 144.5,407.1 145.9,401.3 149.3,421.1 150.9,414.6 153.6,418.9 155.2,414.1 157.3,428.6 159.5,417.9 161.1,417.9 163.8,401.3 167.0,392.1 168.8,407.3 170.7,421.1 173.4,410.4 175.0,412.5 177.7,406.6 179.8,424.8 181.7,406.5 183.6,388.4 185.7,399.9 187.9,413.0 190.5,409.3 192.1,414.1 193.8,408.8 195.4,417.9 197.5,407.8 199.6,398.0 202.3,390.5 203.7,396.4 205.0,387.3 207.1,407.1 210.4,393.2 212.2,400.9 214.1,409.3 216.3,413.0 217.9,406.1 221.1,394.3 223.2,394.3 225.9,409.3 228.6,399.1 230.7,414.6 232.9,401.3 235.2,400.7 238.8,420.0 240.4,412.0 242.0,417.9 243.6,409.8 245.5,418.1 247.3,427.5 248.9,418.9 250.0,412.5 252.7,409.8 255.4,420.5 257.7,398.6 259.1,407.7 260.4,394.3 261.6,416.3 262.9,414.1 264.5,414.6 265.9,410.9 267.7,406.6 269.5,403.4 269.8,393.8 271.4,392.1 273.0,401.8 275.2,390.0 278.1,417.3 280.5,403.4 282.7,413.6 284.3,411.4 287.5,396.4 288.4,406.1 289.6,384.6 291.3,405.0 292.3,401.8 295.0,416.8 297.7,412.5 300.4,418.9 302.5,423.5 304.6,428.0 306.3,423.2 307.3,426.4 310.0,415.7 311.9,405.5 313.8,413.6 316.4,409.3 318.6,416.3 320.7,423.2 323.9,401.8 327.1,416.8 329.8,405.0 331.4,410.4 332.5,404.5 333.6,409.8 335.2,413.0 336.8,418.4 338.9,395.4 342.1,403.4 344.1,408.2 346.4,400.7 348.0,407.1 350.2,395.4 352.9,400.7 355.5,405.0 357.1,414.6 359.8,415.7 362.5,423.2 365.7,417.9 368.9,416.3 369.5,411.4 371.4,407.8 373.4,405.5 375.4,402.3 378.6,402.3 381.8,418.9 383.4,418.9 385.5,423.2 387.7,404.5 390.4,400.7 392.2,395.7 394.1,390.0 396.8,390.0 400.0,385.7 402.7,391.1 404.8,387.9 407.3,394.8 410.2,378.8 412.3,382.0 414.5,387.9 416.6,384.6 419.3,386.8 422.7,395.4 424.6,392.1 426.8,380.9 428.7,390.0 431.1,397.5 433.8,382.5 436.4,387.9 438.4,395.4 440.5,393.8 441.8,396.4 445.0,391.1 446.6,385.7 448.8,384.6 451.4,377.1 453.6,378.2 455.7,377.1 457.3,372.3 458.9,379.3 462.1,391.1 465.4,379.3 467.5,382.4 469.6,386.8 471.8,381.4 473.9,384.6 477.1,380.4 480.4,388.9 483.0,382.9 485.7,378.2 487.9,393.2 491.1,385.7 493.8,389.5 496.4,381.4 499.6,376.1 502.1,380.5 504.5,386.3 507.1,385.7 508.8,379.8 510.9,387.3 512.8,387.3 514.6,387.9 517.3,384.6 519.5,390.0 521.1,387.3 522.1,389.5 524.3,382.5 526.4,382.2 528.6,383.0 530.5,380.7 532.3,379.3 534.7,396.2 537.1,412.5 539.3,395.4 542.0,382.0 544.6,393.2 546.8,381.4 550.0,387.9 551.9,389.8 553.8,391.1 556.4,385.2 558.0,385.7 560.2,375.0 562.3,387.6 564.5,401.3 567.1,386.8 569.3,391.1 571.4,386.8 573.3,388.3 575.2,390.0 576.8,393.2 577.3,390.0 580.5,403.4 582.1,396.4 584.8,405.0 587.1,394.9 589.5,382.9 591.8,372.3 593.7,381.9 595.5,392.1 597.4,382.7 599.3,374.5 602.0,375.0 604.6,388.9 606.8,376.6 609.5,383.0 611.6,379.8 614.3,381.4 615.4,385.7 617.0,380.4 619.6,373.4 622.9,384.6 625.0,384.1 626.6,378.2 628.5,386.5 630.4,395.4 633.0,385.7 635.2,384.1 636.8,377.1 638.9,375.0 641.3,386.0 643.8,397.5 647.0,371.3 649.6,381.4 651.8,372.3 653.9,375.0 657.1,372.9 658.8,379.3 659.8,373.9 661.7,377.2 663.6,380.9 665.2,376.1 666.8,380.9 669.5,367.5 672.1,386.8 674.3,382.0 677.0,380.4 679.6,372.9 682.9,371.3 685.0,364.3 687.1,372.9 689.3,364.3 692.5,362.1 694.1,373.9 695.7,362.1 697.3,367.5 698.9,352.5 700.0,352.5 702.1,360.0 704.3,363.8 707.0,368.0 708.4,378.2 711.8,358.4 714.5,376.1 716.6,376.6 718.8,379.3 722.0,361.1 723.6,372.9 725.2,367.5 727.3,370.7 728.9,368.0 730.5,373.9 732.7,363.8 734.3,370.7 735.9,365.4 738.0,363.4 740.2,362.1 743.4,361.1 746.1,365.9 748.2,364.8 751.4,370.2 754.6,365.9 756.6,367.9 758.6,369.9 760.5,372.9 762.7,365.9 765.9,368.6 768.6,365.4 770.2,368.0 773.4,358.9 776.1,364.8 777.9,365.5 779.8,365.9 781.7,367.7 783.6,369.6 785.7,368.0 786.3,364.8 788.4,360.0 789.5,371.8 791.1,364.3 792.7,365.9 794.3,363.8 796.2,370.3 798.0,377.1 799.9,369.4 801.8,360.5 803.9,367.4 806.1,373.4 809.3,363.2 810.9,367.5 812.5,365.4 814.6,371.5 816.8,377.7 819.5,376.6 822.1,369.6 824.3,373.4 826.4,368.5 828.6,364.8 830.7,365.8 832.9,366.4 835.5,374.5 838.2,367.5 840.4,368.0 843.0,362.7 846.3,372.3 848.1,372.0 850.0,370.2 851.6,369.6 854.3,360.5 856.4,368.0 858.6,371.3 860.7,369.1 862.9,375.5 865.0,378.8 867.7,372.3 868.8,377.1 870.4,370.7 873.0,371.3 874.6,365.4 876.3,372.3 877.9,364.8 880.5,373.4 882.1,370.2 883.2,374.5 885.4,370.2 888.6,376.1 891.3,364.3 893.9,373.9 896.1,371.3 897.7,376.1 900.4,372.3 903.0,375.5 906.3,363.8 908.7,374.4 911.1,385.2 914.3,365.9 917.0,380.4 919.1,379.0 921.3,376.1 923.9,368.6 926.3,377.0 928.8,384.1 930.9,376.2 933.0,367.5 935.7,375.5 937.9,371.3 940.0,372.9 942.1,373.4 944.3,378.8 946.4,383.6 948.4,378.2 950.4,372.4 952.3,367.5 955.0,382.5 957.1,373.4 959.3,384.1 962.0,369.6 963.6,368.0 965.2,367.5 966.8,385.7 968.7,382.3 970.5,379.8 973.8,371.8 975.9,372.5 978.0,372.9 980.2,373.4 983.4,386.8 986.6,385.2 989.8,375.5 991.7,375.9 993.6,376.6 995.5,379.7 997.3,381.4 1000.0,372.9 1001.6,387.3 1004.3,379.3 1006.4,376.6 1008.0,387.3 1010.7,380.9 1012.6,378.5 1014.5,377.1 1016.1,386.3 1019.3,377.1 1022.0,382.0 1024.6,377.7 1026.5,377.2 1028.4,377.7 1030.5,388.4 1033.2,385.2 1035.4,385.7 1037.5,380.4 1040.7,391.1 1043.4,378.2 1045.5,375.5 1048.8,378.2 1051.4,385.7 1053.6,382.5 1055.7,388.9 1058.4,379.8 1061.1,377.1 1062.1,379.3 1064.3,376.1 1067.5,387.3 1070.7,379.8 1072.3,387.9 1073.9,379.3 1077.1,386.3 1078.8,380.4 1080.9,381.4 1083.0,390.5 1085.7,382.0 1088.4,385.2 1091.1,395.4 1092.9,401.6 1094.8,407.1 1096.7,400.8 1098.6,394.3 1101.3,396.4 1102.3,409.8 1103.9,395.9 1107.1,387.3 1109.0,383.1 1110.9,380.4 1114.1,396.4 1116.0,392.1 1117.9,388.4 1120.0,382.0 1123.2,377.1 1124.8,369.6 1127.0,386.3 1129.1,382.5 1130.7,385.2 1133.9,369.6 1135.8,376.1 1137.7,381.4 1139.8,384.1 1142.2,379.3 1144.6,374.5 1147.3,377.8 1150.0,382.5 1151.6,391.1 1153.2,388.4 1154.3,392.1 1155.9,382.0 1157.5,379.8 1160.2,383.6 1162.9,370.7 1165.9,367.0 1168.1,371.7 1170.4,378.2 1172.5,373.9 1175.2,368.0 1177.6,373.6 1180.0,380.9 1182.7,372.3 1184.1,373.9 1187.0,391.1 1189.6,374.5 1191.8,376.4 1193.9,378.2 1195.5,380.4 1196.6,366.4 1199.8,382.5 1202.2,378.4 1204.6,373.9 1207.9,376.6 1208.4,372.3 1210.0,380.4 1212.1,385.2 1214.3,377.7 1216.4,376.6 1218.6,374.5 1219.6,379.3 1221.3,375.0 1223.9,382.0 1227.1,379.8 1228.8,384.1 1229.8,377.1 1232.0,388.4 1234.1,375.5 1235.7,384.1 1237.3,377.1 1239.2,376.7 1241.1,376.1 1243.2,373.9 1245.4,377.1 1247.0,375.5 1248.6,379.8 1251.8,376.1 1255.0,376.6 1256.6,383.6 1258.2,376.6 1260.4,385.7 1262.5,376.1 1264.1,381.4 1265.2,384.6 1266.8,377.1 1268.4,376.1 1269.5,369.1 1271.6,379.8 1273.2,372.9 1274.5,383.0 1277.0,373.9 1278.6,374.5 1281.8,381.4 1283.9,374.5 1285.0,383.6 1287.1,383.6 1289.3,380.9 1291.4,381.4 1293.6,380.4 1295.7,381.5 1297.9,380.9 1300.0,380.9" fill="none" stroke="#0000ff" stroke-width="1.3" stroke-linejoin="round"/>
</g></svg>
<rect x="101.9" y="348.6" width="1197.7" height="83.3" fill="none" stroke="#333" stroke-width="1"/>
<line x1="98.4" y1="431.4" x2="101.9" y2="431.4" stroke="#333" stroke-width="0.8"/>
<text x="94.4" y="435.0" font-family="'Liberation Sans', sans-serif" font-size="10.39" fill="#000" text-anchor="end" textLength="6.2" lengthAdjust="spacingAndGlyphs" >0</text>
<line x1="98.4" y1="392.9" x2="101.9" y2="392.9" stroke="#333" stroke-width="0.8"/>
<text x="94.4" y="396.6" font-family="'Liberation Sans', sans-serif" font-size="10.39" fill="#000" text-anchor="end" textLength="12.5" lengthAdjust="spacingAndGlyphs" >10</text>
<line x1="98.4" y1="354.5" x2="101.9" y2="354.5" stroke="#333" stroke-width="0.8"/>
<text x="94.4" y="358.1" font-family="'Liberation Sans', sans-serif" font-size="10.39" fill="#000" text-anchor="end" textLength="12.5" lengthAdjust="spacingAndGlyphs" >20</text>
<line x1="109.7" y1="431.9" x2="109.7" y2="435.4" stroke="#333" stroke-width="0.8"/>
<text x="109.7" y="447.3" font-family="'Liberation Sans', sans-serif" font-size="10.18" fill="#000" text-anchor="middle" textLength="24.4" lengthAdjust="spacingAndGlyphs" >3500</text>
<line x1="168.6" y1="431.9" x2="168.6" y2="435.4" stroke="#333" stroke-width="0.8"/>
<text x="168.6" y="447.3" font-family="'Liberation Sans', sans-serif" font-size="10.18" fill="#000" text-anchor="middle" textLength="24.4" lengthAdjust="spacingAndGlyphs" >3600</text>
<line x1="227.5" y1="431.9" x2="227.5" y2="435.4" stroke="#333" stroke-width="0.8"/>
<text x="227.5" y="447.3" font-family="'Liberation Sans', sans-serif" font-size="10.18" fill="#000" text-anchor="middle" textLength="24.4" lengthAdjust="spacingAndGlyphs" >3700</text>
<line x1="286.5" y1="431.9" x2="286.5" y2="435.4" stroke="#333" stroke-width="0.8"/>
<text x="286.5" y="447.3" font-family="'Liberation Sans', sans-serif" font-size="10.18" fill="#000" text-anchor="middle" textLength="24.4" lengthAdjust="spacingAndGlyphs" >3800</text>
<line x1="345.4" y1="431.9" x2="345.4" y2="435.4" stroke="#333" stroke-width="0.8"/>
<text x="345.4" y="447.3" font-family="'Liberation Sans', sans-serif" font-size="10.18" fill="#000" text-anchor="middle" textLength="24.4" lengthAdjust="spacingAndGlyphs" >3900</text>
<line x1="404.3" y1="431.9" x2="404.3" y2="435.4" stroke="#333" stroke-width="0.8"/>
<text x="404.3" y="447.3" font-family="'Liberation Sans', sans-serif" font-size="10.18" fill="#000" text-anchor="middle" textLength="24.4" lengthAdjust="spacingAndGlyphs" >4000</text>
<line x1="463.2" y1="431.9" x2="463.2" y2="435.4" stroke="#333" stroke-width="0.8"/>
<text x="463.2" y="447.3" font-family="'Liberation Sans', sans-serif" font-size="10.18" fill="#000" text-anchor="middle" textLength="24.4" lengthAdjust="spacingAndGlyphs" >4100</text>
<line x1="522.1" y1="431.9" x2="522.1" y2="435.4" stroke="#333" stroke-width="0.8"/>
<text x="522.1" y="447.3" font-family="'Liberation Sans', sans-serif" font-size="10.18" fill="#000" text-anchor="middle" textLength="24.4" lengthAdjust="spacingAndGlyphs" >4200</text>
<line x1="581.1" y1="431.9" x2="581.1" y2="435.4" stroke="#333" stroke-width="0.8"/>
<text x="581.1" y="447.3" font-family="'Liberation Sans', sans-serif" font-size="10.18" fill="#000" text-anchor="middle" textLength="24.4" lengthAdjust="spacingAndGlyphs" >4300</text>
<line x1="640.0" y1="431.9" x2="640.0" y2="435.4" stroke="#333" stroke-width="0.8"/>
<text x="640.0" y="447.3" font-family="'Liberation Sans', sans-serif" font-size="10.18" fill="#000" text-anchor="middle" textLength="24.4" lengthAdjust="spacingAndGlyphs" >4400</text>
<line x1="698.9" y1="431.9" x2="698.9" y2="435.4" stroke="#333" stroke-width="0.8"/>
<text x="698.9" y="447.3" font-family="'Liberation Sans', sans-serif" font-size="10.18" fill="#000" text-anchor="middle" textLength="24.4" lengthAdjust="spacingAndGlyphs" >4500</text>
<line x1="757.8" y1="431.9" x2="757.8" y2="435.4" stroke="#333" stroke-width="0.8"/>
<text x="757.8" y="447.3" font-family="'Liberation Sans', sans-serif" font-size="10.18" fill="#000" text-anchor="middle" textLength="24.4" lengthAdjust="spacingAndGlyphs" >4600</text>
<line x1="816.7" y1="431.9" x2="816.7" y2="435.4" stroke="#333" stroke-width="0.8"/>
<text x="816.7" y="447.3" font-family="'Liberation Sans', sans-serif" font-size="10.18" fill="#000" text-anchor="middle" textLength="24.4" lengthAdjust="spacingAndGlyphs" >4700</text>
<line x1="875.7" y1="431.9" x2="875.7" y2="435.4" stroke="#333" stroke-width="0.8"/>
<text x="875.7" y="447.3" font-family="'Liberation Sans', sans-serif" font-size="10.18" fill="#000" text-anchor="middle" textLength="24.4" lengthAdjust="spacingAndGlyphs" >4800</text>
<line x1="934.6" y1="431.9" x2="934.6" y2="435.4" stroke="#333" stroke-width="0.8"/>
<text x="934.6" y="447.3" font-family="'Liberation Sans', sans-serif" font-size="10.18" fill="#000" text-anchor="middle" textLength="24.4" lengthAdjust="spacingAndGlyphs" >4900</text>
<line x1="993.5" y1="431.9" x2="993.5" y2="435.4" stroke="#333" stroke-width="0.8"/>
<text x="993.5" y="447.3" font-family="'Liberation Sans', sans-serif" font-size="10.18" fill="#000" text-anchor="middle" textLength="24.4" lengthAdjust="spacingAndGlyphs" >5000</text>
<line x1="1052.4" y1="431.9" x2="1052.4" y2="435.4" stroke="#333" stroke-width="0.8"/>
<text x="1052.4" y="447.3" font-family="'Liberation Sans', sans-serif" font-size="10.18" fill="#000" text-anchor="middle" textLength="24.4" lengthAdjust="spacingAndGlyphs" >5100</text>
<line x1="1111.3" y1="431.9" x2="1111.3" y2="435.4" stroke="#333" stroke-width="0.8"/>
<text x="1111.3" y="447.3" font-family="'Liberation Sans', sans-serif" font-size="10.18" fill="#000" text-anchor="middle" textLength="24.4" lengthAdjust="spacingAndGlyphs" >5200</text>
<line x1="1170.3" y1="431.9" x2="1170.3" y2="435.4" stroke="#333" stroke-width="0.8"/>
<text x="1170.3" y="447.3" font-family="'Liberation Sans', sans-serif" font-size="10.18" fill="#000" text-anchor="middle" textLength="24.4" lengthAdjust="spacingAndGlyphs" >5300</text>
<line x1="1229.2" y1="431.9" x2="1229.2" y2="435.4" stroke="#333" stroke-width="0.8"/>
<text x="1229.2" y="447.3" font-family="'Liberation Sans', sans-serif" font-size="10.18" fill="#000" text-anchor="middle" textLength="24.4" lengthAdjust="spacingAndGlyphs" >5400</text>
<line x1="1288.1" y1="431.9" x2="1288.1" y2="435.4" stroke="#333" stroke-width="0.8"/>
<text x="1288.1" y="447.3" font-family="'Liberation Sans', sans-serif" font-size="10.18" fill="#000" text-anchor="middle" textLength="24.4" lengthAdjust="spacingAndGlyphs" >5500</text>
<text x="109.5" y="346.2" font-family="'Liberation Sans', sans-serif" font-size="9.65" fill="#000" text-anchor="start" textLength="5.6" lengthAdjust="spacingAndGlyphs" >e</text>
<text x="116.0" y="341.0" font-family="'Liberation Sans', sans-serif" font-size="6.68" fill="#000" text-anchor="start" textLength="13.5" lengthAdjust="spacingAndGlyphs" >−17</text>
<text x="130.5" y="346.2" font-family="'Liberation Sans', sans-serif" font-size="9.65" fill="#000" text-anchor="start" textLength="17.5" lengthAdjust="spacingAndGlyphs" >x2Å</text>
<text transform="translate(208.4,319.9) rotate(90)" font-family="'Liberation Sans', sans-serif" font-size="10.4" fill="#ff0000" textLength="13.2" lengthAdjust="spacingAndGlyphs">NV</text>
<path d="M206.9 348.2 v-1.8 q0 -1 1.3 -1 h1.7 q1.3 0 1.5 -1.3 q0.2 1.3 1.5 1.3 h1.7 q1.3 0 1.3 1 v1.8" fill="none" stroke="#ff0000" stroke-width="1"/>
<text transform="translate(247.8,324.6) rotate(90)" font-family="'Liberation Sans', sans-serif" font-size="10.4" fill="#ff0000" textLength="14.5" lengthAdjust="spacingAndGlyphs">SiII</text>
<path d="M246.3 348.2 v-1.8 q0 -1 1.3 -1 h1.7 q1.3 0 1.5 -1.3 q0.2 1.3 1.5 1.3 h1.7 q1.3 0 1.3 1 v1.8" fill="none" stroke="#ff0000" stroke-width="1"/>
<text transform="translate(289.0,320.7) rotate(90)" font-family="'Liberation Sans', sans-serif" font-size="10.4" fill="#9b30ff" textLength="18.4" lengthAdjust="spacingAndGlyphs">HeII</text>
<path d="M287.5 348.2 v-1.8 q0 -1 1.3 -1 h1.7 q1.3 0 1.5 -1.3 q0.2 1.3 1.5 1.3 h1.7 q1.3 0 1.3 1 v1.8" fill="none" stroke="#9b30ff" stroke-width="1"/>
<text transform="translate(482.0,321.6) rotate(90)" font-family="'Liberation Sans', sans-serif" font-size="10.4" fill="#ff0000" textLength="17.2" lengthAdjust="spacingAndGlyphs">SiIV</text>
<path d="M480.5 348.2 v-1.8 q0 -1 1.3 -1 h1.7 q1.3 0 1.5 -1.3 q0.2 1.3 1.5 1.3 h1.7 q1.3 0 1.3 1 v1.8" fill="none" stroke="#ff0000" stroke-width="1"/>
<text transform="translate(511.4,324.4) rotate(90)" font-family="'Liberation Sans', sans-serif" font-size="10.4" fill="#ffa500" textLength="14.4" lengthAdjust="spacingAndGlyphs">CIII</text>
<path d="M509.9 348.2 v-1.8 q0 -1 1.3 -1 h1.7 q1.3 0 1.5 -1.3 q0.2 1.3 1.5 1.3 h1.7 q1.3 0 1.3 1 v1.8" fill="none" stroke="#ffa500" stroke-width="1"/>
<text transform="translate(626.0,324.9) rotate(90)" font-family="'Liberation Sans', sans-serif" font-size="10.4" fill="#9932cc" textLength="10.7" lengthAdjust="spacingAndGlyphs">CII</text>
<path d="M624.5 348.2 v-1.8 q0 -1 1.3 -1 h1.7 q1.3 0 1.5 -1.3 q0.2 1.3 1.5 1.3 h1.7 q1.3 0 1.3 1 v1.8" fill="none" stroke="#9932cc" stroke-width="1"/>
<text transform="translate(656.0,324.4) rotate(90)" font-family="'Liberation Sans', sans-serif" font-size="10.4" fill="#9b30ff" textLength="14.4" lengthAdjust="spacingAndGlyphs">CIII</text>
<path d="M654.5 348.2 v-1.8 q0 -1 1.3 -1 h1.7 q1.3 0 1.5 -1.3 q0.2 1.3 1.5 1.3 h1.7 q1.3 0 1.3 1 v1.8" fill="none" stroke="#9b30ff" stroke-width="1"/>
<text transform="translate(746.6,320.6) rotate(90)" font-family="'Liberation Sans', sans-serif" font-size="10.4" fill="#ff0000" textLength="15.4" lengthAdjust="spacingAndGlyphs">CIV</text>
<path d="M745.1 348.2 v-1.8 q0 -1 1.3 -1 h1.7 q1.3 0 1.5 -1.3 q0.2 1.3 1.5 1.3 h1.7 q1.3 0 1.3 1 v1.8" fill="none" stroke="#ff0000" stroke-width="1"/>
<text transform="translate(868.4,322.9) rotate(90)" font-family="'Liberation Sans', sans-serif" font-size="10.4" fill="#ff00ff" textLength="13.4" lengthAdjust="spacingAndGlyphs">OII</text>
<path d="M866.9 348.2 v-1.8 q0 -1 1.3 -1 h1.7 q1.3 0 1.5 -1.3 q0.2 1.3 1.5 1.3 h1.7 q1.3 0 1.3 1 v1.8" fill="none" stroke="#ff00ff" stroke-width="1"/>
<text transform="translate(905.0,320.6) rotate(90)" font-family="'Liberation Sans', sans-serif" font-size="10.4" fill="#ff0000" textLength="18.5" lengthAdjust="spacingAndGlyphs">HeII</text>
<path d="M903.5 348.2 v-1.8 q0 -1 1.3 -1 h1.7 q1.3 0 1.5 -1.3 q0.2 1.3 1.5 1.3 h1.7 q1.3 0 1.3 1 v1.8" fill="none" stroke="#ff0000" stroke-width="1"/>
<text transform="translate(1048.4,324.0) rotate(90)" font-family="'Liberation Sans', sans-serif" font-size="10.4" fill="#ffa500" textLength="12.3" lengthAdjust="spacingAndGlyphs">CII</text>
<path d="M1046.9 348.2 v-1.8 q0 -1 1.3 -1 h1.7 q1.3 0 1.5 -1.3 q0.2 1.3 1.5 1.3 h1.7 q1.3 0 1.3 1 v1.8" fill="none" stroke="#ffa500" stroke-width="1"/>
<text transform="translate(1152.7,319.1) rotate(90)" font-family="'Liberation Sans', sans-serif" font-size="10.4" fill="#800080" textLength="20.0" lengthAdjust="spacingAndGlyphs">MgII</text>
<path d="M1151.2 348.2 v-1.8 q0 -1 1.3 -1 h1.7 q1.3 0 1.5 -1.3 q0.2 1.3 1.5 1.3 h1.7 q1.3 0 1.3 1 v1.8" fill="none" stroke="#800080" stroke-width="1"/>
<text transform="translate(1224.7,324.0) rotate(90)" font-family="'Liberation Sans', sans-serif" font-size="10.4" fill="#9b30ff" textLength="12.3" lengthAdjust="spacingAndGlyphs">CII</text>
<path d="M1223.2 348.2 v-1.8 q0 -1 1.3 -1 h1.7 q1.3 0 1.5 -1.3 q0.2 1.3 1.5 1.3 h1.7 q1.3 0 1.3 1 v1.8" fill="none" stroke="#9b30ff" stroke-width="1"/>
<rect x="572.4" y="450" width="17.2" height="6.4" fill="#ff0000"/>
<text x="595.9" y="456.0" font-family="'Liberation Sans', sans-serif" font-size="7.84" fill="#000" text-anchor="start" textLength="13.4" lengthAdjust="spacingAndGlyphs" >Lyα</text>
<rect x="626.4" y="450" width="17.2" height="6.4" fill="#8a2be2"/>
<text x="649.9" y="456.0" font-family="'Liberation Sans', sans-serif" font-size="7.84" fill="#000" text-anchor="start" textLength="12.4" lengthAdjust="spacingAndGlyphs" >CIV</text>
<rect x="681.6" y="450" width="17.2" height="6.4" fill="#800080"/>
<text x="705.1" y="456.0" font-family="'Liberation Sans', sans-serif" font-size="7.84" fill="#000" text-anchor="start" textLength="11.7" lengthAdjust="spacingAndGlyphs" >CIII</text>
<rect x="733" y="450" width="17.2" height="6.4" fill="#ff00ff"/>
<text x="756.5" y="456.0" font-family="'Liberation Sans', sans-serif" font-size="7.84" fill="#000" text-anchor="start" textLength="15.4" lengthAdjust="spacingAndGlyphs" >MgII</text>
<rect x="789" y="450" width="17.2" height="6.4" fill="#ffa500"/>
<text x="812.5" y="456.0" font-family="'Liberation Sans', sans-serif" font-size="7.84" fill="#000" text-anchor="start" textLength="14.5" lengthAdjust="spacingAndGlyphs" >HeII</text>
<text x="70.7" y="498.6" font-family="'Liberation Mono', monospace" font-size="13.6" fill="#000" text-anchor="start" textLength="478.6" lengthAdjust="spacingAndGlyphs">HSC-DEX : Possible Matches = 1 (within +/- 3")  P(LAE)/P(OII):</text>
<text x="562.0" y="498.6" font-family="'Liberation Sans', sans-serif" font-size="13.99" fill="#000" text-anchor="start" textLength="33.5" lengthAdjust="spacingAndGlyphs" >1000</text>
<text x="600.2" y="493.6" font-family="'Liberation Sans', sans-serif" font-size="9.01" fill="#000" text-anchor="start" textLength="21.3" lengthAdjust="spacingAndGlyphs" >1000</text>
<text x="600.2" y="502.6" font-family="'Liberation Sans', sans-serif" font-size="9.01" fill="#000" text-anchor="start" textLength="21.3" lengthAdjust="spacingAndGlyphs" >1000</text>
<text x="631.2" y="498.6" font-family="'Liberation Mono', monospace" font-size="13.6" fill="#000" text-anchor="start" textLength="23.2" lengthAdjust="spacingAndGlyphs">(r)</text>
<svg x="69.9" y="533.0" width="148.1" height="147.1" overflow="hidden"><g transform="translate(-69.9,-533.0)">
<rect x="69.9" y="533.0" width="148.1" height="147.1" fill="#fff" filter="url(#bg1)"/>
<radialGradient id="halo1"><stop offset="0" stop-color="#000"/><stop offset="0.64" stop-color="#000"/><stop offset="0.74" stop-color="#555"/><stop offset="0.87" stop-color="#aaa" stop-opacity="0.6"/><stop offset="1" stop-color="#ddd" stop-opacity="0"/></radialGradient>
<circle cx="123.7" cy="588.3" r="30" fill="url(#halo1)"/>
<ellipse cx="145.5" cy="675" rx="6" ry="8" fill="#888" opacity="0.6" filter="url(#blur2)"/>
</g></svg>
<rect x="94.6" y="557.7" width="98.1" height="98.1" fill="none" stroke="#ff0000" stroke-width="1.1"/>
<text x="143.7" y="547.2" font-family="'Liberation Sans', sans-serif" font-size="11.02" fill="#ff0000" text-anchor="middle" textLength="7.8" lengthAdjust="spacingAndGlyphs" >N</text>
<text x="79.4" y="610.5" font-family="'Liberation Sans', sans-serif" font-size="11.02" fill="#ff0000" text-anchor="middle" textLength="6.6" lengthAdjust="spacingAndGlyphs" >E</text>
<path d="M139.7 606.7 h8 M143.7 602.7 v8" stroke="#ff0000" stroke-width="1.1"/>
<circle cx="163.6" cy="554.9" r="12.4" fill="none" stroke="#808080" stroke-width="1"/>
<circle cx="163.6" cy="554.9" r="13.0" fill="none" stroke="#808080" stroke-width="1.6" stroke-dasharray="1.6,1.6"/>
<circle cx="177.6" cy="572.8" r="12.4" fill="none" stroke="#808080" stroke-width="1"/>
<circle cx="177.6" cy="572.8" r="13.0" fill="none" stroke="#808080" stroke-width="1.6" stroke-dasharray="1.6,1.6"/>
<circle cx="194.5" cy="591.8" r="12.4" fill="none" stroke="#808080" stroke-width="1"/>
<circle cx="194.5" cy="591.8" r="13.0" fill="none" stroke="#808080" stroke-width="1.6" stroke-dasharray="1.6,1.6"/>
<circle cx="187.5" cy="615.7" r="12.4" fill="none" stroke="#808080" stroke-width="1"/>
<circle cx="179.6" cy="637.6" r="12.4" fill="none" stroke="#808080" stroke-width="1"/>
<circle cx="155.6" cy="642.6" r="12.4" fill="none" stroke="#808080" stroke-width="1"/>
<circle cx="147.7" cy="601.8" r="12.4" fill="none" stroke="#0000ff" stroke-width="1"/>
<circle cx="147.7" cy="601.8" r="13.0" fill="none" stroke="#0000ff" stroke-width="1.6" stroke-dasharray="1.6,1.6"/>
<circle cx="170.6" cy="595.8" r="12.4" fill="none" stroke="#ff0000" stroke-width="1"/>
<circle cx="170.6" cy="595.8" r="13.0" fill="none" stroke="#ff0000" stroke-width="1.6" stroke-dasharray="1.6,1.6"/>
<circle cx="163.6" cy="618.7" r="12.4" fill="none" stroke="#00dd00" stroke-width="1"/>
<circle cx="163.6" cy="618.7" r="13.0" fill="none" stroke="#00dd00" stroke-width="1.6" stroke-dasharray="1.6,1.6"/>
<circle cx="139.7" cy="622.7" r="12.4" fill="none" stroke="#ffa500" stroke-width="1"/>
<circle cx="139.7" cy="622.7" r="13.0" fill="none" stroke="#ffa500" stroke-width="1.6" stroke-dasharray="1.6,1.6"/>
<rect x="69.9" y="533.0" width="148.1" height="147.1" fill="none" stroke="#222" stroke-width="1"/>
<line x1="66.4" y1="672.1" x2="69.9" y2="672.1" stroke="#222" stroke-width="0.8"/>
<text x="62.4" y="675.9" font-family="'Liberation Sans', sans-serif" font-size="11.02" fill="#000" text-anchor="end" textLength="15.3" lengthAdjust="spacingAndGlyphs" >−4</text>
<line x1="78.3" y1="680.1" x2="78.3" y2="683.6" stroke="#222" stroke-width="0.8"/>
<text x="75.8" y="696.0" font-family="'Liberation Sans', sans-serif" font-size="11.02" fill="#000" text-anchor="middle" textLength="15.3" lengthAdjust="spacingAndGlyphs" >−4</text>
<line x1="66.4" y1="639.4" x2="69.9" y2="639.4" stroke="#222" stroke-width="0.8"/>
<text x="62.4" y="643.2" font-family="'Liberation Sans', sans-serif" font-size="11.02" fill="#000" text-anchor="end" textLength="15.3" lengthAdjust="spacingAndGlyphs" >−2</text>
<line x1="111.0" y1="680.1" x2="111.0" y2="683.6" stroke="#222" stroke-width="0.8"/>
<text x="108.5" y="696.0" font-family="'Liberation Sans', sans-serif" font-size="11.02" fill="#000" text-anchor="middle" textLength="15.3" lengthAdjust="spacingAndGlyphs" >−2</text>
<line x1="66.4" y1="606.7" x2="69.9" y2="606.7" stroke="#222" stroke-width="0.8"/>
<text x="62.4" y="610.5" font-family="'Liberation Sans', sans-serif" font-size="11.02" fill="#000" text-anchor="end" textLength="6.6" lengthAdjust="spacingAndGlyphs" >0</text>
<line x1="143.7" y1="680.1" x2="143.7" y2="683.6" stroke="#222" stroke-width="0.8"/>
<text x="143.7" y="696.0" font-family="'Liberation Sans', sans-serif" font-size="11.02" fill="#000" text-anchor="middle" textLength="6.6" lengthAdjust="spacingAndGlyphs" >0</text>
<line x1="66.4" y1="574.0" x2="69.9" y2="574.0" stroke="#222" stroke-width="0.8"/>
<text x="62.4" y="577.8" font-family="'Liberation Sans', sans-serif" font-size="11.02" fill="#000" text-anchor="end" textLength="6.6" lengthAdjust="spacingAndGlyphs" >2</text>
<line x1="176.4" y1="680.1" x2="176.4" y2="683.6" stroke="#222" stroke-width="0.8"/>
<text x="176.4" y="696.0" font-family="'Liberation Sans', sans-serif" font-size="11.02" fill="#000" text-anchor="middle" textLength="6.6" lengthAdjust="spacingAndGlyphs" >2</text>
<line x1="66.4" y1="541.3" x2="69.9" y2="541.3" stroke="#222" stroke-width="0.8"/>
<text x="62.4" y="545.1" font-family="'Liberation Sans', sans-serif" font-size="11.02" fill="#000" text-anchor="end" textLength="6.6" lengthAdjust="spacingAndGlyphs" >4</text>
<line x1="209.1" y1="680.1" x2="209.1" y2="683.6" stroke="#222" stroke-width="0.8"/>
<text x="209.1" y="696.0" font-family="'Liberation Sans', sans-serif" font-size="11.02" fill="#000" text-anchor="middle" textLength="6.6" lengthAdjust="spacingAndGlyphs" >4</text>
<text x="143.7" y="525.7" font-family="'Liberation Sans', sans-serif" font-size="13.36" fill="#000" text-anchor="middle" textLength="91.8" lengthAdjust="spacingAndGlyphs" >Fiber Positions</text>
<text x="143.7" y="706.4" font-family="'Liberation Sans', sans-serif" font-size="11.02" fill="#000" text-anchor="middle" textLength="39.3" lengthAdjust="spacingAndGlyphs" >arcsecs</text>
<svg x="255.3" y="533.0" width="148.5" height="147.1" overflow="hidden"><g transform="translate(-255.3,-533.0)">
<path fill="#414487" shape-rendering="crispEdges" d="M255.5 676.2h4.39v4.39h-4.39zM255.5 672.1h4.39v4.39h-4.39zM255.5 668.0h4.39v4.39h-4.39zM255.5 663.9h4.39v4.39h-4.39zM255.5 659.8h4.39v4.39h-4.39zM255.5 655.8h4.39v4.39h-4.39zM255.5 651.7h4.39v4.39h-4.39zM255.5 647.6h4.39v4.39h-4.39zM255.5 643.5h4.39v4.39h-4.39zM255.5 639.4h4.39v4.39h-4.39zM255.5 635.3h4.39v4.39h-4.39zM255.5 631.2h4.39v4.39h-4.39zM255.5 627.1h4.39v4.39h-4.39zM255.5 623.1h4.39v4.39h-4.39zM255.5 619.0h4.39v4.39h-4.39zM255.5 614.9h4.39v4.39h-4.39zM255.5 610.8h4.39v4.39h-4.39zM255.5 606.7h4.39v4.39h-4.39zM255.5 602.6h4.39v4.39h-4.39zM255.5 598.5h4.39v4.39h-4.39zM255.5 594.4h4.39v4.39h-4.39zM255.5 590.4h4.39v4.39h-4.39zM255.5 586.3h4.39v4.39h-4.39zM255.5 582.2h4.39v4.39h-4.39zM255.5 578.1h4.39v4.39h-4.39zM255.5 574.0h4.39v4.39h-4.39zM255.5 569.9h4.39v4.39h-4.39zM255.5 565.8h4.39v4.39h-4.39zM255.5 561.7h4.39v4.39h-4.39zM255.5 557.7h4.39v4.39h-4.39zM255.5 553.6h4.39v4.39h-4.39zM255.5 549.5h4.39v4.39h-4.39zM255.5 545.4h4.39v4.39h-4.39zM255.5 541.3h4.39v4.39h-4.39zM255.5 537.2h4.39v4.39h-4.39zM255.5 533.1h4.39v4.39h-4.39zM259.6 676.2h4.39v4.39h-4.39zM259.6 672.1h4.39v4.39h-4.39zM259.6 668.0h4.39v4.39h-4.39zM259.6 663.9h4.39v4.39h-4.39zM259.6 659.8h4.39v4.39h-4.39zM259.6 655.8h4.39v4.39h-4.39zM259.6 651.7h4.39v4.39h-4.39zM259.6 647.6h4.39v4.39h-4.39zM259.6 643.5h4.39v4.39h-4.39zM259.6 639.4h4.39v4.39h-4.39zM259.6 635.3h4.39v4.39h-4.39zM259.6 631.2h4.39v4.39h-4.39zM259.6 627.1h4.39v4.39h-4.39zM259.6 623.1h4.39v4.39h-4.39zM259.6 619.0h4.39v4.39h-4.39zM259.6 614.9h4.39v4.39h-4.39zM259.6 610.8h4.39v4.39h-4.39zM259.6 606.7h4.39v4.39h-4.39zM259.6 602.6h4.39v4.39h-4.39zM259.6 598.5h4.39v4.39h-4.39zM259.6 594.4h4.39v4.39h-4.39zM259.6 590.4h4.39v4.39h-4.39zM259.6 586.3h4.39v4.39h-4.39zM259.6 582.2h4.39v4.39h-4.39zM259.6 578.1h4.39v4.39h-4.39zM259.6 574.0h4.39v4.39h-4.39zM259.6 569.9h4.39v4.39h-4.39zM259.6 565.8h4.39v4.39h-4.39zM259.6 561.7h4.39v4.39h-4.39zM259.6 557.7h4.39v4.39h-4.39zM259.6 553.6h4.39v4.39h-4.39zM259.6 549.5h4.39v4.39h-4.39zM259.6 545.4h4.39v4.39h-4.39zM259.6 541.3h4.39v4.39h-4.39zM259.6 537.2h4.39v4.39h-4.39zM259.6 533.1h4.39v4.39h-4.39zM263.7 676.2h4.39v4.39h-4.39zM263.7 672.1h4.39v4.39h-4.39zM263.7 668.0h4.39v4.39h-4.39zM263.7 663.9h4.39v4.39h-4.39zM263.7 659.8h4.39v4.39h-4.39zM263.7 655.8h4.39v4.39h-4.39zM263.7 651.7h4.39v4.39h-4.39zM263.7 647.6h4.39v4.39h-4.39zM263.7 643.5h4.39v4.39h-4.39zM263.7 639.4h4.39v4.39h-4.39zM263.7 635.3h4.39v4.39h-4.39zM263.7 631.2h4.39v4.39h-4.39zM263.7 627.1h4.39v4.39h-4.39zM263.7 623.1h4.39v4.39h-4.39zM263.7 619.0h4.39v4.39h-4.39zM263.7 614.9h4.39v4.39h-4.39zM263.7 610.8h4.39v4.39h-4.39zM263.7 606.7h4.39v4.39h-4.39zM263.7 602.6h4.39v4.39h-4.39zM263.7 598.5h4.39v4.39h-4.39zM263.7 594.4h4.39v4.39h-4.39zM263.7 590.4h4.39v4.39h-4.39zM263.7 586.3h4.39v4.39h-4.39zM263.7 582.2h4.39v4.39h-4.39zM263.7 578.1h4.39v4.39h-4.39zM263.7 574.0h4.39v4.39h-4.39zM263.7 569.9h4.39v4.39h-4.39zM263.7 565.8h4.39v4.39h-4.39zM263.7 561.7h4.39v4.39h-4.39zM263.7 557.7h4.39v4.39h-4.39zM263.7 553.6h4.39v4.39h-4.39zM263.7 549.5h4.39v4.39h-4.39zM263.7 545.4h4.39v4.39h-4.39zM263.7 541.3h4.39v4.39h-4.39zM263.7 537.2h4.39v4.39h-4.39zM263.7 533.1h4.39v4.39h-4.39zM267.8 676.2h4.39v4.39h-4.39zM267.8 672.1h4.39v4.39h-4.39zM267.8 668.0h4.39v4.39h-4.39zM267.8 663.9h4.39v4.39h-4.39zM267.8 659.8h4.39v4.39h-4.39zM267.8 655.8h4.39v4.39h-4.39zM267.8 651.7h4.39v4.39h-4.39zM267.8 647.6h4.39v4.39h-4.39zM267.8 643.5h4.39v4.39h-4.39zM267.8 639.4h4.39v4.39h-4.39zM267.8 635.3h4.39v4.39h-4.39zM267.8 631.2h4.39v4.39h-4.39zM267.8 627.1h4.39v4.39h-4.39zM267.8 623.1h4.39v4.39h-4.39zM267.8 619.0h4.39v4.39h-4.39zM267.8 614.9h4.39v4.39h-4.39zM267.8 610.8h4.39v4.39h-4.39zM267.8 606.7h4.39v4.39h-4.39zM267.8 602.6h4.39v4.39h-4.39zM267.8 598.5h4.39v4.39h-4.39zM267.8 594.4h4.39v4.39h-4.39zM267.8 590.4h4.39v4.39h-4.39zM267.8 586.3h4.39v4.39h-4.39zM267.8 582.2h4.39v4.39h-4.39zM267.8 578.1h4.39v4.39h-4.39zM267.8 574.0h4.39v4.39h-4.39zM267.8 569.9h4.39v4.39h-4.39zM267.8 565.8h4.39v4.39h-4.39zM267.8 561.7h4.39v4.39h-4.39zM267.8 557.7h4.39v4.39h-4.39zM267.8 553.6h4.39v4.39h-4.39zM267.8 549.5h4.39v4.39h-4.39zM267.8 545.4h4.39v4.39h-4.39zM267.8 541.3h4.39v4.39h-4.39zM267.8 537.2h4.39v4.39h-4.39zM267.8 533.1h4.39v4.39h-4.39zM271.9 676.2h4.39v4.39h-4.39zM271.9 672.1h4.39v4.39h-4.39zM271.9 668.0h4.39v4.39h-4.39zM271.9 663.9h4.39v4.39h-4.39zM271.9 659.8h4.39v4.39h-4.39zM271.9 655.8h4.39v4.39h-4.39zM271.9 651.7h4.39v4.39h-4.39zM271.9 647.6h4.39v4.39h-4.39zM271.9 643.5h4.39v4.39h-4.39zM271.9 639.4h4.39v4.39h-4.39zM271.9 635.3h4.39v4.39h-4.39zM271.9 631.2h4.39v4.39h-4.39zM271.9 627.1h4.39v4.39h-4.39zM271.9 623.1h4.39v4.39h-4.39zM271.9 619.0h4.39v4.39h-4.39zM271.9 614.9h4.39v4.39h-4.39zM271.9 610.8h4.39v4.39h-4.39zM271.9 606.7h4.39v4.39h-4.39zM271.9 602.6h4.39v4.39h-4.39zM271.9 598.5h4.39v4.39h-4.39zM271.9 594.4h4.39v4.39h-4.39zM271.9 590.4h4.39v4.39h-4.39zM271.9 586.3h4.39v4.39h-4.39zM271.9 582.2h4.39v4.39h-4.39zM271.9 578.1h4.39v4.39h-4.39zM271.9 574.0h4.39v4.39h-4.39zM271.9 569.9h4.39v4.39h-4.39zM271.9 565.8h4.39v4.39h-4.39zM271.9 561.7h4.39v4.39h-4.39zM271.9 557.7h4.39v4.39h-4.39zM271.9 553.6h4.39v4.39h-4.39zM271.9 549.5h4.39v4.39h-4.39zM271.9 545.4h4.39v4.39h-4.39zM271.9 541.3h4.39v4.39h-4.39zM271.9 537.2h4.39v4.39h-4.39zM271.9 533.1h4.39v4.39h-4.39zM276.0 676.2h4.39v4.39h-4.39zM276.0 672.1h4.39v4.39h-4.39zM276.0 668.0h4.39v4.39h-4.39zM276.0 663.9h4.39v4.39h-4.39zM276.0 659.8h4.39v4.39h-4.39zM276.0 655.8h4.39v4.39h-4.39zM276.0 651.7h4.39v4.39h-4.39zM276.0 647.6h4.39v4.39h-4.39zM276.0 643.5h4.39v4.39h-4.39zM276.0 639.4h4.39v4.39h-4.39zM276.0 635.3h4.39v4.39h-4.39zM276.0 631.2h4.39v4.39h-4.39zM276.0 627.1h4.39v4.39h-4.39zM276.0 623.1h4.39v4.39h-4.39zM276.0 619.0h4.39v4.39h-4.39zM276.0 614.9h4.39v4.39h-4.39zM276.0 610.8h4.39v4.39h-4.39zM276.0 606.7h4.39v4.39h-4.39zM276.0 602.6h4.39v4.39h-4.39zM276.0 598.5h4.39v4.39h-4.39zM276.0 594.4h4.39v4.39h-4.39zM276.0 590.4h4.39v4.39h-4.39zM276.0 586.3h4.39v4.39h-4.39zM276.0 582.2h4.39v4.39h-4.39zM276.0 578.1h4.39v4.39h-4.39zM276.0 574.0h4.39v4.39h-4.39zM276.0 569.9h4.39v4.39h-4.39zM276.0 565.8h4.39v4.39h-4.39zM276.0 561.7h4.39v4.39h-4.39zM276.0 557.7h4.39v4.39h-4.39zM276.0 553.6h4.39v4.39h-4.39zM276.0 549.5h4.39v4.39h-4.39zM276.0 545.4h4.39v4.39h-4.39zM276.0 541.3h4.39v4.39h-4.39zM276.0 537.2h4.39v4.39h-4.39zM276.0 533.1h4.39v4.39h-4.39zM280.1 676.2h4.39v4.39h-4.39zM280.1 672.1h4.39v4.39h-4.39zM280.1 668.0h4.39v4.39h-4.39zM280.1 663.9h4.39v4.39h-4.39zM280.1 659.8h4.39v4.39h-4.39zM280.1 655.8h4.39v4.39h-4.39zM280.1 651.7h4.39v4.39h-4.39zM280.1 647.6h4.39v4.39h-4.39zM280.1 643.5h4.39v4.39h-4.39zM280.1 639.4h4.39v4.39h-4.39zM280.1 635.3h4.39v4.39h-4.39zM280.1 631.2h4.39v4.39h-4.39zM280.1 627.1h4.39v4.39h-4.39zM280.1 623.1h4.39v4.39h-4.39zM280.1 619.0h4.39v4.39h-4.39zM280.1 614.9h4.39v4.39h-4.39zM280.1 610.8h4.39v4.39h-4.39zM280.1 606.7h4.39v4.39h-4.39zM280.1 602.6h4.39v4.39h-4.39zM280.1 598.5h4.39v4.39h-4.39zM280.1 594.4h4.39v4.39h-4.39zM280.1 590.4h4.39v4.39h-4.39zM280.1 586.3h4.39v4.39h-4.39zM280.1 582.2h4.39v4.39h-4.39zM280.1 578.1h4.39v4.39h-4.39zM280.1 574.0h4.39v4.39h-4.39zM280.1 569.9h4.39v4.39h-4.39zM280.1 565.8h4.39v4.39h-4.39zM280.1 561.7h4.39v4.39h-4.39zM280.1 557.7h4.39v4.39h-4.39zM280.1 553.6h4.39v4.39h-4.39zM280.1 549.5h4.39v4.39h-4.39zM280.1 545.4h4.39v4.39h-4.39zM280.1 541.3h4.39v4.39h-4.39zM280.1 537.2h4.39v4.39h-4.39zM280.1 533.1h4.39v4.39h-4.39zM284.1 676.2h4.39v4.39h-4.39zM284.1 672.1h4.39v4.39h-4.39zM284.1 668.0h4.39v4.39h-4.39zM284.1 663.9h4.39v4.39h-4.39zM284.1 659.8h4.39v4.39h-4.39zM284.1 655.8h4.39v4.39h-4.39zM284.1 651.7h4.39v4.39h-4.39zM284.1 647.6h4.39v4.39h-4.39zM284.1 643.5h4.39v4.39h-4.39zM284.1 639.4h4.39v4.39h-4.39zM284.1 635.3h4.39v4.39h-4.39zM284.1 631.2h4.39v4.39h-4.39zM284.1 627.1h4.39v4.39h-4.39zM284.1 623.1h4.39v4.39h-4.39zM284.1 619.0h4.39v4.39h-4.39zM284.1 614.9h4.39v4.39h-4.39zM284.1 610.8h4.39v4.39h-4.39zM284.1 606.7h4.39v4.39h-4.39zM284.1 602.6h4.39v4.39h-4.39zM284.1 598.5h4.39v4.39h-4.39zM284.1 594.4h4.39v4.39h-4.39zM284.1 590.4h4.39v4.39h-4.39zM284.1 586.3h4.39v4.39h-4.39zM284.1 582.2h4.39v4.39h-4.39zM284.1 578.1h4.39v4.39h-4.39zM284.1 574.0h4.39v4.39h-4.39zM284.1 569.9h4.39v4.39h-4.39zM284.1 565.8h4.39v4.39h-4.39zM284.1 561.7h4.39v4.39h-4.39zM284.1 557.7h4.39v4.39h-4.39zM284.1 553.6h4.39v4.39h-4.39zM284.1 549.5h4.39v4.39h-4.39zM284.1 545.4h4.39v4.39h-4.39zM284.1 541.3h4.39v4.39h-4.39zM284.1 537.2h4.39v4.39h-4.39zM284.1 533.1h4.39v4.39h-4.39zM288.2 676.2h4.39v4.39h-4.39zM288.2 672.1h4.39v4.39h-4.39zM288.2 668.0h4.39v4.39h-4.39zM288.2 663.9h4.39v4.39h-4.39zM288.2 659.8h4.39v4.39h-4.39zM288.2 655.8h4.39v4.39h-4.39zM288.2 651.7h4.39v4.39h-4.39zM288.2 647.6h4.39v4.39h-4.39zM288.2 643.5h4.39v4.39h-4.39zM288.2 639.4h4.39v4.39h-4.39zM288.2 635.3h4.39v4.39h-4.39zM288.2 631.2h4.39v4.39h-4.39zM288.2 627.1h4.39v4.39h-4.39zM288.2 623.1h4.39v4.39h-4.39zM288.2 619.0h4.39v4.39h-4.39zM288.2 614.9h4.39v4.39h-4.39zM288.2 610.8h4.39v4.39h-4.39zM288.2 606.7h4.39v4.39h-4.39zM288.2 602.6h4.39v4.39h-4.39zM288.2 598.5h4.39v4.39h-4.39zM288.2 594.4h4.39v4.39h-4.39zM288.2 590.4h4.39v4.39h-4.39zM288.2 586.3h4.39v4.39h-4.39zM288.2 582.2h4.39v4.39h-4.39zM288.2 578.1h4.39v4.39h-4.39zM288.2 574.0h4.39v4.39h-4.39zM288.2 569.9h4.39v4.39h-4.39zM288.2 565.8h4.39v4.39h-4.39zM288.2 561.7h4.39v4.39h-4.39zM288.2 557.7h4.39v4.39h-4.39zM288.2 553.6h4.39v4.39h-4.39zM288.2 549.5h4.39v4.39h-4.39zM288.2 545.4h4.39v4.39h-4.39zM288.2 541.3h4.39v4.39h-4.39zM288.2 537.2h4.39v4.39h-4.39zM288.2 533.1h4.39v4.39h-4.39zM292.3 676.2h4.39v4.39h-4.39zM292.3 672.1h4.39v4.39h-4.39zM292.3 668.0h4.39v4.39h-4.39zM292.3 663.9h4.39v4.39h-4.39zM292.3 659.8h4.39v4.39h-4.39zM292.3 655.8h4.39v4.39h-4.39zM292.3 651.7h4.39v4.39h-4.39zM292.3 647.6h4.39v4.39h-4.39zM292.3 643.5h4.39v4.39h-4.39zM292.3 639.4h4.39v4.39h-4.39zM292.3 635.3h4.39v4.39h-4.39zM292.3 631.2h4.39v4.39h-4.39zM292.3 627.1h4.39v4.39h-4.39zM292.3 623.1h4.39v4.39h-4.39zM292.3 619.0h4.39v4.39h-4.39zM292.3 614.9h4.39v4.39h-4.39zM292.3 610.8h4.39v4.39h-4.39zM292.3 606.7h4.39v4.39h-4.39zM292.3 602.6h4.39v4.39h-4.39zM292.3 598.5h4.39v4.39h-4.39zM292.3 594.4h4.39v4.39h-4.39zM292.3 590.4h4.39v4.39h-4.39zM292.3 586.3h4.39v4.39h-4.39zM292.3 582.2h4.39v4.39h-4.39zM292.3 578.1h4.39v4.39h-4.39zM292.3 574.0h4.39v4.39h-4.39zM292.3 569.9h4.39v4.39h-4.39zM292.3 565.8h4.39v4.39h-4.39zM292.3 561.7h4.39v4.39h-4.39zM292.3 557.7h4.39v4.39h-4.39zM292.3 553.6h4.39v4.39h-4.39zM292.3 549.5h4.39v4.39h-4.39zM292.3 545.4h4.39v4.39h-4.39zM292.3 541.3h4.39v4.39h-4.39zM292.3 537.2h4.39v4.39h-4.39zM292.3 533.1h4.39v4.39h-4.39zM296.4 668.0h4.39v4.39h-4.39zM296.4 663.9h4.39v4.39h-4.39zM296.4 659.8h4.39v4.39h-4.39zM296.4 655.8h4.39v4.39h-4.39zM296.4 651.7h4.39v4.39h-4.39zM296.4 647.6h4.39v4.39h-4.39zM296.4 643.5h4.39v4.39h-4.39zM296.4 639.4h4.39v4.39h-4.39zM296.4 635.3h4.39v4.39h-4.39zM296.4 631.2h4.39v4.39h-4.39zM296.4 627.1h4.39v4.39h-4.39zM296.4 623.1h4.39v4.39h-4.39zM296.4 619.0h4.39v4.39h-4.39zM296.4 614.9h4.39v4.39h-4.39zM296.4 610.8h4.39v4.39h-4.39zM296.4 606.7h4.39v4.39h-4.39zM296.4 602.6h4.39v4.39h-4.39zM296.4 598.5h4.39v4.39h-4.39zM296.4 594.4h4.39v4.39h-4.39zM296.4 590.4h4.39v4.39h-4.39zM296.4 586.3h4.39v4.39h-4.39zM296.4 582.2h4.39v4.39h-4.39zM296.4 578.1h4.39v4.39h-4.39zM296.4 574.0h4.39v4.39h-4.39zM296.4 569.9h4.39v4.39h-4.39zM296.4 565.8h4.39v4.39h-4.39zM296.4 561.7h4.39v4.39h-4.39zM296.4 557.7h4.39v4.39h-4.39zM296.4 553.6h4.39v4.39h-4.39zM296.4 549.5h4.39v4.39h-4.39zM296.4 545.4h4.39v4.39h-4.39zM296.4 541.3h4.39v4.39h-4.39zM296.4 537.2h4.39v4.39h-4.39zM296.4 533.1h4.39v4.39h-4.39zM300.5 655.8h4.39v4.39h-4.39zM300.5 651.7h4.39v4.39h-4.39zM300.5 647.6h4.39v4.39h-4.39zM300.5 643.5h4.39v4.39h-4.39zM300.5 639.4h4.39v4.39h-4.39zM300.5 635.3h4.39v4.39h-4.39zM300.5 631.2h4.39v4.39h-4.39zM300.5 627.1h4.39v4.39h-4.39zM300.5 623.1h4.39v4.39h-4.39zM300.5 619.0h4.39v4.39h-4.39zM300.5 614.9h4.39v4.39h-4.39zM300.5 610.8h4.39v4.39h-4.39zM300.5 606.7h4.39v4.39h-4.39zM300.5 602.6h4.39v4.39h-4.39zM300.5 598.5h4.39v4.39h-4.39zM300.5 594.4h4.39v4.39h-4.39zM300.5 590.4h4.39v4.39h-4.39zM300.5 586.3h4.39v4.39h-4.39zM300.5 582.2h4.39v4.39h-4.39zM300.5 578.1h4.39v4.39h-4.39zM300.5 574.0h4.39v4.39h-4.39zM300.5 569.9h4.39v4.39h-4.39zM300.5 565.8h4.39v4.39h-4.39zM300.5 561.7h4.39v4.39h-4.39zM300.5 557.7h4.39v4.39h-4.39zM300.5 553.6h4.39v4.39h-4.39zM300.5 549.5h4.39v4.39h-4.39zM300.5 545.4h4.39v4.39h-4.39zM300.5 541.3h4.39v4.39h-4.39zM300.5 537.2h4.39v4.39h-4.39zM300.5 533.1h4.39v4.39h-4.39zM304.6 643.5h4.39v4.39h-4.39zM304.6 639.4h4.39v4.39h-4.39zM304.6 635.3h4.39v4.39h-4.39zM304.6 631.2h4.39v4.39h-4.39zM304.6 627.1h4.39v4.39h-4.39zM304.6 623.1h4.39v4.39h-4.39zM304.6 619.0h4.39v4.39h-4.39zM304.6 614.9h4.39v4.39h-4.39zM304.6 610.8h4.39v4.39h-4.39zM304.6 606.7h4.39v4.39h-4.39zM304.6 602.6h4.39v4.39h-4.39zM304.6 598.5h4.39v4.39h-4.39zM304.6 594.4h4.39v4.39h-4.39zM304.6 590.4h4.39v4.39h-4.39zM304.6 586.3h4.39v4.39h-4.39zM304.6 582.2h4.39v4.39h-4.39zM304.6 578.1h4.39v4.39h-4.39zM304.6 574.0h4.39v4.39h-4.39zM304.6 569.9h4.39v4.39h-4.39zM304.6 565.8h4.39v4.39h-4.39zM304.6 561.7h4.39v4.39h-4.39zM304.6 557.7h4.39v4.39h-4.39zM304.6 553.6h4.39v4.39h-4.39zM304.6 549.5h4.39v4.39h-4.39zM304.6 545.4h4.39v4.39h-4.39zM304.6 541.3h4.39v4.39h-4.39zM304.6 537.2h4.39v4.39h-4.39zM304.6 533.1h4.39v4.39h-4.39zM308.7 631.2h4.39v4.39h-4.39zM308.7 627.1h4.39v4.39h-4.39zM308.7 623.1h4.39v4.39h-4.39zM308.7 619.0h4.39v4.39h-4.39zM308.7 614.9h4.39v4.39h-4.39zM308.7 610.8h4.39v4.39h-4.39zM308.7 606.7h4.39v4.39h-4.39zM308.7 602.6h4.39v4.39h-4.39zM308.7 598.5h4.39v4.39h-4.39zM308.7 594.4h4.39v4.39h-4.39zM308.7 590.4h4.39v4.39h-4.39zM308.7 586.3h4.39v4.39h-4.39zM308.7 582.2h4.39v4.39h-4.39zM308.7 578.1h4.39v4.39h-4.39zM308.7 574.0h4.39v4.39h-4.39zM308.7 569.9h4.39v4.39h-4.39zM308.7 565.8h4.39v4.39h-4.39zM308.7 561.7h4.39v4.39h-4.39zM308.7 557.7h4.39v4.39h-4.39zM308.7 553.6h4.39v4.39h-4.39zM308.7 549.5h4.39v4.39h-4.39zM308.7 545.4h4.39v4.39h-4.39zM308.7 541.3h4.39v4.39h-4.39zM308.7 537.2h4.39v4.39h-4.39zM308.7 533.1h4.39v4.39h-4.39zM312.8 619.0h4.39v4.39h-4.39zM312.8 614.9h4.39v4.39h-4.39zM312.8 610.8h4.39v4.39h-4.39zM312.8 606.7h4.39v4.39h-4.39zM312.8 602.6h4.39v4.39h-4.39zM312.8 598.5h4.39v4.39h-4.39zM312.8 594.4h4.39v4.39h-4.39zM312.8 590.4h4.39v4.39h-4.39zM312.8 586.3h4.39v4.39h-4.39zM312.8 582.2h4.39v4.39h-4.39zM312.8 578.1h4.39v4.39h-4.39zM312.8 574.0h4.39v4.39h-4.39zM312.8 569.9h4.39v4.39h-4.39zM312.8 565.8h4.39v4.39h-4.39zM312.8 561.7h4.39v4.39h-4.39zM312.8 557.7h4.39v4.39h-4.39zM312.8 553.6h4.39v4.39h-4.39zM312.8 549.5h4.39v4.39h-4.39zM312.8 545.4h4.39v4.39h-4.39zM312.8 541.3h4.39v4.39h-4.39zM312.8 537.2h4.39v4.39h-4.39zM312.8 533.1h4.39v4.39h-4.39zM316.8 606.7h4.39v4.39h-4.39zM316.8 602.6h4.39v4.39h-4.39zM316.8 598.5h4.39v4.39h-4.39zM316.8 594.4h4.39v4.39h-4.39zM316.8 590.4h4.39v4.39h-4.39zM316.8 586.3h4.39v4.39h-4.39zM316.8 582.2h4.39v4.39h-4.39zM316.8 578.1h4.39v4.39h-4.39zM316.8 574.0h4.39v4.39h-4.39zM316.8 569.9h4.39v4.39h-4.39zM316.8 565.8h4.39v4.39h-4.39zM316.8 561.7h4.39v4.39h-4.39zM316.8 557.7h4.39v4.39h-4.39zM316.8 553.6h4.39v4.39h-4.39zM316.8 549.5h4.39v4.39h-4.39zM316.8 545.4h4.39v4.39h-4.39zM316.8 541.3h4.39v4.39h-4.39zM316.8 537.2h4.39v4.39h-4.39zM316.8 533.1h4.39v4.39h-4.39zM320.9 594.4h4.39v4.39h-4.39zM320.9 590.4h4.39v4.39h-4.39zM320.9 586.3h4.39v4.39h-4.39zM320.9 582.2h4.39v4.39h-4.39zM320.9 578.1h4.39v4.39h-4.39zM320.9 574.0h4.39v4.39h-4.39zM320.9 569.9h4.39v4.39h-4.39zM320.9 565.8h4.39v4.39h-4.39zM320.9 561.7h4.39v4.39h-4.39zM320.9 557.7h4.39v4.39h-4.39zM320.9 553.6h4.39v4.39h-4.39zM320.9 549.5h4.39v4.39h-4.39zM320.9 545.4h4.39v4.39h-4.39zM320.9 541.3h4.39v4.39h-4.39zM320.9 537.2h4.39v4.39h-4.39zM320.9 533.1h4.39v4.39h-4.39zM325.0 582.2h4.39v4.39h-4.39zM325.0 578.1h4.39v4.39h-4.39zM325.0 574.0h4.39v4.39h-4.39zM325.0 569.9h4.39v4.39h-4.39zM325.0 565.8h4.39v4.39h-4.39zM325.0 561.7h4.39v4.39h-4.39zM325.0 557.7h4.39v4.39h-4.39zM325.0 553.6h4.39v4.39h-4.39zM325.0 549.5h4.39v4.39h-4.39zM325.0 545.4h4.39v4.39h-4.39zM325.0 541.3h4.39v4.39h-4.39zM325.0 537.2h4.39v4.39h-4.39zM325.0 533.1h4.39v4.39h-4.39zM329.1 569.9h4.39v4.39h-4.39zM329.1 565.8h4.39v4.39h-4.39zM329.1 561.7h4.39v4.39h-4.39zM329.1 557.7h4.39v4.39h-4.39zM329.1 553.6h4.39v4.39h-4.39zM329.1 549.5h4.39v4.39h-4.39zM329.1 545.4h4.39v4.39h-4.39zM329.1 541.3h4.39v4.39h-4.39zM329.1 537.2h4.39v4.39h-4.39zM329.1 533.1h4.39v4.39h-4.39zM333.2 557.7h4.39v4.39h-4.39zM333.2 553.6h4.39v4.39h-4.39zM333.2 549.5h4.39v4.39h-4.39zM333.2 545.4h4.39v4.39h-4.39zM333.2 541.3h4.39v4.39h-4.39zM333.2 537.2h4.39v4.39h-4.39zM333.2 533.1h4.39v4.39h-4.39zM337.3 614.9h4.39v4.39h-4.39zM337.3 610.8h4.39v4.39h-4.39zM337.3 590.4h4.39v4.39h-4.39zM337.3 586.3h4.39v4.39h-4.39zM337.3 545.4h4.39v4.39h-4.39zM337.3 541.3h4.39v4.39h-4.39zM337.3 537.2h4.39v4.39h-4.39zM337.3 533.1h4.39v4.39h-4.39zM341.4 627.1h4.39v4.39h-4.39zM341.4 533.1h4.39v4.39h-4.39zM345.5 659.8h4.39v4.39h-4.39zM345.5 635.3h4.39v4.39h-4.39zM349.5 659.8h4.39v4.39h-4.39zM349.5 639.4h4.39v4.39h-4.39zM353.6 659.8h4.39v4.39h-4.39zM357.7 647.6h4.39v4.39h-4.39zM361.8 663.9h4.39v4.39h-4.39zM361.8 651.7h4.39v4.39h-4.39zM365.9 663.9h4.39v4.39h-4.39zM365.9 651.7h4.39v4.39h-4.39zM370.0 676.2h4.39v4.39h-4.39zM370.0 672.1h4.39v4.39h-4.39zM370.0 668.0h4.39v4.39h-4.39zM370.0 651.7h4.39v4.39h-4.39zM370.0 586.3h4.39v4.39h-4.39zM374.1 676.2h4.39v4.39h-4.39zM374.1 672.1h4.39v4.39h-4.39zM374.1 651.7h4.39v4.39h-4.39zM378.2 647.6h4.39v4.39h-4.39zM378.2 602.6h4.39v4.39h-4.39zM382.2 639.4h4.39v4.39h-4.39zM382.2 614.9h4.39v4.39h-4.39zM382.2 610.8h4.39v4.39h-4.39zM386.3 569.9h4.39v4.39h-4.39zM386.3 565.8h4.39v4.39h-4.39zM390.4 578.1h4.39v4.39h-4.39zM394.5 582.2h4.39v4.39h-4.39z"/>
<path fill="#21918c" shape-rendering="crispEdges" d="M296.4 676.2h4.39v4.39h-4.39zM296.4 672.1h4.39v4.39h-4.39zM300.5 676.2h4.39v4.39h-4.39zM300.5 672.1h4.39v4.39h-4.39zM300.5 668.0h4.39v4.39h-4.39zM304.6 676.2h4.39v4.39h-4.39zM304.6 672.1h4.39v4.39h-4.39zM304.6 668.0h4.39v4.39h-4.39zM308.7 676.2h4.39v4.39h-4.39zM308.7 672.1h4.39v4.39h-4.39zM308.7 668.0h4.39v4.39h-4.39zM312.8 676.2h4.39v4.39h-4.39zM312.8 672.1h4.39v4.39h-4.39zM312.8 668.0h4.39v4.39h-4.39zM316.8 676.2h4.39v4.39h-4.39zM316.8 672.1h4.39v4.39h-4.39zM316.8 668.0h4.39v4.39h-4.39zM320.9 676.2h4.39v4.39h-4.39zM320.9 672.1h4.39v4.39h-4.39zM320.9 668.0h4.39v4.39h-4.39zM325.0 676.2h4.39v4.39h-4.39zM325.0 672.1h4.39v4.39h-4.39zM325.0 668.0h4.39v4.39h-4.39zM329.1 676.2h4.39v4.39h-4.39zM329.1 672.1h4.39v4.39h-4.39zM329.1 668.0h4.39v4.39h-4.39zM333.2 676.2h4.39v4.39h-4.39zM333.2 672.1h4.39v4.39h-4.39zM333.2 668.0h4.39v4.39h-4.39zM337.3 676.2h4.39v4.39h-4.39zM337.3 672.1h4.39v4.39h-4.39zM337.3 668.0h4.39v4.39h-4.39zM341.4 676.2h4.39v4.39h-4.39zM341.4 672.1h4.39v4.39h-4.39zM341.4 668.0h4.39v4.39h-4.39zM341.4 578.1h4.39v4.39h-4.39zM341.4 553.6h4.39v4.39h-4.39zM341.4 545.4h4.39v4.39h-4.39zM345.5 619.0h4.39v4.39h-4.39zM345.5 578.1h4.39v4.39h-4.39zM345.5 553.6h4.39v4.39h-4.39zM345.5 533.1h4.39v4.39h-4.39zM349.5 627.1h4.39v4.39h-4.39zM349.5 578.1h4.39v4.39h-4.39zM349.5 553.6h4.39v4.39h-4.39zM353.6 586.3h4.39v4.39h-4.39zM353.6 578.1h4.39v4.39h-4.39zM353.6 553.6h4.39v4.39h-4.39zM357.7 578.1h4.39v4.39h-4.39zM357.7 553.6h4.39v4.39h-4.39zM361.8 639.4h4.39v4.39h-4.39zM361.8 590.4h4.39v4.39h-4.39zM361.8 578.1h4.39v4.39h-4.39zM361.8 553.6h4.39v4.39h-4.39zM370.0 639.4h4.39v4.39h-4.39zM374.1 635.3h4.39v4.39h-4.39zM398.6 565.8h4.39v4.39h-4.39z"/>
<path fill="#306c8e" shape-rendering="crispEdges" d="M300.5 663.9h4.39v4.39h-4.39zM304.6 663.9h4.39v4.39h-4.39zM308.7 663.9h4.39v4.39h-4.39zM312.8 663.9h4.39v4.39h-4.39zM316.8 663.9h4.39v4.39h-4.39zM320.9 663.9h4.39v4.39h-4.39zM325.0 663.9h4.39v4.39h-4.39zM329.1 663.9h4.39v4.39h-4.39zM333.2 663.9h4.39v4.39h-4.39zM337.3 663.9h4.39v4.39h-4.39zM341.4 663.9h4.39v4.39h-4.39zM341.4 614.9h4.39v4.39h-4.39zM341.4 590.4h4.39v4.39h-4.39zM345.5 663.9h4.39v4.39h-4.39zM345.5 627.1h4.39v4.39h-4.39zM345.5 582.2h4.39v4.39h-4.39zM345.5 549.5h4.39v4.39h-4.39zM349.5 582.2h4.39v4.39h-4.39zM349.5 549.5h4.39v4.39h-4.39zM349.5 537.2h4.39v4.39h-4.39zM353.6 676.2h4.39v4.39h-4.39zM353.6 672.1h4.39v4.39h-4.39zM353.6 668.0h4.39v4.39h-4.39zM353.6 639.4h4.39v4.39h-4.39zM353.6 582.2h4.39v4.39h-4.39zM353.6 549.5h4.39v4.39h-4.39zM357.7 676.2h4.39v4.39h-4.39zM357.7 672.1h4.39v4.39h-4.39zM357.7 582.2h4.39v4.39h-4.39zM357.7 549.5h4.39v4.39h-4.39zM361.8 549.5h4.39v4.39h-4.39zM370.0 594.4h4.39v4.39h-4.39zM374.1 643.5h4.39v4.39h-4.39zM378.2 635.3h4.39v4.39h-4.39zM378.2 614.9h4.39v4.39h-4.39zM378.2 610.8h4.39v4.39h-4.39zM390.4 565.8h4.39v4.39h-4.39zM394.5 574.0h4.39v4.39h-4.39z"/>
<path fill="#3b528a" shape-rendering="crispEdges" d="M300.5 659.8h4.39v4.39h-4.39zM304.6 659.8h4.39v4.39h-4.39zM308.7 659.8h4.39v4.39h-4.39zM312.8 659.8h4.39v4.39h-4.39zM316.8 659.8h4.39v4.39h-4.39zM320.9 659.8h4.39v4.39h-4.39zM325.0 659.8h4.39v4.39h-4.39zM329.1 659.8h4.39v4.39h-4.39zM333.2 659.8h4.39v4.39h-4.39zM337.3 659.8h4.39v4.39h-4.39zM337.3 606.7h4.39v4.39h-4.39zM337.3 602.6h4.39v4.39h-4.39zM337.3 598.5h4.39v4.39h-4.39zM337.3 594.4h4.39v4.39h-4.39zM341.4 659.8h4.39v4.39h-4.39zM341.4 623.1h4.39v4.39h-4.39zM345.5 631.2h4.39v4.39h-4.39zM353.6 663.9h4.39v4.39h-4.39zM353.6 643.5h4.39v4.39h-4.39zM357.7 663.9h4.39v4.39h-4.39zM361.8 647.6h4.39v4.39h-4.39zM365.9 676.2h4.39v4.39h-4.39zM365.9 672.1h4.39v4.39h-4.39zM365.9 668.0h4.39v4.39h-4.39zM370.0 590.4h4.39v4.39h-4.39zM374.1 647.6h4.39v4.39h-4.39zM374.1 594.4h4.39v4.39h-4.39zM378.2 643.5h4.39v4.39h-4.39zM378.2 606.7h4.39v4.39h-4.39zM382.2 635.3h4.39v4.39h-4.39zM382.2 631.2h4.39v4.39h-4.39zM382.2 627.1h4.39v4.39h-4.39zM382.2 623.1h4.39v4.39h-4.39zM382.2 619.0h4.39v4.39h-4.39zM390.4 574.0h4.39v4.39h-4.39zM398.6 582.2h4.39v4.39h-4.39z"/>
<path fill="#482475" shape-rendering="crispEdges" d="M304.6 655.8h4.39v4.39h-4.39zM308.7 655.8h4.39v4.39h-4.39zM312.8 655.8h4.39v4.39h-4.39zM316.8 655.8h4.39v4.39h-4.39zM320.9 655.8h4.39v4.39h-4.39zM325.0 655.8h4.39v4.39h-4.39zM329.1 655.8h4.39v4.39h-4.39zM333.2 655.8h4.39v4.39h-4.39zM333.2 614.9h4.39v4.39h-4.39zM333.2 610.8h4.39v4.39h-4.39zM333.2 606.7h4.39v4.39h-4.39zM333.2 590.4h4.39v4.39h-4.39zM333.2 586.3h4.39v4.39h-4.39zM337.3 655.8h4.39v4.39h-4.39zM337.3 627.1h4.39v4.39h-4.39zM341.4 655.8h4.39v4.39h-4.39zM341.4 635.3h4.39v4.39h-4.39zM345.5 655.8h4.39v4.39h-4.39zM345.5 643.5h4.39v4.39h-4.39zM349.5 655.8h4.39v4.39h-4.39zM349.5 647.6h4.39v4.39h-4.39zM353.6 655.8h4.39v4.39h-4.39zM353.6 651.7h4.39v4.39h-4.39zM357.7 655.8h4.39v4.39h-4.39zM361.8 655.8h4.39v4.39h-4.39zM365.9 659.8h4.39v4.39h-4.39zM370.0 659.8h4.39v4.39h-4.39zM374.1 659.8h4.39v4.39h-4.39zM374.1 586.3h4.39v4.39h-4.39zM374.1 578.1h4.39v4.39h-4.39zM374.1 561.7h4.39v4.39h-4.39zM374.1 557.7h4.39v4.39h-4.39zM374.1 553.6h4.39v4.39h-4.39zM374.1 549.5h4.39v4.39h-4.39zM378.2 663.9h4.39v4.39h-4.39zM378.2 659.8h4.39v4.39h-4.39zM378.2 655.8h4.39v4.39h-4.39zM378.2 594.4h4.39v4.39h-4.39zM378.2 590.4h4.39v4.39h-4.39zM382.2 676.2h4.39v4.39h-4.39zM382.2 672.1h4.39v4.39h-4.39zM382.2 668.0h4.39v4.39h-4.39zM382.2 655.8h4.39v4.39h-4.39zM382.2 651.7h4.39v4.39h-4.39zM382.2 602.6h4.39v4.39h-4.39zM382.2 598.5h4.39v4.39h-4.39zM382.2 574.0h4.39v4.39h-4.39zM382.2 569.9h4.39v4.39h-4.39zM382.2 565.8h4.39v4.39h-4.39zM382.2 561.7h4.39v4.39h-4.39zM382.2 557.7h4.39v4.39h-4.39zM382.2 553.6h4.39v4.39h-4.39zM382.2 549.5h4.39v4.39h-4.39zM386.3 647.6h4.39v4.39h-4.39zM386.3 643.5h4.39v4.39h-4.39zM386.3 639.4h4.39v4.39h-4.39zM386.3 619.0h4.39v4.39h-4.39zM386.3 614.9h4.39v4.39h-4.39zM386.3 610.8h4.39v4.39h-4.39zM386.3 582.2h4.39v4.39h-4.39zM386.3 561.7h4.39v4.39h-4.39zM386.3 557.7h4.39v4.39h-4.39zM386.3 553.6h4.39v4.39h-4.39zM386.3 549.5h4.39v4.39h-4.39zM386.3 545.4h4.39v4.39h-4.39zM386.3 541.3h4.39v4.39h-4.39zM390.4 590.4h4.39v4.39h-4.39zM390.4 586.3h4.39v4.39h-4.39zM390.4 561.7h4.39v4.39h-4.39zM390.4 557.7h4.39v4.39h-4.39zM390.4 553.6h4.39v4.39h-4.39zM390.4 549.5h4.39v4.39h-4.39zM390.4 545.4h4.39v4.39h-4.39zM390.4 541.3h4.39v4.39h-4.39zM390.4 537.2h4.39v4.39h-4.39zM394.5 590.4h4.39v4.39h-4.39zM394.5 561.7h4.39v4.39h-4.39zM394.5 557.7h4.39v4.39h-4.39zM394.5 553.6h4.39v4.39h-4.39zM394.5 549.5h4.39v4.39h-4.39zM394.5 545.4h4.39v4.39h-4.39zM394.5 541.3h4.39v4.39h-4.39zM394.5 537.2h4.39v4.39h-4.39zM394.5 533.1h4.39v4.39h-4.39zM398.6 590.4h4.39v4.39h-4.39zM398.6 561.7h4.39v4.39h-4.39zM398.6 557.7h4.39v4.39h-4.39zM398.6 553.6h4.39v4.39h-4.39zM398.6 549.5h4.39v4.39h-4.39zM398.6 545.4h4.39v4.39h-4.39zM398.6 541.3h4.39v4.39h-4.39zM398.6 537.2h4.39v4.39h-4.39zM398.6 533.1h4.39v4.39h-4.39z"/>
<path fill="#461264" shape-rendering="crispEdges" d="M304.6 651.7h4.39v4.39h-4.39zM304.6 647.6h4.39v4.39h-4.39zM308.7 651.7h4.39v4.39h-4.39zM308.7 647.6h4.39v4.39h-4.39zM308.7 643.5h4.39v4.39h-4.39zM308.7 639.4h4.39v4.39h-4.39zM308.7 635.3h4.39v4.39h-4.39zM312.8 651.7h4.39v4.39h-4.39zM312.8 647.6h4.39v4.39h-4.39zM312.8 643.5h4.39v4.39h-4.39zM312.8 639.4h4.39v4.39h-4.39zM312.8 635.3h4.39v4.39h-4.39zM312.8 631.2h4.39v4.39h-4.39zM312.8 627.1h4.39v4.39h-4.39zM312.8 623.1h4.39v4.39h-4.39zM316.8 651.7h4.39v4.39h-4.39zM316.8 647.6h4.39v4.39h-4.39zM316.8 643.5h4.39v4.39h-4.39zM316.8 639.4h4.39v4.39h-4.39zM316.8 635.3h4.39v4.39h-4.39zM316.8 631.2h4.39v4.39h-4.39zM316.8 627.1h4.39v4.39h-4.39zM316.8 623.1h4.39v4.39h-4.39zM316.8 619.0h4.39v4.39h-4.39zM316.8 614.9h4.39v4.39h-4.39zM316.8 610.8h4.39v4.39h-4.39zM320.9 651.7h4.39v4.39h-4.39zM320.9 647.6h4.39v4.39h-4.39zM320.9 643.5h4.39v4.39h-4.39zM320.9 639.4h4.39v4.39h-4.39zM320.9 635.3h4.39v4.39h-4.39zM320.9 631.2h4.39v4.39h-4.39zM320.9 627.1h4.39v4.39h-4.39zM320.9 623.1h4.39v4.39h-4.39zM320.9 619.0h4.39v4.39h-4.39zM320.9 614.9h4.39v4.39h-4.39zM320.9 610.8h4.39v4.39h-4.39zM320.9 606.7h4.39v4.39h-4.39zM320.9 602.6h4.39v4.39h-4.39zM320.9 598.5h4.39v4.39h-4.39zM325.0 651.7h4.39v4.39h-4.39zM325.0 647.6h4.39v4.39h-4.39zM325.0 643.5h4.39v4.39h-4.39zM325.0 639.4h4.39v4.39h-4.39zM325.0 635.3h4.39v4.39h-4.39zM325.0 631.2h4.39v4.39h-4.39zM325.0 627.1h4.39v4.39h-4.39zM325.0 623.1h4.39v4.39h-4.39zM325.0 619.0h4.39v4.39h-4.39zM325.0 614.9h4.39v4.39h-4.39zM325.0 610.8h4.39v4.39h-4.39zM325.0 606.7h4.39v4.39h-4.39zM325.0 602.6h4.39v4.39h-4.39zM325.0 598.5h4.39v4.39h-4.39zM325.0 594.4h4.39v4.39h-4.39zM325.0 590.4h4.39v4.39h-4.39zM325.0 586.3h4.39v4.39h-4.39zM329.1 651.7h4.39v4.39h-4.39zM329.1 647.6h4.39v4.39h-4.39zM329.1 643.5h4.39v4.39h-4.39zM329.1 639.4h4.39v4.39h-4.39zM329.1 635.3h4.39v4.39h-4.39zM329.1 631.2h4.39v4.39h-4.39zM329.1 627.1h4.39v4.39h-4.39zM329.1 623.1h4.39v4.39h-4.39zM329.1 619.0h4.39v4.39h-4.39zM329.1 614.9h4.39v4.39h-4.39zM329.1 610.8h4.39v4.39h-4.39zM329.1 606.7h4.39v4.39h-4.39zM329.1 602.6h4.39v4.39h-4.39zM329.1 598.5h4.39v4.39h-4.39zM329.1 594.4h4.39v4.39h-4.39zM329.1 590.4h4.39v4.39h-4.39zM329.1 586.3h4.39v4.39h-4.39zM333.2 651.7h4.39v4.39h-4.39zM333.2 647.6h4.39v4.39h-4.39zM333.2 643.5h4.39v4.39h-4.39zM333.2 639.4h4.39v4.39h-4.39zM333.2 635.3h4.39v4.39h-4.39zM333.2 631.2h4.39v4.39h-4.39zM333.2 627.1h4.39v4.39h-4.39zM333.2 623.1h4.39v4.39h-4.39zM333.2 619.0h4.39v4.39h-4.39zM337.3 651.7h4.39v4.39h-4.39zM337.3 647.6h4.39v4.39h-4.39zM337.3 643.5h4.39v4.39h-4.39zM337.3 639.4h4.39v4.39h-4.39zM337.3 635.3h4.39v4.39h-4.39zM337.3 631.2h4.39v4.39h-4.39zM341.4 651.7h4.39v4.39h-4.39zM341.4 647.6h4.39v4.39h-4.39zM341.4 643.5h4.39v4.39h-4.39zM341.4 639.4h4.39v4.39h-4.39zM345.5 651.7h4.39v4.39h-4.39zM345.5 647.6h4.39v4.39h-4.39zM349.5 651.7h4.39v4.39h-4.39zM374.1 582.2h4.39v4.39h-4.39zM374.1 545.4h4.39v4.39h-4.39zM374.1 541.3h4.39v4.39h-4.39zM374.1 537.2h4.39v4.39h-4.39zM374.1 533.1h4.39v4.39h-4.39zM378.2 586.3h4.39v4.39h-4.39zM378.2 582.2h4.39v4.39h-4.39zM378.2 578.1h4.39v4.39h-4.39zM378.2 574.0h4.39v4.39h-4.39zM378.2 569.9h4.39v4.39h-4.39zM378.2 565.8h4.39v4.39h-4.39zM378.2 561.7h4.39v4.39h-4.39zM378.2 557.7h4.39v4.39h-4.39zM378.2 553.6h4.39v4.39h-4.39zM378.2 549.5h4.39v4.39h-4.39zM378.2 545.4h4.39v4.39h-4.39zM378.2 541.3h4.39v4.39h-4.39zM378.2 537.2h4.39v4.39h-4.39zM378.2 533.1h4.39v4.39h-4.39zM382.2 663.9h4.39v4.39h-4.39zM382.2 659.8h4.39v4.39h-4.39zM382.2 594.4h4.39v4.39h-4.39zM382.2 590.4h4.39v4.39h-4.39zM382.2 586.3h4.39v4.39h-4.39zM382.2 582.2h4.39v4.39h-4.39zM382.2 578.1h4.39v4.39h-4.39zM382.2 545.4h4.39v4.39h-4.39zM382.2 541.3h4.39v4.39h-4.39zM382.2 537.2h4.39v4.39h-4.39zM382.2 533.1h4.39v4.39h-4.39zM386.3 676.2h4.39v4.39h-4.39zM386.3 672.1h4.39v4.39h-4.39zM386.3 668.0h4.39v4.39h-4.39zM386.3 663.9h4.39v4.39h-4.39zM386.3 659.8h4.39v4.39h-4.39zM386.3 655.8h4.39v4.39h-4.39zM386.3 651.7h4.39v4.39h-4.39zM386.3 606.7h4.39v4.39h-4.39zM386.3 602.6h4.39v4.39h-4.39zM386.3 598.5h4.39v4.39h-4.39zM386.3 594.4h4.39v4.39h-4.39zM386.3 590.4h4.39v4.39h-4.39zM386.3 586.3h4.39v4.39h-4.39zM386.3 537.2h4.39v4.39h-4.39zM386.3 533.1h4.39v4.39h-4.39zM390.4 676.2h4.39v4.39h-4.39zM390.4 672.1h4.39v4.39h-4.39zM390.4 668.0h4.39v4.39h-4.39zM390.4 663.9h4.39v4.39h-4.39zM390.4 659.8h4.39v4.39h-4.39zM390.4 655.8h4.39v4.39h-4.39zM390.4 651.7h4.39v4.39h-4.39zM390.4 647.6h4.39v4.39h-4.39zM390.4 643.5h4.39v4.39h-4.39zM390.4 639.4h4.39v4.39h-4.39zM390.4 635.3h4.39v4.39h-4.39zM390.4 631.2h4.39v4.39h-4.39zM390.4 627.1h4.39v4.39h-4.39zM390.4 623.1h4.39v4.39h-4.39zM390.4 619.0h4.39v4.39h-4.39zM390.4 614.9h4.39v4.39h-4.39zM390.4 610.8h4.39v4.39h-4.39zM390.4 606.7h4.39v4.39h-4.39zM390.4 602.6h4.39v4.39h-4.39zM390.4 598.5h4.39v4.39h-4.39zM390.4 594.4h4.39v4.39h-4.39zM390.4 533.1h4.39v4.39h-4.39zM394.5 676.2h4.39v4.39h-4.39zM394.5 672.1h4.39v4.39h-4.39zM394.5 668.0h4.39v4.39h-4.39zM394.5 663.9h4.39v4.39h-4.39zM394.5 659.8h4.39v4.39h-4.39zM394.5 655.8h4.39v4.39h-4.39zM394.5 651.7h4.39v4.39h-4.39zM394.5 647.6h4.39v4.39h-4.39zM394.5 643.5h4.39v4.39h-4.39zM394.5 639.4h4.39v4.39h-4.39zM394.5 635.3h4.39v4.39h-4.39zM394.5 631.2h4.39v4.39h-4.39zM394.5 627.1h4.39v4.39h-4.39zM394.5 623.1h4.39v4.39h-4.39zM394.5 619.0h4.39v4.39h-4.39zM394.5 614.9h4.39v4.39h-4.39zM394.5 610.8h4.39v4.39h-4.39zM394.5 606.7h4.39v4.39h-4.39zM394.5 602.6h4.39v4.39h-4.39zM394.5 598.5h4.39v4.39h-4.39zM394.5 594.4h4.39v4.39h-4.39zM398.6 676.2h4.39v4.39h-4.39zM398.6 672.1h4.39v4.39h-4.39zM398.6 668.0h4.39v4.39h-4.39zM398.6 663.9h4.39v4.39h-4.39zM398.6 659.8h4.39v4.39h-4.39zM398.6 655.8h4.39v4.39h-4.39zM398.6 651.7h4.39v4.39h-4.39zM398.6 647.6h4.39v4.39h-4.39zM398.6 643.5h4.39v4.39h-4.39zM398.6 639.4h4.39v4.39h-4.39zM398.6 635.3h4.39v4.39h-4.39zM398.6 631.2h4.39v4.39h-4.39zM398.6 627.1h4.39v4.39h-4.39zM398.6 623.1h4.39v4.39h-4.39zM398.6 619.0h4.39v4.39h-4.39zM398.6 614.9h4.39v4.39h-4.39zM398.6 610.8h4.39v4.39h-4.39zM398.6 606.7h4.39v4.39h-4.39zM398.6 602.6h4.39v4.39h-4.39zM398.6 598.5h4.39v4.39h-4.39zM398.6 594.4h4.39v4.39h-4.39z"/>
<path fill="#355f8d" shape-rendering="crispEdges" d="M329.1 582.2h4.39v4.39h-4.39zM329.1 578.1h4.39v4.39h-4.39zM329.1 574.0h4.39v4.39h-4.39zM333.2 582.2h4.39v4.39h-4.39zM333.2 578.1h4.39v4.39h-4.39zM333.2 574.0h4.39v4.39h-4.39zM333.2 569.9h4.39v4.39h-4.39zM333.2 565.8h4.39v4.39h-4.39zM333.2 561.7h4.39v4.39h-4.39zM337.3 582.2h4.39v4.39h-4.39zM341.4 619.0h4.39v4.39h-4.39zM341.4 586.3h4.39v4.39h-4.39zM341.4 582.2h4.39v4.39h-4.39zM349.5 663.9h4.39v4.39h-4.39zM349.5 635.3h4.39v4.39h-4.39zM349.5 545.4h4.39v4.39h-4.39zM349.5 541.3h4.39v4.39h-4.39zM353.6 545.4h4.39v4.39h-4.39zM353.6 541.3h4.39v4.39h-4.39zM353.6 537.2h4.39v4.39h-4.39zM353.6 533.1h4.39v4.39h-4.39zM357.7 668.0h4.39v4.39h-4.39zM357.7 643.5h4.39v4.39h-4.39zM357.7 545.4h4.39v4.39h-4.39zM357.7 541.3h4.39v4.39h-4.39zM357.7 537.2h4.39v4.39h-4.39zM357.7 533.1h4.39v4.39h-4.39zM361.8 676.2h4.39v4.39h-4.39zM361.8 672.1h4.39v4.39h-4.39zM361.8 668.0h4.39v4.39h-4.39zM361.8 582.2h4.39v4.39h-4.39zM361.8 545.4h4.39v4.39h-4.39zM361.8 541.3h4.39v4.39h-4.39zM361.8 537.2h4.39v4.39h-4.39zM361.8 533.1h4.39v4.39h-4.39zM365.9 647.6h4.39v4.39h-4.39zM365.9 586.3h4.39v4.39h-4.39zM365.9 582.2h4.39v4.39h-4.39zM365.9 549.5h4.39v4.39h-4.39zM365.9 545.4h4.39v4.39h-4.39zM365.9 541.3h4.39v4.39h-4.39zM365.9 537.2h4.39v4.39h-4.39zM365.9 533.1h4.39v4.39h-4.39zM370.0 647.6h4.39v4.39h-4.39zM370.0 582.2h4.39v4.39h-4.39zM370.0 578.1h4.39v4.39h-4.39zM370.0 574.0h4.39v4.39h-4.39zM370.0 569.9h4.39v4.39h-4.39zM370.0 565.8h4.39v4.39h-4.39zM370.0 561.7h4.39v4.39h-4.39zM370.0 557.7h4.39v4.39h-4.39zM370.0 553.6h4.39v4.39h-4.39zM370.0 549.5h4.39v4.39h-4.39zM370.0 545.4h4.39v4.39h-4.39zM370.0 541.3h4.39v4.39h-4.39zM370.0 537.2h4.39v4.39h-4.39zM370.0 533.1h4.39v4.39h-4.39zM374.1 598.5h4.39v4.39h-4.39zM378.2 639.4h4.39v4.39h-4.39zM390.4 569.9h4.39v4.39h-4.39zM394.5 578.1h4.39v4.39h-4.39zM398.6 578.1h4.39v4.39h-4.39z"/>
<path fill="#44347e" shape-rendering="crispEdges" d="M333.2 602.6h4.39v4.39h-4.39zM333.2 598.5h4.39v4.39h-4.39zM333.2 594.4h4.39v4.39h-4.39zM337.3 623.1h4.39v4.39h-4.39zM337.3 619.0h4.39v4.39h-4.39zM341.4 631.2h4.39v4.39h-4.39zM345.5 639.4h4.39v4.39h-4.39zM349.5 643.5h4.39v4.39h-4.39zM353.6 647.6h4.39v4.39h-4.39zM357.7 659.8h4.39v4.39h-4.39zM357.7 651.7h4.39v4.39h-4.39zM361.8 659.8h4.39v4.39h-4.39zM365.9 655.8h4.39v4.39h-4.39zM370.0 663.9h4.39v4.39h-4.39zM370.0 655.8h4.39v4.39h-4.39zM374.1 668.0h4.39v4.39h-4.39zM374.1 663.9h4.39v4.39h-4.39zM374.1 655.8h4.39v4.39h-4.39zM374.1 590.4h4.39v4.39h-4.39zM374.1 574.0h4.39v4.39h-4.39zM374.1 569.9h4.39v4.39h-4.39zM374.1 565.8h4.39v4.39h-4.39zM378.2 676.2h4.39v4.39h-4.39zM378.2 672.1h4.39v4.39h-4.39zM378.2 668.0h4.39v4.39h-4.39zM378.2 651.7h4.39v4.39h-4.39zM378.2 598.5h4.39v4.39h-4.39zM382.2 647.6h4.39v4.39h-4.39zM382.2 643.5h4.39v4.39h-4.39zM382.2 606.7h4.39v4.39h-4.39zM386.3 635.3h4.39v4.39h-4.39zM386.3 631.2h4.39v4.39h-4.39zM386.3 627.1h4.39v4.39h-4.39zM386.3 623.1h4.39v4.39h-4.39zM386.3 578.1h4.39v4.39h-4.39zM386.3 574.0h4.39v4.39h-4.39zM390.4 582.2h4.39v4.39h-4.39zM394.5 586.3h4.39v4.39h-4.39zM398.6 586.3h4.39v4.39h-4.39z"/>
<path fill="#2a788e" shape-rendering="crispEdges" d="M337.3 578.1h4.39v4.39h-4.39zM341.4 610.8h4.39v4.39h-4.39zM341.4 606.7h4.39v4.39h-4.39zM341.4 602.6h4.39v4.39h-4.39zM341.4 598.5h4.39v4.39h-4.39zM341.4 594.4h4.39v4.39h-4.39zM345.5 623.1h4.39v4.39h-4.39zM345.5 586.3h4.39v4.39h-4.39zM345.5 545.4h4.39v4.39h-4.39zM349.5 676.2h4.39v4.39h-4.39zM349.5 672.1h4.39v4.39h-4.39zM349.5 668.0h4.39v4.39h-4.39zM349.5 631.2h4.39v4.39h-4.39zM349.5 533.1h4.39v4.39h-4.39zM361.8 643.5h4.39v4.39h-4.39zM361.8 586.3h4.39v4.39h-4.39zM365.9 643.5h4.39v4.39h-4.39zM365.9 590.4h4.39v4.39h-4.39zM365.9 578.1h4.39v4.39h-4.39zM365.9 553.6h4.39v4.39h-4.39zM370.0 643.5h4.39v4.39h-4.39zM374.1 639.4h4.39v4.39h-4.39zM374.1 602.6h4.39v4.39h-4.39zM378.2 631.2h4.39v4.39h-4.39zM378.2 627.1h4.39v4.39h-4.39zM378.2 623.1h4.39v4.39h-4.39zM378.2 619.0h4.39v4.39h-4.39zM394.5 569.9h4.39v4.39h-4.39zM398.6 574.0h4.39v4.39h-4.39z"/>
<path fill="#26848d" shape-rendering="crispEdges" d="M337.3 574.0h4.39v4.39h-4.39zM337.3 569.9h4.39v4.39h-4.39zM337.3 565.8h4.39v4.39h-4.39zM337.3 561.7h4.39v4.39h-4.39zM337.3 557.7h4.39v4.39h-4.39zM337.3 553.6h4.39v4.39h-4.39zM337.3 549.5h4.39v4.39h-4.39zM341.4 549.5h4.39v4.39h-4.39zM341.4 541.3h4.39v4.39h-4.39zM341.4 537.2h4.39v4.39h-4.39zM345.5 676.2h4.39v4.39h-4.39zM345.5 672.1h4.39v4.39h-4.39zM345.5 668.0h4.39v4.39h-4.39zM345.5 590.4h4.39v4.39h-4.39zM345.5 541.3h4.39v4.39h-4.39zM345.5 537.2h4.39v4.39h-4.39zM349.5 586.3h4.39v4.39h-4.39zM353.6 635.3h4.39v4.39h-4.39zM357.7 639.4h4.39v4.39h-4.39zM357.7 586.3h4.39v4.39h-4.39zM365.9 574.0h4.39v4.39h-4.39zM365.9 569.9h4.39v4.39h-4.39zM365.9 565.8h4.39v4.39h-4.39zM365.9 561.7h4.39v4.39h-4.39zM365.9 557.7h4.39v4.39h-4.39zM370.0 598.5h4.39v4.39h-4.39zM374.1 606.7h4.39v4.39h-4.39zM394.5 565.8h4.39v4.39h-4.39zM398.6 569.9h4.39v4.39h-4.39z"/>
<path fill="#229c88" shape-rendering="crispEdges" d="M341.4 574.0h4.39v4.39h-4.39zM341.4 569.9h4.39v4.39h-4.39zM341.4 565.8h4.39v4.39h-4.39zM341.4 561.7h4.39v4.39h-4.39zM341.4 557.7h4.39v4.39h-4.39zM345.5 614.9h4.39v4.39h-4.39zM345.5 594.4h4.39v4.39h-4.39zM361.8 574.0h4.39v4.39h-4.39zM361.8 569.9h4.39v4.39h-4.39zM361.8 565.8h4.39v4.39h-4.39zM361.8 561.7h4.39v4.39h-4.39zM361.8 557.7h4.39v4.39h-4.39zM365.9 639.4h4.39v4.39h-4.39zM365.9 594.4h4.39v4.39h-4.39zM374.1 631.2h4.39v4.39h-4.39zM374.1 610.8h4.39v4.39h-4.39z"/>
<path fill="#22a884" shape-rendering="crispEdges" d="M345.5 610.8h4.39v4.39h-4.39zM345.5 598.5h4.39v4.39h-4.39zM345.5 574.0h4.39v4.39h-4.39zM345.5 569.9h4.39v4.39h-4.39zM345.5 561.7h4.39v4.39h-4.39zM345.5 557.7h4.39v4.39h-4.39zM349.5 590.4h4.39v4.39h-4.39zM349.5 574.0h4.39v4.39h-4.39zM349.5 557.7h4.39v4.39h-4.39zM353.6 631.2h4.39v4.39h-4.39zM353.6 574.0h4.39v4.39h-4.39zM353.6 557.7h4.39v4.39h-4.39zM357.7 635.3h4.39v4.39h-4.39zM357.7 590.4h4.39v4.39h-4.39zM357.7 574.0h4.39v4.39h-4.39zM357.7 569.9h4.39v4.39h-4.39zM357.7 561.7h4.39v4.39h-4.39zM357.7 557.7h4.39v4.39h-4.39zM370.0 635.3h4.39v4.39h-4.39zM370.0 602.6h4.39v4.39h-4.39zM374.1 627.1h4.39v4.39h-4.39zM374.1 614.9h4.39v4.39h-4.39z"/>
<path fill="#33b47a" shape-rendering="crispEdges" d="M345.5 606.7h4.39v4.39h-4.39zM345.5 602.6h4.39v4.39h-4.39zM349.5 623.1h4.39v4.39h-4.39zM353.6 590.4h4.39v4.39h-4.39zM361.8 635.3h4.39v4.39h-4.39zM361.8 594.4h4.39v4.39h-4.39zM365.9 598.5h4.39v4.39h-4.39zM374.1 623.1h4.39v4.39h-4.39zM374.1 619.0h4.39v4.39h-4.39z"/>
<path fill="#44bf70" shape-rendering="crispEdges" d="M345.5 565.8h4.39v4.39h-4.39zM349.5 594.4h4.39v4.39h-4.39zM353.6 627.1h4.39v4.39h-4.39zM357.7 565.8h4.39v4.39h-4.39zM365.9 635.3h4.39v4.39h-4.39zM370.0 631.2h4.39v4.39h-4.39zM370.0 606.7h4.39v4.39h-4.39z"/>
<path fill="#5fc860" shape-rendering="crispEdges" d="M349.5 619.0h4.39v4.39h-4.39zM349.5 598.5h4.39v4.39h-4.39zM349.5 569.9h4.39v4.39h-4.39zM353.6 594.4h4.39v4.39h-4.39zM353.6 569.9h4.39v4.39h-4.39zM357.7 631.2h4.39v4.39h-4.39zM357.7 594.4h4.39v4.39h-4.39z"/>
<path fill="#7ad151" shape-rendering="crispEdges" d="M349.5 614.9h4.39v4.39h-4.39zM349.5 561.7h4.39v4.39h-4.39zM353.6 561.7h4.39v4.39h-4.39zM361.8 631.2h4.39v4.39h-4.39zM361.8 598.5h4.39v4.39h-4.39zM365.9 631.2h4.39v4.39h-4.39zM365.9 602.6h4.39v4.39h-4.39zM370.0 627.1h4.39v4.39h-4.39zM370.0 610.8h4.39v4.39h-4.39z"/>
<path fill="#9cd83c" shape-rendering="crispEdges" d="M349.5 610.8h4.39v4.39h-4.39zM349.5 606.7h4.39v4.39h-4.39zM349.5 602.6h4.39v4.39h-4.39zM349.5 565.8h4.39v4.39h-4.39zM353.6 623.1h4.39v4.39h-4.39zM353.6 565.8h4.39v4.39h-4.39zM370.0 623.1h4.39v4.39h-4.39zM370.0 619.0h4.39v4.39h-4.39zM370.0 614.9h4.39v4.39h-4.39z"/>
<path fill="#dde326" shape-rendering="crispEdges" d="M353.6 619.0h4.39v4.39h-4.39zM361.8 627.1h4.39v4.39h-4.39zM361.8 602.6h4.39v4.39h-4.39zM365.9 627.1h4.39v4.39h-4.39z"/>
<path fill="#fde725" shape-rendering="crispEdges" d="M353.6 614.9h4.39v4.39h-4.39zM353.6 610.8h4.39v4.39h-4.39zM353.6 606.7h4.39v4.39h-4.39zM353.6 602.6h4.39v4.39h-4.39zM357.7 623.1h4.39v4.39h-4.39zM357.7 619.0h4.39v4.39h-4.39zM357.7 614.9h4.39v4.39h-4.39zM357.7 610.8h4.39v4.39h-4.39zM357.7 606.7h4.39v4.39h-4.39zM357.7 602.6h4.39v4.39h-4.39zM361.8 623.1h4.39v4.39h-4.39zM361.8 619.0h4.39v4.39h-4.39zM361.8 614.9h4.39v4.39h-4.39zM361.8 610.8h4.39v4.39h-4.39zM361.8 606.7h4.39v4.39h-4.39zM365.9 623.1h4.39v4.39h-4.39zM365.9 619.0h4.39v4.39h-4.39zM365.9 614.9h4.39v4.39h-4.39zM365.9 610.8h4.39v4.39h-4.39z"/>
<path fill="#bddf26" shape-rendering="crispEdges" d="M353.6 598.5h4.39v4.39h-4.39zM357.7 627.1h4.39v4.39h-4.39zM357.7 598.5h4.39v4.39h-4.39zM365.9 606.7h4.39v4.39h-4.39z"/>
<polygon points="255.3,533.0 343.6,533 294.8,680 255.3,680.1" fill="#414487"/>
<polygon points="343.6,533 347.0,533 339.7,555 336.3,555" fill="#2a9a8a"/>
<polygon points="336.3,555 339.7,555 318.9,617.7 315.5,617.7" fill="#fde725"/>
<polygon points="315.5,617.7 318.9,617.7 310.5,643 307.1,643" fill="#5ec962"/>
<polygon points="307.1,643 310.5,643 298.2,680.1 294.8,680.1" fill="#35b779"/>
</g></svg>
<rect x="280.1" y="557.7" width="98.1" height="98.1" fill="none" stroke="#ff0000" stroke-width="1.1"/>
<text x="329.1" y="547.2" font-family="'Liberation Sans', sans-serif" font-size="11.02" fill="#ff0000" text-anchor="middle" textLength="7.8" lengthAdjust="spacingAndGlyphs" >N</text>
<text x="264.8" y="610.5" font-family="'Liberation Sans', sans-serif" font-size="11.02" fill="#ff0000" text-anchor="middle" textLength="6.6" lengthAdjust="spacingAndGlyphs" >E</text>
<path d="M292.2 606.7 H322.7 M336.3 606.7 H366.6 M329.1 570.5 V599.8 M329.1 614.7 V644.6" stroke="#ff0000" stroke-width="1.1"/>
<rect x="255.3" y="533.0" width="148.5" height="147.1" fill="none" stroke="#222" stroke-width="1"/>
<line x1="251.8" y1="672.1" x2="255.3" y2="672.1" stroke="#222" stroke-width="0.8"/>
<text x="247.8" y="675.9" font-family="'Liberation Sans', sans-serif" font-size="11.02" fill="#000" text-anchor="end" textLength="15.3" lengthAdjust="spacingAndGlyphs" >−4</text>
<line x1="263.7" y1="680.1" x2="263.7" y2="683.6" stroke="#222" stroke-width="0.8"/>
<text x="261.2" y="696.0" font-family="'Liberation Sans', sans-serif" font-size="11.02" fill="#000" text-anchor="middle" textLength="15.3" lengthAdjust="spacingAndGlyphs" >−4</text>
<line x1="251.8" y1="639.4" x2="255.3" y2="639.4" stroke="#222" stroke-width="0.8"/>
<text x="247.8" y="643.2" font-family="'Liberation Sans', sans-serif" font-size="11.02" fill="#000" text-anchor="end" textLength="15.3" lengthAdjust="spacingAndGlyphs" >−2</text>
<line x1="296.4" y1="680.1" x2="296.4" y2="683.6" stroke="#222" stroke-width="0.8"/>
<text x="293.9" y="696.0" font-family="'Liberation Sans', sans-serif" font-size="11.02" fill="#000" text-anchor="middle" textLength="15.3" lengthAdjust="spacingAndGlyphs" >−2</text>
<line x1="251.8" y1="606.7" x2="255.3" y2="606.7" stroke="#222" stroke-width="0.8"/>
<text x="247.8" y="610.5" font-family="'Liberation Sans', sans-serif" font-size="11.02" fill="#000" text-anchor="end" textLength="6.6" lengthAdjust="spacingAndGlyphs" >0</text>
<line x1="329.1" y1="680.1" x2="329.1" y2="683.6" stroke="#222" stroke-width="0.8"/>
<text x="329.1" y="696.0" font-family="'Liberation Sans', sans-serif" font-size="11.02" fill="#000" text-anchor="middle" textLength="6.6" lengthAdjust="spacingAndGlyphs" >0</text>
<line x1="251.8" y1="574.0" x2="255.3" y2="574.0" stroke="#222" stroke-width="0.8"/>
<text x="247.8" y="577.8" font-family="'Liberation Sans', sans-serif" font-size="11.02" fill="#000" text-anchor="end" textLength="6.6" lengthAdjust="spacingAndGlyphs" >2</text>
<line x1="361.8" y1="680.1" x2="361.8" y2="683.6" stroke="#222" stroke-width="0.8"/>
<text x="361.8" y="696.0" font-family="'Liberation Sans', sans-serif" font-size="11.02" fill="#000" text-anchor="middle" textLength="6.6" lengthAdjust="spacingAndGlyphs" >2</text>
<line x1="251.8" y1="541.3" x2="255.3" y2="541.3" stroke="#222" stroke-width="0.8"/>
<text x="247.8" y="545.1" font-family="'Liberation Sans', sans-serif" font-size="11.02" fill="#000" text-anchor="end" textLength="6.6" lengthAdjust="spacingAndGlyphs" >4</text>
<line x1="394.5" y1="680.1" x2="394.5" y2="683.6" stroke="#222" stroke-width="0.8"/>
<text x="394.5" y="696.0" font-family="'Liberation Sans', sans-serif" font-size="11.02" fill="#000" text-anchor="middle" textLength="6.6" lengthAdjust="spacingAndGlyphs" >4</text>
<text x="329.1" y="525.7" font-family="'Liberation Sans', sans-serif" font-size="13.36" fill="#000" text-anchor="middle" textLength="80.2" lengthAdjust="spacingAndGlyphs" >Lineflux Map</text>
<text x="329.1" y="706.4" font-family="'Liberation Sans', sans-serif" font-size="11.02" fill="#000" text-anchor="middle" textLength="97.8" lengthAdjust="spacingAndGlyphs" >s/b: 0.80 +/- 0.103</text>
<svg x="440.6" y="533.0" width="148.0" height="147.4" overflow="hidden"><g transform="translate(-440.6,-533.0)">
<rect x="440.6" y="533.0" width="148.0" height="147.4" fill="#fff" filter="url(#bg1)"/>
<radialGradient id="halo2"><stop offset="0" stop-color="#000"/><stop offset="0.64" stop-color="#000"/><stop offset="0.72" stop-color="#555"/><stop offset="0.85" stop-color="#aaa" stop-opacity="0.55"/><stop offset="1" stop-color="#ddd" stop-opacity="0"/></radialGradient>
<circle cx="495.4" cy="588" r="32" fill="url(#halo2)"/>
<ellipse cx="516" cy="675" rx="6" ry="8" fill="#888" opacity="0.6" filter="url(#blur2)"/>
</g></svg>
<rect x="465.7" y="557.7" width="98.1" height="98.1" fill="none" stroke="#ff0000" stroke-width="1.1"/>
<text x="514.7" y="547.2" font-family="'Liberation Sans', sans-serif" font-size="11.02" fill="#ff0000" text-anchor="middle" textLength="7.8" lengthAdjust="spacingAndGlyphs" >N</text>
<text x="450.4" y="610.5" font-family="'Liberation Sans', sans-serif" font-size="11.02" fill="#ff0000" text-anchor="middle" textLength="6.6" lengthAdjust="spacingAndGlyphs" >E</text>
<path d="M477 606.7 H507.4 M522.5 606.7 H551.9 M514.7 569.5 V599.5 M514.7 614.2 V643.6" stroke="#ff0000" stroke-width="1.1"/>
<ellipse cx="495.4" cy="588" rx="20.6" ry="20.3" fill="none" stroke="#e8b000" stroke-width="1.4"/>
<rect x="490" y="580.6" width="13.2" height="12.6" fill="none" stroke="#0000ff" stroke-width="1.3"/>
<rect x="440.6" y="533.0" width="148.0" height="147.4" fill="none" stroke="#222" stroke-width="1"/>
<line x1="437.1" y1="672.1" x2="440.6" y2="672.1" stroke="#222" stroke-width="0.8"/>
<text x="433.1" y="675.9" font-family="'Liberation Sans', sans-serif" font-size="11.02" fill="#000" text-anchor="end" textLength="15.3" lengthAdjust="spacingAndGlyphs" >−4</text>
<line x1="449.3" y1="680.4" x2="449.3" y2="683.9" stroke="#222" stroke-width="0.8"/>
<text x="446.8" y="696.0" font-family="'Liberation Sans', sans-serif" font-size="11.02" fill="#000" text-anchor="middle" textLength="15.3" lengthAdjust="spacingAndGlyphs" >−4</text>
<line x1="437.1" y1="639.4" x2="440.6" y2="639.4" stroke="#222" stroke-width="0.8"/>
<text x="433.1" y="643.2" font-family="'Liberation Sans', sans-serif" font-size="11.02" fill="#000" text-anchor="end" textLength="15.3" lengthAdjust="spacingAndGlyphs" >−2</text>
<line x1="482.0" y1="680.4" x2="482.0" y2="683.9" stroke="#222" stroke-width="0.8"/>
<text x="479.5" y="696.0" font-family="'Liberation Sans', sans-serif" font-size="11.02" fill="#000" text-anchor="middle" textLength="15.3" lengthAdjust="spacingAndGlyphs" >−2</text>
<line x1="437.1" y1="606.7" x2="440.6" y2="606.7" stroke="#222" stroke-width="0.8"/>
<text x="433.1" y="610.5" font-family="'Liberation Sans', sans-serif" font-size="11.02" fill="#000" text-anchor="end" textLength="6.6" lengthAdjust="spacingAndGlyphs" >0</text>
<line x1="514.7" y1="680.4" x2="514.7" y2="683.9" stroke="#222" stroke-width="0.8"/>
<text x="514.7" y="696.0" font-family="'Liberation Sans', sans-serif" font-size="11.02" fill="#000" text-anchor="middle" textLength="6.6" lengthAdjust="spacingAndGlyphs" >0</text>
<line x1="437.1" y1="574.0" x2="440.6" y2="574.0" stroke="#222" stroke-width="0.8"/>
<text x="433.1" y="577.8" font-family="'Liberation Sans', sans-serif" font-size="11.02" fill="#000" text-anchor="end" textLength="6.6" lengthAdjust="spacingAndGlyphs" >2</text>
<line x1="547.4" y1="680.4" x2="547.4" y2="683.9" stroke="#222" stroke-width="0.8"/>
<text x="547.4" y="696.0" font-family="'Liberation Sans', sans-serif" font-size="11.02" fill="#000" text-anchor="middle" textLength="6.6" lengthAdjust="spacingAndGlyphs" >2</text>
<line x1="437.1" y1="541.3" x2="440.6" y2="541.3" stroke="#222" stroke-width="0.8"/>
<text x="433.1" y="545.1" font-family="'Liberation Sans', sans-serif" font-size="11.02" fill="#000" text-anchor="end" textLength="6.6" lengthAdjust="spacingAndGlyphs" >4</text>
<line x1="580.1" y1="680.4" x2="580.1" y2="683.9" stroke="#222" stroke-width="0.8"/>
<text x="580.1" y="696.0" font-family="'Liberation Sans', sans-serif" font-size="11.02" fill="#000" text-anchor="middle" textLength="6.6" lengthAdjust="spacingAndGlyphs" >4</text>
<text x="514.7" y="525.7" font-family="'Liberation Sans', sans-serif" font-size="13.36" fill="#000" text-anchor="middle" textLength="73.3" lengthAdjust="spacingAndGlyphs" >HSC(26.2) r</text>
<text x="514.7" y="706.4" font-family="'Liberation Sans', sans-serif" font-size="11.02" fill="#000" text-anchor="middle" textLength="115.8" lengthAdjust="spacingAndGlyphs" >m:17.5  re:1.3"  s:1.7"</text>
<text x="514.7" y="718.2" font-family="'Liberation Sans', sans-serif" font-size="11.02" fill="#000" text-anchor="middle" textLength="100.2" lengthAdjust="spacingAndGlyphs" >EWr: 0, PLAE: 1000</text>
<text x="70.7" y="785.7" font-family="'Liberation Mono', monospace" font-size="13.6" fill="#000" text-anchor="start" textLength="77.2" lengthAdjust="spacingAndGlyphs">Separation</text>
<text x="70.7" y="800.4" font-family="'Liberation Mono', monospace" font-size="13.6" fill="#000" text-anchor="start" textLength="84.9" lengthAdjust="spacingAndGlyphs">Match score</text>
<text x="70.7" y="815.3" font-family="'Liberation Mono', monospace" font-size="13.6" fill="#000" text-anchor="start" textLength="54.0" lengthAdjust="spacingAndGlyphs">RA, Dec</text>
<text x="70.7" y="830.3" font-family="'Liberation Mono', monospace" font-size="13.6" fill="#000" text-anchor="start" textLength="46.3" lengthAdjust="spacingAndGlyphs">Spec z</text>
<text x="70.7" y="844.3" font-family="'Liberation Mono', monospace" font-size="13.6" fill="#000" text-anchor="start" textLength="54.0" lengthAdjust="spacingAndGlyphs">Photo z</text>
<text x="70.7" y="859.0" font-family="'Liberation Mono', monospace" font-size="13.6" fill="#000" text-anchor="start" textLength="115.8" lengthAdjust="spacingAndGlyphs">Est LyA rest-EW</text>
<text x="70.7" y="872.9" font-family="'Liberation Mono', monospace" font-size="13.6" fill="#000" text-anchor="start" textLength="23.2" lengthAdjust="spacingAndGlyphs">mag</text>
<text x="70.7" y="888.6" font-family="'Liberation Mono', monospace" font-size="13.6" fill="#000" text-anchor="start" textLength="100.4" lengthAdjust="spacingAndGlyphs">P(LAE)/P(OII)</text>
<text x="287.6" y="779.1" font-family="'Liberation Mono', monospace" font-size="13.6" fill="#0000ff" text-anchor="start" textLength="54.0" lengthAdjust="spacingAndGlyphs">1.6398"</text>
<text x="287.6" y="793.5" font-family="'Liberation Mono', monospace" font-size="13.6" fill="#0000ff" text-anchor="start" textLength="38.6" lengthAdjust="spacingAndGlyphs">1.000</text>
<text x="287.6" y="808.2" font-family="'Liberation Mono', monospace" font-size="13.6" fill="#0000ff" text-anchor="start" textLength="162.1" lengthAdjust="spacingAndGlyphs">206.176411, 50.997236</text>
<text x="287.6" y="822.9" font-family="'Liberation Mono', monospace" font-size="13.6" fill="#0000ff" text-anchor="start" textLength="23.2" lengthAdjust="spacingAndGlyphs">N/A</text>
<text x="287.6" y="837.6" font-family="'Liberation Mono', monospace" font-size="13.6" fill="#0000ff" text-anchor="start" textLength="23.2" lengthAdjust="spacingAndGlyphs">N/A</text>
<text x="287.6" y="854.0" font-family="'Liberation Mono', monospace" font-size="13.6" fill="#0000ff" text-anchor="start" textLength="92.6" lengthAdjust="spacingAndGlyphs">0.19(±0.07)Å</text>
<text x="287.6" y="869.9" font-family="'Liberation Mono', monospace" font-size="13.6" fill="#0000ff" text-anchor="start" textLength="146.7" lengthAdjust="spacingAndGlyphs">17.57(17.57,17.57)R</text>
<text x="287.6" y="886.4" font-family="'Liberation Sans', sans-serif" font-size="13.99" fill="#0000ff" text-anchor="start" textLength="31.5" lengthAdjust="spacingAndGlyphs" >1000</text>
<text x="324.5" y="881.4" font-family="'Liberation Sans', sans-serif" font-size="9.01" fill="#0000ff" text-anchor="start" textLength="21.0" lengthAdjust="spacingAndGlyphs" >1000</text>
<text x="324.5" y="890.4" font-family="'Liberation Sans', sans-serif" font-size="9.01" fill="#0000ff" text-anchor="start" textLength="21.0" lengthAdjust="spacingAndGlyphs" >1000</text>
<text x="939.2" y="821.1" font-family="'Liberation Mono', monospace" font-size="13.6" fill="#000" text-anchor="start" textLength="200.7" lengthAdjust="spacingAndGlyphs">Phot z plot not available.</text>
</svg></body></html>
